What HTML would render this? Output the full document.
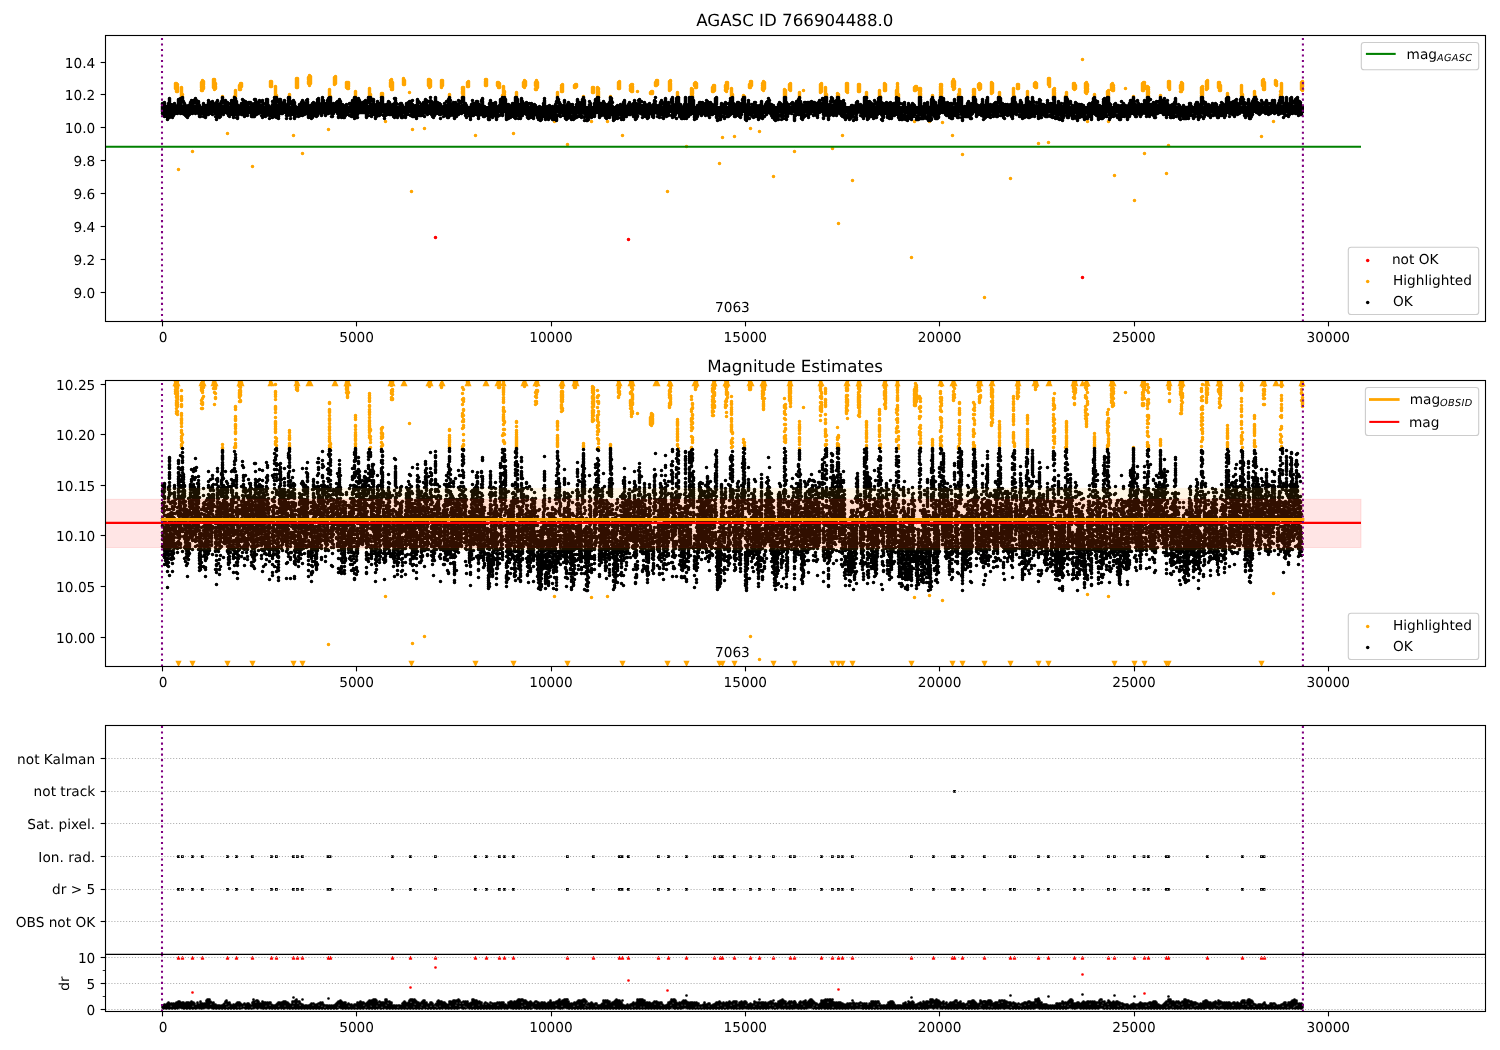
<!DOCTYPE html><html><head><meta charset="utf-8"><title>AGASC ID 766904488.0</title>
<style>html,body{margin:0;padding:0;background:#fff}svg{display:block}text{font-family:"DejaVu Sans","Liberation Sans",sans-serif;fill:#000;text-rendering:geometricPrecision}svg{will-change:transform}</style></head><body>
<svg width="1500" height="1050" viewBox="0 0 1500 1050">
<rect width="1500" height="1050" fill="#fff"/>
<defs>
<clipPath id="c1"><rect x="105.5" y="35.5" width="1380.0" height="286.0"/></clipPath>
<clipPath id="c2"><rect x="105.5" y="380.5" width="1380.0" height="286.0"/></clipPath>
<clipPath id="c3"><rect x="105.5" y="725.5" width="1380.0" height="228.9"/></clipPath>
<clipPath id="c4"><rect x="105.5" y="954.4" width="1380.0" height="57.1"/></clipPath>
</defs>
<g clip-path="url(#c1)">
<path transform="translate(.5 .5)" d="M435 237h0m193 2h0m454 38h0" stroke="#f00" stroke-width="3.6" stroke-linecap="round" fill="none"/>
<path transform="translate(.5 .5)" d="M175 83h0m0 1h0m0 1h0m0 1h0m0 1h0m0 1h0m1-5h0m0 1h0m0 1h0m0 1h0m0 1h0m0 1h0m0 1h0m0 1h0m0 1h0m1-7h0m0 2h0m0 1h0m0 1h0m0 1h0m0 1h0m0 1h0m1 78h0m3-82h0m0 1h0m0 1h0m0 1h0m0 1h0m0 1h0m0 1h0m0 1h0m0 1h0m0 1h0m1-2h0m0 2h0m10 55h0m9-69h0m0 1h0m0 1h0m0 1h0m0 1h0m0 1h0m0 2h0m0 1h0m1-10h0m0 1h0m0 1h0m0 1h0m0 1h0m0 1h0m0 1h0m0 1h0m0 1h0m0 1h0m0 1h0m1-9h0m0 1h0m0 1h0m0 1h0m0 2h0m0 1h0m0 1h0m10-9h0m0 1h0m0 1h0m0 1h0m0 1h0m0 1h0m0 1h0m0 1h0m0 1h0m1-8h0m0 1h0m0 1h0m0 1h0m0 1h0m0 1h0m0 1h0m0 1h0m0 1h0m0 1h0m0 1h0m1-6h0m0 1h0m0 2h0m0 1h0m0 1h0m7 8h0m0 1h0m5 36h0m7-37h0m1-6h0m0 1h0m0 1h0m0 1h0m0 1h0m0 1h0m0 1h0m4-11h0m0 1h0m0 1h0m0 1h0m0 1h0m1-6h0m0 1h0m0 1h0m0 1h0m0 1h0m0 1h0m0 1h0m1-6h0m0 1h0m0 1h0m0 1h0m11 80h0m18-85h0m0 1h0m0 1h0m0 1h0m0 1h0m0 1h0m1-5h0m0 1h0m0 1h0m0 1h0m0 1h0m0 1h0m4 0h0m0 1h0m0 1h0m0 1h0m0 1h0m0 1h0m0 1h0m0 1h0m0 1h0m0 1h0m0 1h0m1-1h0m0 1h0m13-2h0m0 1h0m0 1h0m4 39h0m3-57h0m0 1h0m0 1h0m0 1h0m0 1h0m0 1h0m0 1h0m0 1h0m0 1h0m0 1h0m1-9h0m0 1h0m0 1h0m0 1h0m0 1h0m0 1h0m0 1h0m0 1h0m0 1h0m0 1h0m5 66h0m6-76h0m0 1h0m0 1h0m0 2h0m0 1h0m0 1h0m1-8h0m0 1h0m0 1h0m0 1h0m0 1h0m0 1h0m0 1h0m0 1h0m0 1h0m0 2h0m1-9h0m0 1h0m0 1h0m0 1h0m0 1h0m0 1h0m0 1h0m0 1h0m18 46h0m1-40h0m0 1h0m0 1h0m0 1h0m0 1h0m0 1h0m0 1h0m0 1h0m1 0h0m4-19h0m0 1h0m0 1h0m0 1h0m0 1h0m0 1h0m0 1h0m0 1h0m1-8h0m0 1h0m0 1h0m0 1h0m0 1h0m0 1h0m0 1h0m0 1h0m11-1h0m0 1h0m0 1h0m0 1h0m0 1h0m0 1h0m1-5h0m0 1h0m0 1h0m0 1h0m0 1h0m0 1h0m0 1h0m1-6h0m0 1h0m0 1h0m0 1h0m0 1h0m0 2h0m7 3h0m0 1h0m0 1h0m0 1h0m0 1h0m0 1h0m14-8h0m0 1h0m0 1h0m0 1h0m0 1h0m0 1h0m0 1h0m0 1h0m0 2h0m1-3h0m0 1h0m0 1h0m0 1h0m11-4h0m0 1h0m0 1h0m0 1h0m1-3h0m0 1h0m0 1h0m0 1h0m3 25h0m5-41h0m0 2h0m0 1h0m0 1h0m0 1h0m0 1h0m1-7h0m0 1h0m0 1h0m0 1h0m0 1h0m0 1h0m0 1h0m0 1h0m0 1h0m0 1h0m0 1h0m1-7h0m0 1h0m0 1h0m0 1h0m0 1h0m0 1h0m0 1h0m0 1h0m11-11h0m0 1h0m0 1h0m0 1h0m0 1h0m0 1h0m0 1h0m1-4h0m0 1h0m0 1h0m0 1h0m0 1h0m5 8h0m2 99h0m1-62h0m12-1h0m4-49h0m0 1h0m0 1h0m0 1h0m0 1h0m0 1h0m0 1h0m1-6h0m0 1h0m0 1h0m0 1h0m0 1h0m0 1h0m0 1h0m0 1h0m0 1h0m1-7h0m0 1h0m0 1h0m0 1h0m0 1h0m0 1h0m0 1h0m11-6h0m0 1h0m0 1h0m0 1h0m0 1h0m0 1h0m0 1h0m0 1h0m1-7h0m0 1h0m0 1h0m0 1h0m0 1h0m0 1h0m7 9h0m0 1h0m0 1h0m0 1h0m13-10h0m0 1h0m0 1h0m0 2h0m0 1h0m0 1h0m0 3h0m0 1h0m1-10h0m0 1h0m0 1h0m0 1h0m0 1h0m0 1h0m0 1h0m0 1h0m0 1h0m0 1h0m4-14h0m0 1h0m0 1h0m0 1h0m0 1h0m1-5h0m0 1h0m0 1h0m0 1h0m0 1h0m0 1h0m7 49h0m10-56h0m0 2h0m0 1h0m0 1h0m0 1h0m0 1h0m1-6h0m0 1h0m0 1h0m0 1h0m0 1h0m0 1h0m0 1h0m11-3h0m0 1h0m0 1h0m0 1h0m1-3h0m0 1h0m0 1h0m0 1h0m0 1h0m0 1h0m1-4h0m0 1h0m0 1h0m0 1h0m0 1h0m3 8h0m1-9h0m0 1h0m0 1h0m0 1h0m0 1h0m0 1h0m0 1h0m0 1h0m0 1h0m0 1h0m0 1h0m1-5h0m0 1h0m0 2h0m0 2h0m9 37h0m3-41h0m0 1h0m0 1h0m0 1h0m0 1h0m7-14h0m0 1h0m0 1h0m0 1h0m0 1h0m1-6h0m0 1h0m0 1h0m0 1h0m0 1h0m0 1h0m0 1h0m0 1h0m1-6h0m0 1h0m0 1h0m0 1h0m0 1h0m10-3h0m0 1h0m0 1h0m0 1h0m0 3h0m0 1h0m1-9h0m0 1h0m0 1h0m0 1h0m0 1h0m0 1h0m0 1h0m0 1h0m0 1h0m0 1h0m1-7h0m0 1h0m0 1h0m0 1h0m0 1h0m0 1h0m17 34h0m3-29h0m0 1h0m0 1h0m0 1h0m0 1h0m4-11h0m0 2h0m0 1h0m0 1h0m0 1h0m0 1h0m1-7h0m0 1h0m0 1h0m0 1h0m0 1h0m0 1h0m0 1h0m0 1h0m5 53h0m7-59h0m0 1h0m0 1h0m1-3h0m0 1h0m0 1h0m0 1h0m1-3h0m0 1h0m0 1h0m7 10h0m8 25h0m1-34h0m0 1h0m0 1h0m0 1h0m0 1h0m0 1h0m1-5h0m0 1h0m0 1h0m0 1h0m0 1h0m0 1h0m4-5h0m0 1h0m0 1h0m0 1h0m0 1h0m0 1h0m0 1h0m0 1h0m0 1h0m0 2h0m1-9h0m0 1h0m0 2h0m0 1h0m0 1h0m0 1h0m0 1h0m0 1h0m0 1h0m9 24h0m3-25h0m0 1h0m8-15h0m0 1h0m0 1h0m0 1h0m0 1h0m0 1h0m0 1h0m1-7h0m0 1h0m0 1h0m0 1h0m0 1h0m0 1h0m0 1h0m0 1h0m3 47h0m8-50h0m0 1h0m0 2h0m0 1h0m0 1h0m1-6h0m0 1h0m0 1h0m0 1h0m0 1h0m0 1h0m0 1h0m0 1h0m1-7h0m0 2h0m0 1h0m0 1h0m0 1h0m0 1h0m0 1h0m5 0h0m13 1h0m0 1h0m1-2h0m0 1h0m0 1h0m1-2h0m0 1h0m0 1h0m3-11h0m0 1h0m0 1h0m0 1h0m1-5h0m0 1h0m0 1h0m0 1h0m0 1h0m0 1h0m1-5h0m0 1h0m0 1h0m0 1h0m0 1h0m10 107h0m2-110h0m0 1h0m0 1h0m0 1h0m0 1h0m0 1h0m0 1h0m0 1h0m0 1h0m0 1h0m1-10h0m0 1h0m0 2h0m0 1h0m0 1h0m0 1h0m0 1h0m0 1h0m0 1h0m7 3h0m0 1h0m0 1h0m0 1h0m0 1h0m1 1h0m8 49h0m5-58h0m0 1h0m0 1h0m0 1h0m0 1h0m0 1h0m0 1h0m0 1h0m0 1h0m0 1h0m1-8h0m0 1h0m0 1h0m0 1h0m0 1h0m0 2h0m0 1h0m2-13h0m0 1h0m0 1h0m1-3h0m0 1h0m0 1h0m0 1h0m0 1h0m0 1h0m1-4h0m0 1h0m0 1h0m0 1h0m0 1h0m16 0h0m0 1h0m0 1h0m0 1h0m0 1h0m1-6h0m0 1h0m0 1h0m0 1h0m0 1h0m0 1h0m0 1h0m1-6h0m0 1h0m0 1h0m0 1h0m0 1h0m0 1h0m5 73h0m3-26h0m3-52h0m0 1h0m0 1h0m0 2h0m0 1h0m1-8h0m0 1h0m0 1h0m0 1h0m0 1h0m0 1h0m0 1h0m0 1h0m0 1h0m0 1h0m1-9h0m0 1h0m0 1h0m0 1h0m0 1h0m0 1h0m0 1h0m4 0h0m0 1h0m0 1h0m0 1h0m0 1h0m0 1h0m0 1h0m0 1h0m0 1h0m1-2h0m0 1h0m0 1h0m2 40h0m9-41h0m0 1h0m1 0h0m5-12h0m0 1h0m0 1h0m0 1h0m1-6h0m0 1h0m0 1h0m0 1h0m0 1h0m0 1h0m0 1h0m0 41h0m1-47h0m0 1h0m0 1h0m0 1h0m0 1h0m8 46h0m3-48h0m0 2h0m0 2h0m0 1h0m0 1h0m1-8h0m0 1h0m0 2h0m0 1h0m0 1h0m0 1h0m0 1h0m0 1h0m0 1h0m1-8h0m0 1h0m0 1h0m0 1h0m0 1h0m0 1h0m0 1h0m9 88h0m11-87h0m0 1h0m0 1h0m0 1h0m0 1h0m0 1h0m0 1h0m0 1h0m1-6h0m0 1h0m0 1h0m0 1h0m0 1h0m0 1h0m0 1h0m4-12h0m0 1h0m0 1h0m0 1h0m0 1h0m0 1h0m1-6h0m0 1h0m0 1h0m0 1h0m0 1h0m0 1h0m0 1h0m0 1h0m4 61h0m5-59h0m0 1h0m0 1h0m0 1h0m0 1h0m0 1h0m4-7h0m17-6h0m0 1h0m0 1h0m0 1h0m0 1h0m0 1h0m0 1h0m0 1h0m0 1h0m1-9h0m0 1h0m0 1h0m0 1h0m0 1h0m0 1h0m0 1h0m0 1h0m0 1h0m4-4h0m0 1h0m0 1h0m0 1h0m0 1h0m0 1h0m0 1h0m0 1h0m0 1h0m0 1h0m1-2h0m0 1h0m0 1h0m6 52h0m5-55h0m0 2h0m0 1h0m1-2h0m0 1h0m0 1h0m0 127h0m4-88h0m4-52h0m0 1h0m0 1h0m0 1h0m0 1h0m0 1h0m0 1h0m0 1h0m0 1h0m1-8h0m0 1h0m0 1h0m0 1h0m0 1h0m0 1h0m0 1h0m0 1h0m0 2h0m5 88h0m6-96h0m0 1h0m0 1h0m0 1h0m0 1h0m0 1h0m0 1h0m0 1h0m1-7h0m0 1h0m0 1h0m0 1h0m0 1h0m0 1h0m0 1h0m0 1h0m7 1h0m0 1h0m0 1h0m0 1h0m0 1h0m13-6h0m0 1h0m0 1h0m0 1h0m0 1h0m0 1h0m0 1h0m1 0h0m0 1h0m4-14h0m0 1h0m0 1h0m0 1h0m0 1h0m0 1h0m0 1h0m0 1h0m1-6h0m0 1h0m0 1h0m0 1h0m0 1h0m0 1h0m0 1h0m11 0h0m0 1h0m0 1h0m0 1h0m0 1h0m0 1h0m1-12h0m0 1h0m0 2h0m0 1h0m0 1h0m0 1h0m0 1h0m0 1h0m0 1h0m0 1h0m1 1h0m0 1h0m0 1h0m0 1h0m13 160h0m3-170h0m0 1h0m0 1h0m0 1h0m0 31h0m1-35h0m0 1h0m0 1h0m0 1h0m0 1h0m1-4h0m0 1h0m0 1h0m0 1h0m3-1h0m0 2h0m0 1h0m0 1h0m0 1h0m0 1h0m0 2h0m1-8h0m0 1h0m0 1h0m0 1h0m0 2h0m0 1h0m0 1h0m0 1h0m9 25h0m3-26h0m0 1h0m8-12h0m0 2h0m0 1h0m0 1h0m0 1h0m0 1h0m0 2h0m0 2h0m0 1h0m0 1h0m1-12h0m0 1h0m0 1h0m0 2h0m0 1h0m0 1h0m0 1h0m0 1h0m0 1h0m0 2h0m0 1h0m1 26h0m10-41h0m0 1h0m0 1h0m0 1h0m0 2h0m0 49h0m1-56h0m0 1h0m0 1h0m0 1h0m0 1h0m0 1h0m0 1h0m0 1h0m0 1h0m0 1h0m0 1h0m1-8h0m0 1h0m0 1h0m0 1h0m0 1h0m0 2h0m0 1h0m4 6h0m0 2h0m0 1h0m1-8h0m0 1h0m0 1h0m0 1h0m0 1h0m0 1h0m0 1h0m0 1h0m0 1h0m3 57h0m11-65h0m0 1h0m0 1h0m0 1h0m0 2h0m0 1h0m0 1h0m0 1h0m1-8h0m0 1h0m0 1h0m0 1h0m0 1h0m0 1h0m0 2h0m4-12h0m0 1h0m0 1h0m0 1h0m1-4h0m0 1h0m0 1h0m0 1h0m0 1h0m0 1h0m0 1h0m1-5h0m0 1h0m0 1h0m0 1h0m0 1h0m4 209h0m7-215h0m0 1h0m0 1h0m0 1h0m0 1h0m0 1h0m0 1h0m0 1h0m0 1h0m0 1h0m0 1h0m0 1h0m1-10h0m0 1h0m0 1h0m0 1h0m0 1h0m0 1h0m0 1h0m0 1h0m0 1h0m0 1h0m7 0h0m0 1h0m0 1h0m0 1h0m0 1h0m11 82h0m3-90h0m0 1h0m0 1h0m0 1h0m0 1h0m0 1h0m0 1h0m0 1h0m0 1h0m1 0h0m3-12h0m0 1h0m0 1h0m0 1h0m0 1h0m1-4h0m0 1h0m0 1h0m0 1h0m0 1h0m9 3h0m0 1h0m0 1h0m0 1h0m0 1h0m0 1h0m0 1h0m7-14h0m0 1h0m0 1h0m0 1h0m1-4h0m0 1h0m0 1h0m0 1h0m0 1h0m0 1h0m1-4h0m0 1h0m0 1h0m0 1h0m0 1h0m2 56h0m10-65h0m0 1h0m0 1h0m0 1h0m0 1h0m0 1h0m0 1h0m0 58h0m1-64h0m0 1h0m0 1h0m0 1h0m0 1h0m0 1h0m0 1h0m0 1h0m0 1h0m4 3h0m0 1h0m0 1h0m0 1h0m0 1h0m0 1h0m0 1h0m0 1h0m1-8h0m0 2h0m0 2h0m0 1h0m0 1h0m0 1h0m0 1h0m11 0h0m1-4h0m0 1h0m0 1h0m0 1h0m0 1h0m0 1h0m7-14h0m0 1h0m0 1h0m0 1h0m0 1h0m0 1h0m1-5h0m0 1h0m0 1h0m0 1h0m0 1h0m0 1h0m0 1h0m1-4h0m0 1h0m0 1h0m0 1h0m7-29h0m3 24h0m0 1h0m0 1h0m0 1h0m0 1h0m0 1h0m0 2h0m0 1h0m0 1h0m1-10h0m0 1h0m0 1h0m0 1h0m0 1h0m0 1h0m0 1h0m0 1h0m0 1h0m0 1h0m0 1h0m0 1h0m1-9h0m0 1h0m0 1h0m0 2h0m0 1h0m0 2h0m0 30h0m7-27h0m0 1h0m0 1h0m13-5h0m0 1h0m0 1h0m0 1h0m0 2h0m0 1h0m1-7h0m0 2h0m0 1h0m0 1h0m0 1h0m0 1h0m0 25h0m3-37h0m0 1h0m0 1h0m0 1h0m0 1h0m0 1h0m1-6h0m0 1h0m0 1h0m0 1h0m0 1h0m0 1h0m0 1h0m0 1h0m1-5h0m0 2h0m0 1h0m0 1h0m0 1h0m1 85h0m11-87h0m8 8h0m1 104h0m8-117h0m0 1h0m0 1h0m0 1h0m0 1h0m0 1h0m0 1h0m0 1h0m1-8h0m0 1h0m0 1h0m0 1h0m0 1h0m0 1h0m0 1h0m0 1h0m0 1h0m1-8h0m0 2h0m0 1h0m0 1h0m0 1h0m0 1h0m0 65h0m3-67h0m0 1h0m0 2h0m0 1h0m0 1h0m0 1h0m0 1h0m0 1h0m0 1h0m0 1h0m1-9h0m0 2h0m0 2h0m0 1h0m0 1h0m0 2h0m0 1h0m12-1h0m0 1h0m6 77h0m2-92h0m0 1h0m0 1h0m0 1h0m0 1h0m0 1h0m0 1h0m0 58h0m1-64h0m0 1h0m0 1h0m0 1h0m0 1h0m0 1h0m0 1h0m0 1h0m0 1h0m11-4h0m0 1h0m0 1h0m0 1h0m0 3h0m1-9h0m0 1h0m0 2h0m0 1h0m0 1h0m0 1h0m0 1h0m0 1h0m0 1h0m1-8h0m0 1h0m0 1h0m0 1h0m0 1h0m0 1h0m0 1h0m19-2h0m0 1h0m0 1h0m0 1h0m0 1h0m0 1h0m0 1h0m0 2h0m0 1h0m1-10h0m0 2h0m0 1h0m0 1h0m0 1h0m0 1h0m0 1h0m0 1h0m0 1h0m4-14h0m0 1h0m0 1h0m0 1h0m0 1h0m0 1h0m0 1h0m0 1h0m0 1h0m1-9h0m0 1h0m0 1h0m0 1h0m0 1h0m0 1h0m0 1h0m0 1h0m0 1h0m11-6h0m0 1h0m0 1h0m0 1h0m0 1h0m0 1h0m1-5h0m0 1h0m0 1h0m0 1h0m0 1h0m0 1h0m0 1h0m0 1h0m0 1h0m1-5h0m0 1h0m0 1h0m0 1h0m0 1h0m0 1h0m7 3h0m0 1h0m0 1h0m0 1h0m14-11h0m0 1h0m0 1h0m0 1h0m0 1h0m0 1h0m0 1h0m0 1h0m0 1h0m0 2h0m0 1h0m1-2h0m0 1h0m0 1h0m12-5h0m0 1h0m0 1h0m0 1h0m0 1h0m0 1h0m1 0h0m6 40h0m1-56h0m0 1h0m0 1h0m0 1h0m0 1h0m0 1h0m1-6h0m0 1h0m0 1h0m0 1h0m0 1h0m0 1h0m0 1h0m0 2h0m0 1h0m0 1h0m1-7h0m0 1h0m0 1h0m0 1h0m0 1h0m0 1h0m0 1h0m0 1h0m9 32h0m2-41h0m0 1h0m0 1h0m0 1h0m0 1h0m1-3h0m0 2h0m0 1h0m0 1h0m4 6h0m0 3h0m0 1h0m0 1h0m1-13h0m0 1h0m0 1h0m0 1h0m0 1h0m0 1h0m0 1h0m0 1h0m0 1h0m0 1h0m0 1h0m0 2h0m0 1h0m20-14h0m0 1h0m0 1h0m0 1h0m0 1h0m0 1h0m0 1h0m0 1h0m1-8h0m0 1h0m0 1h0m0 1h0m0 1h0m0 1h0m0 2h0m0 1h0m0 1h0" stroke="#ffa500" stroke-width="3.6" stroke-linecap="round" fill="none"/>
<rect x="161.5" y="106" width="1142.5" height="7" fill="#000"/>
<path transform="translate(.5 .5)" d="M162 103h0m0 1h0m0 2h0m0 1h0m0 1h0m0 1h0m0 1h0m0 1h0m0 2h0m1-8h0m0 1h0m0 5h0m0 3h0m1-12h0m0 1h0m0 1h0m0 2h0m0 5h0m0 5h0m1-8h0m0 2h0m0 3h0m0 1h0m1-8h0m0 4h0m0 5h0m1-6h0m0 2h0m0 4h0m0 1h0m0 1h0m0 2h0m1-16h0m0 2h0m0 2h0m0 5h0m0 2h0m0 2h0m1-18h0m0 1h0m0 1h0m0 1h0m0 2h0m0 1h0m0 4h0m0 5h0m0 4h0m1-11h0m0 2h0m0 1h0m0 3h0m0 1h0m0 1h0m0 1h0m1-11h0m0 4h0m0 2h0m0 2h0m0 2h0m0 1h0m1-9h0m0 4h0m0 5h0m0 2h0m1-7h0m0 4h0m0 1h0m1-12h0m0 1h0m0 1h0m0 1h0m0 4h0m0 2h0m1-7h0m0 3h0m0 1h0m0 4h0m2-6h0m0 4h0m0 1h0m0 1h0m1-14h0m0 1h0m0 1h0m0 1h0m0 1h0m0 2h0m0 3h0m0 2h0m1-8h0m0 3h0m0 3h0m0 2h0m1-12h0m0 3h0m0 1h0m0 2h0m0 1h0m0 1h0m0 1h0m0 5h0m0 1h0m2-16h0m0 1h0m0 1h0m0 1h0m0 1h0m0 6h0m0 3h0m0 3h0m1-12h0m0 1h0m0 3h0m0 6h0m1-8h0m0 1h0m0 3h0m0 2h0m0 4h0m0 1h0m1-9h0m0 1h0m0 9h0m1-8h0m0 3h0m0 3h0m0 3h0m1-9h0m0 3h0m0 7h0m1-12h0m0 2h0m0 6h0m0 2h0m1-10h0m0 5h0m0 2h0m0 1h0m0 1h0m1-12h0m0 1h0m0 1h0m0 2h0m0 3h0m1-9h0m0 2h0m0 4h0m0 1h0m1-6h0m0 5h0m0 1h0m0 3h0m0 3h0m1-13h0m0 2h0m0 1h0m0 7h0m0 1h0m1-11h0m0 6h0m0 4h0m0 1h0m1-13h0m0 2h0m0 1h0m0 5h0m0 2h0m0 5h0m1-13h0m0 3h0m0 9h0m1-6h0m0 1h0m0 2h0m1-8h0m0 1h0m0 1h0m0 1h0m0 1h0m0 2h0m0 2h0m0 3h0m0 1h0m1-8h0m0 4h0m0 5h0m0 1h0m0 1h0m1-9h0m0 1h0m0 3h0m0 1h0m0 1h0m0 1h0m0 2h0m1-9h0m0 6h0m2-10h0m0 1h0m0 2h0m0 1h0m0 1h0m0 1h0m0 1h0m0 1h0m0 5h0m1-11h0m0 1h0m0 5h0m0 3h0m1 2h0m0 1h0m1-12h0m0 1h0m0 2h0m0 2h0m0 4h0m1-8h0m0 6h0m0 2h0m1-14h0m0 2h0m0 1h0m0 1h0m0 2h0m0 2h0m0 6h0m1-11h0m0 3h0m0 2h0m0 3h0m0 2h0m1-11h0m0 1h0m0 2h0m0 3h0m0 2h0m0 2h0m1-5h0m0 2h0m0 2h0m0 1h0m1-11h0m0 1h0m0 1h0m0 1h0m0 6h0m0 4h0m1-11h0m0 1h0m0 1h0m0 3h0m2-2h0m0 3h0m0 2h0m0 1h0m0 1h0m0 3h0m1-14h0m0 1h0m0 4h0m0 7h0m0 3h0m0 2h0m1-19h0m0 1h0m0 3h0m0 1h0m0 3h0m1-1h0m0 1h0m0 2h0m0 3h0m0 2h0m1-11h0m0 4h0m0 1h0m0 1h0m0 1h0m0 1h0m0 1h0m0 4h0m1-14h0m0 4h0m0 3h0m0 1h0m0 1h0m0 4h0m1-15h0m0 1h0m0 1h0m0 3h0m0 3h0m0 2h0m0 2h0m1-16h0m0 1h0m0 1h0m0 1h0m0 1h0m0 1h0m1 4h0m0 2h0m0 6h0m1-11h0m0 4h0m0 4h0m0 1h0m1-12h0m0 3h0m0 3h0m0 3h0m0 1h0m1-8h0m0 2h0m0 1h0m0 7h0m1-10h0m0 2h0m0 6h0m0 3h0m1-10h0m0 3h0m0 1h0m0 7h0m0 1h0m1-5h0m0 1h0m0 5h0m1-7h0m0 1h0m0 4h0m1-14h0m0 2h0m0 1h0m0 1h0m0 1h0m0 1h0m1-6h0m0 2h0m0 6h0m0 1h0m0 4h0m1-11h0m0 3h0m0 6h0m0 3h0m0 1h0m0 2h0m1-20h0m0 2h0m0 6h0m0 3h0m0 1h0m0 2h0m0 2h0m1-15h0m0 1h0m1 2h0m0 1h0m0 1h0m0 3h0m0 1h0m0 4h0m0 3h0m0 3h0m1-12h0m0 4h0m0 4h0m0 2h0m0 1h0m0 1h0m0 1h0m1-13h0m0 1h0m0 3h0m0 4h0m0 1h0m1-7h0m0 3h0m2-7h0m0 2h0m0 3h0m0 4h0m0 2h0m1-15h0m0 5h0m0 2h0m0 4h0m0 1h0m0 1h0m0 2h0m1-14h0m0 1h0m0 1h0m0 3h0m0 1h0m0 3h0m1-3h0m0 9h0m0 1h0m1-15h0m0 2h0m0 5h0m0 2h0m0 1h0m0 2h0m1-9h0m0 5h0m0 5h0m1-10h0m0 2h0m0 1h0m0 2h0m0 5h0m0 1h0m1-13h0m0 1h0m0 9h0m1-10h0m0 7h0m1-7h0m0 1h0m0 1h0m0 3h0m0 2h0m1-6h0m0 2h0m0 3h0m0 1h0m0 2h0m0 1h0m0 1h0m0 1h0m0 1h0m0 1h0m1-9h0m0 2h0m0 2h0m0 2h0m0 1h0m0 2h0m1-8h0m0 1h0m0 6h0m0 1h0m1-17h0m0 4h0m0 1h0m0 1h0m0 5h0m0 1h0m0 1h0m0 4h0m1-17h0m0 1h0m0 2h0m0 3h0m0 2h0m0 1h0m1 3h0m0 3h0m1-12h0m0 2h0m0 2h0m0 4h0m0 2h0m1-1h0m0 1h0m0 1h0m1-13h0m0 2h0m0 3h0m0 2h0m0 2h0m1-4h0m0 3h0m0 3h0m1-6h0m0 6h0m0 1h0m0 3h0m1-15h0m0 2h0m0 6h0m0 3h0m0 1h0m0 1h0m0 4h0m1-14h0m0 3h0m0 2h0m0 4h0m0 4h0m2-9h0m0 3h0m0 3h0m0 1h0m0 2h0m1-17h0m0 2h0m0 1h0m0 1h0m0 1h0m0 2h0m0 6h0m0 2h0m0 1h0m1-16h0m0 1h0m0 1h0m0 1h0m0 1h0m0 3h0m0 2h0m0 1h0m1-4h0m0 1h0m0 5h0m0 2h0m1-7h0m0 2h0m0 3h0m0 2h0m0 2h0m0 3h0m3-17h0m0 3h0m0 2h0m0 2h0m0 1h0m0 1h0m0 2h0m0 1h0m0 2h0m0 1h0m0 1h0m1-12h0m0 1h0m0 2h0m1-11h0m0 2h0m0 1h0m0 1h0m0 1h0m0 3h0m0 2h0m0 3h0m0 3h0m0 1h0m0 2h0m1-19h0m1 0h0m0 1h0m0 1h0m0 1h0m0 1h0m0 3h0m0 5h0m0 3h0m0 2h0m0 1h0m0 2h0m1-10h0m0 6h0m1-4h0m0 2h0m0 3h0m0 1h0m0 1h0m0 2h0m1-19h0m0 1h0m0 2h0m0 2h0m0 1h0m0 2h0m0 4h0m1-12h0m0 1h0m0 5h0m0 1h0m1-4h0m0 5h0m0 3h0m0 1h0m0 1h0m0 1h0m1-10h0m0 3h0m0 3h0m0 2h0m0 2h0m1-10h0m0 4h0m1-7h0m0 2h0m0 3h0m1-1h0m0 1h0m0 1h0m0 1h0m0 1h0m0 2h0m0 2h0m1-3h0m0 3h0m0 1h0m0 2h0m0 3h0m1-10h0m0 3h0m0 2h0m0 2h0m1-18h0m0 1h0m0 2h0m0 1h0m0 1h0m0 1h0m0 2h0m0 6h0m1-14h0m0 1h0m0 1h0m0 1h0m1 3h0m0 4h0m0 3h0m0 3h0m0 1h0m0 1h0m0 3h0m1-7h0m0 3h0m1-13h0m0 4h0m0 2h0m0 1h0m0 1h0m1-9h0m0 2h0m0 1h0m0 4h0m0 1h0m0 2h0m0 2h0m1-10h0m0 1h0m0 1h0m0 1h0m0 1h0m0 1h0m0 2h0m0 3h0m0 2h0m0 1h0m0 2h0m0 1h0m1-12h0m0 1h0m0 3h0m0 2h0m0 1h0m0 3h0m3-9h0m0 1h0m0 2h0m0 3h0m0 1h0m0 1h0m0 1h0m1-12h0m0 1h0m0 1h0m0 6h0m0 2h0m1-10h0m0 1h0m0 6h0m0 1h0m0 3h0m1-13h0m0 3h0m0 3h0m0 6h0m1-14h0m0 6h0m0 5h0m0 4h0m1-13h0m0 1h0m0 4h0m0 1h0m0 5h0m1-9h0m0 2h0m0 4h0m0 4h0m1-11h0m0 4h0m0 1h0m0 1h0m0 2h0m1-11h0m0 4h0m0 6h0m0 3h0m1-14h0m0 2h0m0 1h0m0 1h0m0 1h0m0 3h0m1 1h0m0 1h0m0 3h0m0 1h0m0 1h0m0 1h0m0 1h0m0 1h0m2-12h0m0 4h0m0 1h0m0 3h0m1-5h0m0 6h0m0 2h0m0 2h0m1-15h0m0 5h0m0 1h0m0 2h0m0 2h0m0 2h0m0 1h0m0 1h0m1-15h0m0 3h0m0 1h0m0 2h0m0 5h0m1-10h0m0 2h0m0 2h0m0 8h0m1-7h0m0 3h0m0 4h0m1-9h0m0 4h0m0 4h0m0 1h0m0 1h0m1-17h0m0 2h0m0 1h0m0 2h0m0 2h0m0 1h0m0 5h0m0 1h0m0 2h0m1-17h0m0 1h0m0 1h0m0 1h0m0 2h0m1 3h0m0 2h0m0 1h0m0 2h0m0 1h0m1-7h0m0 2h0m0 5h0m0 1h0m1-10h0m0 10h0m0 1h0m0 1h0m1-18h0m0 2h0m0 1h0m0 1h0m0 2h0m0 5h0m0 1h0m1-9h0m0 2h0m0 1h0m0 3h0m0 4h0m0 1h0m0 1h0m1-9h0m0 1h0m0 1h0m0 2h0m0 1h0m1-5h0m0 4h0m0 6h0m0 1h0m0 1h0m1-12h0m0 2h0m0 4h0m0 3h0m1-12h0m0 2h0m0 5h0m0 1h0m0 1h0m0 3h0m0 1h0m1-15h0m0 1h0m0 1h0m0 3h0m0 2h0m0 1h0m0 7h0m1-16h0m1 0h0m0 1h0m0 1h0m0 1h0m0 1h0m0 1h0m0 2h0m0 1h0m0 4h0m0 1h0m0 1h0m1-4h0m0 1h0m0 1h0m0 4h0m0 3h0m1-12h0m0 2h0m0 8h0m0 2h0m1-13h0m0 2h0m0 2h0m0 3h0m0 2h0m0 1h0m3-11h0m0 1h0m0 1h0m0 1h0m0 1h0m0 3h0m0 1h0m0 1h0m1-10h0m0 8h0m0 3h0m0 1h0m1-9h0m0 3h0m0 7h0m0 2h0m0 1h0m1-18h0m0 1h0m0 1h0m0 2h0m0 7h0m1-9h0m0 2h0m0 1h0m0 1h0m0 3h0m0 4h0m1-3h0m0 1h0m0 3h0m0 1h0m0 2h0m0 1h0m1-13h0m0 1h0m0 8h0m0 2h0m1-7h0m0 4h0m0 5h0m1-7h0m0 4h0m0 1h0m0 1h0m0 1h0m1-12h0m0 1h0m0 1h0m0 2h0m0 6h0m1-11h0m0 2h0m0 5h0m0 1h0m2-4h0m0 3h0m0 3h0m1-11h0m0 3h0m0 1h0m0 8h0m1-12h0m0 2h0m0 3h0m0 3h0m0 3h0m1-6h0m0 3h0m0 3h0m0 1h0m0 1h0m1-16h0m0 1h0m0 1h0m0 3h0m0 6h0m0 3h0m0 1h0m1-12h0m0 2h0m0 1h0m0 2h0m0 3h0m0 4h0m0 1h0m1-19h0m0 1h0m0 1h0m0 6h0m0 4h0m0 1h0m0 2h0m0 3h0m0 3h0m1-21h0m0 2h0m0 2h0m1 0h0m0 2h0m0 3h0m0 1h0m0 1h0m0 2h0m0 2h0m0 1h0m0 3h0m0 1h0m1-8h0m0 3h0m0 1h0m0 1h0m0 3h0m1-19h0m0 1h0m0 1h0m0 4h0m0 5h0m0 3h0m1-12h0m0 1h0m0 1h0m0 2h0m0 2h0m0 1h0m0 5h0m1-7h0m0 1h0m0 4h0m0 2h0m1-4h0m0 4h0m1-10h0m0 2h0m0 3h0m0 5h0m1-10h0m0 6h0m0 2h0m0 2h0m1-11h0m0 1h0m0 4h0m0 3h0m0 3h0m1-12h0m0 2h0m0 2h0m1 0h0m0 3h0m0 1h0m0 2h0m0 1h0m0 3h0m0 1h0m0 1h0m0 1h0m1-5h0m0 1h0m1-16h0m0 1h0m0 2h0m0 1h0m0 1h0m0 4h0m0 3h0m0 3h0m0 3h0m1-18h0m1 0h0m0 1h0m0 2h0m0 3h0m0 2h0m0 6h0m1-3h0m0 5h0m0 2h0m0 1h0m1-17h0m0 1h0m0 3h0m0 1h0m0 2h0m0 4h0m0 3h0m1-14h0m0 1h0m0 1h0m0 1h0m0 1h0m0 2h0m0 1h0m0 1h0m1-3h0m0 2h0m0 3h0m0 5h0m1-2h0m0 3h0m0 2h0m0 1h0m1-13h0m0 2h0m0 1h0m0 3h0m0 1h0m0 2h0m0 2h0m1-15h0m0 2h0m0 1h0m0 3h0m1-4h0m0 8h0m0 1h0m0 3h0m1-7h0m0 7h0m1-12h0m0 2h0m0 1h0m0 2h0m0 1h0m0 1h0m0 2h0m0 2h0m1-17h0m0 2h0m0 1h0m0 1h0m1-4h0m0 1h0m0 1h0m0 1h0m0 1h0m0 1h0m0 1h0m0 1h0m1 0h0m0 1h0m0 1h0m0 3h0m0 2h0m0 3h0m0 1h0m1-7h0m0 1h0m0 2h0m0 1h0m0 6h0m1-11h0m0 1h0m0 2h0m0 1h0m0 2h0m0 2h0m1-11h0m0 1h0m0 7h0m1-5h0m0 3h0m0 1h0m0 3h0m1-13h0m0 1h0m0 6h0m0 1h0m1-7h0m0 2h0m0 3h0m0 1h0m0 2h0m0 4h0m1-9h0m0 7h0m0 2h0m2-10h0m0 3h0m0 1h0m0 1h0m0 3h0m1-4h0m0 1h0m0 4h0m0 1h0m0 1h0m0 1h0m1-18h0m0 5h0m0 7h0m0 1h0m0 2h0m0 2h0m0 2h0m1-19h0m0 2h0m0 1h0m0 1h0m0 1h0m0 2h0m0 1h0m1-3h0m0 1h0m0 3h0m0 4h0m0 4h0m1-8h0m0 2h0m0 5h0m0 1h0m0 2h0m1-10h0m0 3h0m0 3h0m0 2h0m1-11h0m0 10h0m1-11h0m0 5h0m0 2h0m0 2h0m1-9h0m0 2h0m0 3h0m0 3h0m0 4h0m0 2h0m1-12h0m0 3h0m0 3h0m0 1h0m0 3h0m0 1h0m0 1h0m3-10h0m0 2h0m0 1h0m0 3h0m0 2h0m0 2h0m1-14h0m0 1h0m0 1h0m0 2h0m1-1h0m0 1h0m0 3h0m0 1h0m0 1h0m0 2h0m1-12h0m0 1h0m1-2h0m0 1h0m0 1h0m0 3h0m0 1h0m1-6h0m0 8h0m0 2h0m0 3h0m0 1h0m1-12h0m0 1h0m0 1h0m0 5h0m0 1h0m1-11h0m0 4h0m0 2h0m0 6h0m0 2h0m0 2h0m1-9h0m0 1h0m0 3h0m0 5h0m1-10h0m0 1h0m1-2h0m0 1h0m0 4h0m0 2h0m0 2h0m1-6h0m0 5h0m0 3h0m0 1h0m0 1h0m1-19h0m0 1h0m0 1h0m0 1h0m0 2h0m0 3h0m0 1h0m0 1h0m0 2h0m0 2h0m1-12h0m0 1h0m1 0h0m0 4h0m0 5h0m0 4h0m1-7h0m0 3h0m0 1h0m0 1h0m0 2h0m1-11h0m0 3h0m0 1h0m0 6h0m0 1h0m1-11h0m0 5h0m0 1h0m0 2h0m0 1h0m0 1h0m1-12h0m0 3h0m0 1h0m0 1h0m0 6h0m1-10h0m0 4h0m0 1h0m0 4h0m0 4h0m1-17h0m0 1h0m0 1h0m0 1h0m0 4h0m0 5h0m1-11h0m0 1h0m0 1h0m0 1h0m0 2h0m0 6h0m0 2h0m1-8h0m0 2h0m0 1h0m0 2h0m0 4h0m1-13h0m0 5h0m0 2h0m0 1h0m0 3h0m0 1h0m2-16h0m0 3h0m0 1h0m0 2h0m0 1h0m0 1h0m0 1h0m1-5h0m0 2h0m0 3h0m0 3h0m0 1h0m0 2h0m0 1h0m0 1h0m1-9h0m0 2h0m0 1h0m0 2h0m0 4h0m0 1h0m0 1h0m1-5h0m0 6h0m1-15h0m0 2h0m0 2h0m0 3h0m0 4h0m0 1h0m0 1h0m1-18h0m0 1h0m0 1h0m0 1h0m0 1h0m0 1h0m0 1h0m0 1h0m1-1h0m0 2h0m0 3h0m0 3h0m0 2h0m1-11h0m1 2h0m0 3h0m0 3h0m0 2h0m1-9h0m0 3h0m0 3h0m0 4h0m0 1h0m1-10h0m0 1h0m0 2h0m0 1h0m0 1h0m0 3h0m0 1h0m0 1h0m0 4h0m3-12h0m0 1h0m0 2h0m0 2h0m0 1h0m0 1h0m0 3h0m1-13h0m0 3h0m0 1h0m0 3h0m0 1h0m0 1h0m0 1h0m0 1h0m1-9h0m0 2h0m0 1h0m0 2h0m0 1h0m0 4h0m1-14h0m0 4h0m0 3h0m0 2h0m1 3h0m0 1h0m0 3h0m1-18h0m0 1h0m0 1h0m0 2h0m0 2h0m0 2h0m0 1h0m0 3h0m0 3h0m0 3h0m1-20h0m0 1h0m0 4h0m1-2h0m0 3h0m0 2h0m0 5h0m0 2h0m0 3h0m1-7h0m0 4h0m0 2h0m1-5h0m0 4h0m1-11h0m0 1h0m0 2h0m0 3h0m0 2h0m0 5h0m1-4h0m0 6h0m0 1h0m1-16h0m0 4h0m0 4h0m0 1h0m0 2h0m0 1h0m1-9h0m0 1h0m0 1h0m0 3h0m0 2h0m0 1h0m0 3h0m1-4h0m1-12h0m0 3h0m0 2h0m0 3h0m0 1h0m0 4h0m0 1h0m1-13h0m0 2h0m0 6h0m1-8h0m0 5h0m0 2h0m0 3h0m0 1h0m1-10h0m0 5h0m0 1h0m0 3h0m0 2h0m1-16h0m0 1h0m0 1h0m0 1h0m0 1h0m0 4h0m0 1h0m1-9h0m0 1h0m0 1h0m0 1h0m0 1h0m1 3h0m0 5h0m0 2h0m0 1h0m1-9h0m0 1h0m0 1h0m0 1h0m0 1h0m0 1h0m0 2h0m0 3h0m0 2h0m1-10h0m0 1h0m0 2h0m0 2h0m0 2h0m0 1h0m0 3h0m0 1h0m3-10h0m0 3h0m0 1h0m0 1h0m0 2h0m0 1h0m1-5h0m0 3h0m0 1h0m0 2h0m0 1h0m0 2h0m1-15h0m0 1h0m0 2h0m0 1h0m0 4h0m0 1h0m0 2h0m1-15h0m0 3h0m0 1h0m1 0h0m0 2h0m0 4h0m0 5h0m1-12h0m0 1h0m0 1h0m0 2h0m0 5h0m1-9h0m0 2h0m0 2h0m0 1h0m0 1h0m1-8h0m0 2h0m0 2h0m0 1h0m0 3h0m0 1h0m0 4h0m1-13h0m0 1h0m0 4h0m0 5h0m1-3h0m0 2h0m0 4h0m0 1h0m0 1h0m0 2h0m1-14h0m0 2h0m0 4h0m1-2h0m0 4h0m0 2h0m1-14h0m0 1h0m0 3h0m0 1h0m0 6h0m0 3h0m1-16h0m0 1h0m0 2h0m0 1h0m0 1h0m0 1h0m0 2h0m1 1h0m0 1h0m0 1h0m0 4h0m0 2h0m0 1h0m1-10h0m0 1h0m0 2h0m0 1h0m0 3h0m0 1h0m0 2h0m3-8h0m0 1h0m0 1h0m0 1h0m0 2h0m0 1h0m0 1h0m1-8h0m0 5h0m0 5h0m0 1h0m0 1h0m1-16h0m0 1h0m0 3h0m0 1h0m0 3h0m0 1h0m0 2h0m0 2h0m0 3h0m1-19h0m0 1h0m0 1h0m0 1h0m0 1h0m0 1h0m0 1h0m1-3h0m0 4h0m0 3h0m0 1h0m0 3h0m0 2h0m1-12h0m0 10h0m0 3h0m1-14h0m0 1h0m0 4h0m0 7h0m1-8h0m0 4h0m0 2h0m0 2h0m1-13h0m0 1h0m0 1h0m0 1h0m0 1h0m0 1h0m0 1h0m0 2h0m0 2h0m1-6h0m0 4h0m0 2h0m0 1h0m0 3h0m0 1h0m0 1h0m0 1h0m1-12h0m0 6h0m0 3h0m2-11h0m0 3h0m0 3h0m0 4h0m1-16h0m0 1h0m0 1h0m0 1h0m0 1h0m0 1h0m0 1h0m0 1h0m1-4h0m0 2h0m0 3h0m0 1h0m0 1h0m0 1h0m0 3h0m1-16h0m0 1h0m0 1h0m0 5h0m0 7h0m0 1h0m0 2h0m0 1h0m2-18h0m0 1h0m0 2h0m0 1h0m0 1h0m0 3h0m0 2h0m0 2h0m0 2h0m1-12h0m0 1h0m0 1h0m0 1h0m0 1h0m0 2h0m0 2h0m1-3h0m0 5h0m0 1h0m0 1h0m0 1h0m0 1h0m0 1h0m0 1h0m0 1h0m0 1h0m0 1h0m0 1h0m1-5h0m0 2h0m1-12h0m0 3h0m0 3h0m0 2h0m0 2h0m0 4h0m1-10h0m0 7h0m1-9h0m0 5h0m0 2h0m0 4h0m1-12h0m0 4h0m0 4h0m0 3h0m1-13h0m0 3h0m0 3h0m0 3h0m0 2h0m1-11h0m0 1h0m0 6h0m1-1h0m0 1h0m0 2h0m0 2h0m0 1h0m0 1h0m0 1h0m1-20h0m0 1h0m0 1h0m0 1h0m0 2h0m0 1h0m0 2h0m0 1h0m0 5h0m0 2h0m0 2h0m0 1h0m0 1h0m0 1h0m1-21h0m0 1h0m0 1h0m1 0h0m0 1h0m0 1h0m0 2h0m0 3h0m0 3h0m0 1h0m1-5h0m0 1h0m0 7h0m0 2h0m0 3h0m1-14h0m0 4h0m0 2h0m0 1h0m0 1h0m0 1h0m0 3h0m1-3h0m0 1h0m0 1h0m0 2h0m0 1h0m1-20h0m0 1h0m0 1h0m0 1h0m0 1h0m0 2h0m0 2h0m1-5h0m0 2h0m0 4h0m0 2h0m0 2h0m0 1h0m0 1h0m0 2h0m1-12h0m0 1h0m0 2h0m0 4h0m0 2h0m0 1h0m2-4h0m1-7h0m0 1h0m0 2h0m0 1h0m0 2h0m0 4h0m0 2h0m1-11h0m0 2h0m0 3h0m0 2h0m0 1h0m0 2h0m0 3h0m0 1h0m1-9h0m0 1h0m0 3h0m0 1h0m0 2h0m0 2h0m0 1h0m1-15h0m0 4h0m0 3h0m1 3h0m0 4h0m1-14h0m0 2h0m0 1h0m0 4h0m0 5h0m1-10h0m0 4h0m0 3h0m1-4h0m0 1h0m0 4h0m0 1h0m0 1h0m0 1h0m0 2h0m1-14h0m0 1h0m0 1h0m0 7h0m1-8h0m0 4h0m0 2h0m0 3h0m2-6h0m0 1h0m0 3h0m0 1h0m0 1h0m0 1h0m0 1h0m0 1h0m1-10h0m0 5h0m0 1h0m0 3h0m0 1h0m0 1h0m0 1h0m1-13h0m0 4h0m0 2h0m0 1h0m0 6h0m1 1h0m1-12h0m0 1h0m0 1h0m0 5h0m0 1h0m0 2h0m0 1h0m1-7h0m1-9h0m0 2h0m0 1h0m0 1h0m0 2h0m0 1h0m0 2h0m0 1h0m0 1h0m0 2h0m1-18h0m0 2h0m0 1h0m0 1h0m0 1h0m0 1h0m0 1h0m0 1h0m0 3h0m0 3h0m1 3h0m0 2h0m0 2h0m1-11h0m0 2h0m1-4h0m0 1h0m0 4h0m0 2h0m0 3h0m1-9h0m0 1h0m0 1h0m0 3h0m0 5h0m0 1h0m0 1h0m1-14h0m0 2h0m0 1h0m0 2h0m0 4h0m0 3h0m1-9h0m0 8h0m0 1h0m1-8h0m0 2h0m0 2h0m1-7h0m0 1h0m0 12h0m1-9h0m0 4h0m0 1h0m0 2h0m0 2h0m1-12h0m0 2h0m0 2h0m0 7h0m1-14h0m0 1h0m0 2h0m0 2h0m0 2h0m0 2h0m0 3h0m1-15h0m0 1h0m0 4h0m0 5h0m0 5h0m0 2h0m0 1h0m0 1h0m1-23h0m0 1h0m0 1h0m0 1h0m1-1h0m0 2h0m0 1h0m0 3h0m0 2h0m0 2h0m0 2h0m0 3h0m0 1h0m1-13h0m0 1h0m0 1h0m0 2h0m0 2h0m0 4h0m0 1h0m1-9h0m0 2h0m0 3h0m0 1h0m0 2h0m0 1h0m0 3h0m3-11h0m0 3h0m0 1h0m0 3h0m0 1h0m0 2h0m1-15h0m0 1h0m0 1h0m0 3h0m0 1h0m0 1h0m0 3h0m1-1h0m0 3h0m0 4h0m0 2h0m1-4h0m0 4h0m0 1h0m1-15h0m0 3h0m0 2h0m0 1h0m0 1h0m0 4h0m0 3h0m1-16h0m0 4h0m0 1h0m1-3h0m0 1h0m0 3h0m0 4h0m0 1h0m0 4h0m1-13h0m0 5h0m0 6h0m0 1h0m1-9h0m0 2h0m0 8h0m0 1h0m0 1h0m1-15h0m0 1h0m0 3h0m0 1h0m0 1h0m0 2h0m0 3h0m1-7h0m0 1h0m0 9h0m0 1h0m1-7h0m0 1h0m0 2h0m0 1h0m0 2h0m2-14h0m0 2h0m0 2h0m0 2h0m0 2h0m0 3h0m0 2h0m1-18h0m0 1h0m0 1h0m0 2h0m0 3h0m1-4h0m0 2h0m0 4h0m0 2h0m0 2h0m0 4h0m1-14h0m0 6h0m0 4h0m0 2h0m1-10h0m0 3h0m0 2h0m0 5h0m1-7h0m0 3h0m0 1h0m0 1h0m0 3h0m0 1h0m0 1h0m1-18h0m0 1h0m0 1h0m0 2h0m0 1h0m0 1h0m0 3h0m1-11h0m0 1h0m0 1h0m0 1h0m1 0h0m0 1h0m0 1h0m0 1h0m0 1h0m0 1h0m0 5h0m0 3h0m0 3h0m0 1h0m0 3h0m1-13h0m0 7h0m0 1h0m1-7h0m0 2h0m0 1h0m0 1h0m0 8h0m1-5h0m0 2h0m0 2h0m0 1h0m1-8h0m0 7h0m1-18h0m0 3h0m0 1h0m0 1h0m0 2h0m0 3h0m0 2h0m0 3h0m1-13h0m0 2h0m0 1h0m0 3h0m0 4h0m1-5h0m0 1h0m0 1h0m0 1h0m0 2h0m0 2h0m0 2h0m3-14h0m0 1h0m0 2h0m0 2h0m0 1h0m0 2h0m0 2h0m0 1h0m0 1h0m0 1h0m1-17h0m0 1h0m0 1h0m0 2h0m0 3h0m0 1h0m0 3h0m0 2h0m1-6h0m0 3h0m0 1h0m0 1h0m0 1h0m1-15h0m0 1h0m0 1h0m0 1h0m0 1h0m0 1h0m1-5h0m0 2h0m0 1h0m0 1h0m0 2h0m0 1h0m1 3h0m0 1h0m0 3h0m0 1h0m0 1h0m0 1h0m0 1h0m0 1h0m0 1h0m1-14h0m0 2h0m0 5h0m0 1h0m0 1h0m1-7h0m0 9h0m0 1h0m1-12h0m0 2h0m0 2h0m0 3h0m0 3h0m0 1h0m1-13h0m0 4h0m0 1h0m0 4h0m1-7h0m0 4h0m0 5h0m0 2h0m0 1h0m1-2h0m0 3h0m0 1h0m1-12h0m0 1h0m0 3h0m0 1h0m0 3h0m0 3h0m0 2h0m1-14h0m1 2h0m0 1h0m0 1h0m0 7h0m1-13h0m0 2h0m0 7h0m0 2h0m0 2h0m0 1h0m0 1h0m1-20h0m0 1h0m0 1h0m0 1h0m0 1h0m1-3h0m0 2h0m0 1h0m0 2h0m0 1h0m0 2h0m0 3h0m0 1h0m0 4h0m1-12h0m0 4h0m0 3h0m0 4h0m0 1h0m1-7h0m0 3h0m0 1h0m0 5h0m0 1h0m0 1h0m0 2h0m1-10h0m0 1h0m0 2h0m0 1h0m0 3h0m0 1h0m0 1h0m1-12h0m0 1h0m0 3h0m0 3h0m0 2h0m0 1h0m1-11h0m0 1h0m0 5h0m0 1h0m0 1h0m1-9h0m0 1h0m0 3h0m0 1h0m0 3h0m0 1h0m0 1h0m0 1h0m0 1h0m0 1h0m3-14h0m0 2h0m0 1h0m0 3h0m0 1h0m0 1h0m0 1h0m0 1h0m0 3h0m1-11h0m0 1h0m0 1h0m0 6h0m0 2h0m0 1h0m0 2h0m1-13h0m0 6h0m0 3h0m1-13h0m0 2h0m0 2h0m0 3h0m0 2h0m0 1h0m0 3h0m0 2h0m0 2h0m1-19h0m0 1h0m0 1h0m0 1h0m0 1h0m0 4h0m0 3h0m0 4h0m1-4h0m0 1h0m0 1h0m0 3h0m1-10h0m0 1h0m0 1h0m0 8h0m1-8h0m0 5h0m0 1h0m1-10h0m0 2h0m0 5h0m0 1h0m0 1h0m1-11h0m0 1h0m0 4h0m0 1h0m0 1h0m0 1h0m0 1h0m0 3h0m1-8h0m0 4h0m0 2h0m0 2h0m2-10h0m0 4h0m0 1h0m0 1h0m0 1h0m0 2h0m1-10h0m0 2h0m0 4h0m0 1h0m0 4h0m0 2h0m1-16h0m0 2h0m0 4h0m0 3h0m0 2h0m0 3h0m1-11h0m0 3h0m0 4h0m0 3h0m0 1h0m0 2h0m0 2h0m0 1h0m1-16h0m0 3h0m0 7h0m0 5h0m1-11h0m0 3h0m0 1h0m0 1h0m0 3h0m0 1h0m1-16h0m0 4h0m0 2h0m0 1h0m0 1h0m0 1h0m1-10h0m0 1h0m0 1h0m0 1h0m0 1h0m0 4h0m1-6h0m0 4h0m0 6h0m0 2h0m1-12h0m0 4h0m0 2h0m0 2h0m0 1h0m0 1h0m0 1h0m0 1h0m1-8h0m0 6h0m0 3h0m0 3h0m1-10h0m0 2h0m0 4h0m0 2h0m0 1h0m1-14h0m0 1h0m0 2h0m0 2h0m0 2h0m0 4h0m1-9h0m0 1h0m0 1h0m0 2h0m0 8h0m1-9h0m0 3h0m0 1h0m0 3h0m0 1h0m1-5h0m0 2h0m0 1h0m0 4h0m0 1h0m1-14h0m0 4h0m0 1h0m0 5h0m0 1h0m0 2h0m1-14h0m0 1h0m0 1h0m0 7h0m1-7h0m0 2h0m0 2h0m0 2h0m0 1h0m0 1h0m2-3h0m0 1h0m0 3h0m0 1h0m0 1h0m1-12h0m0 2h0m0 2h0m0 5h0m0 1h0m0 1h0m0 1h0m0 1h0m1-17h0m0 1h0m0 1h0m0 1h0m0 1h0m0 1h0m0 1h0m0 4h0m1-13h0m0 4h0m0 3h0m0 3h0m0 4h0m0 1h0m2-4h0m0 4h0m0 1h0m0 3h0m1-11h0m0 4h0m0 1h0m0 3h0m1-3h0m0 4h0m0 2h0m0 1h0m1-15h0m0 1h0m0 3h0m0 8h0m1-14h0m0 1h0m0 3h0m0 3h0m0 2h0m0 3h0m1-9h0m0 4h0m0 2h0m0 3h0m0 2h0m0 3h0m1-3h0m0 2h0m0 2h0m1-16h0m0 2h0m0 2h0m0 4h0m0 2h0m0 3h0m1-17h0m0 1h0m0 1h0m0 1h0m0 1h0m0 2h0m0 4h0m0 1h0m1 2h0m0 2h0m0 3h0m1-13h0m0 1h0m0 3h0m0 2h0m0 3h0m0 1h0m1-11h0m0 2h0m0 2h0m0 1h0m0 1h0m0 3h0m0 1h0m0 2h0m0 1h0m3-16h0m0 1h0m0 1h0m0 1h0m0 3h0m0 1h0m0 3h0m0 1h0m0 1h0m0 4h0m1-18h0m0 2h0m0 2h0m0 1h0m0 1h0m0 10h0m0 4h0m1-10h0m0 1h0m0 2h0m0 1h0m0 2h0m0 3h0m1-11h0m0 6h0m0 5h0m1-12h0m0 1h0m0 1h0m0 2h0m0 2h0m0 1h0m0 1h0m0 2h0m1-16h0m0 2h0m0 1h0m0 1h0m0 2h0m0 1h0m0 5h0m0 2h0m0 6h0m1-21h0m0 1h0m0 1h0m1-2h0m0 1h0m0 1h0m0 1h0m0 1h0m0 1h0m0 1h0m0 4h0m0 1h0m1-3h0m0 5h0m0 1h0m0 1h0m0 1h0m0 1h0m0 2h0m1-12h0m0 2h0m0 3h0m0 3h0m1-5h0m0 7h0m0 3h0m0 1h0m1-11h0m0 1h0m0 3h0m0 2h0m0 1h0m0 3h0m0 1h0m1-12h0m0 4h0m0 1h0m0 2h0m0 1h0m0 2h0m1-12h0m0 3h0m0 2h0m0 5h0m0 4h0m1-21h0m0 1h0m0 1h0m0 1h0m0 1h0m0 1h0m0 1h0m0 3h0m0 5h0m1-6h0m0 2h0m0 1h0m0 7h0m0 1h0m0 2h0m1-8h0m0 2h0m0 1h0m0 1h0m1-10h0m0 6h0m0 1h0m0 4h0m0 1h0m1-19h0m0 1h0m0 1h0m0 1h0m0 1h0m0 1h0m0 3h0m0 3h0m1-4h0m0 1h0m0 3h0m0 1h0m0 1h0m0 1h0m0 1h0m0 2h0m1-17h0m0 2h0m0 5h0m1-7h0m0 1h0m0 1h0m0 2h0m1-1h0m0 1h0m0 1h0m0 1h0m0 1h0m0 1h0m0 1h0m0 2h0m0 1h0m0 4h0m1-6h0m0 4h0m0 1h0m0 3h0m0 1h0m0 1h0m0 2h0m2-10h0m0 4h0m0 3h0m0 2h0m1-13h0m0 2h0m0 1h0m0 1h0m0 3h0m0 3h0m0 1h0m1-9h0m0 5h0m0 1h0m1-11h0m0 1h0m0 6h0m0 1h0m0 3h0m1-11h0m0 2h0m0 2h0m0 6h0m1-9h0m0 5h0m0 7h0m1-13h0m0 2h0m0 3h0m0 1h0m0 2h0m0 3h0m1-9h0m0 3h0m0 5h0m0 1h0m1-9h0m0 5h0m1-6h0m0 2h0m0 2h0m0 4h0m0 4h0m1-15h0m0 5h0m0 1h0m0 2h0m0 3h0m0 2h0m1-12h0m0 1h0m0 2h0m1-2h0m0 4h0m0 2h0m0 5h0m0 2h0m1-8h0m0 2h0m0 1h0m0 3h0m0 4h0m1-15h0m0 2h0m0 1h0m0 5h0m0 1h0m1-2h0m0 2h0m0 2h0m0 1h0m1-10h0m0 3h0m0 6h0m0 1h0m2-6h0m0 1h0m0 1h0m0 2h0m1-14h0m0 1h0m0 1h0m0 1h0m0 1h0m0 2h0m0 1h0m0 5h0m0 3h0m1-16h0m0 1h0m0 1h0m0 1h0m0 1h0m0 1h0m0 1h0m0 1h0m0 3h0m0 1h0m0 4h0m0 2h0m0 2h0m0 1h0m1-2h0m0 3h0m0 1h0m0 1h0m1-10h0m0 4h0m1-5h0m0 1h0m0 3h0m0 6h0m1-11h0m0 5h0m0 3h0m0 1h0m0 1h0m0 1h0m1-16h0m0 1h0m0 1h0m0 1h0m0 1h0m0 2h0m0 3h0m0 3h0m1-10h0m0 3h0m1-4h0m0 4h0m0 4h0m0 3h0m0 1h0m1-7h0m0 3h0m0 1h0m0 3h0m0 1h0m0 1h0m1-16h0m0 1h0m0 1h0m0 2h0m0 3h0m2-2h0m0 3h0m0 2h0m0 2h0m0 2h0m1-13h0m0 4h0m0 7h0m0 1h0m0 1h0m1-13h0m0 2h0m0 2h0m0 3h0m0 5h0m1-17h0m0 2h0m0 1h0m0 2h0m0 2h0m0 5h0m0 2h0m0 2h0m1-15h0m1-2h0m0 1h0m0 1h0m0 1h0m0 1h0m0 1h0m0 4h0m0 1h0m1-4h0m0 1h0m0 2h0m0 3h0m0 1h0m0 3h0m1-7h0m0 1h0m0 3h0m0 1h0m0 1h0m0 2h0m0 1h0m0 1h0m1-7h0m0 5h0m0 2h0m1-12h0m0 1h0m0 6h0m0 4h0m1-13h0m0 1h0m0 1h0m0 1h0m0 1h0m0 4h0m1-8h0m0 6h0m0 5h0m1-8h0m0 4h0m0 3h0m0 3h0m0 1h0m1-2h0m0 2h0m0 1h0m1-14h0m0 5h0m0 2h0m0 3h0m0 1h0m1-15h0m0 1h0m0 4h0m0 2h0m0 2h0m0 1h0m0 2h0m1-14h0m0 4h0m0 1h0m0 4h0m1-9h0m0 1h0m0 1h0m0 1h0m0 1h0m0 1h0m0 2h0m0 1h0m1-1h0m0 4h0m0 2h0m0 2h0m0 2h0m0 1h0m0 1h0m0 1h0m0 1h0m0 1h0m1-8h0m0 2h0m0 1h0m0 3h0m0 2h0m0 1h0m1-15h0m0 4h0m0 3h0m0 2h0m0 2h0m1-16h0m0 2h0m0 2h0m0 2h0m0 1h0m0 2h0m0 2h0m1 1h0m0 2h0m0 4h0m2-14h0m0 3h0m0 2h0m0 4h0m0 2h0m1-8h0m0 3h0m0 1h0m0 1h0m0 3h0m0 1h0m1-12h0m0 1h0m0 2h0m0 2h0m0 1h0m0 7h0m1-15h0m1 0h0m0 5h0m0 4h0m0 2h0m0 1h0m0 2h0m1-11h0m0 1h0m0 3h0m0 1h0m1 0h0m0 3h0m1-1h0m0 4h0m0 1h0m0 1h0m0 1h0m1-14h0m0 1h0m0 2h0m0 7h0m1-9h0m0 5h0m0 1h0m0 2h0m0 3h0m1-16h0m0 1h0m0 1h0m0 1h0m0 2h0m0 1h0m0 1h0m1-2h0m0 4h0m0 3h0m0 2h0m0 3h0m2-8h0m0 2h0m0 4h0m1-12h0m0 1h0m0 2h0m0 1h0m1-6h0m0 3h0m0 2h0m0 1h0m0 6h0m1-13h0m0 1h0m0 2h0m0 3h0m0 4h0m1-13h0m0 4h0m0 2h0m0 1h0m0 3h0m0 4h0m1-12h0m0 3h0m0 5h0m0 3h0m1-6h0m0 8h0m1-9h0m0 3h0m0 1h0m0 5h0m0 1h0m0 1h0m1-10h0m0 5h0m0 3h0m0 1h0m0 3h0m1-12h0m0 1h0m0 1h0m0 2h0m0 2h0m1-3h0m0 4h0m0 3h0m0 1h0m0 2h0m0 1h0m1-4h0m0 1h0m0 3h0m0 1h0m1-11h0m0 1h0m0 8h0m1-9h0m0 3h0m0 1h0m0 3h0m0 1h0m0 2h0m1-15h0m0 1h0m0 1h0m0 1h0m0 1h0m0 6h0m0 2h0m0 3h0m1-17h0m0 3h0m0 3h0m1-5h0m0 2h0m0 2h0m0 3h0m0 1h0m1 2h0m0 2h0m0 1h0m0 3h0m1-8h0m1-7h0m0 2h0m0 2h0m0 2h0m0 1h0m0 1h0m0 3h0m0 3h0m1-21h0m0 1h0m0 1h0m0 1h0m0 1h0m0 1h0m0 2h0m1-7h0m0 1h0m0 1h0m0 1h0m0 1h0m0 1h0m0 1h0m1-1h0m0 3h0m0 2h0m0 2h0m0 2h0m0 1h0m0 1h0m0 1h0m0 1h0m0 1h0m0 1h0m0 2h0m1-13h0m0 3h0m0 1h0m0 4h0m0 1h0m0 1h0m1-12h0m0 1h0m0 2h0m0 2h0m0 1h0m0 1h0m0 2h0m3-10h0m0 3h0m0 1h0m0 2h0m0 2h0m0 2h0m1-11h0m0 3h0m0 1h0m0 3h0m0 2h0m1-8h0m0 1h0m1 7h0m0 3h0m0 1h0m0 1h0m0 1h0m0 1h0m0 1h0m0 1h0m1-13h0m0 2h0m0 2h0m0 2h0m0 1h0m0 1h0m1-14h0m0 2h0m0 2h0m0 5h0m0 1h0m0 2h0m1-12h0m0 3h0m0 6h0m0 3h0m1-14h0m0 1h0m0 3h0m0 3h0m0 2h0m0 2h0m0 2h0m0 2h0m1-17h0m0 1h0m0 2h0m0 1h0m1 0h0m0 1h0m0 4h0m0 3h0m0 1h0m0 3h0m1-9h0m0 5h0m0 3h0m0 2h0m0 1h0m0 1h0m0 2h0m1 0h0m0 1h0m1-14h0m0 1h0m0 1h0m0 1h0m0 1h0m0 1h0m0 1h0m0 2h0m0 4h0m1-15h0m0 6h0m0 6h0m0 2h0m1-14h0m0 1h0m0 1h0m0 2h0m0 1h0m0 1h0m1-2h0m0 5h0m1-9h0m0 2h0m0 5h0m0 2h0m0 2h0m0 2h0m1-13h0m0 4h0m0 2h0m0 3h0m0 1h0m0 1h0m0 2h0m0 2h0m1-15h0m0 2h0m1 0h0m0 4h0m0 5h0m1-12h0m0 3h0m0 3h0m0 1h0m0 2h0m1-8h0m0 4h0m0 1h0m1-5h0m0 5h0m0 4h0m0 3h0m0 1h0m1-13h0m0 2h0m0 3h0m0 2h0m0 3h0m1-9h0m0 1h0m0 10h0m1-11h0m0 2h0m0 2h0m0 2h0m0 1h0m0 5h0m1-3h0m0 3h0m0 2h0m1-15h0m0 10h0m1-12h0m0 2h0m0 2h0m0 2h0m0 1h0m0 2h0m0 1h0m0 1h0m0 1h0m3-14h0m0 1h0m0 3h0m0 2h0m0 2h0m0 1h0m0 1h0m0 2h0m1-9h0m0 5h0m0 3h0m0 1h0m0 1h0m0 1h0m0 1h0m0 1h0m0 3h0m0 1h0m1-20h0m0 2h0m0 4h0m0 2h0m0 2h0m0 1h0m0 3h0m0 2h0m0 1h0m1-18h0m0 3h0m1-3h0m0 1h0m0 1h0m0 1h0m0 1h0m0 1h0m0 1h0m0 1h0m0 4h0m1-2h0m0 3h0m0 2h0m0 2h0m0 2h0m1-2h0m0 2h0m0 1h0m0 1h0m0 1h0m0 1h0m1-15h0m0 1h0m0 3h0m0 4h0m0 3h0m1-14h0m0 3h0m0 1h0m0 5h0m0 3h0m1-16h0m0 2h0m0 1h0m0 1h0m0 6h0m0 6h0m0 1h0m1-16h0m0 1h0m0 1h0m0 5h0m0 4h0m0 2h0m0 1h0m1-11h0m0 3h0m0 4h0m0 1h0m0 2h0m0 2h0m0 2h0m1-14h0m0 2h0m0 9h0m1-6h0m0 4h0m0 1h0m0 1h0m1-12h0m0 2h0m0 3h0m0 3h0m0 3h0m0 2h0m0 2h0m1-18h0m0 1h0m0 2h0m1-3h0m0 1h0m0 1h0m0 1h0m0 1h0m0 3h0m0 1h0m1-2h0m0 2h0m0 2h0m0 1h0m0 2h0m0 1h0m0 1h0m0 1h0m1-12h0m0 1h0m0 6h0m0 2h0m1-8h0m0 1h0m0 10h0m0 1h0m0 1h0m1-11h0m0 1h0m0 3h0m0 2h0m0 4h0m0 2h0m1-16h0m0 2h0m0 3h0m0 7h0m1-9h0m0 1h0m0 1h0m0 1h0m0 1h0m0 2h0m0 7h0m0 1h0m1-8h0m0 2h0m0 3h0m0 1h0m0 2h0m0 1h0m0 1h0m3-10h0m0 2h0m0 2h0m0 2h0m0 2h0m1-7h0m0 1h0m0 2h0m0 4h0m0 1h0m0 1h0m1-11h0m0 3h0m0 2h0m0 1h0m0 4h0m1-13h0m0 2h0m0 1h0m0 1h0m0 1h0m0 2h0m0 3h0m0 2h0m1-12h0m0 5h0m0 4h0m0 2h0m1-9h0m0 13h0m1-12h0m0 3h0m0 2h0m0 4h0m1-12h0m0 6h0m0 1h0m0 2h0m0 3h0m1-15h0m0 1h0m0 4h0m0 4h0m0 2h0m0 1h0m0 3h0m0 2h0m1-18h0m0 1h0m0 1h0m0 1h0m0 1h0m0 3h0m0 1h0m0 3h0m3-8h0m0 2h0m0 3h0m0 1h0m0 1h0m0 1h0m0 3h0m1-10h0m0 2h0m0 4h0m0 3h0m0 1h0m1-7h0m0 2h0m0 3h0m0 3h0m1-7h0m0 4h0m0 4h0m0 1h0m1-21h0m0 1h0m0 1h0m0 1h0m0 1h0m0 1h0m0 1h0m0 2h0m0 6h0m0 1h0m1-5h0m0 2h0m0 1h0m0 5h0m1-18h0m0 1h0m0 5h0m1-2h0m0 2h0m0 1h0m0 2h0m0 3h0m0 2h0m0 2h0m0 3h0m0 1h0m0 2h0m1-11h0m0 1h0m0 1h0m0 3h0m0 2h0m0 3h0m1-17h0m0 1h0m0 1h0m0 1h0m0 1h0m0 1h0m0 4h0m1-8h0m0 1h0m0 3h0m0 1h0m0 9h0m1-13h0m0 8h0m0 2h0m0 2h0m1-9h0m0 3h0m0 5h0m0 2h0m1-11h0m0 5h0m0 2h0m0 3h0m0 3h0m1-18h0m0 3h0m0 3h0m0 1h0m0 3h0m0 2h0m1-10h0m0 7h0m0 1h0m0 5h0m0 2h0m1-10h0m0 8h0m0 1h0m0 1h0m1-13h0m0 1h0m0 2h0m0 2h0m0 2h0m0 2h0m0 1h0m1-16h0m0 2h0m0 1h0m0 3h0m0 1h0m0 4h0m0 1h0m0 2h0m0 1h0m1-16h0m0 1h0m0 1h0m1-2h0m0 1h0m0 1h0m0 1h0m0 1h0m0 2h0m0 3h0m0 4h0m1-8h0m0 1h0m0 3h0m0 1h0m0 1h0m0 1h0m0 3h0m0 2h0m0 5h0m1-15h0m0 2h0m0 5h0m0 1h0m0 1h0m0 2h0m0 1h0m0 4h0m1-17h0m0 2h0m0 3h0m0 1h0m0 2h0m0 1h0m0 1h0m0 1h0m0 2h0m0 1h0m3-15h0m0 1h0m0 2h0m0 1h0m0 1h0m0 1h0m0 2h0m0 3h0m1-8h0m0 2h0m0 1h0m0 1h0m0 1h0m0 1h0m0 2h0m0 2h0m0 1h0m0 1h0m1-14h0m0 7h0m0 7h0m1-13h0m0 8h0m0 6h0m1-16h0m0 4h0m0 1h0m0 2h0m0 4h0m0 2h0m1 1h0m0 2h0m1-14h0m0 7h0m1-8h0m0 1h0m0 3h0m0 2h0m0 4h0m0 2h0m1-12h0m0 2h0m0 3h0m0 2h0m0 5h0m1-6h0m0 1h0m0 1h0m0 2h0m0 1h0m1-17h0m0 1h0m0 1h0m0 2h0m0 1h0m0 2h0m0 3h0m0 2h0m0 3h0m2-14h0m0 1h0m0 1h0m0 1h0m0 1h0m0 2h0m0 2h0m0 5h0m0 3h0m0 1h0m0 2h0m1-8h0m0 1h0m0 2h0m0 3h0m0 1h0m0 3h0m1-16h0m0 4h0m0 1h0m0 1h0m0 1h0m0 1h0m0 1h0m0 3h0m1-8h0m0 3h0m0 3h0m0 4h0m0 2h0m1-10h0m0 2h0m0 3h0m0 3h0m0 1h0m0 1h0m1-16h0m0 1h0m0 1h0m0 3h0m0 1h0m0 1h0m0 5h0m1-13h0m0 2h0m0 1h0m0 2h0m0 1h0m0 1h0m1-1h0m0 3h0m0 2h0m0 4h0m0 2h0m1-12h0m0 5h0m0 4h0m0 1h0m1-10h0m0 5h0m0 6h0m0 1h0m0 1h0m1-17h0m0 1h0m0 2h0m0 1h0m0 2h0m0 4h0m0 2h0m1-2h0m0 3h0m1-6h0m0 2h0m0 1h0m0 3h0m0 1h0m0 1h0m1-13h0m0 3h0m0 3h0m0 1h0m0 5h0m0 2h0m1-16h0m0 1h0m0 2h0m0 3h0m0 5h0m1-10h0m0 4h0m0 1h0m0 2h0m0 5h0m1-11h0m0 1h0m0 1h0m0 4h0m0 2h0m0 1h0m2-5h0m0 8h0m0 2h0m1-9h0m0 2h0m0 3h0m0 1h0m0 2h0m0 1h0m1-10h0m0 2h0m0 1h0m0 3h0m0 2h0m0 2h0m1-22h0m0 1h0m0 1h0m0 1h0m0 1h0m0 1h0m0 1h0m0 1h0m0 1h0m0 9h0m1-17h0m0 2h0m0 1h0m0 1h0m0 1h0m0 1h0m0 1h0m0 1h0m0 2h0m0 11h0m1-9h0m0 1h0m0 2h0m0 5h0m0 1h0m1-11h0m0 8h0m0 2h0m0 1h0m1-12h0m0 1h0m0 1h0m0 2h0m0 4h0m0 2h0m0 2h0m1-15h0m0 1h0m0 3h0m0 1h0m0 2h0m1-3h0m0 2h0m0 1h0m0 1h0m0 2h0m0 3h0m1-5h0m0 6h0m0 1h0m1-16h0m0 1h0m0 1h0m0 1h0m0 3h0m0 4h0m1-5h0m0 1h0m0 2h0m0 1h0m0 4h0m0 1h0m0 2h0m0 2h0m1-13h0m0 6h0m0 1h0m0 1h0m0 4h0m1-7h0m0 5h0m0 1h0m0 1h0m0 1h0m1-21h0m0 1h0m0 1h0m0 1h0m0 1h0m0 1h0m0 1h0m0 1h0m0 3h0m0 1h0m0 4h0m0 4h0m0 1h0m1-22h0m0 1h0m0 4h0m1-2h0m0 3h0m0 1h0m0 1h0m0 2h0m0 1h0m0 5h0m0 2h0m1-8h0m0 1h0m0 2h0m0 2h0m0 1h0m0 3h0m1-14h0m0 1h0m0 6h0m0 1h0m0 1h0m0 7h0m1-13h0m0 2h0m0 1h0m0 3h0m0 3h0m0 2h0m0 2h0m1-8h0m0 6h0m0 1h0m0 1h0m1-12h0m0 2h0m0 1h0m0 3h0m0 2h0m0 2h0m0 1h0m1-17h0m0 1h0m0 1h0m0 1h0m0 2h0m0 1h0m0 3h0m0 2h0m0 2h0m1-16h0m0 1h0m0 2h0m0 5h0m1-8h0m0 4h0m0 3h0m1 0h0m0 1h0m0 2h0m0 1h0m0 1h0m0 1h0m0 1h0m0 1h0m1-14h0m0 1h0m0 1h0m0 1h0m0 2h0m1-1h0m0 3h0m0 2h0m1 1h0m0 1h0m0 2h0m0 1h0m0 1h0m0 1h0m1-11h0m0 11h0m0 1h0m1-13h0m0 3h0m0 1h0m0 3h0m1-6h0m0 3h0m0 3h0m0 1h0m0 2h0m0 1h0m1-7h0m0 5h0m0 1h0m0 1h0m0 3h0m0 1h0m1-14h0m0 4h0m0 2h0m1-6h0m0 1h0m0 4h0m0 2h0m0 5h0m0 3h0m1-12h0m0 3h0m0 2h0m0 1h0m0 1h0m0 2h0m0 1h0m0 1h0m0 1h0m2-19h0m0 1h0m0 1h0m0 1h0m0 1h0m0 4h0m1-4h0m0 1h0m0 2h0m0 3h0m0 1h0m0 1h0m0 2h0m0 2h0m1-9h0m0 3h0m0 3h0m1-2h0m0 2h0m0 2h0m0 3h0m1-20h0m0 1h0m0 1h0m0 1h0m0 2h0m0 1h0m0 2h0m0 2h0m0 1h0m0 1h0m0 1h0m0 1h0m0 3h0m0 3h0m1-20h0m0 2h0m1 1h0m0 4h0m0 1h0m0 1h0m1-9h0m0 1h0m0 1h0m0 1h0m0 1h0m0 1h0m0 1h0m0 1h0m0 1h0m0 3h0m0 3h0m0 1h0m0 2h0m0 3h0m1-6h0m0 5h0m0 2h0m0 1h0m0 1h0m1-12h0m0 3h0m0 5h0m1-10h0m0 2h0m0 6h0m0 1h0m1-5h0m0 1h0m0 3h0m0 2h0m1-10h0m0 6h0m0 2h0m0 2h0m1-13h0m0 1h0m0 2h0m0 2h0m0 5h0m0 3h0m1-15h0m0 2h0m0 3h0m0 1h0m0 2h0m0 4h0m0 3h0m1-9h0m0 1h0m0 3h0m0 2h0m0 1h0m1-9h0m0 3h0m0 1h0m0 4h0m0 3h0m0 2h0m1-15h0m0 1h0m0 4h0m0 5h0m0 1h0m0 4h0m1-11h0m0 3h0m0 1h0m0 1h0m0 1h0m1-16h0m0 1h0m0 1h0m0 1h0m0 2h0m0 1h0m1-6h0m0 2h0m0 1h0m0 2h0m0 1h0m0 2h0m1-6h0m0 1h0m0 1h0m0 1h0m0 1h0m0 1h0m0 1h0m0 1h0m0 1h0m0 1h0m1-4h0m0 5h0m0 1h0m0 1h0m0 1h0m0 1h0m0 2h0m0 1h0m1-11h0m0 7h0m1-7h0m0 2h0m0 1h0m0 2h0m0 4h0m2-5h0m0 4h0m0 1h0m1-10h0m0 1h0m0 1h0m0 5h0m0 3h0m0 1h0m1-16h0m0 2h0m0 1h0m0 1h0m0 3h0m0 5h0m0 4h0m1-7h0m0 5h0m0 3h0m0 3h0m1-14h0m0 2h0m0 1h0m0 1h0m0 2h0m0 7h0m1-5h0m0 1h0m0 3h0m1-17h0m0 1h0m0 1h0m0 1h0m0 1h0m0 3h0m0 3h0m0 2h0m0 1h0m0 1h0m0 1h0m1-18h0m0 1h0m0 1h0m0 1h0m0 1h0m0 1h0m0 1h0m0 3h0m1 0h0m0 1h0m0 1h0m0 1h0m0 2h0m0 2h0m0 1h0m0 2h0m1-11h0m0 1h0m0 1h0m0 1h0m0 4h0m0 2h0m1-10h0m0 1h0m0 2h0m0 2h0m0 2h0m0 3h0m0 3h0m3-13h0m0 2h0m0 2h0m0 2h0m0 3h0m0 2h0m0 1h0m1-13h0m0 6h0m0 1h0m0 1h0m0 4h0m1-13h0m0 3h0m0 2h0m0 7h0m1-10h0m0 8h0m0 2h0m0 1h0m0 1h0m1-14h0m0 3h0m0 2h0m0 3h0m0 2h0m0 2h0m0 2h0m1-19h0m0 1h0m0 1h0m0 1h0m0 7h0m0 3h0m0 5h0m1-18h0m0 1h0m0 1h0m0 1h0m1-2h0m0 1h0m0 1h0m0 1h0m0 2h0m0 1h0m0 8h0m0 3h0m1-9h0m0 1h0m0 2h0m1-6h0m0 1h0m0 8h0m0 1h0m1-9h0m0 3h0m0 4h0m0 1h0m0 3h0m0 1h0m0 1h0m1-10h0m0 1h0m0 1h0m0 5h0m0 4h0m1-14h0m0 1h0m0 2h0m0 2h0m0 2h0m0 1h0m1-7h0m0 3h0m1-4h0m0 7h0m0 1h0m0 1h0m0 2h0m1-10h0m0 2h0m0 3h0m1 0h0m0 4h0m1-10h0m0 2h0m0 2h0m0 1h0m0 4h0m1-7h0m0 1h0m0 9h0m1-18h0m0 1h0m0 1h0m0 1h0m0 1h0m0 2h0m0 5h0m0 3h0m0 1h0m0 1h0m0 1h0m0 1h0m0 2h0m1-21h0m1 0h0m0 1h0m0 1h0m0 1h0m0 3h0m0 2h0m0 2h0m0 4h0m0 2h0m1-11h0m0 2h0m0 4h0m0 3h0m0 2h0m1-9h0m0 1h0m0 1h0m0 1h0m0 1h0m0 1h0m0 3h0m0 1h0m0 1h0m3-10h0m0 3h0m0 2h0m0 2h0m0 3h0m0 2h0m1-16h0m0 1h0m0 1h0m0 2h0m0 1h0m0 2h0m0 4h0m1-9h0m0 1h0m0 1h0m0 1h0m0 10h0m1-6h0m0 3h0m0 2h0m0 1h0m0 2h0m0 1h0m1-11h0m0 1h0m0 4h0m1-7h0m0 4h0m0 6h0m0 1h0m0 1h0m1-10h0m0 5h0m0 2h0m0 2h0m1-18h0m0 1h0m0 1h0m0 1h0m0 1h0m0 1h0m0 1h0m0 1h0m0 4h0m0 1h0m0 6h0m1-19h0m0 1h0m0 1h0m1 2h0m0 2h0m0 1h0m0 3h0m0 1h0m0 4h0m0 2h0m0 3h0m1-6h0m0 3h0m0 3h0m1-15h0m0 2h0m0 3h0m0 3h0m1-5h0m0 1h0m0 6h0m0 3h0m0 1h0m1-19h0m0 1h0m0 1h0m0 1h0m0 2h0m0 2h0m0 2h0m1-5h0m0 3h0m0 4h0m0 2h0m0 2h0m0 2h0m1-9h0m0 7h0m0 2h0m0 2h0m2-14h0m0 3h0m0 3h0m0 2h0m0 3h0m1-4h0m0 3h0m1-6h0m0 5h0m0 3h0m0 2h0m0 1h0m0 1h0m1-19h0m0 1h0m0 1h0m0 1h0m0 1h0m0 1h0m1-4h0m0 3h0m0 5h0m0 1h0m0 3h0m0 2h0m0 3h0m1-11h0m0 1h0m0 2h0m0 4h0m0 1h0m0 3h0m1-13h0m0 1h0m0 4h0m0 2h0m0 2h0m1-9h0m0 7h0m1-6h0m0 3h0m0 6h0m0 1h0m1-10h0m0 1h0m0 4h0m0 3h0m0 1h0m0 2h0m1-9h0m0 1h0m0 1h0m0 2h0m0 2h0m0 1h0m0 2h0m1-16h0m0 2h0m0 2h0m0 1h0m0 2h0m0 2h0m0 1h0m0 2h0m0 3h0m0 1h0m3-13h0m0 2h0m0 2h0m0 1h0m0 3h0m0 3h0m0 1h0m0 1h0m1-10h0m0 2h0m0 1h0m0 1h0m0 2h0m0 1h0m0 1h0m0 2h0m1-13h0m0 3h0m0 1h0m0 3h0m0 1h0m0 1h0m0 2h0m0 1h0m0 2h0m1-20h0m0 1h0m0 1h0m0 3h0m0 1h0m1-6h0m0 1h0m0 1h0m0 1h0m0 1h0m0 1h0m0 1h0m0 1h0m0 1h0m1 3h0m0 1h0m0 3h0m0 1h0m0 3h0m0 1h0m0 1h0m1-7h0m0 4h0m0 1h0m0 1h0m1-12h0m0 5h0m0 2h0m0 3h0m0 2h0m0 1h0m1-17h0m0 1h0m0 1h0m0 3h0m0 1h0m0 3h0m0 1h0m1-6h0m0 4h0m0 5h0m0 4h0m0 1h0m1-13h0m0 3h0m0 2h0m0 3h0m0 1h0m1-12h0m0 9h0m0 1h0m1-7h0m0 10h0m0 2h0m0 1h0m0 1h0m1-13h0m0 2h0m0 1h0m0 4h0m0 3h0m1-14h0m0 2h0m0 4h0m0 3h0m0 3h0m1-18h0m0 1h0m0 1h0m0 1h0m0 1h0m0 3h0m0 2h0m0 2h0m1-11h0m0 1h0m0 1h0m1 0h0m0 2h0m0 1h0m0 1h0m0 4h0m0 4h0m0 1h0m0 1h0m0 1h0m0 1h0m0 2h0m1-12h0m0 1h0m0 3h0m0 3h0m0 5h0m1-14h0m0 7h0m0 4h0m0 1h0m1-14h0m0 1h0m0 1h0m0 4h0m1 1h0m0 4h0m0 1h0m1-8h0m0 1h0m0 2h0m0 2h0m0 3h0m0 1h0m0 1h0m0 2h0m0 1h0m1-4h0m0 4h0m2-16h0m0 1h0m0 1h0m0 2h0m0 1h0m0 1h0m0 3h0m0 1h0m0 4h0m1-13h0m0 1h0m0 3h0m0 1h0m0 1h0m0 2h0m0 5h0m0 2h0m1-7h0m0 3h0m0 1h0m0 3h0m0 2h0m1-16h0m0 12h0m1-12h0m0 2h0m0 1h0m0 2h0m0 1h0m0 3h0m0 4h0m1-6h0m0 5h0m1-12h0m0 11h0m0 1h0m1-10h0m0 1h0m0 2h0m0 1h0m0 2h0m0 1h0m0 2h0m0 1h0m1-11h0m0 1h0m0 2h0m0 1h0m0 2h0m0 1h0m0 1h0m1-3h0m0 3h0m0 5h0m0 1h0m1-6h0m0 3h0m0 2h0m2-11h0m0 1h0m0 1h0m0 1h0m0 1h0m0 1h0m0 5h0m0 1h0m1-14h0m0 1h0m0 1h0m0 4h0m0 5h0m1-12h0m0 3h0m0 2h0m0 3h0m0 1h0m1-8h0m0 5h0m0 3h0m0 4h0m1-8h0m0 3h0m0 2h0m0 1h0m0 2h0m0 1h0m0 1h0m0 1h0m1-17h0m0 4h0m0 4h0m0 1h0m1-13h0m0 1h0m0 1h0m0 1h0m0 1h0m0 2h0m0 1h0m0 2h0m0 6h0m1-16h0m0 1h0m0 1h0m0 1h0m0 1h0m1-1h0m0 1h0m0 1h0m0 1h0m0 7h0m0 2h0m0 2h0m1-8h0m0 1h0m0 1h0m0 1h0m0 1h0m0 3h0m0 1h0m0 1h0m1-14h0m0 1h0m0 3h0m0 1h0m0 3h0m1-2h0m0 4h0m0 1h0m0 3h0m0 1h0m0 1h0m0 1h0m0 1h0m1-14h0m0 8h0m0 3h0m1-9h0m0 3h0m0 3h0m1-7h0m0 7h0m0 1h0m0 4h0m1-9h0m0 7h0m0 2h0m1-19h0m0 2h0m0 1h0m0 1h0m0 2h0m0 1h0m0 3h0m0 3h0m0 2h0m0 3h0m1-19h0m0 1h0m0 6h0m0 4h0m0 4h0m0 2h0m1-13h0m0 7h0m0 1h0m0 2h0m0 1h0m1-8h0m0 3h0m0 1h0m0 3h0m0 3h0m0 1h0m1-19h0m0 2h0m0 1h0m0 1h0m0 2h0m1-6h0m0 1h0m0 1h0m0 1h0m0 1h0m0 2h0m1 0h0m0 1h0m0 1h0m0 1h0m0 1h0m0 3h0m0 1h0m0 1h0m0 2h0m0 3h0m0 2h0m1-15h0m0 1h0m0 1h0m0 1h0m0 1h0m0 3h0m0 6h0m1-6h0m0 3h0m2-7h0m0 1h0m0 4h0m0 2h0m0 1h0m0 1h0m1-12h0m0 2h0m0 1h0m0 3h0m1-7h0m0 1h0m0 3h0m0 5h0m0 3h0m1-8h0m0 8h0m1-10h0m0 5h0m0 5h0m0 1h0m0 1h0m1-12h0m0 2h0m0 5h0m1-1h0m0 6h0m0 2h0m1-12h0m0 1h0m0 3h0m0 3h0m0 2h0m0 3h0m1-18h0m0 4h0m0 2h0m0 9h0m1-11h0m0 5h0m0 3h0m0 3h0m1-13h0m0 2h0m0 4h0m1-2h0m0 3h0m0 4h0m0 2h0m1-11h0m0 1h0m0 5h0m1-3h0m0 1h0m0 3h0m0 3h0m1-9h0m0 8h0m0 4h0m0 1h0m1-14h0m0 2h0m0 3h0m0 4h0m0 2h0m1-13h0m0 3h0m0 3h0m0 2h0m0 2h0m0 2h0m0 1h0m1-16h0m0 1h0m0 1h0m0 3h0m0 4h0m1-9h0m0 1h0m0 7h0m0 1h0m0 4h0m1-12h0m0 3h0m0 2h0m0 6h0m1-15h0m0 1h0m0 1h0m0 4h0m1-2h0m0 8h0m0 5h0m1-10h0m0 2h0m0 3h0m0 2h0m0 1h0m0 1h0m0 1h0m0 2h0m1-3h0m0 3h0m1-16h0m0 1h0m0 3h0m0 3h0m1-4h0m0 7h0m0 3h0m1-7h0m0 1h0m0 3h0m0 1h0m0 3h0m1-7h0m0 3h0m0 4h0m0 1h0m0 1h0m1-12h0m0 1h0m0 2h0m0 2h0m0 3h0m0 1h0m0 1h0m1-8h0m0 3h0m0 3h0m0 1h0m2-13h0m0 1h0m0 2h0m0 1h0m0 1h0m0 1h0m0 4h0m1-7h0m0 1h0m0 1h0m0 1h0m0 1h0m0 5h0m0 1h0m1-10h0m0 1h0m0 3h0m0 1h0m0 2h0m0 1h0m0 1h0m0 1h0m0 1h0m0 2h0m1-19h0m0 1h0m0 1h0m0 2h0m1-4h0m0 1h0m0 2h0m0 1h0m0 3h0m0 1h0m1-1h0m0 2h0m0 2h0m0 3h0m0 1h0m0 1h0m0 2h0m0 1h0m1-17h0m0 5h0m0 4h0m0 1h0m0 2h0m0 1h0m0 1h0m1-9h0m0 1h0m0 2h0m0 5h0m0 1h0m1-2h0m0 3h0m1-12h0m0 1h0m0 4h0m0 3h0m0 5h0m1-9h0m0 4h0m0 1h0m0 2h0m0 1h0m0 1h0m0 2h0m1-14h0m0 4h0m0 2h0m0 4h0m0 1h0m0 3h0m1-16h0m0 3h0m0 1h0m0 4h0m0 1h0m1-4h0m0 7h0m1-12h0m0 3h0m0 2h0m0 2h0m0 2h0m0 1h0m0 1h0m1-11h0m0 4h0m0 2h0m0 2h0m0 3h0m1-15h0m0 1h0m0 1h0m0 2h0m1-1h0m0 3h0m0 1h0m0 5h0m0 2h0m0 1h0m1-12h0m0 4h0m0 3h0m0 4h0m1-10h0m0 5h0m0 1h0m0 3h0m0 1h0m0 1h0m0 2h0m1-16h0m0 3h0m0 4h0m0 2h0m0 5h0m1-11h0m0 2h0m0 1h0m0 5h0m0 2h0m0 3h0m1-8h0m0 5h0m0 3h0m0 2h0m0 1h0m1-17h0m0 3h0m0 1h0m0 1h0m0 3h0m0 2h0m0 2h0m0 2h0m3-9h0m0 1h0m0 1h0m0 3h0m0 2h0m0 2h0m0 1h0m0 2h0m1-11h0m0 2h0m0 1h0m0 1h0m0 2h0m0 2h0m0 1h0m0 2h0m1-13h0m0 3h0m0 1h0m0 1h0m0 4h0m1-8h0m0 7h0m0 1h0m0 2h0m0 2h0m1-15h0m0 1h0m0 1h0m0 3h0m0 2h0m0 6h0m1-17h0m0 1h0m0 1h0m0 1h0m0 1h0m0 2h0m0 3h0m1 0h0m0 2h0m0 1h0m0 2h0m0 3h0m0 1h0m1-5h0m0 1h0m0 1h0m0 1h0m0 1h0m1-11h0m0 10h0m1-9h0m0 1h0m0 2h0m0 1h0m0 1h0m0 1h0m0 5h0m0 2h0m1-9h0m0 1h0m0 3h0m0 1h0m0 5h0m2-7h0m0 1h0m0 3h0m1-11h0m0 1h0m0 1h0m0 1h0m0 1h0m0 3h0m0 6h0m1-3h0m0 3h0m1-11h0m0 1h0m0 1h0m0 5h0m0 2h0m0 2h0m1-11h0m0 2h0m0 3h0m0 1h0m0 1h0m0 2h0m0 2h0m1-11h0m0 3h0m0 6h0m1-7h0m0 2h0m0 2h0m0 2h0m0 2h0m0 1h0m1-15h0m0 2h0m0 2h0m0 1h0m0 2h0m0 1h0m0 4h0m1-12h0m0 1h0m0 1h0m0 4h0m0 2h0m0 3h0m1-8h0m0 1h0m0 4h0m0 3h0m0 1h0m1-8h0m1 1h0m0 3h0m0 3h0m0 3h0m0 1h0m1-3h0m1-11h0m0 1h0m0 4h0m0 2h0m0 2h0m0 3h0m1-14h0m0 1h0m0 1h0m0 2h0m0 5h0m1-9h0m0 1h0m0 1h0m0 4h0m1 5h0m0 1h0m0 2h0m0 2h0m0 1h0m1-13h0m0 4h0m0 7h0m1-13h0m0 2h0m0 1h0m0 3h0m0 2h0m0 3h0m0 1h0m1-19h0m0 1h0m0 1h0m0 1h0m0 1h0m0 1h0m0 1h0m1-6h0m0 1h0m0 1h0m0 1h0m0 4h0m1-3h0m0 1h0m0 5h0m0 1h0m0 3h0m0 2h0m0 3h0m0 1h0m0 1h0m1-11h0m0 1h0m0 4h0m0 2h0m0 2h0m1-14h0m0 1h0m0 1h0m0 2h0m0 3h0m0 3h0m0 2h0m3-10h0m0 1h0m0 2h0m0 2h0m0 1h0m0 1h0m0 2h0m0 2h0m1-6h0m0 2h0m0 1h0m0 1h0m0 1h0m1-6h0m0 6h0m0 2h0m0 1h0m1-12h0m0 1h0m1-3h0m0 6h0m0 2h0m0 3h0m1-6h0m0 4h0m0 1h0m0 2h0m1-11h0m0 3h0m0 7h0m1-11h0m0 2h0m0 1h0m0 1h0m0 3h0m0 2h0m1-8h0m0 1h0m0 1h0m0 3h0m0 6h0m1-7h0m0 4h0m0 2h0m0 2h0m0 1h0m1-7h0m0 2h0m0 2h0m0 2h0m0 1h0m2-12h0m0 2h0m0 7h0m1-12h0m0 8h0m0 2h0m0 2h0m0 1h0m1-12h0m0 1h0m0 3h0m0 4h0m0 2h0m1-7h0m0 3h0m0 6h0m1-10h0m0 4h0m0 4h0m0 3h0m0 1h0m1-13h0m0 4h0m0 3h0m0 1h0m0 1h0m0 1h0m0 1h0m1-17h0m0 1h0m0 1h0m0 1h0m0 1h0m0 1h0m0 1h0m0 1h0m1-8h0m0 1h0m0 1h0m1-2h0m0 1h0m0 1h0m0 1h0m0 1h0m0 1h0m0 2h0m0 1h0m0 3h0m0 2h0m0 1h0m0 1h0m1-9h0m0 5h0m0 2h0m0 3h0m0 3h0m1-5h0m1-9h0m0 2h0m0 1h0m0 1h0m0 1h0m0 3h0m0 3h0m1-10h0m0 2h0m0 3h0m0 2h0m0 3h0m0 1h0m1-13h0m0 2h0m0 2h0m1-1h0m0 3h0m0 2h0m0 3h0m0 2h0m0 2h0m1-16h0m0 1h0m0 4h0m0 1h0m0 1h0m0 5h0m1-13h0m0 3h0m0 1h0m0 5h0m0 3h0m1-5h0m0 5h0m0 3h0m1-10h0m0 2h0m0 1h0m0 2h0m0 3h0m1-9h0m0 2h0m0 1h0m0 2h0m0 4h0m0 1h0m1-14h0m0 1h0m0 1h0m0 2h0m0 4h0m0 2h0m0 2h0m0 1h0m1-15h0m1 0h0m0 1h0m0 1h0m0 1h0m0 1h0m0 2h0m0 3h0m1-7h0m0 6h0m0 2h0m0 1h0m0 1h0m0 3h0m1-10h0m0 1h0m0 2h0m0 1h0m0 2h0m0 2h0m0 5h0m1-4h0m0 2h0m0 2h0m0 1h0m0 1h0m1-14h0m0 4h0m0 1h0m0 1h0m0 2h0m0 2h0m1-4h0m0 4h0m0 1h0m0 1h0m1-16h0m0 1h0m0 1h0m0 1h0m0 1h0m0 2h0m0 1h0m1-3h0m0 1h0m0 1h0m0 4h0m0 2h0m0 3h0m0 1h0m0 1h0m0 2h0m1-11h0m0 3h0m0 1h0m0 7h0m1-7h0m0 2h0m0 2h0m0 1h0m1-15h0m0 2h0m0 1h0m0 3h0m0 4h0m0 1h0m0 2h0m1-15h0m0 1h0m0 1h0m0 1h0m0 1h0m0 1h0m0 1h0m0 1h0m0 1h0m0 2h0m0 2h0m1-14h0m0 1h0m0 1h0m1-2h0m0 2h0m0 1h0m0 1h0m0 7h0m1-9h0m0 4h0m0 2h0m0 5h0m0 2h0m1-10h0m0 1h0m0 2h0m0 1h0m0 4h0m1-3h0m0 6h0m1-10h0m0 8h0m0 1h0m0 2h0m1-9h0m0 4h0m0 4h0m1-13h0m0 4h0m0 1h0m0 4h0m0 3h0m1-10h0m0 1h0m0 3h0m0 1h0m0 1h0m0 2h0m2-1h0m0 3h0m1-10h0m0 1h0m0 1h0m0 1h0m0 3h0m0 1h0m0 2h0m0 2h0m1-13h0m0 1h0m0 1h0m0 1h0m1 3h0m0 3h0m0 4h0m1-10h0m0 5h0m0 2h0m0 1h0m0 2h0m0 1h0m1-3h0m0 2h0m1-10h0m0 1h0m0 3h0m0 6h0m1-7h0m0 1h0m0 3h0m0 1h0m0 1h0m1-12h0m0 2h0m0 1h0m0 2h0m0 3h0m1-5h0m0 3h0m0 1h0m0 3h0m0 1h0m0 1h0m1-12h0m0 1h0m0 1h0m0 1h0m0 2h0m0 3h0m0 1h0m0 4h0m3-8h0m0 1h0m0 3h0m0 1h0m0 1h0m0 1h0m1-9h0m0 5h0m0 1h0m0 2h0m0 2h0m0 1h0m1-14h0m0 1h0m0 1h0m1-5h0m0 1h0m0 1h0m0 1h0m0 2h0m0 3h0m0 1h0m0 1h0m0 4h0m0 2h0m2-16h0m0 1h0m0 1h0m0 1h0m0 1h0m0 5h0m0 2h0m0 1h0m0 1h0m0 2h0m1-9h0m0 10h0m0 4h0m1-14h0m0 3h0m0 1h0m0 3h0m0 2h0m0 2h0m1-7h0m0 8h0m1-18h0m0 1h0m0 1h0m0 1h0m0 1h0m0 1h0m0 2h0m1 0h0m0 4h0m0 3h0m0 3h0m1-10h0m0 1h0m0 3h0m0 2h0m0 5h0m0 1h0m1-13h0m0 2h0m0 3h0m0 2h0m0 2h0m0 2h0m1-16h0m0 1h0m0 1h0m0 1h0m0 6h0m0 5h0m1-15h0m0 1h0m0 1h0m0 2h0m0 1h0m0 1h0m0 1h0m0 2h0m1 2h0m0 2h0m0 3h0m1-12h0m0 7h0m0 1h0m0 2h0m0 1h0m1-10h0m0 3h0m0 4h0m0 2h0m1-12h0m0 5h0m0 1h0m0 6h0m0 2h0m1-15h0m0 1h0m0 1h0m0 2h0m0 3h0m0 2h0m1-10h0m0 2h0m0 2h0m0 2h0m0 2h0m0 1h0m0 1h0m0 1h0m0 2h0m0 1h0m0 1h0m1-11h0m0 8h0m0 2h0m0 3h0m0 1h0m1-14h0m0 4h0m0 1h0m0 3h0m0 4h0m0 1h0m1-12h0m0 2h0m0 1h0m0 1h0m0 1h0m0 1h0m0 1h0m0 5h0m1-7h0m0 3h0m0 1h0m0 1h0m0 1h0m0 1h0" stroke="#000" stroke-width="3.6" stroke-linecap="round" fill="none"/>
<path d="M105.5 146.70H1361" stroke="#008000" stroke-width="2.08" fill="none"/>
<path d="M162.0 321.5V35.5" stroke="#800080" stroke-width="2.08" stroke-dasharray="2.08 3.44" fill="none"/><path d="M1302.9 321.5V35.5" stroke="#800080" stroke-width="2.08" stroke-dasharray="2.08 3.44" fill="none"/>
</g>
<rect x="105.5" y="35.5" width="1380.0" height="286.0" fill="none" stroke="#000" stroke-width="1.11"/>
<path d="M162.5 321.5v4.86" stroke="#000" stroke-width="1.11"/><text x="163.10" y="342.00" font-size="13.70" text-anchor="middle">0</text><path d="M356.5 321.5v4.86" stroke="#000" stroke-width="1.11"/><text x="356.63" y="342.00" font-size="13.70" text-anchor="middle">5000</text><path d="M551.5 321.5v4.86" stroke="#000" stroke-width="1.11"/><text x="550.97" y="342.00" font-size="13.70" text-anchor="middle">10000</text><path d="M745.5 321.5v4.86" stroke="#000" stroke-width="1.11"/><text x="745.30" y="342.00" font-size="13.70" text-anchor="middle">15000</text><path d="M939.5 321.5v4.86" stroke="#000" stroke-width="1.11"/><text x="939.63" y="342.00" font-size="13.70" text-anchor="middle">20000</text><path d="M1134.5 321.5v4.86" stroke="#000" stroke-width="1.11"/><text x="1133.97" y="342.00" font-size="13.70" text-anchor="middle">25000</text><path d="M1328.5 321.5v4.86" stroke="#000" stroke-width="1.11"/><text x="1328.30" y="342.00" font-size="13.70" text-anchor="middle">30000</text>
<path d="M105.5 292.50h-4.86" stroke="#000" stroke-width="1.11"/>
<text x="95.30" y="297.60" font-size="13.70" text-anchor="end">9.0</text>
<path d="M105.5 259.50h-4.86" stroke="#000" stroke-width="1.11"/>
<text x="95.30" y="264.60" font-size="13.70" text-anchor="end">9.2</text>
<path d="M105.5 226.50h-4.86" stroke="#000" stroke-width="1.11"/>
<text x="95.30" y="231.60" font-size="13.70" text-anchor="end">9.4</text>
<path d="M105.5 193.50h-4.86" stroke="#000" stroke-width="1.11"/>
<text x="95.30" y="198.60" font-size="13.70" text-anchor="end">9.6</text>
<path d="M105.5 160.50h-4.86" stroke="#000" stroke-width="1.11"/>
<text x="95.30" y="165.60" font-size="13.70" text-anchor="end">9.8</text>
<path d="M105.5 127.50h-4.86" stroke="#000" stroke-width="1.11"/>
<text x="95.30" y="132.60" font-size="13.70" text-anchor="end">10.0</text>
<path d="M105.5 94.50h-4.86" stroke="#000" stroke-width="1.11"/>
<text x="95.30" y="99.60" font-size="13.70" text-anchor="end">10.2</text>
<path d="M105.5 62.50h-4.86" stroke="#000" stroke-width="1.11"/>
<text x="95.30" y="67.60" font-size="13.70" text-anchor="end">10.4</text>
<text x="794.80" y="26.20" font-size="16.67" text-anchor="middle">AGASC ID 766904488.0</text>
<text x="732.40" y="311.90" font-size="13.70" text-anchor="middle">7063</text>
<rect x="1361.3" y="42.5" width="117.4" height="27.2" rx="2.8" fill="#fff" fill-opacity="0.8" stroke="#ccc" stroke-width="1.11"/>
<path d="M1365.9 53.9H1395.7" stroke="#008000" stroke-width="2.08"/>
<text x="1406.6" y="58.8" font-size="13.70">mag<tspan font-size="9.72" font-style="italic" dy="2.3" letter-spacing="0.3">AGASC</tspan></text>
<rect x="1348.3" y="247.3" width="130.4" height="67.2" rx="2.8" fill="#fff" fill-opacity="0.8" stroke="#ccc" stroke-width="1.11"/>
<circle cx="1367.7" cy="260.4" r="1.75" fill="#f00"/>
<text x="1391.90" y="263.90" font-size="13.70" text-anchor="start">not OK</text>
<circle cx="1367.7" cy="281.4" r="1.75" fill="#ffa500"/>
<text x="1393.00" y="284.90" font-size="13.70" text-anchor="start">Highlighted</text>
<circle cx="1367.7" cy="302.4" r="1.75" fill="#000"/>
<text x="1393.00" y="305.90" font-size="13.70" text-anchor="start">OK</text>
<g clip-path="url(#c2)">
<path transform="translate(.5 .5)" d="M175 381h0m0 2h0m0 3h0m0 3h0m0 2h0m0 2h0m1-11h0m0 1h0m0 2h0m0 1h0m0 3h0m0 3h0m0 1h0m0 3h0m0 1h0m0 3h0m0 2h0m0 1h0m0 1h0m0 1h0m0 3h0m0 3h0m0 2h0m1-32h0m0 5h0m0 1h0m0 1h0m0 3h0m0 2h0m0 2h0m0 1h0m0 1h0m0 2h0m0 3h0m0 2h0m0 2h0m0 5h0m0 3h0m4-24h0m0 6h0m0 2h0m0 1h0m0 1h0m0 4h0m0 1h0m0 1h0m0 7h0m0 2h0m0 3h0m0 1h0m0 1h0m0 2h0m0 1h0m0 3h0m0 4h0m0 2h0m0 4h0m0 2h0m0 2h0m0 4h0m0 1h0m0 2h0m1-13h0m0 8h0m19-59h0m0 4h0m0 2h0m0 1h0m0 10h0m0 3h0m0 5h0m1-24h0m0 6h0m0 2h0m0 6h0m0 4h0m0 1h0m0 1h0m0 4h0m1-28h0m0 6h0m0 1h0m0 9h0m10-14h0m0 1h0m0 5h0m1-7h0m0 4h0m0 1h0m0 1h0m0 1h0m0 4h0m0 12h0m1-20h0m0 1h0m0 1h0m0 1h0m0 1h0m0 5h0m0 4h0m0 1h0m7 46h0m0 3h0m0 1h0m12-1h0m1-41h0m0 1h0m0 2h0m0 7h0m0 2h0m0 1h0m0 1h0m0 4h0m0 1h0m0 1h0m0 2h0m0 3h0m0 1h0m0 1h0m0 6h0m0 4h0m0 2h0m0 1h0m0 1h0m4-67h0m0 1h0m0 1h0m0 1h0m0 1h0m0 2h0m0 4h0m0 2h0m0 1h0m0 1h0m0 1h0m0 1h0m0 1h0m0 4h0m1-21h0m0 1h0m0 4h0m0 2h0m0 3h0m0 1h0m0 1h0m0 2h0m0 1h0m0 5h0m0 1h0m1-19h0m0 1h0m29-3h0m0 2h0m1 2h0m4 0h0m0 7h0m0 1h0m0 2h0m0 2h0m0 3h0m0 7h0m0 1h0m0 1h0m0 1h0m0 3h0m0 5h0m0 4h0m0 1h0m0 1h0m0 1h0m0 2h0m0 2h0m0 1h0m0 2h0m0 1h0m0 5h0m0 4h0m0 2h0m0 1h0m1-6h0m0 3h0m0 4h0m13-15h0m0 2h0m0 3h0m0 2h0m0 1h0m0 1h0m0 4h0m0 2h0m0 1h0m0 1h0m7-66h0m0 1h0m0 5h0m0 2h0m1-6h0m0 4h0m0 2h0m0 1h0m31 254h0m1-242h0m0 1h0m0 6h0m0 1h0m0 1h0m0 1h0m0 3h0m0 3h0m0 1h0m0 1h0m0 3h0m0 3h0m0 1h0m0 2h0m0 1h0m0 3h0m0 3h0m0 2h0m0 2h0m0 1h0m0 4h0m0 2h0m1-4h0m0 1h0m0 3h0m16-65h0m0 1h0m0 2h0m0 1h0m0 2h0m0 1h0m0 3h0m1-12h0m0 2h0m0 2h0m0 2h0m0 1h0m0 1h0m0 1h0m0 1h0m0 2h0m0 1h0m0 1h0m0 2h0m0 1h0m1-17h0m0 12h0m7 23h0m0 2h0m0 2h0m0 6h0m0 1h0m0 3h0m0 3h0m0 2h0m0 1h0m0 1h0m0 2h0m0 1h0m0 1h0m0 3h0m0 1h0m0 2h0m14-53h0m0 2h0m0 2h0m0 1h0m0 2h0m0 1h0m0 4h0m0 1h0m0 3h0m0 2h0m0 1h0m0 2h0m0 3h0m0 3h0m0 1h0m0 2h0m0 2h0m0 1h0m0 1h0m0 2h0m0 1h0m0 2h0m0 3h0m0 2h0m0 11h0m1-19h0m0 1h0m0 6h0m0 3h0m0 3h0m0 5h0m11-19h0m0 1h0m0 3h0m0 1h0m0 3h0m0 2h0m0 4h0m0 4h0m1-19h0m0 6h0m0 1h0m0 2h0m0 1h0m0 7h0m0 1h0m3 151h0m5-215h0m1 0h0m0 2h0m0 2h0m0 5h0m0 2h0m0 1h0m0 4h0m0 2h0m1-18h0m0 1h0m0 2h0m0 5h0m0 2h0m0 3h0m0 4h0m0 1h0m17 24h0m3 220h0m12-7h0m5-251h0m0 1h0m1-5h0m0 2h0m11 0h0m0 1h0m0 1h0m0 1h0m0 1h0m8 42h0m0 1h0m0 5h0m0 2h0m0 2h0m0 1h0m0 1h0m0 1h0m0 2h0m0 2h0m0 1h0m13-60h0m0 6h0m0 6h0m0 5h0m0 9h0m0 2h0m0 1h0m0 5h0m0 7h0m0 18h0m0 2h0m1-59h0m0 9h0m0 1h0m0 2h0m0 8h0m0 1h0m0 5h0m0 4h0m0 2h0m0 4h0m0 2h0m0 7h0m0 6h0m0 4h0m0 1h0m4-64h0m0 1h0m1 0h0m0 2h0m30-3h0m0 1h0m0 1h0m0 4h0m1-6h0m0 2h0m0 1h0m0 1h0m0 2h0m3 48h0m1-55h0m0 2h0m0 2h0m0 3h0m0 1h0m0 1h0m0 1h0m0 1h0m0 1h0m0 2h0m0 3h0m0 2h0m0 2h0m0 1h0m0 5h0m0 2h0m0 1h0m0 1h0m0 3h0m0 2h0m0 1h0m0 1h0m0 1h0m0 1h0m0 4h0m0 5h0m0 4h0m0 1h0m0 6h0m0 1h0m1-30h0m0 10h0m0 1h0m0 7h0m0 5h0m0 8h0m0 1h0m12-22h0m0 1h0m0 4h0m0 4h0m0 2h0m0 2h0m0 2h0m0 1h0m0 1h0m0 1h0m0 1h0m0 1h0m0 1h0m0 1h0m0 1h0m0 1h0m0 1h0m0 1h0m7-64h0m1-2h0m0 3h0m0 2h0m11 6h0m0 4h0m0 5h0m0 3h0m1-22h0m0 1h0m0 1h0m0 1h0m0 5h0m0 3h0m0 1h0m0 3h0m0 4h0m0 2h0m1-21h0m0 8h0m0 1h0m17 205h0m3-175h0m0 1h0m0 1h0m0 2h0m0 1h0m0 3h0m0 6h0m0 2h0m0 1h0m0 1h0m0 1h0m0 2h0m0 1h0m0 1h0m0 1h0m0 1h0m4-60h0m0 1h0m0 4h0m0 1h0m0 2h0m0 1h0m0 1h0m0 1h0m0 2h0m0 1h0m0 1h0m0 3h0m0 1h0m0 1h0m0 1h0m0 1h0m0 3h0m1-29h0m0 1h0m0 1h0m0 1h0m0 1h0m0 1h0m0 4h0m0 1h0m0 2h0m0 1h0m0 1h0m0 1h0m0 2h0m0 2h0m0 7h0m0 2h0m12-30h0m0 1h0m0 1h0m0 1h0m0 1h0m0 1h0m0 1h0m0 1h0m1-6h0m0 1h0m0 2h0m0 1h0m0 2h0m1-7h0m0 1h0m0 1h0m0 1h0m7 60h0m0 2h0m0 1h0m0 1h0m8 150h0m1-211h0m0 2h0m0 2h0m0 2h0m0 4h0m0 1h0m0 1h0m0 3h0m0 2h0m0 3h0m0 1h0m0 3h0m0 1h0m0 1h0m0 1h0m0 2h0m0 2h0m0 2h0m0 1h0m0 1h0m1-34h0m0 2h0m0 1h0m0 2h0m0 2h0m0 3h0m0 1h0m0 1h0m0 1h0m0 1h0m0 1h0m0 1h0m0 1h0m0 1h0m0 1h0m0 4h0m0 2h0m0 3h0m0 4h0m0 1h0m4-30h0m0 6h0m0 1h0m0 4h0m0 6h0m0 8h0m0 1h0m0 1h0m0 2h0m0 1h0m0 5h0m0 2h0m0 4h0m0 3h0m0 4h0m0 10h0m1-53h0m0 6h0m0 1h0m0 1h0m0 8h0m0 3h0m0 8h0m0 3h0m0 4h0m0 2h0m0 8h0m0 1h0m0 3h0m0 4h0m0 1h0m9 148h0m3-152h0m0 1h0m0 2h0m8-66h0m0 2h0m0 4h0m0 1h0m0 1h0m0 2h0m0 1h0m0 4h0m0 1h0m1-13h0m0 1h0m0 2h0m0 4h0m0 2h0m0 1h0m11-13h0m0 11h0m0 1h0m0 7h0m0 1h0m0 1h0m0 1h0m0 2h0m0 3h0m1-27h0m0 2h0m0 2h0m0 1h0m0 1h0m0 4h0m0 1h0m0 1h0m0 7h0m0 1h0m0 2h0m0 4h0m0 1h0m0 1h0m0 2h0m0 1h0m0 2h0m0 2h0m1-34h0m0 1h0m0 1h0m0 1h0m0 3h0m0 1h0m0 5h0m0 1h0m0 1h0m0 1h0m0 1h0m0 1h0m0 3h0m0 1h0m0 1h0m0 7h0m0 2h0m5 0h0m13 4h0m0 1h0m0 1h0m0 1h0m0 1h0m0 1h0m0 1h0m0 1h0m1-11h0m0 1h0m0 1h0m0 1h0m0 1h0m0 1h0m0 1h0m0 1h0m0 1h0m0 2h0m0 1h0m0 1h0m1-11h0m0 1h0m0 1h0m0 2h0m0 1h0m0 1h0m0 1h0m0 1h0m0 1h0m17-43h0m0 4h0m0 1h0m0 5h0m0 1h0m0 2h0m0 1h0m0 1h0m0 2h0m0 6h0m0 2h0m0 1h0m0 1h0m1-24h0m0 3h0m0 2h0m0 3h0m0 4h0m0 2h0m0 1h0m0 1h0m0 2h0m0 1h0m0 1h0m0 1h0m7 15h0m0 2h0m0 1h0m0 1h0m0 1h0m0 1h0m0 3h0m0 1h0m0 2h0m0 2h0m0 1h0m0 2h0m0 1h0m0 2h0m0 1h0m0 4h0m0 1h0m1 3h0m13-52h0m0 3h0m0 10h0m0 2h0m0 7h0m0 1h0m0 1h0m0 1h0m0 3h0m0 3h0m0 3h0m0 6h0m0 11h0m0 1h0m1-45h0m0 1h0m0 3h0m0 1h0m0 6h0m0 1h0m0 3h0m0 4h0m0 1h0m0 4h0m0 1h0m0 9h0m0 2h0m0 1h0m0 2h0m3-60h0m0 1h0m0 2h0m0 2h0m0 1h0m0 1h0m1-8h0m0 1h0m0 1h0m0 1h0m0 2h0m16 2h0m0 2h0m0 1h0m0 5h0m0 3h0m0 2h0m0 3h0m0 1h0m0 2h0m0 3h0m0 1h0m0 1h0m0 3h0m1-35h0m0 3h0m0 1h0m0 2h0m0 3h0m0 2h0m0 1h0m0 1h0m0 3h0m0 2h0m0 2h0m0 1h0m0 1h0m0 1h0m0 4h0m0 4h0m0 4h0m1-34h0m0 2h0m0 1h0m0 1h0m0 1h0m0 2h0m0 4h0m0 1h0m0 1h0m0 1h0m0 6h0m0 4h0m0 1h0m0 1h0m11-27h0m0 4h0m0 2h0m0 15h0m0 3h0m0 2h0m0 1h0m1-26h0m0 1h0m0 2h0m0 2h0m0 2h0m0 1h0m0 2h0m0 1h0m0 1h0m0 1h0m0 5h0m0 2h0m0 4h0m0 7h0m0 4h0m1-36h0m0 2h0m0 4h0m0 6h0m0 1h0m0 1h0m0 3h0m4-1h0m0 5h0m0 2h0m0 1h0m0 3h0m0 2h0m0 2h0m0 2h0m0 1h0m0 4h0m0 1h0m0 2h0m0 3h0m0 1h0m0 1h0m0 1h0m0 2h0m0 1h0m0 1h0m0 9h0m0 1h0m0 1h0m0 1h0m0 4h0m1-15h0m0 1h0m0 5h0m0 4h0m0 4h0m11-7h0m0 3h0m1 0h0m0 3h0m0 2h0m5-67h0m0 1h0m0 3h0m0 1h0m0 2h0m0 2h0m1-7h0m0 3h0m0 1h0m0 1h0m0 1h0m0 1h0m0 247h0m9 23h0m3-273h0m0 1h0m0 3h0m0 1h0m0 2h0m0 1h0m0 2h0m0 2h0m1-17h0m0 4h0m0 1h0m0 2h0m0 1h0m0 1h0m0 2h0m0 1h0m0 1h0m0 5h0m0 2h0m0 2h0m0 1h0m0 1h0m0 1h0m0 2h0m0 1h0m1-27h0m0 1h0m0 1h0m0 1h0m0 1h0m0 1h0m0 2h0m0 9h0m20 0h0m0 7h0m0 1h0m0 1h0m0 4h0m0 2h0m0 5h0m0 6h0m0 7h0m0 5h0m0 1h0m0 1h0m0 3h0m1-37h0m0 3h0m0 1h0m0 6h0m0 5h0m0 5h0m0 4h0m0 1h0m0 6h0m0 3h0m0 1h0m0 1h0m0 2h0m4-60h0m0 1h0m0 2h0m0 2h0m0 1h0m0 1h0m0 1h0m0 1h0m0 1h0m0 1h0m0 2h0m0 1h0m0 1h0m0 2h0m0 1h0m1-20h0m0 1h0m0 1h0m0 1h0m0 1h0m0 2h0m0 2h0m0 2h0m0 1h0m0 1h0m0 1h0m0 3h0m0 2h0m0 2h0m0 2h0m0 1h0m0 3h0m9 15h0m0 3h0m0 2h0m0 1h0m0 1h0m0 2h0m0 3h0m0 4h0m0 1h0m0 1h0m0 2h0m0 3h0m0 4h0m4-41h0m17-27h0m0 1h0m0 3h0m0 1h0m0 1h0m0 1h0m0 1h0m0 1h0m0 1h0m0 6h0m0 1h0m0 5h0m0 4h0m0 1h0m0 1h0m0 1h0m0 1h0m0 5h0m0 5h0m1-36h0m0 1h0m0 7h0m0 1h0m0 3h0m0 1h0m0 1h0m0 4h0m0 2h0m0 1h0m0 2h0m0 1h0m0 2h0m0 1h0m4-23h0m0 1h0m0 2h0m0 2h0m0 6h0m0 1h0m0 2h0m0 2h0m0 1h0m0 1h0m0 8h0m0 5h0m0 3h0m0 1h0m0 6h0m0 1h0m0 1h0m0 2h0m0 2h0m0 1h0m0 8h0m0 1h0m1-10h0m0 5h0m0 4h0m11-17h0m0 10h0m0 2h0m0 4h0m0 1h0m0 2h0m1-11h0m0 2h0m0 7h0m0 2h0m0 1h0m8-64h0m0 1h0m0 3h0m0 1h0m0 2h0m0 5h0m0 1h0m0 1h0m0 2h0m0 2h0m0 1h0m0 3h0m0 2h0m0 1h0m0 2h0m0 1h0m0 1h0m0 1h0m1-32h0m0 3h0m0 1h0m0 3h0m0 1h0m0 1h0m0 5h0m0 4h0m0 1h0m0 1h0m0 1h0m0 2h0m0 1h0m0 5h0m0 8h0m11-36h0m0 1h0m0 3h0m0 2h0m0 4h0m0 2h0m0 2h0m0 1h0m0 1h0m0 1h0m0 1h0m0 1h0m0 1h0m0 2h0m0 1h0m0 2h0m0 8h0m1-34h0m0 1h0m0 1h0m0 1h0m0 1h0m0 1h0m0 1h0m0 1h0m0 2h0m0 1h0m0 4h0m0 1h0m0 1h0m0 3h0m0 2h0m0 2h0m0 1h0m0 2h0m0 3h0m0 1h0m0 1h0m0 1h0m0 3h0m7 5h0m0 1h0m0 2h0m0 1h0m0 2h0m0 3h0m0 2h0m0 1h0m0 1h0m0 2h0m0 1h0m0 1h0m0 3h0m0 4h0m0 2h0m13-38h0m0 2h0m0 2h0m0 1h0m0 4h0m0 1h0m0 1h0m0 5h0m0 1h0m0 1h0m0 1h0m0 1h0m0 1h0m0 1h0m0 3h0m0 2h0m0 4h0m0 5h0m1-1h0m0 3h0m4-65h0m0 1h0m0 2h0m0 1h0m0 1h0m0 4h0m0 1h0m0 1h0m0 1h0m0 1h0m0 3h0m0 6h0m1-23h0m0 4h0m0 1h0m0 1h0m0 2h0m0 2h0m0 1h0m0 1h0m0 2h0m0 1h0m0 1h0m0 1h0m0 1h0m0 1h0m0 2h0m0 1h0m0 3h0m0 1h0m0 1h0m11 1h0m0 3h0m0 7h0m0 9h0m0 3h0m0 1h0m0 7h0m0 2h0m1-60h0m0 1h0m0 1h0m0 3h0m0 1h0m0 2h0m0 1h0m0 2h0m0 3h0m0 2h0m0 1h0m0 1h0m0 1h0m0 5h0m0 2h0m0 2h0m0 1h0m0 4h0m0 4h0m0 1h0m0 2h0m0 1h0m0 4h0m0 1h0m1 4h0m0 5h0m0 3h0m0 6h0m0 3h0m16-59h0m0 1h0m0 1h0m0 2h0m0 1h0m0 1h0m0 2h0m0 1h0m0 1h0m0 1h0m0 1h0m0 1h0m0 2h0m0 1h0m0 192h0m1-214h0m0 3h0m0 1h0m0 1h0m0 1h0m0 1h0m0 1h0m0 2h0m0 1h0m0 1h0m0 1h0m0 1h0m0 1h0m0 1h0m0 2h0m0 1h0m0 1h0m0 2h0m1-20h0m0 2h0m0 2h0m0 1h0m0 1h0m0 3h0m0 1h0m0 1h0m0 2h0m0 2h0m0 1h0m3-5h0m0 2h0m0 9h0m0 1h0m0 8h0m0 2h0m0 9h0m0 4h0m0 2h0m0 1h0m0 8h0m0 1h0m1-45h0m0 3h0m0 5h0m0 1h0m0 4h0m0 5h0m0 9h0m0 3h0m0 4h0m0 3h0m0 3h0m0 3h0m0 1h0m0 1h0m0 4h0m9 148h0m3-156h0m0 1h0m0 2h0m0 2h0m0 1h0m8-65h0m0 2h0m0 9h0m0 2h0m0 4h0m0 1h0m0 3h0m0 5h0m0 3h0m0 1h0m0 7h0m0 2h0m0 11h0m0 1h0m0 6h0m0 1h0m0 2h0m0 3h0m0 2h0m1-60h0m0 12h0m0 1h0m0 2h0m0 3h0m0 2h0m0 6h0m0 7h0m0 3h0m0 1h0m0 3h0m0 2h0m0 9h0m0 4h0m0 5h0m0 1h0m1 154h0m11-219h0m0 4h0m0 1h0m0 5h0m0 3h0m0 1h0m0 2h0m0 2h0m0 1h0m1-12h0m0 6h0m0 3h0m4 37h0m0 12h0m0 1h0m0 1h0m1-46h0m0 1h0m0 5h0m0 2h0m0 2h0m0 1h0m0 1h0m0 6h0m0 2h0m0 4h0m0 2h0m0 2h0m0 3h0m0 2h0m0 3h0m0 2h0m0 3h0m0 5h0m14-46h0m0 7h0m0 5h0m0 4h0m0 11h0m0 1h0m0 1h0m0 3h0m0 2h0m0 6h0m0 2h0m0 3h0m0 1h0m1-44h0m0 3h0m0 3h0m0 4h0m0 6h0m0 3h0m0 1h0m0 9h0m0 12h0m0 2h0m4-65h0m0 1h0m0 4h0m0 3h0m0 1h0m1-11h0m0 1h0m0 1h0m0 2h0m0 2h0m0 1h0m0 2h0m0 1h0m0 6h0m0 2h0m0 1h0m0 2h0m0 1h0m1-21h0m0 1h0m0 8h0m0 5h0m0 1h0m0 1h0m11-13h0m0 3h0m0 2h0m0 1h0m0 2h0m0 1h0m0 1h0m0 2h0m0 5h0m0 5h0m0 1h0m0 1h0m0 1h0m0 1h0m0 3h0m0 1h0m0 2h0m0 1h0m0 5h0m0 2h0m0 1h0m1-44h0m0 8h0m0 1h0m0 1h0m0 1h0m0 3h0m0 1h0m0 1h0m0 3h0m0 2h0m0 1h0m0 2h0m0 2h0m0 1h0m0 2h0m0 1h0m0 2h0m0 2h0m0 4h0m0 3h0m7-1h0m0 3h0m0 2h0m0 1h0m0 1h0m0 1h0m0 3h0m0 1h0m0 2h0m0 1h0m0 1h0m0 3h0m0 2h0m0 1h0m0 2h0m14-49h0m0 2h0m0 3h0m0 2h0m0 1h0m0 3h0m0 2h0m0 1h0m0 4h0m0 2h0m0 2h0m0 1h0m0 1h0m0 1h0m0 3h0m0 8h0m0 2h0m0 1h0m0 1h0m0 1h0m0 1h0m0 3h0m0 1h0m1 1h0m0 2h0m0 1h0m3-66h0m0 1h0m0 2h0m0 1h0m0 1h0m0 1h0m0 2h0m0 3h0m0 1h0m0 1h0m0 1h0m0 1h0m0 1h0m0 2h0m1-18h0m0 1h0m0 1h0m0 1h0m0 2h0m0 3h0m0 1h0m0 3h0m0 4h0m9 19h0m0 2h0m0 1h0m0 2h0m0 3h0m0 6h0m0 1h0m0 2h0m0 2h0m0 2h0m0 2h0m0 1h0m0 1h0m0 1h0m0 2h0m0 1h0m0 1h0m0 2h0m7-67h0m1 1h0m0 1h0m0 2h0m0 1h0m0 2h0m0 2h0m1-7h0m0 1h0m0 3h0m13-6h0m0 2h0m4 16h0m0 2h0m0 3h0m0 2h0m0 4h0m0 5h0m0 3h0m0 2h0m0 2h0m0 4h0m0 5h0m0 2h0m0 4h0m0 4h0m0 7h0m1-54h0m0 12h0m0 2h0m0 1h0m0 11h0m0 4h0m0 5h0m0 1h0m0 1h0m0 1h0m0 5h0m0 2h0m0 3h0m0 2h0m11 4h0m1-26h0m0 1h0m0 1h0m0 2h0m0 1h0m0 1h0m0 2h0m0 1h0m0 2h0m0 3h0m0 1h0m0 1h0m0 1h0m0 2h0m0 1h0m0 1h0m0 1h0m0 1h0m0 2h0m0 1h0m7-65h0m0 1h0m0 3h0m0 1h0m0 1h0m0 3h0m0 6h0m1-17h0m0 1h0m0 1h0m0 2h0m0 1h0m0 2h0m0 1h0m0 3h0m0 3h0m0 3h0m0 1h0m0 5h0m0 1h0m1-23h0m0 1h0m0 1h0m0 1h0m0 4h0m0 1h0m0 1h0m0 2h0m10-9h0m0 4h0m0 8h0m0 2h0m0 9h0m0 3h0m0 1h0m0 2h0m0 3h0m0 3h0m1-35h0m0 3h0m0 2h0m0 1h0m0 8h0m0 1h0m0 11h0m0 5h0m0 1h0m0 3h0m0 2h0m0 1h0m0 2h0m0 1h0m0 2h0m1-41h0m0 7h0m0 9h0m0 2h0m0 1h0m0 10h0m0 180h0m7-161h0m0 3h0m0 1h0m0 1h0m0 1h0m0 1h0m0 2h0m0 2h0m0 1h0m0 1h0m0 1h0m13-35h0m0 2h0m0 7h0m0 1h0m0 1h0m0 2h0m0 3h0m0 2h0m0 2h0m0 13h0m0 2h0m0 1h0m1-39h0m0 9h0m0 1h0m0 3h0m0 4h0m0 7h0m0 1h0m0 1h0m0 3h0m0 1h0m0 2h0m0 2h0m0 2h0m0 151h0m3-215h0m0 2h0m0 2h0m0 3h0m0 2h0m0 3h0m0 1h0m0 1h0m0 2h0m0 3h0m0 2h0m1-20h0m0 3h0m0 1h0m0 4h0m0 3h0m0 2h0m0 1h0m0 1h0m0 4h0m0 2h0m0 2h0m0 1h0m1-18h0m0 3h0m0 2h0m0 5h0m0 5h0m0 2h0m12-13h0m8 55h0m9-65h0m0 2h0m0 1h0m0 1h0m0 6h0m0 2h0m0 3h0m0 1h0m0 1h0m0 4h0m0 1h0m0 1h0m1-24h0m0 3h0m0 1h0m0 2h0m0 2h0m0 2h0m0 1h0m0 3h0m0 2h0m0 1h0m0 5h0m0 1h0m0 1h0m1-25h0m0 3h0m0 3h0m0 1h0m0 1h0m0 1h0m0 9h0m3-14h0m0 6h0m0 10h0m0 3h0m0 2h0m0 3h0m0 7h0m0 1h0m0 4h0m0 3h0m0 4h0m0 4h0m0 1h0m0 3h0m0 7h0m0 2h0m0 2h0m1-59h0m0 5h0m0 7h0m0 3h0m0 1h0m0 12h0m0 1h0m0 1h0m0 1h0m0 5h0m0 13h0m0 9h0m0 2h0m12-8h0m0 1h0m0 2h0m0 2h0m0 1h0m8-63h0m0 5h0m0 1h0m1-6h0m0 1h0m0 2h0m0 2h0m0 1h0m0 1h0m0 4h0m0 7h0m0 1h0m11-20h0m0 1h0m0 1h0m0 1h0m0 3h0m0 1h0m0 3h0m0 2h0m0 1h0m0 19h0m1-32h0m0 1h0m0 3h0m0 1h0m0 1h0m0 1h0m0 1h0m0 3h0m0 1h0m0 3h0m0 1h0m0 3h0m0 4h0m0 2h0m0 2h0m0 1h0m0 1h0m0 3h0m1-32h0m0 1h0m0 4h0m0 7h0m0 2h0m0 1h0m0 1h0m0 5h0m19-14h0m0 2h0m0 1h0m0 6h0m0 3h0m0 7h0m0 1h0m0 1h0m0 5h0m0 3h0m0 3h0m0 1h0m0 3h0m0 1h0m0 4h0m0 12h0m0 5h0m1-62h0m0 12h0m0 4h0m0 6h0m0 3h0m0 4h0m0 4h0m0 3h0m0 4h0m0 4h0m0 3h0m0 2h0m0 4h0m0 2h0m4-58h0m0 2h0m0 1h0m0 3h0m0 2h0m0 1h0m0 2h0m0 1h0m0 1h0m0 3h0m0 2h0m0 2h0m0 1h0m1-20h0m0 1h0m0 5h0m0 1h0m0 3h0m0 2h0m11-13h0m0 1h0m0 7h0m0 1h0m0 1h0m1-9h0m0 2h0m0 2h0m0 3h0m0 2h0m0 1h0m0 1h0m0 5h0m0 3h0m0 2h0m0 4h0m1-26h0m0 1h0m0 2h0m0 1h0m0 2h0m0 2h0m0 2h0m0 2h0m0 2h0m0 3h0m0 7h0m7 20h0m0 3h0m0 2h0m0 2h0m0 1h0m0 2h0m0 1h0m0 1h0m0 1h0m0 4h0m0 1h0m0 1h0m0 1h0m0 2h0m14-64h0m0 3h0m0 1h0m0 2h0m0 1h0m0 8h0m0 3h0m0 4h0m0 3h0m0 1h0m0 2h0m0 4h0m0 1h0m0 5h0m0 1h0m0 2h0m0 4h0m0 7h0m0 1h0m0 1h0m0 3h0m0 1h0m0 2h0m1-11h0m0 7h0m0 8h0m12-32h0m0 1h0m0 2h0m0 6h0m0 1h0m0 1h0m0 2h0m0 1h0m0 1h0m0 1h0m0 1h0m0 1h0m0 2h0m0 5h0m0 2h0m0 1h0m0 2h0m0 1h0m1 0h0m8-57h0m0 1h0m0 3h0m0 2h0m0 3h0m0 6h0m1-22h0m0 1h0m0 2h0m0 4h0m0 2h0m0 3h0m0 4h0m0 6h0m9 189h0m7-177h0m0 13h0m0 5h0m0 5h0m0 2h0m1-61h0m0 1h0m0 4h0m0 1h0m0 9h0m0 3h0m0 2h0m0 4h0m0 3h0m0 1h0m0 2h0m0 5h0m0 2h0m0 9h0m0 2h0m0 8h0m0 6h0m0 4h0m20-66h0m0 3h0m0 2h0m0 4h0m0 3h0m0 1h0m0 7h0m1-20h0m0 2h0m0 3h0m0 9h0m0 3h0m0 2h0m0 1h0m0 1h0m0 1h0m0 1h0m0 1h0m0 2h0" stroke="#ffa500" stroke-width="3.6" stroke-linecap="round" fill="none"/>
<path transform="translate(.5 .5)" d="M162 485h0m0 5h0m0 1h0m0 4h0m0 8h0m0 5h0m0 3h0m0 7h0m0 2h0m0 5h0m0 1h0m0 6h0m0 3h0m0 4h0m0 7h0m1-59h0m0 3h0m0 1h0m0 2h0m0 3h0m0 6h0m0 1h0m0 1h0m0 1h0m0 2h0m0 2h0m0 3h0m0 7h0m0 2h0m0 11h0m0 4h0m0 19h0m1-72h0m0 1h0m0 2h0m0 2h0m0 3h0m0 5h0m0 2h0m0 4h0m0 8h0m0 5h0m0 7h0m0 5h0m0 1h0m0 2h0m0 1h0m0 1h0m0 6h0m0 3h0m0 2h0m0 1h0m0 4h0m0 2h0m0 3h0m0 4h0m0 7h0m1-49h0m0 5h0m0 3h0m0 3h0m0 7h0m0 3h0m0 4h0m0 6h0m0 5h0m0 4h0m0 5h0m1-54h0m0 9h0m0 8h0m0 1h0m0 3h0m0 4h0m0 6h0m0 2h0m0 2h0m0 4h0m0 1h0m0 2h0m0 10h0m0 4h0m1-53h0m0 8h0m0 6h0m0 1h0m0 5h0m0 5h0m0 1h0m0 5h0m0 2h0m0 3h0m0 6h0m0 2h0m0 5h0m0 1h0m0 6h0m0 6h0m0 16h0m1-100h0m0 2h0m0 8h0m0 1h0m0 3h0m0 13h0m0 1h0m0 2h0m0 8h0m0 2h0m0 3h0m0 7h0m0 2h0m0 2h0m0 6h0m0 2h0m0 1h0m0 1h0m0 3h0m0 1h0m0 7h0m0 4h0m1-109h0m0 1h0m0 2h0m0 1h0m0 3h0m0 1h0m0 2h0m0 1h0m0 4h0m0 2h0m0 1h0m0 2h0m0 1h0m0 4h0m0 3h0m0 1h0m0 3h0m0 3h0m0 2h0m0 1h0m0 14h0m0 9h0m0 3h0m0 24h0m0 4h0m0 26h0m1-73h0m0 1h0m0 10h0m0 2h0m0 7h0m0 7h0m0 3h0m0 2h0m0 2h0m0 3h0m0 1h0m0 1h0m0 2h0m0 3h0m0 1h0m0 7h0m0 4h0m1-65h0m0 19h0m0 6h0m0 1h0m0 1h0m0 2h0m0 2h0m0 3h0m0 1h0m0 5h0m0 1h0m0 1h0m0 1h0m0 1h0m0 14h0m0 3h0m0 5h0m1-58h0m0 1h0m0 4h0m0 2h0m0 6h0m0 3h0m0 1h0m0 7h0m0 9h0m0 5h0m0 2h0m0 2h0m0 1h0m0 10h0m0 2h0m0 1h0m0 6h0m0 8h0m1-62h0m0 4h0m0 4h0m0 1h0m0 5h0m0 4h0m0 3h0m0 4h0m0 1h0m0 5h0m0 3h0m0 3h0m0 3h0m0 3h0m0 1h0m0 5h0m1-73h0m0 2h0m0 1h0m0 4h0m0 1h0m0 2h0m0 1h0m0 1h0m0 3h0m0 2h0m0 1h0m0 3h0m0 12h0m0 2h0m0 4h0m0 1h0m0 4h0m0 4h0m0 4h0m0 8h0m1-46h0m0 4h0m0 10h0m0 6h0m0 3h0m0 1h0m0 3h0m0 2h0m0 2h0m0 1h0m0 2h0m0 10h0m0 1h0m0 2h0m0 1h0m2-40h0m0 4h0m0 13h0m0 7h0m0 3h0m0 3h0m0 5h0m0 1h0m0 4h0m0 1h0m0 4h0m1-92h0m0 1h0m0 2h0m0 4h0m0 1h0m0 4h0m0 1h0m0 3h0m0 2h0m0 1h0m0 2h0m0 2h0m0 2h0m0 3h0m0 2h0m0 1h0m0 1h0m0 3h0m0 2h0m0 1h0m0 14h0m0 1h0m0 2h0m0 6h0m0 2h0m0 3h0m0 10h0m0 5h0m0 3h0m1-65h0m0 12h0m0 5h0m0 4h0m0 1h0m0 2h0m0 2h0m0 5h0m0 2h0m0 3h0m0 3h0m0 1h0m0 5h0m0 4h0m0 2h0m0 2h0m0 2h0m0 4h0m1-83h0m0 13h0m0 1h0m0 6h0m0 6h0m0 4h0m0 2h0m0 9h0m0 2h0m0 4h0m0 3h0m0 2h0m0 2h0m0 3h0m0 7h0m0 1h0m0 2h0m0 1h0m0 2h0m0 1h0m0 10h0m0 7h0m0 1h0m0 3h0m2-99h0m0 4h0m0 4h0m0 1h0m0 3h0m0 2h0m0 5h0m0 2h0m0 3h0m0 5h0m0 2h0m0 2h0m0 6h0m0 4h0m0 3h0m0 2h0m0 2h0m0 3h0m0 8h0m0 5h0m0 2h0m0 5h0m0 7h0m0 2h0m0 1h0m0 20h0m1-77h0m0 2h0m0 1h0m0 2h0m0 3h0m0 2h0m0 5h0m0 1h0m0 8h0m0 2h0m0 1h0m0 2h0m0 7h0m0 8h0m0 5h0m0 13h0m1-51h0m0 1h0m0 4h0m0 1h0m0 2h0m0 2h0m0 1h0m0 6h0m0 3h0m0 1h0m0 1h0m0 2h0m0 1h0m0 2h0m0 4h0m0 2h0m0 1h0m0 6h0m0 11h0m0 2h0m0 9h0m0 11h0m1-57h0m0 4h0m0 7h0m0 2h0m0 3h0m0 3h0m0 1h0m0 5h0m0 2h0m0 1h0m0 3h0m0 2h0m0 6h0m0 2h0m0 3h0m0 1h0m0 2h0m0 13h0m1-52h0m0 7h0m0 6h0m0 1h0m0 9h0m0 3h0m0 5h0m0 4h0m0 5h0m0 1h0m0 3h0m0 3h0m0 9h0m1-53h0m0 6h0m0 6h0m0 9h0m0 4h0m0 4h0m0 5h0m0 5h0m0 5h0m0 2h0m0 5h0m0 13h0m1-78h0m0 17h0m0 4h0m0 4h0m0 4h0m0 3h0m0 7h0m0 2h0m0 6h0m0 2h0m0 2h0m0 2h0m0 4h0m0 4h0m1-58h0m0 2h0m0 3h0m0 4h0m0 2h0m0 2h0m0 5h0m0 1h0m0 4h0m0 5h0m0 2h0m0 1h0m0 11h0m0 1h0m0 1h0m0 1h0m0 2h0m0 5h0m1-69h0m0 1h0m0 1h0m0 1h0m0 2h0m0 3h0m0 2h0m0 2h0m0 1h0m0 5h0m0 3h0m0 1h0m0 2h0m0 4h0m0 2h0m0 4h0m0 5h0m0 12h0m0 2h0m1-68h0m0 10h0m0 2h0m0 15h0m0 4h0m0 3h0m0 4h0m0 8h0m0 11h0m0 1h0m0 1h0m0 6h0m1-58h0m0 12h0m0 1h0m0 7h0m0 6h0m0 2h0m0 2h0m0 7h0m0 8h0m0 1h0m0 5h0m0 4h0m0 5h0m0 3h0m0 1h0m0 9h0m1-78h0m0 13h0m0 2h0m0 2h0m0 4h0m0 7h0m0 8h0m0 1h0m0 1h0m0 2h0m0 2h0m0 4h0m0 1h0m0 7h0m0 7h0m0 2h0m1-66h0m0 10h0m0 1h0m0 8h0m0 3h0m0 1h0m0 1h0m0 3h0m0 1h0m0 1h0m0 13h0m0 7h0m0 3h0m0 10h0m0 4h0m1-76h0m0 12h0m0 7h0m0 15h0m0 5h0m0 3h0m0 3h0m0 1h0m0 4h0m0 6h0m0 1h0m0 3h0m0 4h0m0 1h0m0 1h0m0 4h0m0 6h0m0 5h0m0 2h0m0 5h0m1-79h0m0 22h0m0 4h0m0 13h0m0 1h0m0 5h0m0 2h0m0 2h0m0 2h0m0 1h0m0 2h0m0 1h0m0 1h0m0 2h0m0 1h0m0 3h0m0 2h0m0 6h0m0 3h0m1-57h0m0 9h0m0 4h0m0 2h0m0 3h0m0 1h0m0 2h0m0 5h0m0 7h0m0 2h0m0 4h0m0 23h0m1-69h0m0 4h0m0 3h0m0 1h0m0 2h0m0 2h0m0 1h0m0 1h0m0 2h0m0 1h0m0 5h0m0 2h0m0 1h0m0 2h0m0 4h0m0 4h0m0 2h0m0 1h0m0 11h0m0 2h0m0 10h0m0 3h0m0 9h0m1-52h0m0 20h0m0 5h0m0 8h0m0 3h0m0 1h0m0 8h0m0 6h0m0 5h0m0 2h0m0 2h0m0 1h0m0 2h0m0 3h0m0 4h0m0 3h0m1-56h0m0 3h0m0 3h0m0 14h0m0 2h0m0 2h0m0 3h0m0 3h0m0 1h0m0 1h0m0 2h0m0 1h0m0 2h0m0 3h0m0 5h0m0 2h0m0 1h0m0 3h0m0 2h0m0 2h0m1-60h0m0 4h0m0 14h0m0 6h0m0 8h0m0 1h0m0 2h0m0 5h0m0 7h0m0 6h0m2-74h0m0 7h0m0 8h0m0 3h0m0 1h0m0 2h0m0 5h0m0 6h0m0 2h0m0 4h0m0 4h0m0 5h0m0 3h0m0 8h0m0 20h0m1-64h0m0 1h0m0 6h0m0 1h0m0 4h0m0 3h0m0 1h0m0 1h0m0 4h0m0 3h0m0 1h0m0 5h0m0 11h0m0 2h0m0 4h0m0 1h0m0 1h0m0 3h0m0 2h0m0 11h0m1-63h0m0 25h0m0 3h0m0 2h0m0 2h0m0 5h0m0 5h0m0 5h0m0 1h0m0 1h0m0 5h0m0 1h0m0 1h0m0 7h0m0 2h0m0 7h0m1-76h0m0 8h0m0 1h0m0 2h0m0 4h0m0 1h0m0 5h0m0 4h0m0 6h0m0 7h0m0 2h0m0 2h0m0 15h0m0 1h0m1-60h0m0 6h0m0 14h0m0 4h0m0 5h0m0 2h0m0 3h0m0 2h0m0 5h0m0 5h0m0 5h0m0 2h0m0 1h0m0 2h0m1-83h0m0 10h0m0 4h0m0 2h0m0 7h0m0 9h0m0 2h0m0 1h0m0 6h0m0 2h0m0 5h0m0 1h0m0 9h0m0 6h0m0 9h0m0 3h0m0 6h0m1-66h0m0 8h0m0 1h0m0 2h0m0 2h0m0 3h0m0 1h0m0 4h0m0 5h0m0 3h0m0 5h0m0 3h0m0 2h0m0 3h0m0 6h0m0 1h0m0 1h0m0 4h0m0 7h0m0 2h0m1-71h0m0 11h0m0 9h0m0 8h0m0 4h0m0 1h0m0 12h0m0 6h0m0 3h0m1-31h0m0 3h0m0 4h0m0 2h0m0 8h0m0 3h0m0 5h0m0 3h0m0 5h0m0 2h0m0 1h0m0 3h0m0 3h0m0 1h0m1-70h0m0 3h0m0 7h0m0 2h0m0 1h0m0 6h0m0 1h0m0 1h0m0 2h0m0 1h0m0 2h0m0 6h0m0 3h0m0 4h0m0 3h0m0 3h0m0 1h0m0 5h0m0 2h0m0 4h0m0 22h0m1-70h0m0 6h0m0 4h0m0 1h0m0 2h0m0 1h0m0 2h0m0 4h0m0 1h0m0 11h0m2-10h0m0 11h0m0 4h0m0 2h0m0 4h0m0 3h0m0 2h0m0 2h0m0 1h0m0 2h0m0 5h0m0 1h0m0 4h0m0 3h0m0 1h0m0 18h0m1-90h0m0 5h0m0 27h0m0 3h0m0 6h0m0 2h0m0 5h0m0 3h0m0 4h0m0 2h0m0 2h0m0 1h0m0 3h0m0 2h0m0 1h0m0 4h0m0 1h0m0 5h0m0 5h0m0 4h0m0 1h0m0 4h0m0 3h0m0 12h0m1-116h0m0 3h0m0 7h0m0 1h0m0 2h0m0 7h0m0 1h0m0 3h0m0 1h0m0 1h0m0 1h0m0 1h0m0 2h0m0 3h0m0 1h0m0 1h0m0 3h0m0 1h0m0 3h0m0 6h0m0 7h0m1-37h0m0 8h0m0 4h0m0 15h0m0 4h0m0 1h0m0 2h0m0 1h0m0 2h0m0 2h0m0 2h0m0 3h0m0 1h0m0 3h0m0 10h0m0 7h0m0 12h0m1-72h0m0 11h0m0 6h0m0 2h0m0 9h0m0 6h0m0 6h0m0 4h0m0 3h0m0 3h0m0 1h0m0 1h0m0 2h0m0 3h0m0 11h0m0 10h0m0 5h0m1-84h0m0 13h0m0 2h0m0 3h0m0 4h0m0 2h0m0 2h0m0 3h0m0 2h0m0 1h0m0 2h0m0 4h0m0 3h0m0 2h0m0 3h0m0 4h0m0 1h0m0 6h0m0 8h0m0 11h0m1-93h0m0 1h0m0 6h0m0 1h0m0 1h0m0 2h0m0 3h0m0 1h0m0 4h0m0 2h0m0 2h0m0 9h0m0 3h0m0 3h0m0 5h0m0 3h0m0 1h0m0 5h0m0 9h0m0 3h0m0 9h0m1-96h0m0 1h0m0 1h0m0 3h0m0 1h0m0 1h0m0 1h0m0 1h0m0 3h0m0 2h0m0 1h0m0 2h0m0 1h0m0 2h0m0 1h0m0 3h0m0 2h0m0 1h0m0 1h0m0 1h0m0 11h0m1-12h0m0 7h0m0 1h0m0 2h0m0 4h0m0 3h0m0 1h0m0 4h0m0 2h0m0 1h0m0 1h0m0 2h0m0 2h0m0 4h0m0 1h0m0 6h0m0 1h0m0 7h0m0 2h0m0 13h0m0 15h0m1-61h0m0 3h0m0 1h0m0 8h0m0 1h0m0 2h0m0 4h0m0 1h0m0 2h0m0 6h0m0 1h0m0 5h0m0 1h0m0 2h0m0 2h0m0 2h0m0 1h0m0 1h0m0 2h0m0 2h0m1-72h0m0 16h0m0 2h0m0 3h0m0 13h0m0 2h0m0 8h0m0 3h0m0 1h0m0 1h0m0 1h0m0 1h0m0 11h0m0 10h0m1-62h0m0 14h0m0 3h0m0 4h0m0 2h0m0 9h0m0 3h0m0 4h0m0 2h0m0 2h0m0 3h0m0 3h0m0 7h0m0 2h0m0 1h0m1-57h0m0 4h0m0 1h0m0 1h0m0 1h0m0 2h0m0 5h0m0 9h0m0 3h0m0 2h0m0 1h0m0 3h0m0 3h0m0 6h0m0 3h0m0 2h0m0 4h0m0 1h0m0 4h0m0 3h0m0 5h0m0 4h0m0 1h0m1-65h0m0 18h0m0 6h0m0 4h0m0 1h0m0 3h0m0 2h0m0 18h0m0 1h0m0 3h0m0 3h0m0 4h0m0 1h0m0 3h0m0 4h0m0 2h0m0 3h0m0 1h0m0 1h0m1-41h0m0 8h0m0 2h0m0 1h0m0 3h0m0 1h0m0 3h0m0 2h0m0 2h0m0 2h0m0 2h0m0 3h0m0 4h0m0 3h0m0 3h0m0 6h0m1-82h0m0 22h0m0 1h0m0 1h0m0 5h0m0 4h0m0 1h0m0 4h0m0 1h0m0 3h0m0 2h0m0 2h0m0 3h0m0 1h0m0 2h0m0 3h0m0 5h0m0 6h0m1-81h0m0 8h0m0 7h0m0 3h0m0 1h0m0 2h0m0 7h0m0 1h0m0 2h0m0 1h0m0 2h0m0 1h0m0 4h0m0 4h0m0 3h0m0 5h0m0 2h0m0 2h0m0 5h0m1-61h0m0 10h0m0 3h0m0 7h0m0 2h0m0 3h0m0 3h0m0 1h0m0 3h0m0 1h0m0 1h0m0 2h0m0 3h0m0 1h0m0 3h0m0 3h0m0 4h0m0 21h0m0 3h0m0 1h0m0 1h0m0 2h0m0 1h0m1-66h0m0 16h0m0 17h0m0 1h0m0 3h0m0 3h0m0 2h0m0 2h0m0 1h0m0 2h0m0 1h0m0 2h0m0 2h0m0 5h0m0 1h0m0 3h0m0 5h0m0 5h0m0 2h0m0 2h0m0 14h0m1-121h0m0 10h0m0 3h0m0 4h0m0 2h0m0 1h0m0 9h0m0 5h0m0 12h0m0 5h0m0 8h0m0 1h0m0 8h0m0 5h0m0 6h0m0 4h0m0 6h0m0 1h0m0 6h0m0 3h0m0 1h0m0 6h0m0 8h0m1-111h0m0 3h0m0 2h0m0 1h0m0 11h0m1 4h0m0 2h0m0 2h0m0 2h0m0 3h0m0 3h0m0 6h0m0 2h0m0 1h0m0 6h0m0 5h0m0 3h0m0 2h0m0 2h0m0 4h0m0 3h0m0 3h0m0 6h0m0 2h0m0 6h0m0 6h0m0 3h0m0 6h0m0 9h0m0 10h0m1-75h0m0 18h0m0 1h0m0 1h0m0 2h0m0 7h0m0 3h0m0 3h0m0 2h0m0 3h0m0 4h0m0 1h0m0 5h0m0 4h0m0 3h0m0 3h0m0 1h0m0 3h0m0 1h0m0 3h0m0 8h0m0 5h0m1-81h0m0 2h0m0 6h0m0 4h0m0 1h0m0 2h0m0 7h0m0 3h0m0 3h0m0 5h0m0 3h0m0 1h0m0 1h0m0 3h0m0 4h0m0 2h0m0 6h0m0 5h0m0 3h0m1-45h0m0 13h0m0 1h0m0 13h0m0 5h0m0 4h0m2-63h0m0 15h0m0 3h0m0 1h0m0 4h0m0 2h0m0 7h0m0 1h0m0 2h0m0 1h0m0 1h0m0 2h0m0 5h0m0 1h0m0 2h0m0 2h0m0 3h0m0 3h0m0 6h0m0 9h0m1-95h0m0 4h0m0 30h0m0 12h0m0 4h0m0 2h0m0 1h0m0 1h0m0 7h0m0 2h0m0 6h0m0 5h0m0 3h0m0 2h0m0 7h0m0 5h0m1-85h0m0 8h0m0 2h0m0 3h0m0 4h0m0 2h0m0 1h0m0 3h0m0 1h0m0 5h0m0 2h0m0 1h0m0 2h0m0 4h0m0 3h0m0 1h0m0 5h0m0 12h0m0 2h0m0 7h0m0 11h0m0 2h0m1-45h0m0 13h0m0 3h0m0 1h0m0 4h0m0 9h0m0 4h0m0 4h0m0 3h0m0 4h0m0 1h0m0 9h0m0 7h0m1-90h0m0 13h0m0 2h0m0 2h0m0 3h0m0 7h0m0 4h0m0 1h0m0 1h0m0 3h0m0 2h0m0 1h0m0 7h0m0 3h0m0 3h0m0 1h0m0 3h0m0 7h0m0 2h0m0 4h0m0 3h0m1-56h0m0 19h0m0 2h0m0 17h0m0 14h0m0 9h0m1-56h0m0 1h0m0 5h0m0 2h0m0 4h0m0 4h0m0 3h0m0 1h0m0 1h0m0 1h0m0 2h0m0 1h0m0 10h0m0 1h0m0 6h0m0 1h0m0 3h0m0 4h0m0 3h0m0 7h0m0 3h0m1-80h0m0 11h0m0 5h0m0 2h0m0 2h0m0 3h0m0 8h0m0 9h0m0 3h0m0 2h0m0 1h0m0 2h0m0 2h0m0 3h0m0 2h0m0 1h0m0 9h0m1-61h0m0 6h0m0 7h0m0 2h0m0 2h0m0 5h0m0 1h0m0 8h0m0 4h0m0 2h0m0 4h0m0 3h0m0 11h0m0 1h0m1-56h0m0 2h0m0 2h0m0 2h0m0 1h0m0 2h0m0 2h0m0 4h0m0 2h0m0 4h0m0 2h0m0 3h0m0 1h0m0 4h0m0 2h0m0 3h0m0 2h0m0 3h0m0 5h0m1-41h0m0 9h0m0 3h0m0 4h0m0 3h0m0 6h0m0 2h0m0 10h0m0 3h0m0 4h0m0 1h0m0 2h0m0 2h0m0 4h0m0 5h0m0 5h0m0 3h0m0 8h0m0 3h0m1-63h0m0 1h0m0 9h0m0 8h0m0 1h0m0 3h0m0 1h0m0 1h0m0 6h0m0 8h0m0 2h0m0 3h0m0 3h0m0 8h0m0 9h0m1-69h0m0 9h0m0 4h0m0 6h0m0 1h0m0 2h0m0 3h0m0 2h0m0 6h0m0 2h0m0 3h0m0 2h0m0 3h0m0 2h0m0 1h0m0 3h0m0 1h0m0 12h0m0 3h0m0 5h0m1-103h0m0 26h0m0 6h0m0 3h0m0 7h0m0 9h0m0 13h0m0 1h0m0 1h0m0 6h0m0 6h0m0 1h0m0 4h0m0 2h0m0 3h0m0 2h0m0 1h0m0 2h0m0 3h0m0 1h0m0 8h0m1-105h0m0 8h0m0 8h0m0 3h0m0 2h0m0 1h0m0 3h0m0 1h0m0 1h0m0 1h0m0 1h0m0 1h0m0 5h0m0 3h0m0 3h0m0 1h0m0 2h0m0 3h0m0 3h0m1-24h0m0 8h0m0 8h0m0 4h0m0 6h0m0 3h0m0 2h0m0 1h0m0 3h0m0 2h0m0 5h0m0 2h0m0 2h0m0 3h0m0 2h0m0 5h0m0 1h0m0 8h0m1-73h0m0 5h0m0 21h0m0 5h0m0 1h0m0 5h0m0 8h0m0 3h0m0 13h0m1-62h0m0 12h0m0 1h0m0 1h0m0 5h0m0 1h0m0 1h0m0 3h0m0 1h0m0 11h0m0 5h0m0 3h0m0 1h0m0 3h0m0 6h0m0 4h0m0 1h0m0 6h0m0 5h0m1-81h0m0 10h0m0 5h0m0 3h0m0 1h0m0 4h0m0 1h0m0 3h0m0 1h0m0 5h0m0 5h0m0 3h0m0 3h0m0 1h0m0 16h0m0 2h0m1-47h0m0 3h0m0 2h0m0 9h0m0 3h0m0 5h0m0 5h0m0 2h0m0 4h0m0 2h0m0 3h0m0 2h0m0 3h0m0 9h0m0 2h0m0 3h0m1-50h0m0 11h0m0 1h0m0 6h0m0 6h0m0 2h0m0 5h0m0 9h0m0 1h0m0 3h0m0 5h0m0 3h0m0 1h0m0 4h0m0 6h0m0 3h0m1-88h0m0 10h0m0 6h0m0 10h0m0 1h0m0 1h0m0 1h0m0 1h0m0 5h0m0 2h0m0 1h0m0 4h0m0 2h0m0 6h0m0 7h0m0 3h0m0 13h0m0 6h0m0 1h0m0 21h0m1-82h0m0 3h0m0 2h0m0 5h0m0 3h0m0 4h0m0 18h0m0 3h0m0 2h0m0 8h0m0 2h0m0 4h0m0 23h0m1-70h0m0 14h0m0 6h0m0 2h0m0 3h0m0 3h0m0 5h0m0 1h0m0 1h0m0 3h0m0 5h0m0 3h0m0 7h0m0 1h0m0 3h0m1-54h0m0 5h0m0 4h0m0 5h0m0 5h0m0 4h0m0 1h0m0 4h0m0 6h0m0 5h0m0 7h0m0 2h0m0 1h0m0 5h0m0 11h0m1-102h0m0 15h0m0 5h0m0 4h0m0 1h0m0 2h0m0 2h0m0 3h0m0 6h0m0 3h0m0 13h0m0 1h0m0 3h0m0 1h0m0 13h0m0 2h0m0 2h0m0 4h0m0 2h0m0 2h0m0 2h0m0 6h0m0 5h0m1-94h0m0 2h0m0 8h0m0 1h0m0 3h0m0 1h0m0 8h0m0 6h0m0 7h0m0 3h0m0 1h0m0 1h0m0 3h0m0 1h0m0 16h0m0 1h0m0 3h0m0 3h0m1-35h0m0 5h0m0 9h0m0 1h0m0 5h0m0 5h0m0 7h0m0 4h0m0 3h0m0 3h0m0 1h0m0 8h0m1-42h0m0 2h0m0 7h0m0 4h0m0 2h0m0 2h0m0 2h0m0 2h0m0 4h0m0 5h0m0 3h0m0 2h0m0 1h0m0 1h0m0 2h0m0 2h0m0 2h0m0 2h0m0 2h0m0 1h0m0 6h0m0 18h0m3-104h0m0 17h0m0 7h0m0 1h0m0 6h0m0 5h0m0 5h0m0 2h0m0 3h0m0 1h0m0 5h0m0 3h0m0 3h0m0 2h0m0 2h0m0 3h0m0 3h0m0 5h0m0 1h0m0 6h0m0 1h0m0 2h0m0 6h0m0 8h0m0 3h0m1-98h0m0 22h0m0 2h0m0 5h0m0 3h0m0 2h0m0 2h0m0 1h0m0 1h0m0 2h0m0 2h0m0 2h0m0 3h0m0 1h0m0 2h0m0 2h0m0 2h0m0 7h0m0 3h0m0 5h0m0 4h0m0 3h0m1-100h0m0 7h0m0 3h0m0 6h0m0 5h0m0 6h0m0 4h0m0 4h0m0 9h0m0 4h0m0 4h0m0 8h0m0 6h0m0 4h0m0 1h0m0 6h0m0 5h0m0 1h0m0 4h0m0 2h0m0 5h0m0 2h0m0 5h0m0 12h0m1-117h0m0 8h0m0 2h0m1-11h0m0 2h0m0 5h0m0 8h0m0 2h0m0 4h0m0 5h0m0 3h0m0 3h0m0 10h0m0 2h0m0 2h0m0 13h0m0 10h0m0 7h0m0 5h0m0 3h0m0 11h0m0 7h0m0 3h0m0 8h0m0 10h0m1-60h0m0 2h0m0 4h0m0 2h0m0 1h0m0 1h0m0 1h0m0 5h0m0 4h0m0 4h0m0 3h0m0 2h0m0 6h0m0 2h0m0 1h0m0 2h0m0 3h0m0 2h0m0 11h0m0 3h0m1-48h0m0 1h0m0 9h0m0 1h0m0 4h0m0 1h0m0 4h0m0 3h0m0 2h0m0 4h0m0 1h0m0 4h0m0 1h0m0 4h0m0 3h0m0 3h0m0 3h0m0 7h0m0 3h0m1-116h0m0 6h0m0 3h0m0 6h0m0 7h0m0 1h0m0 1h0m0 3h0m0 1h0m0 2h0m0 1h0m0 4h0m0 1h0m0 2h0m0 1h0m0 5h0m0 2h0m0 1h0m0 5h0m0 2h0m0 6h0m0 1h0m0 2h0m0 3h0m0 4h0m1-71h0m0 4h0m0 1h0m0 3h0m0 1h0m0 2h0m0 1h0m0 1h0m0 1h0m0 2h0m0 1h0m0 3h0m0 2h0m0 4h0m0 1h0m0 4h0m0 3h0m0 7h0m0 3h0m0 3h0m0 2h0m0 4h0m1-37h0m0 11h0m0 7h0m0 2h0m0 9h0m0 13h0m0 5h0m0 1h0m0 3h0m0 2h0m0 3h0m0 3h0m0 2h0m0 5h0m0 3h0m1-59h0m0 4h0m0 9h0m0 2h0m0 2h0m0 1h0m0 5h0m0 2h0m0 3h0m0 2h0m0 1h0m0 4h0m0 2h0m0 4h0m0 3h0m0 5h0m0 2h0m0 2h0m0 2h0m0 6h0m1-61h0m0 1h0m0 5h0m0 2h0m0 1h0m0 8h0m0 3h0m0 10h0m0 4h0m0 4h0m0 2h0m0 1h0m0 5h0m1-67h0m0 10h0m0 4h0m0 3h0m0 4h0m0 6h0m0 6h0m0 1h0m0 1h0m0 7h0m0 2h0m0 5h0m0 7h0m0 3h0m0 8h0m1-43h0m0 3h0m0 4h0m0 2h0m0 1h0m0 1h0m0 4h0m0 2h0m0 2h0m0 3h0m0 5h0m0 2h0m0 3h0m0 1h0m0 6h0m0 7h0m0 1h0m0 2h0m1-36h0m0 4h0m0 4h0m0 1h0m0 8h0m0 3h0m0 4h0m0 4h0m0 2h0m0 3h0m0 2h0m0 4h0m0 1h0m0 6h0m0 12h0m0 15h0m1-72h0m0 2h0m0 5h0m0 2h0m0 2h0m0 3h0m0 1h0m0 2h0m0 5h0m0 1h0m0 2h0m0 2h0m0 1h0m0 4h0m0 2h0m0 2h0m0 3h0m0 3h0m0 1h0m0 13h0m1-109h0m0 2h0m0 2h0m0 9h0m0 7h0m0 2h0m0 1h0m0 1h0m0 4h0m0 3h0m0 1h0m0 5h0m0 1h0m0 3h0m0 1h0m0 2h0m0 1h0m0 4h0m0 2h0m0 11h0m0 6h0m0 4h0m0 4h0m0 7h0m0 1h0m0 16h0m0 3h0m1-108h0m0 1h0m0 2h0m0 4h0m0 2h0m0 1h0m0 1h0m0 3h0m0 3h0m0 1h0m0 1h0m0 4h0m1 9h0m0 1h0m0 3h0m0 2h0m0 1h0m0 5h0m0 2h0m0 2h0m0 1h0m0 9h0m0 2h0m0 1h0m0 23h0m0 1h0m0 4h0m0 3h0m0 3h0m0 3h0m0 6h0m0 5h0m0 2h0m0 19h0m1-84h0m0 8h0m0 5h0m0 3h0m0 1h0m0 1h0m0 2h0m0 2h0m0 2h0m0 1h0m0 1h0m0 2h0m0 1h0m0 3h0m0 6h0m0 1h0m0 1h0m0 1h0m0 1h0m0 2h0m0 4h0m0 10h0m1-75h0m0 14h0m0 5h0m0 1h0m0 5h0m0 2h0m0 6h0m0 3h0m0 2h0m0 10h0m0 1h0m1-56h0m0 13h0m0 2h0m0 3h0m0 14h0m0 2h0m0 11h0m0 3h0m0 2h0m0 3h0m0 3h0m0 2h0m0 4h0m0 1h0m0 1h0m0 8h0m1-58h0m0 1h0m0 4h0m0 4h0m0 1h0m0 2h0m0 1h0m0 1h0m0 5h0m0 1h0m0 1h0m0 2h0m0 3h0m0 6h0m0 1h0m0 2h0m0 6h0m0 12h0m0 2h0m0 4h0m0 7h0m0 5h0m0 1h0m0 5h0m0 2h0m0 13h0m0 2h0m1-75h0m0 2h0m0 5h0m0 4h0m0 8h0m0 1h0m0 2h0m0 1h0m0 1h0m0 3h0m0 1h0m0 4h0m0 1h0m0 4h0m0 2h0m0 2h0m0 2h0m0 1h0m0 1h0m0 2h0m0 1h0m0 1h0m0 6h0m0 3h0m0 3h0m3-55h0m0 2h0m0 4h0m0 3h0m0 7h0m0 2h0m0 1h0m0 3h0m0 1h0m0 1h0m0 2h0m0 1h0m0 2h0m0 1h0m0 3h0m0 1h0m0 2h0m0 2h0m0 2h0m0 3h0m0 4h0m0 3h0m0 2h0m0 5h0m1-73h0m0 4h0m0 5h0m0 2h0m0 9h0m0 1h0m0 2h0m0 3h0m0 2h0m0 1h0m0 1h0m0 11h0m0 2h0m0 3h0m0 3h0m0 2h0m0 2h0m0 3h0m0 4h0m1-58h0m0 5h0m0 9h0m0 1h0m0 8h0m0 1h0m0 1h0m0 3h0m0 2h0m0 1h0m0 2h0m0 8h0m0 2h0m0 2h0m0 7h0m0 3h0m0 3h0m0 5h0m1-75h0m0 14h0m0 3h0m0 7h0m0 5h0m0 15h0m0 2h0m0 2h0m0 1h0m0 11h0m0 3h0m0 2h0m0 1h0m0 5h0m1-86h0m0 13h0m0 3h0m0 10h0m0 8h0m0 1h0m0 3h0m0 8h0m0 3h0m0 1h0m0 2h0m0 4h0m0 3h0m0 12h0m0 24h0m1-80h0m0 3h0m0 3h0m0 1h0m0 9h0m0 2h0m0 6h0m0 2h0m0 2h0m0 1h0m0 1h0m0 2h0m0 3h0m0 1h0m0 4h0m0 1h0m0 8h0m0 1h0m0 8h0m0 1h0m0 3h0m0 3h0m1-57h0m0 3h0m0 5h0m0 3h0m0 3h0m0 3h0m0 1h0m0 7h0m0 2h0m0 5h0m0 4h0m0 3h0m0 1h0m0 1h0m0 2h0m0 1h0m0 3h0m0 1h0m0 14h0m1-68h0m0 3h0m0 13h0m0 3h0m0 1h0m0 6h0m0 2h0m0 8h0m0 2h0m0 6h0m0 1h0m0 1h0m0 4h0m0 3h0m0 3h0m0 4h0m1-77h0m0 4h0m0 17h0m0 3h0m0 7h0m0 1h0m0 1h0m0 8h0m0 6h0m0 4h0m0 1h0m0 4h0m0 1h0m0 3h0m0 4h0m0 5h0m0 10h0m1-85h0m0 11h0m0 1h0m0 2h0m0 1h0m0 3h0m0 1h0m0 6h0m0 1h0m0 1h0m0 2h0m0 2h0m0 3h0m0 3h0m0 1h0m0 2h0m0 2h0m0 3h0m0 1h0m0 4h0m0 3h0m0 2h0m0 3h0m0 14h0m1-15h0m0 7h0m0 1h0m0 2h0m0 4h0m0 7h0m0 1h0m0 3h0m0 2h0m0 5h0m0 1h0m0 1h0m0 1h0m0 2h0m0 4h0m0 4h0m0 6h0m0 6h0m2-74h0m0 9h0m0 2h0m0 8h0m0 1h0m0 2h0m0 2h0m0 10h0m0 8h0m0 2h0m1-40h0m0 4h0m0 9h0m0 10h0m0 2h0m0 1h0m0 1h0m0 1h0m0 1h0m0 7h0m0 5h0m0 2h0m0 2h0m0 2h0m0 2h0m0 1h0m0 2h0m0 7h0m0 7h0m0 1h0m0 1h0m0 7h0m1-92h0m0 13h0m0 11h0m0 11h0m0 1h0m0 1h0m0 4h0m0 2h0m0 6h0m0 1h0m0 2h0m0 4h0m0 4h0m0 3h0m0 9h0m0 5h0m0 5h0m0 1h0m1-93h0m0 2h0m0 3h0m0 1h0m0 1h0m0 3h0m0 4h0m0 1h0m0 1h0m0 2h0m0 3h0m0 3h0m0 1h0m0 4h0m0 1h0m0 8h0m0 5h0m0 24h0m1-60h0m0 2h0m0 9h0m0 5h0m0 3h0m0 5h0m0 2h0m0 3h0m0 1h0m0 2h0m0 3h0m0 6h0m0 2h0m0 2h0m0 1h0m0 3h0m0 1h0m0 7h0m0 3h0m0 2h0m0 1h0m0 6h0m0 6h0m1-57h0m0 8h0m0 1h0m0 2h0m0 3h0m0 1h0m0 3h0m0 4h0m0 11h0m0 3h0m0 1h0m0 9h0m0 7h0m0 1h0m0 6h0m1-57h0m0 3h0m0 5h0m0 15h0m0 2h0m0 4h0m0 4h0m0 6h0m0 1h0m0 5h0m0 1h0m0 1h0m0 2h0m0 1h0m0 1h0m0 4h0m0 4h0m0 2h0m0 1h0m1-107h0m0 13h0m0 7h0m0 4h0m0 1h0m0 2h0m0 2h0m0 1h0m0 1h0m0 13h0m0 5h0m0 3h0m0 5h0m0 3h0m0 4h0m0 1h0m0 6h0m0 3h0m0 2h0m0 4h0m0 1h0m0 2h0m0 2h0m0 1h0m0 2h0m0 14h0m1-106h0m0 4h0m0 5h0m0 2h0m0 4h0m0 13h0m0 1h0m0 1h0m0 2h0m0 1h0m0 3h0m0 2h0m0 1h0m0 1h0m0 1h0m0 2h0m0 4h0m0 3h0m0 20h0m0 2h0m0 7h0m1-42h0m0 2h0m0 5h0m0 1h0m0 7h0m0 3h0m0 1h0m0 4h0m0 5h0m0 1h0m0 11h0m0 3h0m0 2h0m0 3h0m1-26h0m0 1h0m0 2h0m0 1h0m0 5h0m0 4h0m0 3h0m0 3h0m0 5h0m0 6h0m1-62h0m0 4h0m0 10h0m0 2h0m0 1h0m0 1h0m0 3h0m0 2h0m0 4h0m0 4h0m0 4h0m0 9h0m0 5h0m0 5h0m0 6h0m0 3h0m0 9h0m0 2h0m1-108h0m0 9h0m0 4h0m0 3h0m0 8h0m0 1h0m0 1h0m0 8h0m0 2h0m0 1h0m0 1h0m0 2h0m0 2h0m0 3h0m0 2h0m0 2h0m0 3h0m0 4h0m0 7h0m0 9h0m1-57h0m0 15h0m0 3h0m0 7h0m0 9h0m0 3h0m0 2h0m0 3h0m0 1h0m0 3h0m0 2h0m0 3h0m0 4h0m0 3h0m0 2h0m0 4h0m0 1h0m0 3h0m0 2h0m0 4h0m1-55h0m0 5h0m0 4h0m0 7h0m0 5h0m0 2h0m0 10h0m0 5h0m0 4h0m0 4h0m1-43h0m0 18h0m0 5h0m0 19h0m0 1h0m0 3h0m0 1h0m0 3h0m0 1h0m0 2h0m0 2h0m0 5h0m0 2h0m0 6h0m0 5h0m1-69h0m0 4h0m0 1h0m0 1h0m0 14h0m0 3h0m0 4h0m0 2h0m0 3h0m0 3h0m0 10h0m0 5h0m0 1h0m0 2h0m1-76h0m0 9h0m0 8h0m0 16h0m0 1h0m0 6h0m0 2h0m0 1h0m0 2h0m0 1h0m0 2h0m0 5h0m0 1h0m0 1h0m0 2h0m0 1h0m0 1h0m0 2h0m0 4h0m0 3h0m0 2h0m0 5h0m0 5h0m1-95h0m0 9h0m0 5h0m0 2h0m0 3h0m0 5h0m0 1h0m0 2h0m0 8h0m0 1h0m0 4h0m0 1h0m0 1h0m0 4h0m0 1h0m0 7h0m0 4h0m0 4h0m0 3h0m0 11h0m0 3h0m0 7h0m0 10h0m1-101h0m0 2h0m0 5h0m1-6h0m0 4h0m0 5h0m0 1h0m0 2h0m0 3h0m0 5h0m0 1h0m0 3h0m0 6h0m0 4h0m0 3h0m0 3h0m0 5h0m0 4h0m0 1h0m0 7h0m0 16h0m0 7h0m0 3h0m0 4h0m0 4h0m1-43h0m0 6h0m0 2h0m0 1h0m0 3h0m0 1h0m0 4h0m0 2h0m0 3h0m0 3h0m0 4h0m0 1h0m0 4h0m0 3h0m0 2h0m0 4h0m0 6h0m0 18h0m1-71h0m0 11h0m0 7h0m0 2h0m0 3h0m0 1h0m0 1h0m0 2h0m0 5h0m0 1h0m0 1h0m0 2h0m0 1h0m0 5h0m0 4h0m0 3h0m0 10h0m0 13h0m1-77h0m0 2h0m0 3h0m0 5h0m0 1h0m0 3h0m0 2h0m0 2h0m0 2h0m0 1h0m0 3h0m0 2h0m0 1h0m0 5h0m0 1h0m0 1h0m0 1h0m0 1h0m0 2h0m0 2h0m0 5h0m0 10h0m0 3h0m3-64h0m0 5h0m0 1h0m0 2h0m0 2h0m0 2h0m0 5h0m0 2h0m0 3h0m0 2h0m0 1h0m0 4h0m0 2h0m0 4h0m0 1h0m0 1h0m0 2h0m0 2h0m0 4h0m0 3h0m0 6h0m0 1h0m1-65h0m0 20h0m0 5h0m0 1h0m0 2h0m0 5h0m0 3h0m0 2h0m0 3h0m0 2h0m0 2h0m0 7h0m0 6h0m0 1h0m0 11h0m0 2h0m0 1h0m1-70h0m0 10h0m0 7h0m0 20h0m0 7h0m0 3h0m0 4h0m0 7h0m0 3h0m0 3h0m0 5h0m0 5h0m0 8h0m0 10h0m0 4h0m1-112h0m0 4h0m0 4h0m0 2h0m0 2h0m0 6h0m0 1h0m0 1h0m0 2h0m0 2h0m0 1h0m0 1h0m0 2h0m0 2h0m0 1h0m0 12h0m0 2h0m0 9h0m0 3h0m0 1h0m0 11h0m0 17h0m1-71h0m0 12h0m0 2h0m0 3h0m0 1h0m0 1h0m0 4h0m0 3h0m0 1h0m0 6h0m0 1h0m0 5h0m0 3h0m0 1h0m0 4h0m0 3h0m0 4h0m0 4h0m0 4h0m0 4h0m0 2h0m0 3h0m0 24h0m1-58h0m0 8h0m0 3h0m0 8h0m0 2h0m0 1h0m0 5h0m0 1h0m0 6h0m0 1h0m0 2h0m0 1h0m0 3h0m0 5h0m0 1h0m0 1h0m0 6h0m0 2h0m0 5h0m1-79h0m0 11h0m0 3h0m0 15h0m0 5h0m0 3h0m0 2h0m0 1h0m0 4h0m0 4h0m0 12h0m0 3h0m0 1h0m0 3h0m0 1h0m1-61h0m0 3h0m0 3h0m0 3h0m0 6h0m0 3h0m0 7h0m0 2h0m0 4h0m0 1h0m0 3h0m0 2h0m0 7h0m0 8h0m0 18h0m1-58h0m0 8h0m0 2h0m0 7h0m0 3h0m0 1h0m0 8h0m0 2h0m0 4h0m0 2h0m0 2h0m0 2h0m0 2h0m0 6h0m0 4h0m0 4h0m0 3h0m1-71h0m0 6h0m0 3h0m0 2h0m0 3h0m0 1h0m0 1h0m0 2h0m0 4h0m0 2h0m0 4h0m0 5h0m0 3h0m0 4h0m0 3h0m0 13h0m0 2h0m1-68h0m0 2h0m0 11h0m0 11h0m0 6h0m0 3h0m0 3h0m0 11h0m0 1h0m0 4h0m2-39h0m0 12h0m0 2h0m0 6h0m0 6h0m0 2h0m0 2h0m0 1h0m0 2h0m0 1h0m0 3h0m0 6h0m0 1h0m0 3h0m1-64h0m0 17h0m0 2h0m0 5h0m0 1h0m0 2h0m0 4h0m0 3h0m0 1h0m0 1h0m0 6h0m0 1h0m0 1h0m0 2h0m0 1h0m0 1h0m0 3h0m0 5h0m0 2h0m0 12h0m1-73h0m0 13h0m0 8h0m0 9h0m0 3h0m0 10h0m0 4h0m0 8h0m0 2h0m0 4h0m0 1h0m0 1h0m0 8h0m0 3h0m0 5h0m1-62h0m0 8h0m0 1h0m0 3h0m0 4h0m0 3h0m0 2h0m0 1h0m0 1h0m0 3h0m0 9h0m0 6h0m0 3h0m0 1h0m0 1h0m0 2h0m0 2h0m0 8h0m0 10h0m1-102h0m0 8h0m0 1h0m0 2h0m0 13h0m0 2h0m0 4h0m0 2h0m0 3h0m0 5h0m0 1h0m0 6h0m0 4h0m0 1h0m0 6h0m0 1h0m0 3h0m0 3h0m0 1h0m0 4h0m0 26h0m1-79h0m0 3h0m0 2h0m0 3h0m0 5h0m0 3h0m0 5h0m0 3h0m0 2h0m0 2h0m0 4h0m0 1h0m0 3h0m0 1h0m0 2h0m0 5h0m0 2h0m0 8h0m0 2h0m0 1h0m0 10h0m0 3h0m0 3h0m0 10h0m0 2h0m1-118h0m0 2h0m0 6h0m0 1h0m0 4h0m0 1h0m0 2h0m0 4h0m0 2h0m0 2h0m0 1h0m0 8h0m0 5h0m0 10h0m0 1h0m0 3h0m0 5h0m0 17h0m0 3h0m0 5h0m0 4h0m0 2h0m0 6h0m0 7h0m0 9h0m0 11h0m0 5h0m0 1h0m1-131h0m0 1h0m0 1h0m0 2h0m0 1h0m0 2h0m0 2h0m0 2h0m0 1h0m0 12h0m0 3h0m1-4h0m0 2h0m0 8h0m0 5h0m0 1h0m0 2h0m0 5h0m0 2h0m0 9h0m0 4h0m0 7h0m0 6h0m0 8h0m0 3h0m0 10h0m0 6h0m0 1h0m0 2h0m0 4h0m0 3h0m0 1h0m0 7h0m0 2h0m0 5h0m1-73h0m0 16h0m0 4h0m0 2h0m0 5h0m0 1h0m0 1h0m0 3h0m0 2h0m0 2h0m0 4h0m0 1h0m0 3h0m0 2h0m0 1h0m0 2h0m0 2h0m0 1h0m0 18h0m1-114h0m0 4h0m0 1h0m0 1h0m0 6h0m0 2h0m0 2h0m0 4h0m0 6h0m0 7h0m0 3h0m0 2h0m0 5h0m0 3h0m0 2h0m0 3h0m0 1h0m0 1h0m0 3h0m0 1h0m0 7h0m0 17h0m0 7h0m1-74h0m0 4h0m0 1h0m0 2h0m0 2h0m0 2h0m0 5h0m0 1h0m0 5h0m0 1h0m0 1h0m0 2h0m0 11h0m0 2h0m0 9h0m0 2h0m0 22h0m1-61h0m0 17h0m0 2h0m0 3h0m0 1h0m0 2h0m0 5h0m0 2h0m0 3h0m0 5h0m0 2h0m0 3h0m0 3h0m0 1h0m0 2h0m0 6h0m0 2h0m1-48h0m0 4h0m0 1h0m0 5h0m0 12h0m0 4h0m0 4h0m0 4h0m0 1h0m0 8h0m0 1h0m0 2h0m1-59h0m0 5h0m0 2h0m0 3h0m0 19h0m0 6h0m0 3h0m0 3h0m0 2h0m0 2h0m0 3h0m0 6h0m0 2h0m0 2h0m0 2h0m0 2h0m0 2h0m1-60h0m0 11h0m0 3h0m0 1h0m0 7h0m0 4h0m0 3h0m0 2h0m0 4h0m0 3h0m0 2h0m0 3h0m0 2h0m0 2h0m0 2h0m0 2h0m0 5h0m1-64h0m0 1h0m0 6h0m0 6h0m0 3h0m0 3h0m0 7h0m0 1h0m0 2h0m0 5h0m0 2h0m0 2h0m0 2h0m0 6h0m0 2h0m0 7h0m0 3h0m0 2h0m0 4h0m1-69h0m0 6h0m0 1h0m0 2h0m0 1h0m0 2h0m0 2h0m0 1h0m0 2h0m0 2h0m0 3h0m0 6h0m0 1h0m0 6h0m0 2h0m1-26h0m0 13h0m0 8h0m0 2h0m0 8h0m0 3h0m0 1h0m0 3h0m0 6h0m0 4h0m0 6h0m0 2h0m0 2h0m0 2h0m0 1h0m0 4h0m0 5h0m0 1h0m0 2h0m0 3h0m0 1h0m0 8h0m0 5h0m0 1h0m1-62h0m0 8h0m0 3h0m0 2h0m0 1h0m0 1h0m0 2h0m0 5h0m0 1h0m0 1h0m0 6h0m0 2h0m0 2h0m0 1h0m1-94h0m0 1h0m0 3h0m0 3h0m0 6h0m0 1h0m0 2h0m0 5h0m0 5h0m0 2h0m0 5h0m0 4h0m0 1h0m0 2h0m0 1h0m0 6h0m0 6h0m0 12h0m0 7h0m0 14h0m0 2h0m0 1h0m0 3h0m0 10h0m0 4h0m0 3h0m1-112h0m1 3h0m0 2h0m0 1h0m0 1h0m0 14h0m0 1h0m0 1h0m0 3h0m0 1h0m0 4h0m0 7h0m0 2h0m0 7h0m0 1h0m0 2h0m0 8h0m0 21h0m0 7h0m0 3h0m0 9h0m1-43h0m0 3h0m0 3h0m0 2h0m0 2h0m0 2h0m0 3h0m0 3h0m0 2h0m0 3h0m0 14h0m0 4h0m0 1h0m0 1h0m0 2h0m0 2h0m0 1h0m0 2h0m0 2h0m0 2h0m0 6h0m1-100h0m0 2h0m0 3h0m0 6h0m0 1h0m0 4h0m0 2h0m0 1h0m0 7h0m0 2h0m0 3h0m0 2h0m0 1h0m0 1h0m0 3h0m0 3h0m0 3h0m0 11h0m0 6h0m0 2h0m0 1h0m0 1h0m0 21h0m1-86h0m0 7h0m0 2h0m0 7h0m0 1h0m0 1h0m0 2h0m0 2h0m0 3h0m0 2h0m0 2h0m0 5h0m0 7h0m0 2h0m0 3h0m0 4h0m0 3h0m0 2h0m0 5h0m0 7h0m0 5h0m0 2h0m1-42h0m0 7h0m0 4h0m0 8h0m0 2h0m0 5h0m0 3h0m0 3h0m0 1h0m0 1h0m0 1h0m0 2h0m0 1h0m0 2h0m0 1h0m0 3h0m0 1h0m0 4h0m0 2h0m0 6h0m1-35h0m0 6h0m0 14h0m0 1h0m0 2h0m0 3h0m0 1h0m0 1h0m0 2h0m0 1h0m0 2h0m0 8h0m0 4h0m0 9h0m0 9h0m1-84h0m0 3h0m0 11h0m0 16h0m0 2h0m0 5h0m0 3h0m0 2h0m0 7h0m0 2h0m0 1h0m0 5h0m0 2h0m0 1h0m0 3h0m0 1h0m0 4h0m0 4h0m1-94h0m0 11h0m0 1h0m0 2h0m0 4h0m0 2h0m0 4h0m0 2h0m0 1h0m0 2h0m0 3h0m0 2h0m0 1h0m0 4h0m0 2h0m0 3h0m0 1h0m0 2h0m0 10h0m0 3h0m0 8h0m1-58h0m0 5h0m0 6h0m0 9h0m0 2h0m0 7h0m0 11h0m0 2h0m0 3h0m0 2h0m0 1h0m0 1h0m0 4h0m0 1h0m0 13h0m0 3h0m1-61h0m0 9h0m0 2h0m0 4h0m0 2h0m0 1h0m0 4h0m0 8h0m0 1h0m0 7h0m0 2h0m0 7h0m0 1h0m0 4h0m0 3h0m0 5h0m0 5h0m0 3h0m1-77h0m0 14h0m0 1h0m0 3h0m0 2h0m0 2h0m0 9h0m0 2h0m0 1h0m0 1h0m0 2h0m0 1h0m0 2h0m0 1h0m0 3h0m0 1h0m0 4h0m0 2h0m0 4h0m0 5h0m0 5h0m0 2h0m0 4h0m1-107h0m0 2h0m0 9h0m0 2h0m0 6h0m0 2h0m0 1h0m0 1h0m0 1h0m0 7h0m0 2h0m0 1h0m0 1h0m0 4h0m0 5h0m0 4h0m0 1h0m0 3h0m1-50h0m0 4h0m0 1h0m0 4h0m0 3h0m0 4h0m0 5h0m0 2h0m0 1h0m0 1h0m0 1h0m0 2h0m0 2h0m0 1h0m0 3h0m0 2h0m0 3h0m0 5h0m1-4h0m0 1h0m0 2h0m0 2h0m0 6h0m0 3h0m0 4h0m0 2h0m0 2h0m0 2h0m0 1h0m0 4h0m0 3h0m0 5h0m0 1h0m0 3h0m0 3h0m0 4h0m0 1h0m0 3h0m0 10h0m0 5h0m0 1h0m1-47h0m0 2h0m0 3h0m0 1h0m0 2h0m0 5h0m0 4h0m0 2h0m0 6h0m0 4h0m0 1h0m0 1h0m0 2h0m0 3h0m0 2h0m0 1h0m0 2h0m0 9h0m0 17h0m1-67h0m0 4h0m0 5h0m0 3h0m0 2h0m0 1h0m0 3h0m0 6h0m0 1h0m0 1h0m0 1h0m0 4h0m0 1h0m0 5h0m0 5h0m0 2h0m0 3h0m0 1h0m0 1h0m1-68h0m0 1h0m0 3h0m0 1h0m0 7h0m0 2h0m0 1h0m0 11h0m0 5h0m0 4h0m0 5h0m0 1h0m0 2h0m0 1h0m0 5h0m0 5h0m1-36h0m0 1h0m0 3h0m0 2h0m0 3h0m0 3h0m0 3h0m0 4h0m0 7h0m0 3h0m0 3h0m0 2h0m0 3h0m0 5h0m1-79h0m0 8h0m0 5h0m0 1h0m0 2h0m0 4h0m0 1h0m0 3h0m0 1h0m0 3h0m0 1h0m0 3h0m0 2h0m0 2h0m0 3h0m0 10h0m0 19h0m0 6h0m1-65h0m0 9h0m0 2h0m0 7h0m0 1h0m0 4h0m0 7h0m0 2h0m0 1h0m0 3h0m0 1h0m0 2h0m0 3h0m0 1h0m0 3h0m0 3h0m0 2h0m0 7h0m0 2h0m0 3h0m0 4h0m0 1h0m0 2h0m1-56h0m0 13h0m0 4h0m0 4h0m0 1h0m0 9h0m0 10h0m0 1h0m0 4h0m0 10h0m0 3h0m2-61h0m0 15h0m0 3h0m0 6h0m0 3h0m0 1h0m0 3h0m0 1h0m0 4h0m0 14h0m0 10h0m1-46h0m0 7h0m0 6h0m0 1h0m0 1h0m0 5h0m0 2h0m0 1h0m0 3h0m0 1h0m0 2h0m0 3h0m0 2h0m0 1h0m0 2h0m0 3h0m0 1h0m0 2h0m0 1h0m0 4h0m0 1h0m0 8h0m1-108h0m0 32h0m0 35h0m0 3h0m0 1h0m0 6h0m0 2h0m0 7h0m0 2h0m0 2h0m0 1h0m0 3h0m0 3h0m0 2h0m0 3h0m0 1h0m0 1h0m0 14h0m1-117h0m0 7h0m0 2h0m0 3h0m0 1h0m0 1h0m0 1h0m0 1h0m0 1h0m0 1h0m0 1h0m0 2h0m0 1h0m0 1h0m0 1h0m0 1h0m0 1h0m0 12h0m0 1h0m0 2h0m0 1h0m0 1h0m0 3h0m0 6h0m1-24h0m0 6h0m0 1h0m0 3h0m0 16h0m0 1h0m0 3h0m0 1h0m0 1h0m0 2h0m0 1h0m0 3h0m0 5h0m0 3h0m0 7h0m0 1h0m0 2h0m0 18h0m1-59h0m0 1h0m0 12h0m0 4h0m0 7h0m0 2h0m0 9h0m0 1h0m0 3h0m0 4h0m0 3h0m0 1h0m0 1h0m0 3h0m0 2h0m0 3h0m0 4h0m0 2h0m0 1h0m0 5h0m0 4h0m1-62h0m0 3h0m0 7h0m0 2h0m0 1h0m0 4h0m0 6h0m0 6h0m0 2h0m0 1h0m0 2h0m0 2h0m0 3h0m0 1h0m0 5h0m0 1h0m0 4h0m1-70h0m0 3h0m0 14h0m0 3h0m0 6h0m0 7h0m0 2h0m0 3h0m0 2h0m0 2h0m0 2h0m0 1h0m0 1h0m0 4h0m0 3h0m0 7h0m0 2h0m1-67h0m0 1h0m0 2h0m0 4h0m0 9h0m0 2h0m0 2h0m0 1h0m0 1h0m0 5h0m0 5h0m0 2h0m0 2h0m0 8h0m0 1h0m0 6h0m1-52h0m0 16h0m0 3h0m0 2h0m0 1h0m0 3h0m0 1h0m0 4h0m0 1h0m0 6h0m0 2h0m0 2h0m0 2h0m0 1h0m0 2h0m0 6h0m0 2h0m0 4h0m0 2h0m0 1h0m0 3h0m0 9h0m0 12h0m0 5h0m1-75h0m0 16h0m0 2h0m0 2h0m0 4h0m0 2h0m0 2h0m0 2h0m0 6h0m0 1h0m0 3h0m0 3h0m0 1h0m0 2h0m0 2h0m0 1h0m0 3h0m0 5h0m0 4h0m0 3h0m0 5h0m3-60h0m0 4h0m0 2h0m0 1h0m0 2h0m0 2h0m0 4h0m0 1h0m0 2h0m0 2h0m0 1h0m0 5h0m0 3h0m0 2h0m0 2h0m0 1h0m0 4h0m0 7h0m0 1h0m0 6h0m0 12h0m1-87h0m0 6h0m0 1h0m0 1h0m0 2h0m0 1h0m0 3h0m0 2h0m0 3h0m0 3h0m0 2h0m0 2h0m0 5h0m0 7h0m0 2h0m0 6h0m0 1h0m0 11h0m1-56h0m0 4h0m0 8h0m0 6h0m0 4h0m0 3h0m0 5h0m0 2h0m0 1h0m0 3h0m0 12h0m0 3h0m0 4h0m0 10h0m1-73h0m0 8h0m0 2h0m0 3h0m0 3h0m0 3h0m0 3h0m0 2h0m0 4h0m0 8h0m0 2h0m0 4h0m0 2h0m0 3h0m0 3h0m0 3h0m1-60h0m0 10h0m0 4h0m0 5h0m0 2h0m0 2h0m0 4h0m0 18h0m0 8h0m0 1h0m0 7h0m0 6h0m0 1h0m0 2h0m1-69h0m0 17h0m0 11h0m0 1h0m0 3h0m0 4h0m0 1h0m0 3h0m0 5h0m0 2h0m0 2h0m0 6h0m0 2h0m0 5h0m0 1h0m0 3h0m0 4h0m0 2h0m0 7h0m0 5h0m0 1h0m0 3h0m1-77h0m0 5h0m0 8h0m0 7h0m0 6h0m0 3h0m0 2h0m0 1h0m0 6h0m0 2h0m0 2h0m0 3h0m0 3h0m0 10h0m0 9h0m1-86h0m0 26h0m0 10h0m0 3h0m0 3h0m0 2h0m0 12h0m0 2h0m0 3h0m0 4h0m0 8h0m0 8h0m0 1h0m0 2h0m0 5h0m0 1h0m0 8h0m1-55h0m0 5h0m0 1h0m0 3h0m0 11h0m0 1h0m0 2h0m0 3h0m0 3h0m0 1h0m0 6h0m0 6h0m0 4h0m0 2h0m0 6h0m0 6h0m1-67h0m0 5h0m0 4h0m0 4h0m0 2h0m0 4h0m0 5h0m0 3h0m0 3h0m0 8h0m0 2h0m0 6h0m0 8h0m1-57h0m0 7h0m0 3h0m0 4h0m0 3h0m0 6h0m0 2h0m0 3h0m0 5h0m0 2h0m0 1h0m0 10h0m0 2h0m0 6h0m1-34h0m0 12h0m0 2h0m0 3h0m0 2h0m0 1h0m0 2h0m0 3h0m0 1h0m0 2h0m0 3h0m0 3h0m0 4h0m0 7h0m0 7h0m0 6h0m1-114h0m0 4h0m0 7h0m0 4h0m0 1h0m0 1h0m0 4h0m0 1h0m0 1h0m0 3h0m0 1h0m0 3h0m0 3h0m0 6h0m0 1h0m0 5h0m0 2h0m0 4h0m0 1h0m0 2h0m0 7h0m0 12h0m0 9h0m0 5h0m1-74h0m0 4h0m0 5h0m0 3h0m0 2h0m0 4h0m0 2h0m0 2h0m0 2h0m0 3h0m0 3h0m0 4h0m0 6h0m0 1h0m0 2h0m0 2h0m0 5h0m1-46h0m0 13h0m0 2h0m0 3h0m0 1h0m0 3h0m0 3h0m0 3h0m0 1h0m0 3h0m0 2h0m0 1h0m0 11h0m0 2h0m0 6h0m0 4h0m0 23h0m1-70h0m0 2h0m0 10h0m0 3h0m0 3h0m0 2h0m0 1h0m0 4h0m0 3h0m0 1h0m0 2h0m0 1h0m0 3h0m0 2h0m0 3h0m0 1h0m0 3h0m0 5h0m0 1h0m0 1h0m0 2h0m0 1h0m0 10h0m0 6h0m1-71h0m0 1h0m0 7h0m0 11h0m0 3h0m0 13h0m0 3h0m0 4h0m0 6h0m0 10h0m0 1h0m0 1h0m0 1h0m0 5h0m0 3h0m1-64h0m0 21h0m0 1h0m0 2h0m0 11h0m0 4h0m0 4h0m0 1h0m0 2h0m0 4h0m0 2h0m0 7h0m0 1h0m1-74h0m0 14h0m0 1h0m0 2h0m0 7h0m0 2h0m0 7h0m0 2h0m0 4h0m0 2h0m0 1h0m0 6h0m0 12h0m0 6h0m1-61h0m0 7h0m0 7h0m0 6h0m0 4h0m0 3h0m0 4h0m0 6h0m0 3h0m0 1h0m0 5h0m0 4h0m0 5h0m0 3h0m0 4h0m0 1h0m0 16h0m1-105h0m0 2h0m0 1h0m0 6h0m0 2h0m0 4h0m0 1h0m0 2h0m0 3h0m0 1h0m0 1h0m0 9h0m0 1h0m0 6h0m0 3h0m0 7h0m0 3h0m0 2h0m0 23h0m0 5h0m1-75h0m0 5h0m0 4h0m0 3h0m0 2h0m0 1h0m0 2h0m0 3h0m0 2h0m0 4h0m0 1h0m0 3h0m0 1h0m0 5h0m0 3h0m0 2h0m0 9h0m0 4h0m0 6h0m0 2h0m0 5h0m0 7h0m0 6h0m0 1h0m1-49h0m0 1h0m0 9h0m0 11h0m0 3h0m0 2h0m0 7h0m0 2h0m0 3h0m0 1h0m0 2h0m0 4h0m0 9h0m0 1h0m1-79h0m0 21h0m0 10h0m0 1h0m0 4h0m0 3h0m0 1h0m0 2h0m0 5h0m0 8h0m0 4h0m0 2h0m0 5h0m0 1h0m0 6h0m2-97h0m0 16h0m0 4h0m0 9h0m0 1h0m0 1h0m0 7h0m0 2h0m0 1h0m0 6h0m0 5h0m0 13h0m1-44h0m0 2h0m0 4h0m0 1h0m0 4h0m0 5h0m0 6h0m0 2h0m0 3h0m0 3h0m0 1h0m0 5h0m0 2h0m0 3h0m0 2h0m0 6h0m0 4h0m0 1h0m0 1h0m0 4h0m0 3h0m0 2h0m0 1h0m0 1h0m0 5h0m0 2h0m0 5h0m0 4h0m1-53h0m0 11h0m0 7h0m0 3h0m0 9h0m0 3h0m0 1h0m0 4h0m0 2h0m0 4h0m0 9h0m0 1h0m0 4h0m0 4h0m1-55h0m0 6h0m0 3h0m0 3h0m0 5h0m0 1h0m0 3h0m0 2h0m0 18h0m0 1h0m0 1h0m0 2h0m0 2h0m0 2h0m0 1h0m0 1h0m0 15h0m1-91h0m0 12h0m0 10h0m0 3h0m0 4h0m0 1h0m0 9h0m0 4h0m0 1h0m0 6h0m0 2h0m0 3h0m0 3h0m0 3h0m0 3h0m0 4h0m0 1h0m0 7h0m1-109h0m0 4h0m0 1h0m0 1h0m0 4h0m0 2h0m0 1h0m0 1h0m0 1h0m0 3h0m0 1h0m0 2h0m0 7h0m0 1h0m0 2h0m0 7h0m0 2h0m0 38h0m1-45h0m0 6h0m0 8h0m0 6h0m0 3h0m0 7h0m0 2h0m0 3h0m0 1h0m0 5h0m0 2h0m0 4h0m0 1h0m0 6h0m0 3h0m0 4h0m0 4h0m1-65h0m0 5h0m0 7h0m0 6h0m0 2h0m0 1h0m0 1h0m0 1h0m0 2h0m0 2h0m0 2h0m0 3h0m0 1h0m0 7h0m0 3h0m0 6h0m0 10h0m1-52h0m0 4h0m0 5h0m0 1h0m0 2h0m0 1h0m0 2h0m0 5h0m0 1h0m0 1h0m0 5h0m0 2h0m0 1h0m0 7h0m0 5h0m0 5h0m1-52h0m0 22h0m0 1h0m0 19h0m0 2h0m0 5h0m0 2h0m0 3h0m0 2h0m0 2h0m0 2h0m0 1h0m0 9h0m1-60h0m0 2h0m0 15h0m0 3h0m0 3h0m0 3h0m0 1h0m0 2h0m0 3h0m0 2h0m0 2h0m0 2h0m0 2h0m0 4h0m0 2h0m0 1h0m0 3h0m0 2h0m0 1h0m0 5h0m0 4h0m0 23h0m3-76h0m0 5h0m0 1h0m0 2h0m0 2h0m0 2h0m0 4h0m0 1h0m0 1h0m0 3h0m0 5h0m0 1h0m0 3h0m0 3h0m0 1h0m0 1h0m0 6h0m0 1h0m0 2h0m0 1h0m0 14h0m1-80h0m0 20h0m0 3h0m0 12h0m0 4h0m0 1h0m0 2h0m0 1h0m0 2h0m0 8h0m0 2h0m0 3h0m0 2h0m0 2h0m0 11h0m0 2h0m0 5h0m1-65h0m0 2h0m0 9h0m0 7h0m0 4h0m0 2h0m0 1h0m0 7h0m0 3h0m0 9h0m0 4h0m0 1h0m0 3h0m0 2h0m0 3h0m0 3h0m1-84h0m0 5h0m0 4h0m0 2h0m0 3h0m0 1h0m0 1h0m0 4h0m0 4h0m0 4h0m0 1h0m0 1h0m0 5h0m0 2h0m0 1h0m0 1h0m0 4h0m0 1h0m1-16h0m0 2h0m0 4h0m0 8h0m0 8h0m0 1h0m0 1h0m0 3h0m0 1h0m0 4h0m0 3h0m0 2h0m0 1h0m0 3h0m0 1h0m0 4h0m0 1h0m0 2h0m0 2h0m0 5h0m0 1h0m0 10h0m1-106h0m0 2h0m0 6h0m0 1h0m0 4h0m0 7h0m0 2h0m0 4h0m0 2h0m0 7h0m0 2h0m0 14h0m0 4h0m0 5h0m0 4h0m0 5h0m0 12h0m0 3h0m0 1h0m0 23h0m0 1h0m1-125h0m0 2h0m0 1h0m0 5h0m0 1h0m0 1h0m0 1h0m0 2h0m0 7h0m0 1h0m0 2h0m0 12h0m1-14h0m0 5h0m0 5h0m0 3h0m0 4h0m0 5h0m0 2h0m0 1h0m0 3h0m0 2h0m0 1h0m0 2h0m0 2h0m0 8h0m0 11h0m0 2h0m0 3h0m0 9h0m0 3h0m0 2h0m0 1h0m0 6h0m0 1h0m0 2h0m0 2h0m0 3h0m0 6h0m1-69h0m0 4h0m0 5h0m0 5h0m0 2h0m0 3h0m0 1h0m0 3h0m0 5h0m0 3h0m0 4h0m0 2h0m0 2h0m0 3h0m0 1h0m0 3h0m0 6h0m0 8h0m0 2h0m1-60h0m0 11h0m0 1h0m0 1h0m0 9h0m0 2h0m0 4h0m0 4h0m0 5h0m0 1h0m0 1h0m0 2h0m0 3h0m0 2h0m0 5h0m0 2h0m0 8h0m1-76h0m0 2h0m0 3h0m0 12h0m0 1h0m0 3h0m0 7h0m0 3h0m0 3h0m0 1h0m0 2h0m0 1h0m0 9h0m0 6h0m0 6h0m0 4h0m0 1h0m0 17h0m0 1h0m1-59h0m0 18h0m0 1h0m0 3h0m0 4h0m0 1h0m0 15h0m0 4h0m0 4h0m0 1h0m0 2h0m0 5h0m0 2h0m0 1h0m0 2h0m0 2h0m0 2h0m0 2h0m0 1h0m0 6h0m0 2h0m1-104h0m0 28h0m0 4h0m0 3h0m0 1h0m0 9h0m0 6h0m0 9h0m0 4h0m0 2h0m0 4h0m0 3h0m0 5h0m1-57h0m0 3h0m0 2h0m0 4h0m0 8h0m0 3h0m0 2h0m0 6h0m0 5h0m0 2h0m0 1h0m0 2h0m0 5h0m0 4h0m0 1h0m0 23h0m1-63h0m0 1h0m0 2h0m0 4h0m0 3h0m0 2h0m0 4h0m0 1h0m0 7h0m0 2h0m0 5h0m0 1h0m0 4h0m0 5h0m0 1h0m1-79h0m0 17h0m0 12h0m0 1h0m0 3h0m0 6h0m0 6h0m0 6h0m0 4h0m0 3h0m0 7h0m0 2h0m0 9h0m0 6h0m1-77h0m0 14h0m0 6h0m0 8h0m0 2h0m0 5h0m0 2h0m0 2h0m0 1h0m0 5h0m0 6h0m0 7h0m0 6h0m0 3h0m0 1h0m1-68h0m0 11h0m0 8h0m0 4h0m0 10h0m0 6h0m0 2h0m0 1h0m0 2h0m0 3h0m0 4h0m0 5h0m0 1h0m0 5h0m0 1h0m0 5h0m0 2h0m1-63h0m0 8h0m0 8h0m0 2h0m0 10h0m0 3h0m0 1h0m0 3h0m0 4h0m0 2h0m0 1h0m0 3h0m0 2h0m0 1h0m0 3h0m0 1h0m0 3h0m0 1h0m0 3h0m0 4h0m0 1h0m1-97h0m0 5h0m0 2h0m0 4h0m0 4h0m0 1h0m0 5h0m0 5h0m0 7h0m0 11h0m0 6h0m0 2h0m0 4h0m0 15h0m1-71h0m0 1h0m0 6h0m0 3h0m0 3h0m0 1h0m0 9h0m0 3h0m0 2h0m0 9h0m0 1h0m0 4h0m0 4h0m0 3h0m0 9h0m1-12h0m0 7h0m0 1h0m0 3h0m0 6h0m0 1h0m0 2h0m0 3h0m0 3h0m0 2h0m0 2h0m0 1h0m0 3h0m0 4h0m0 5h0m0 4h0m1-53h0m0 7h0m0 4h0m0 1h0m0 3h0m0 5h0m0 2h0m0 3h0m0 1h0m0 2h0m0 2h0m0 4h0m0 1h0m0 3h0m0 2h0m0 3h0m0 1h0m0 4h0m0 2h0m0 9h0m0 13h0m1-62h0m0 7h0m0 10h0m0 1h0m0 2h0m0 1h0m0 2h0m0 3h0m0 2h0m0 2h0m0 3h0m0 2h0m0 2h0m0 2h0m0 1h0m0 1h0m0 2h0m0 3h0m0 4h0m0 16h0m0 8h0m3-62h0m0 1h0m0 4h0m0 2h0m0 3h0m0 3h0m0 1h0m0 1h0m0 3h0m0 2h0m0 1h0m0 3h0m0 5h0m0 2h0m0 2h0m0 5h0m0 3h0m0 1h0m0 2h0m0 2h0m0 1h0m0 2h0m0 2h0m1-50h0m0 13h0m0 5h0m0 4h0m0 2h0m0 1h0m0 3h0m0 4h0m0 2h0m0 1h0m0 1h0m0 1h0m0 2h0m0 6h0m0 8h0m0 1h0m0 6h0m0 2h0m0 11h0m1-94h0m0 8h0m0 5h0m0 3h0m0 7h0m0 3h0m0 2h0m0 1h0m0 2h0m0 5h0m0 2h0m0 5h0m0 3h0m0 1h0m0 1h0m0 3h0m0 11h0m0 1h0m0 1h0m0 4h0m1-88h0m0 13h0m0 6h0m0 1h0m0 3h0m0 1h0m0 2h0m0 5h0m0 5h0m0 2h0m0 1h0m0 4h0m0 10h0m0 8h0m1-39h0m0 2h0m0 3h0m0 14h0m0 1h0m0 4h0m0 5h0m0 4h0m0 3h0m0 5h0m0 4h0m0 3h0m0 2h0m0 1h0m0 6h0m0 8h0m1-70h0m0 5h0m0 8h0m0 1h0m0 1h0m0 1h0m0 9h0m0 3h0m0 2h0m0 2h0m0 1h0m0 3h0m0 2h0m0 3h0m0 1h0m0 4h0m0 2h0m0 4h0m1-53h0m0 3h0m0 11h0m0 3h0m0 1h0m0 3h0m0 1h0m0 2h0m0 5h0m0 6h0m0 3h0m0 1h0m0 8h0m0 1h0m0 4h0m0 4h0m1-68h0m0 2h0m0 8h0m0 9h0m0 4h0m0 1h0m0 2h0m0 14h0m0 1h0m0 5h0m0 3h0m0 2h0m0 4h0m0 1h0m0 25h0m1-84h0m0 4h0m0 1h0m0 4h0m0 1h0m0 1h0m0 4h0m0 1h0m0 1h0m0 2h0m0 2h0m0 3h0m0 3h0m0 8h0m0 3h0m0 1h0m0 7h0m0 9h0m0 10h0m0 3h0m0 4h0m0 13h0m1-53h0m0 17h0m0 5h0m0 5h0m0 3h0m0 9h0m0 3h0m0 1h0m0 2h0m0 6h0m0 4h0m0 3h0m0 1h0m0 6h0m0 1h0m0 7h0m1-85h0m0 8h0m0 2h0m0 1h0m0 6h0m0 2h0m0 1h0m0 3h0m0 1h0m0 2h0m0 1h0m0 4h0m0 4h0m0 2h0m0 1h0m0 5h0m0 4h0m0 7h0m1-49h0m0 6h0m0 6h0m0 5h0m0 3h0m0 3h0m0 2h0m0 4h0m0 4h0m0 1h0m0 2h0m0 3h0m0 4h0m0 2h0m0 4h0m0 2h0m0 1h0m0 3h0m0 3h0m0 2h0m1-86h0m0 1h0m0 4h0m0 8h0m0 3h0m0 6h0m0 7h0m0 4h0m0 1h0m0 1h0m0 4h0m0 1h0m0 14h0m0 11h0m0 2h0m0 2h0m0 4h0m0 8h0m1-95h0m0 2h0m0 1h0m0 16h0m0 2h0m0 1h0m0 2h0m0 3h0m0 3h0m0 8h0m0 4h0m0 2h0m0 6h0m0 2h0m0 6h0m0 3h0m0 8h0m0 1h0m0 7h0m0 12h0m1-33h0m0 3h0m0 1h0m0 3h0m0 3h0m0 1h0m0 2h0m0 2h0m0 1h0m0 3h0m0 1h0m0 4h0m0 6h0m0 5h0m0 2h0m0 5h0m0 2h0m0 1h0m0 2h0m0 7h0m1-60h0m0 3h0m0 7h0m0 4h0m0 2h0m0 1h0m0 2h0m0 1h0m0 1h0m0 2h0m0 1h0m0 3h0m0 1h0m0 1h0m0 3h0m0 3h0m0 2h0m0 2h0m0 6h0m0 2h0m0 9h0m0 2h0m3-48h0m0 1h0m0 5h0m0 5h0m0 1h0m0 2h0m0 2h0m0 3h0m0 2h0m0 2h0m0 1h0m0 3h0m0 1h0m0 3h0m0 5h0m0 1h0m0 3h0m0 2h0m0 1h0m1-47h0m0 31h0m0 9h0m0 1h0m0 1h0m0 5h0m0 1h0m0 2h0m0 2h0m0 2h0m0 1h0m0 2h0m0 5h0m0 2h0m0 1h0m0 2h0m0 2h0m0 2h0m0 2h0m0 2h0m1-101h0m0 7h0m0 19h0m0 4h0m0 1h0m0 13h0m0 8h0m0 2h0m0 2h0m0 4h0m0 1h0m0 1h0m0 5h0m0 2h0m0 3h0m0 2h0m0 3h0m0 4h0m0 2h0m0 2h0m0 1h0m0 3h0m0 7h0m0 3h0m1-115h0m0 3h0m0 1h0m0 1h0m0 2h0m0 3h0m0 1h0m0 1h0m0 2h0m0 7h0m0 2h0m0 1h0m0 2h0m0 3h0m0 4h0m0 1h0m0 2h0m0 1h0m0 2h0m0 2h0m0 2h0m0 15h0m0 1h0m1-42h0m0 4h0m0 13h0m0 4h0m0 4h0m0 6h0m0 2h0m0 4h0m0 1h0m0 3h0m0 3h0m0 1h0m0 1h0m0 2h0m0 1h0m0 2h0m0 4h0m0 12h0m0 4h0m0 4h0m0 3h0m0 1h0m0 1h0m1-73h0m0 22h0m0 17h0m0 7h0m0 4h0m0 2h0m0 5h0m0 3h0m0 1h0m0 4h0m0 9h0m0 1h0m0 1h0m0 3h0m0 1h0m0 1h0m1-89h0m0 6h0m0 19h0m0 2h0m0 4h0m0 4h0m0 3h0m0 1h0m0 7h0m0 5h0m0 3h0m0 9h0m0 2h0m0 5h0m0 4h0m0 1h0m0 2h0m1-63h0m0 3h0m0 7h0m0 4h0m0 2h0m0 7h0m0 4h0m0 1h0m0 1h0m0 4h0m0 2h0m0 3h0m0 1h0m0 3h0m0 3h0m0 4h0m0 9h0m1-77h0m0 6h0m0 4h0m0 3h0m0 4h0m0 2h0m0 3h0m0 4h0m0 1h0m0 1h0m0 1h0m0 1h0m0 1h0m0 4h0m0 1h0m0 2h0m0 2h0m0 2h0m0 1h0m0 3h0m0 1h0m0 16h0m0 4h0m1-44h0m0 1h0m0 1h0m0 4h0m0 5h0m0 4h0m0 3h0m0 2h0m0 7h0m0 4h0m0 2h0m0 3h0m0 6h0m0 2h0m0 4h0m0 5h0m0 1h0m0 9h0m0 5h0m0 5h0m0 6h0m1-71h0m0 20h0m0 1h0m0 2h0m0 6h0m0 2h0m0 6h0m0 4h0m0 3h0m0 4h0m0 2h0m0 1h0m0 1h0m0 3h0m2-70h0m0 11h0m0 6h0m0 7h0m0 3h0m0 2h0m0 7h0m0 7h0m0 8h0m0 4h0m0 5h0m0 5h0m1-100h0m0 2h0m0 2h0m0 6h0m0 3h0m0 2h0m0 3h0m0 5h0m0 1h0m0 2h0m0 1h0m0 2h0m0 1h0m0 3h0m0 5h0m0 8h0m0 1h0m0 3h0m0 2h0m0 3h0m0 3h0m0 5h0m0 1h0m0 13h0m0 8h0m1-65h0m0 2h0m0 3h0m0 1h0m0 2h0m0 2h0m0 1h0m0 3h0m0 3h0m0 5h0m0 3h0m0 3h0m0 7h0m0 2h0m0 3h0m0 3h0m0 3h0m0 3h0m0 3h0m0 1h0m0 2h0m0 1h0m0 4h0m0 2h0m0 4h0m1-100h0m0 3h0m0 5h0m0 1h0m0 2h0m0 6h0m0 7h0m0 1h0m0 8h0m0 2h0m0 8h0m0 6h0m0 1h0m0 4h0m0 1h0m0 5h0m0 17h0m0 10h0m0 4h0m0 4h0m0 4h0m0 4h0m0 2h0m0 2h0m0 3h0m2-110h0m0 1h0m0 4h0m0 1h0m0 2h0m0 4h0m0 5h0m0 2h0m0 4h0m0 2h0m0 1h0m0 5h0m0 8h0m0 1h0m0 5h0m0 3h0m0 6h0m0 5h0m0 7h0m0 10h0m0 14h0m1-79h0m0 6h0m0 4h0m0 2h0m0 2h0m0 1h0m0 1h0m0 1h0m0 1h0m0 2h0m0 2h0m0 2h0m0 1h0m0 4h0m0 2h0m0 1h0m0 3h0m0 2h0m0 3h0m0 6h0m0 3h0m0 3h0m1-20h0m0 14h0m0 17h0m0 2h0m0 3h0m0 3h0m0 4h0m0 1h0m0 3h0m0 2h0m0 4h0m0 1h0m0 5h0m0 5h0m0 7h0m0 2h0m0 2h0m0 8h0m0 1h0m0 1h0m0 1h0m0 3h0m0 1h0m0 4h0m1-73h0m0 9h0m0 11h0m0 1h0m0 4h0m0 4h0m0 4h0m0 3h0m0 3h0m0 3h0m0 1h0m0 5h0m0 5h0m0 5h0m0 2h0m0 6h0m1-88h0m0 19h0m0 1h0m0 4h0m0 2h0m0 1h0m0 1h0m0 9h0m0 5h0m0 7h0m0 1h0m0 4h0m0 5h0m0 4h0m0 4h0m0 20h0m1-69h0m0 2h0m0 2h0m0 2h0m0 10h0m0 1h0m0 4h0m0 6h0m0 6h0m0 1h0m0 3h0m0 1h0m0 5h0m0 10h0m1-57h0m0 3h0m0 6h0m0 5h0m0 3h0m0 3h0m0 2h0m0 6h0m0 11h0m0 5h0m0 2h0m0 3h0m0 5h0m0 14h0m1-72h0m0 3h0m0 7h0m0 4h0m0 2h0m0 10h0m0 1h0m0 3h0m0 4h0m0 1h0m0 2h0m0 1h0m0 5h0m0 1h0m0 6h0m0 17h0m1-84h0m0 1h0m0 8h0m0 13h0m0 2h0m0 2h0m0 3h0m0 2h0m0 4h0m0 2h0m0 1h0m0 1h0m0 4h0m0 6h0m0 6h0m0 3h0m0 12h0m0 2h0m0 1h0m1-72h0m0 7h0m0 5h0m0 2h0m0 2h0m0 1h0m0 1h0m0 2h0m0 1h0m0 2h0m0 3h0m0 3h0m0 2h0m0 5h0m0 4h0m0 1h0m0 2h0m0 2h0m0 6h0m1-12h0m0 6h0m0 1h0m0 1h0m0 1h0m0 6h0m0 3h0m0 3h0m0 2h0m0 2h0m0 2h0m0 5h0m0 3h0m0 4h0m0 1h0m0 3h0m0 2h0m0 4h0m0 2h0m0 1h0m1-125h0m0 1h0m0 5h0m0 5h0m0 2h0m0 1h0m0 4h0m0 3h0m0 1h0m0 2h0m0 7h0m0 2h0m0 4h0m0 6h0m0 1h0m0 4h0m0 2h0m0 2h0m0 33h0m0 15h0m0 9h0m0 1h0m0 7h0m0 3h0m0 4h0m0 5h0m1-132h0m0 1h0m0 3h0m0 1h0m0 3h0m0 5h0m0 2h0m0 9h0m1-8h0m0 2h0m0 4h0m0 4h0m0 4h0m0 1h0m0 5h0m0 2h0m0 2h0m0 1h0m0 2h0m0 7h0m0 4h0m0 4h0m0 8h0m0 2h0m0 9h0m0 5h0m0 6h0m0 1h0m0 3h0m0 2h0m0 4h0m0 5h0m0 4h0m0 1h0m0 2h0m1-57h0m0 5h0m0 10h0m0 2h0m0 10h0m0 3h0m0 1h0m0 2h0m0 1h0m0 2h0m0 2h0m0 5h0m0 5h0m0 3h0m0 5h0m0 2h0m0 3h0m0 3h0m0 3h0m0 10h0m1-88h0m0 18h0m0 1h0m0 3h0m0 1h0m0 2h0m0 1h0m0 1h0m0 5h0m0 3h0m0 4h0m0 6h0m0 1h0m0 4h0m0 1h0m0 4h0m0 6h0m0 12h0m1-43h0m0 15h0m0 4h0m0 4h0m0 1h0m0 1h0m0 2h0m0 6h0m0 2h0m0 4h0m0 1h0m0 1h0m0 4h0m0 1h0m0 3h0m0 1h0m0 3h0m0 2h0m0 1h0m0 4h0m0 1h0m1-124h0m0 3h0m0 1h0m0 6h0m0 4h0m0 1h0m0 2h0m0 1h0m0 1h0m0 1h0m0 1h0m0 5h0m0 2h0m0 3h0m0 4h0m0 2h0m0 2h0m0 1h0m0 4h0m0 6h0m0 4h0m0 8h0m0 9h0m0 1h0m0 2h0m1-53h0m0 12h0m0 9h0m0 7h0m0 4h0m0 1h0m0 3h0m0 11h0m0 6h0m0 3h0m0 3h0m0 1h0m0 1h0m0 6h0m0 1h0m0 3h0m0 2h0m0 1h0m0 1h0m0 5h0m0 1h0m1-71h0m0 6h0m0 2h0m0 3h0m0 3h0m0 1h0m0 14h0m0 2h0m0 1h0m0 1h0m0 7h0m0 3h0m0 3h0m0 7h0m0 2h0m0 3h0m2-32h0m0 11h0m0 1h0m0 1h0m0 2h0m0 1h0m0 7h0m0 4h0m0 2h0m1-61h0m0 1h0m0 4h0m0 9h0m0 1h0m0 3h0m0 5h0m0 3h0m0 5h0m0 3h0m0 1h0m0 2h0m0 1h0m0 1h0m0 1h0m0 3h0m0 1h0m0 5h0m0 3h0m0 1h0m0 9h0m0 14h0m1-70h0m0 8h0m0 1h0m0 2h0m0 6h0m0 5h0m0 9h0m0 4h0m0 4h0m0 2h0m0 1h0m0 3h0m0 5h0m0 1h0m0 4h0m0 1h0m0 7h0m0 10h0m0 1h0m0 4h0m0 8h0m0 1h0m1-59h0m0 7h0m0 16h0m0 5h0m0 2h0m0 2h0m0 4h0m0 4h0m0 3h0m0 6h0m0 2h0m0 4h0m0 11h0m1-96h0m0 25h0m0 2h0m0 5h0m0 4h0m0 2h0m0 12h0m0 1h0m0 2h0m0 1h0m0 3h0m0 3h0m0 3h0m0 8h0m0 3h0m0 5h0m0 2h0m1-46h0m0 2h0m0 3h0m0 2h0m0 3h0m0 2h0m0 1h0m0 8h0m0 2h0m0 7h0m0 2h0m0 2h0m0 3h0m0 4h0m0 6h0m0 1h0m0 2h0m1-82h0m0 10h0m0 5h0m0 1h0m0 2h0m0 6h0m0 2h0m0 2h0m0 2h0m0 5h0m0 9h0m0 2h0m0 11h0m0 2h0m0 11h0m1-61h0m0 2h0m0 3h0m0 7h0m0 4h0m0 1h0m0 5h0m0 2h0m0 2h0m0 1h0m0 6h0m0 7h0m0 2h0m0 11h0m0 3h0m1-28h0m0 2h0m0 1h0m0 1h0m0 5h0m0 2h0m0 5h0m0 3h0m0 1h0m0 3h0m0 1h0m0 3h0m0 2h0m0 2h0m0 2h0m0 1h0m0 6h0m0 15h0m1-89h0m0 9h0m0 1h0m0 1h0m0 3h0m0 1h0m0 2h0m0 2h0m0 2h0m0 2h0m0 3h0m0 1h0m0 1h0m0 1h0m0 10h0m0 2h0m0 2h0m0 4h0m0 1h0m0 1h0m0 1h0m0 1h0m0 3h0m1-48h0m0 12h0m0 2h0m0 7h0m0 1h0m0 4h0m0 1h0m0 12h0m0 18h0m2-39h0m0 9h0m0 6h0m0 4h0m0 4h0m0 1h0m0 2h0m0 2h0m0 1h0m0 2h0m0 5h0m0 3h0m0 2h0m0 2h0m0 3h0m0 2h0m0 5h0m0 7h0m1-66h0m0 36h0m0 1h0m0 7h0m0 6h0m0 1h0m0 4h0m0 2h0m0 1h0m0 1h0m0 2h0m0 1h0m0 2h0m0 2h0m0 3h0m0 3h0m0 6h0m1-79h0m0 22h0m0 3h0m0 1h0m0 7h0m0 8h0m0 6h0m0 3h0m0 4h0m0 4h0m0 2h0m0 6h0m0 6h0m0 2h0m0 3h0m1-56h0m0 6h0m0 3h0m0 3h0m0 3h0m0 1h0m0 9h0m0 2h0m0 7h0m0 5h0m0 1h0m0 3h0m0 3h0m0 1h0m0 3h0m0 1h0m0 7h0m0 1h0m1-69h0m0 7h0m0 6h0m0 10h0m0 6h0m0 1h0m0 2h0m0 1h0m0 2h0m0 5h0m0 1h0m0 1h0m0 4h0m0 3h0m0 1h0m0 3h0m0 1h0m0 4h0m0 6h0m0 2h0m1-57h0m0 1h0m0 5h0m0 2h0m0 3h0m0 2h0m0 4h0m0 5h0m0 3h0m0 2h0m0 3h0m0 1h0m0 4h0m1-76h0m0 12h0m0 2h0m0 3h0m0 1h0m0 6h0m0 2h0m0 2h0m0 1h0m0 2h0m0 6h0m0 1h0m0 4h0m0 2h0m0 2h0m0 9h0m0 3h0m0 3h0m0 2h0m0 6h0m0 6h0m0 2h0m0 3h0m1-112h0m0 15h0m0 2h0m0 1h0m0 2h0m0 1h0m0 2h0m0 1h0m0 5h0m0 2h0m0 2h0m0 1h0m0 5h0m0 3h0m0 2h0m0 3h0m0 2h0m0 3h0m0 2h0m0 11h0m0 1h0m0 2h0m0 4h0m0 13h0m0 9h0m1-22h0m0 5h0m0 8h0m0 3h0m0 6h0m0 4h0m0 2h0m0 5h0m0 1h0m0 1h0m0 2h0m0 1h0m0 1h0m0 7h0m0 2h0m0 2h0m0 2h0m0 1h0m0 2h0m0 5h0m1-69h0m0 6h0m0 7h0m0 9h0m0 2h0m0 5h0m0 1h0m0 5h0m0 5h0m0 1h0m0 1h0m0 7h0m0 4h0m0 2h0m0 2h0m0 2h0m0 1h0m1-71h0m0 6h0m0 11h0m0 4h0m0 1h0m0 4h0m0 6h0m0 2h0m0 4h0m0 2h0m0 5h0m0 2h0m0 2h0m0 11h0m0 5h0m1-60h0m0 6h0m0 3h0m0 7h0m0 7h0m0 1h0m0 8h0m0 5h0m0 3h0m0 3h0m0 5h0m0 3h0m0 2h0m0 2h0m0 1h0m0 3h0m0 1h0m0 4h0m0 4h0m0 1h0m0 1h0m0 2h0m1-87h0m0 3h0m0 12h0m0 1h0m0 2h0m0 4h0m0 2h0m0 7h0m0 3h0m0 2h0m0 4h0m0 1h0m0 1h0m0 6h0m0 7h0m0 7h0m0 10h0m1-52h0m0 6h0m0 2h0m0 4h0m0 1h0m0 3h0m0 6h0m0 1h0m0 2h0m0 1h0m0 4h0m0 2h0m0 6h0m0 7h0m0 4h0m0 9h0m1-63h0m0 2h0m0 2h0m0 2h0m0 2h0m0 2h0m0 5h0m0 5h0m0 6h0m0 13h0m0 10h0m0 3h0m1-58h0m0 2h0m0 16h0m0 3h0m0 4h0m0 4h0m0 5h0m0 1h0m0 3h0m0 3h0m0 3h0m0 2h0m0 3h0m0 2h0m0 3h0m0 2h0m0 20h0m1-67h0m0 9h0m0 4h0m0 6h0m0 1h0m0 1h0m0 3h0m0 6h0m0 4h0m0 4h0m0 5h0m0 7h0m0 3h0m0 1h0m0 2h0m0 16h0m1-79h0m0 4h0m0 8h0m0 1h0m0 1h0m0 20h0m0 2h0m0 1h0m0 14h0m0 8h0m0 9h0m1-82h0m0 4h0m0 11h0m0 3h0m0 5h0m0 1h0m0 5h0m0 1h0m0 3h0m0 1h0m0 3h0m0 1h0m0 3h0m0 1h0m0 1h0m0 10h0m0 2h0m0 3h0m0 2h0m0 1h0m0 7h0m0 2h0m1-90h0m0 6h0m0 2h0m0 5h0m0 1h0m0 3h0m0 4h0m0 1h0m0 6h0m0 32h0m0 6h0m0 1h0m0 2h0m0 13h0m0 2h0m0 2h0m0 2h0m0 4h0m0 3h0m0 1h0m0 6h0m0 2h0m0 3h0m0 3h0m0 4h0m1-138h0m0 1h0m0 3h0m0 1h0m0 2h0m0 5h0m0 5h0m0 1h0m0 3h0m1-12h0m0 5h0m0 1h0m0 7h0m0 5h0m0 2h0m0 1h0m0 2h0m0 5h0m0 1h0m0 3h0m0 1h0m0 5h0m0 1h0m0 12h0m0 9h0m0 6h0m0 5h0m0 4h0m0 4h0m0 12h0m0 1h0m0 3h0m0 2h0m0 2h0m0 3h0m1-79h0m0 3h0m0 1h0m0 2h0m0 2h0m0 3h0m0 1h0m0 2h0m0 1h0m0 3h0m0 7h0m0 1h0m0 1h0m0 2h0m0 1h0m0 8h0m0 5h0m0 1h0m0 3h0m0 10h0m0 1h0m0 10h0m1-56h0m0 8h0m0 2h0m0 1h0m0 8h0m0 1h0m0 8h0m0 2h0m0 2h0m0 3h0m0 5h0m0 2h0m0 3h0m0 3h0m0 2h0m0 2h0m0 3h0m0 2h0m0 2h0m0 1h0m0 3h0m0 6h0m3-65h0m0 15h0m0 1h0m0 3h0m0 1h0m0 1h0m0 3h0m0 1h0m0 3h0m0 2h0m0 1h0m0 1h0m0 4h0m0 3h0m0 3h0m0 2h0m0 3h0m0 1h0m0 2h0m0 1h0m0 1h0m0 3h0m0 2h0m0 6h0m1-93h0m0 9h0m0 1h0m0 2h0m0 1h0m0 2h0m0 8h0m0 1h0m0 2h0m0 2h0m0 1h0m0 1h0m0 1h0m0 8h0m0 1h0m0 2h0m0 1h0m0 4h0m0 2h0m0 6h0m0 5h0m0 3h0m0 7h0m0 5h0m1-27h0m0 2h0m0 7h0m0 1h0m0 3h0m0 2h0m0 2h0m0 2h0m0 2h0m0 3h0m0 10h0m0 1h0m0 6h0m0 2h0m0 1h0m0 1h0m0 5h0m0 1h0m0 9h0m1-56h0m0 17h0m0 5h0m0 1h0m0 1h0m0 2h0m0 2h0m0 4h0m0 2h0m0 1h0m0 3h0m0 1h0m0 2h0m0 1h0m0 7h0m0 2h0m0 1h0m0 4h0m0 9h0m1-93h0m0 4h0m0 10h0m0 3h0m0 2h0m0 7h0m0 5h0m0 3h0m0 9h0m0 3h0m0 3h0m0 1h0m0 4h0m0 4h0m0 10h0m0 17h0m1-95h0m0 11h0m0 4h0m0 4h0m0 2h0m0 1h0m0 4h0m0 1h0m0 5h0m0 1h0m0 1h0m0 5h0m0 1h0m0 3h0m0 4h0m0 3h0m0 1h0m0 4h0m0 5h0m0 2h0m1-45h0m0 9h0m0 3h0m0 3h0m0 2h0m0 9h0m0 2h0m0 1h0m0 2h0m0 2h0m0 4h0m0 12h0m0 3h0m0 5h0m0 16h0m1-77h0m0 23h0m0 9h0m0 3h0m0 5h0m0 4h0m0 2h0m0 3h0m0 2h0m0 8h0m0 1h0m0 2h0m0 1h0m0 3h0m0 1h0m0 5h0m0 1h0m1-55h0m0 8h0m0 3h0m0 1h0m0 7h0m0 6h0m0 9h0m0 3h0m0 1h0m0 1h0m0 1h0m0 2h0m0 8h0m0 1h0m0 4h0m0 4h0m0 3h0m0 3h0m0 2h0m0 6h0m0 2h0m1-97h0m0 10h0m0 11h0m0 8h0m0 2h0m0 10h0m0 1h0m0 1h0m0 3h0m0 1h0m0 4h0m0 1h0m0 2h0m0 1h0m0 9h0m0 4h0m0 17h0m1-62h0m0 7h0m0 3h0m0 3h0m0 7h0m0 2h0m0 3h0m0 2h0m0 1h0m0 7h0m0 9h0m0 3h0m0 3h0m0 4h0m0 2h0m0 1h0m0 1h0m0 9h0m0 2h0m0 1h0m1-43h0m0 3h0m0 3h0m0 1h0m0 5h0m0 4h0m0 3h0m0 4h0m0 3h0m0 6h0m0 5h0m2-89h0m0 14h0m0 12h0m0 6h0m0 4h0m0 1h0m0 2h0m0 1h0m0 3h0m0 3h0m0 4h0m0 3h0m0 3h0m0 2h0m0 6h0m0 6h0m0 13h0m1-111h0m0 7h0m0 2h0m0 1h0m0 1h0m0 3h0m0 8h0m0 1h0m0 4h0m0 1h0m0 1h0m0 2h0m0 2h0m0 1h0m0 2h0m0 1h0m0 4h0m0 2h0m0 3h0m0 2h0m0 3h0m0 1h0m0 4h0m0 20h0m1-58h0m0 12h0m0 11h0m0 5h0m0 5h0m0 5h0m0 2h0m0 2h0m0 3h0m0 3h0m0 3h0m0 4h0m0 7h0m0 12h0m0 4h0m0 7h0m0 4h0m1-88h0m0 37h0m0 3h0m0 10h0m0 1h0m0 2h0m0 4h0m0 2h0m0 3h0m0 2h0m0 2h0m0 2h0m0 2h0m0 4h0m0 4h0m1-64h0m0 10h0m0 3h0m0 3h0m0 1h0m0 5h0m0 1h0m0 3h0m0 1h0m0 1h0m0 2h0m0 1h0m0 2h0m0 1h0m0 3h0m0 9h0m0 5h0m0 8h0m0 2h0m0 5h0m1-47h0m0 19h0m0 2h0m0 1h0m0 4h0m0 1h0m0 3h0m0 2h0m0 3h0m0 1h0m0 3h0m0 2h0m0 1h0m0 1h0m0 1h0m0 3h0m0 6h0m0 2h0m0 4h0m1-108h0m0 1h0m0 8h0m0 1h0m0 3h0m0 3h0m0 1h0m0 2h0m0 2h0m0 2h0m0 2h0m0 1h0m0 3h0m0 2h0m0 1h0m0 1h0m0 2h0m0 3h0m0 14h0m0 14h0m0 4h0m0 4h0m1-90h0m0 4h0m0 1h0m0 1h0m0 1h0m0 2h0m0 1h0m0 2h0m0 1h0m0 1h0m0 2h0m0 2h0m0 2h0m0 1h0m0 1h0m0 1h0m0 4h0m0 3h0m1-11h0m0 7h0m0 1h0m0 5h0m0 3h0m0 1h0m0 3h0m0 2h0m0 1h0m0 2h0m0 7h0m0 1h0m0 6h0m0 6h0m0 7h0m0 9h0m0 3h0m0 9h0m0 5h0m0 4h0m0 6h0m0 1h0m0 9h0m0 7h0m0 16h0m1-79h0m0 18h0m0 1h0m0 2h0m0 3h0m0 1h0m0 2h0m0 2h0m0 1h0m0 1h0m0 2h0m0 2h0m0 3h0m0 4h0m0 2h0m0 5h0m0 3h0m0 4h0m1-48h0m0 3h0m0 5h0m0 10h0m0 1h0m0 4h0m0 2h0m0 1h0m0 5h0m0 4h0m0 2h0m0 4h0m0 2h0m0 1h0m0 3h0m0 2h0m0 4h0m0 1h0m0 1h0m0 6h0m0 5h0m0 1h0m0 5h0m1-58h0m0 1h0m0 18h0m0 6h0m0 3h0m0 8h0m0 2h0m0 1h0m0 4h0m0 3h0m0 3h0m0 3h0m0 2h0m0 4h0m1-62h0m0 3h0m0 5h0m0 4h0m0 6h0m0 2h0m0 4h0m0 8h0m0 2h0m0 3h0m0 5h0m0 1h0m0 6h0m0 5h0m1-107h0m0 16h0m0 5h0m0 5h0m0 4h0m0 4h0m0 5h0m0 6h0m0 2h0m0 1h0m0 3h0m0 5h0m0 5h0m0 5h0m0 2h0m0 4h0m0 3h0m0 2h0m0 1h0m0 2h0m0 3h0m0 7h0m1-76h0m0 9h0m0 2h0m0 6h0m0 1h0m0 2h0m0 2h0m0 1h0m0 1h0m0 2h0m0 1h0m0 2h0m0 1h0m0 4h0m0 1h0m0 5h0m0 4h0m0 6h0m0 9h0m1-28h0m0 1h0m0 1h0m0 8h0m0 3h0m0 1h0m0 2h0m0 2h0m0 1h0m0 2h0m0 3h0m0 2h0m0 1h0m0 3h0m0 6h0m0 2h0m0 6h0m0 4h0m0 2h0m0 2h0m3-85h0m0 5h0m0 11h0m0 7h0m0 1h0m0 2h0m0 2h0m0 3h0m0 1h0m0 3h0m0 2h0m0 2h0m0 1h0m0 1h0m0 4h0m0 3h0m0 2h0m0 6h0m0 1h0m0 4h0m0 1h0m0 6h0m0 2h0m0 2h0m0 4h0m0 6h0m1-105h0m0 3h0m0 6h0m0 1h0m0 11h0m0 1h0m0 2h0m0 1h0m0 8h0m0 1h0m0 1h0m0 4h0m0 2h0m0 3h0m0 6h0m0 1h0m0 9h0m0 5h0m0 1h0m0 2h0m0 9h0m0 1h0m0 1h0m0 2h0m1-66h0m0 2h0m0 7h0m0 4h0m0 1h0m0 2h0m0 2h0m0 1h0m0 1h0m0 2h0m0 2h0m0 4h0m0 1h0m0 1h0m0 3h0m0 2h0m0 8h0m0 6h0m0 8h0m0 1h0m0 2h0m0 3h0m1-93h0m0 9h0m0 5h0m0 1h0m0 3h0m0 4h0m0 3h0m0 4h0m0 7h0m0 4h0m0 1h0m0 3h0m1-43h0m0 10h0m0 4h0m0 1h0m0 5h0m0 5h0m0 3h0m0 3h0m0 1h0m0 6h0m0 7h0m1-4h0m0 10h0m0 1h0m0 3h0m0 2h0m0 4h0m0 7h0m0 3h0m0 4h0m0 3h0m0 2h0m0 5h0m0 2h0m0 5h0m0 4h0m0 3h0m0 1h0m0 3h0m0 1h0m0 2h0m0 1h0m0 2h0m0 1h0m0 4h0m0 1h0m0 9h0m0 2h0m1-86h0m0 5h0m0 4h0m0 5h0m0 2h0m0 8h0m0 1h0m0 2h0m0 1h0m0 3h0m0 2h0m0 1h0m0 2h0m0 1h0m0 2h0m0 6h0m0 4h0m0 3h0m0 2h0m0 4h0m1-51h0m0 3h0m0 2h0m0 8h0m0 1h0m0 2h0m0 18h0m0 2h0m0 9h0m0 1h0m0 8h0m0 7h0m0 1h0m0 3h0m1-74h0m0 3h0m0 3h0m0 2h0m0 14h0m0 15h0m0 4h0m0 8h0m0 2h0m0 10h0m0 4h0m0 2h0m0 1h0m1-83h0m0 27h0m0 3h0m0 3h0m0 2h0m0 3h0m0 4h0m0 3h0m0 2h0m0 3h0m0 2h0m0 1h0m0 9h0m0 1h0m0 6h0m0 4h0m0 9h0m1-69h0m0 17h0m0 5h0m0 7h0m0 4h0m0 4h0m0 7h0m0 2h0m0 5h0m0 3h0m0 5h0m0 3h0m0 1h0m0 6h0m0 4h0m1-52h0m0 17h0m0 4h0m0 2h0m0 5h0m0 1h0m0 4h0m0 3h0m0 3h0m0 2h0m0 3h0m0 2h0m0 4h0m0 3h0m0 2h0m0 3h0m0 1h0m0 2h0m0 2h0m1-70h0m0 6h0m0 7h0m0 4h0m0 4h0m0 11h0m0 5h0m0 5h0m0 6h0m0 2h0m0 11h0m0 5h0m0 1h0m0 11h0m1-86h0m0 10h0m0 2h0m0 5h0m0 1h0m0 1h0m0 3h0m0 3h0m0 1h0m0 2h0m0 1h0m0 2h0m0 4h0m0 2h0m0 1h0m0 13h0m0 2h0m0 9h0m1-51h0m0 9h0m0 8h0m0 1h0m0 4h0m0 1h0m0 4h0m0 2h0m0 2h0m0 3h0m0 3h0m0 6h0m0 3h0m0 1h0m0 4h0m0 3h0m0 1h0m1-79h0m0 3h0m0 3h0m0 1h0m0 1h0m0 1h0m0 1h0m0 2h0m0 3h0m0 1h0m0 12h0m0 4h0m0 3h0m0 9h0m0 9h0m0 5h0m0 4h0m0 7h0m0 5h0m0 3h0m0 1h0m0 2h0m0 5h0m0 5h0m0 3h0m0 3h0m1-127h0m0 1h0m0 1h0m0 2h0m0 1h0m0 1h0m0 2h0m0 1h0m0 1h0m0 2h0m0 1h0m0 2h0m0 1h0m0 2h0m0 1h0m0 2h0m0 1h0m0 3h0m0 5h0m0 2h0m0 2h0m1-23h0m0 7h0m0 2h0m0 5h0m0 1h0m0 4h0m0 1h0m0 1h0m0 5h0m0 3h0m0 1h0m0 2h0m0 2h0m0 1h0m0 2h0m0 8h0m0 1h0m0 5h0m0 3h0m0 1h0m0 10h0m0 10h0m0 7h0m0 3h0m0 8h0m0 1h0m1-70h0m0 22h0m0 4h0m0 4h0m0 5h0m0 2h0m0 6h0m0 4h0m0 1h0m0 4h0m0 1h0m0 2h0m0 4h0m0 2h0m0 3h0m0 1h0m0 1h0m0 8h0m1-43h0m0 9h0m0 2h0m0 1h0m0 7h0m0 3h0m0 9h0m0 3h0m0 3h0m0 1h0m0 3h0m0 9h0m0 4h0m0 2h0m0 1h0m0 3h0m0 6h0m0 1h0m0 8h0m1-61h0m0 3h0m0 8h0m0 3h0m0 3h0m0 6h0m0 1h0m0 7h0m0 3h0m0 1h0m0 3h0m0 2h0m0 7h0m0 1h0m0 9h0m0 2h0m1-74h0m0 4h0m0 3h0m0 2h0m0 3h0m0 8h0m0 1h0m0 2h0m0 10h0m0 10h0m0 9h0m0 7h0m0 2h0m0 3h0m0 3h0m0 2h0m1-79h0m0 6h0m0 15h0m0 2h0m0 1h0m0 6h0m0 1h0m0 5h0m0 1h0m0 1h0m0 8h0m0 4h0m0 4h0m0 2h0m0 1h0m0 1h0m0 3h0m0 4h0m1-69h0m0 3h0m0 5h0m0 8h0m0 6h0m0 3h0m0 1h0m0 2h0m0 1h0m0 2h0m0 10h0m0 3h0m0 2h0m0 2h0m0 1h0m0 2h0m0 3h0m0 1h0m0 5h0m0 1h0m0 4h0m0 2h0m0 2h0m0 2h0m0 5h0m0 7h0m3-86h0m0 9h0m0 5h0m0 5h0m0 4h0m0 2h0m0 1h0m0 3h0m0 6h0m0 1h0m0 1h0m0 4h0m0 3h0m0 1h0m0 2h0m0 2h0m0 2h0m0 2h0m0 2h0m0 1h0m0 4h0m0 4h0m0 14h0m1-68h0m0 5h0m0 5h0m0 10h0m0 2h0m0 4h0m0 7h0m0 13h0m0 1h0m0 3h0m0 3h0m0 1h0m0 3h0m0 3h0m0 1h0m0 5h0m0 3h0m0 8h0m1-89h0m0 1h0m0 3h0m0 4h0m0 4h0m0 9h0m0 5h0m0 1h0m0 1h0m0 1h0m0 1h0m0 3h0m0 1h0m0 1h0m0 5h0m0 3h0m0 4h0m0 3h0m0 2h0m0 4h0m0 1h0m1-71h0m0 1h0m0 2h0m0 10h0m0 11h0m0 1h0m0 3h0m0 3h0m0 8h0m0 8h0m0 4h0m0 4h0m0 6h0m0 1h0m0 6h0m0 3h0m0 4h0m0 5h0m0 15h0m0 10h0m1-117h0m0 9h0m0 3h0m0 1h0m0 2h0m0 1h0m0 2h0m0 2h0m0 3h0m0 4h0m0 1h0m0 2h0m0 5h0m0 2h0m0 1h0m0 6h0m0 1h0m0 4h0m0 2h0m0 1h0m0 38h0m1-62h0m0 4h0m0 9h0m0 3h0m0 4h0m0 8h0m0 4h0m0 5h0m0 1h0m0 4h0m0 2h0m0 1h0m0 3h0m0 3h0m0 1h0m0 3h0m0 2h0m0 16h0m1-65h0m0 9h0m0 5h0m0 5h0m0 3h0m0 2h0m0 3h0m0 10h0m0 3h0m0 1h0m0 8h0m0 4h0m0 5h0m0 3h0m1-63h0m0 3h0m0 3h0m0 3h0m0 4h0m0 6h0m0 6h0m0 4h0m0 3h0m0 2h0m0 2h0m0 2h0m0 3h0m0 6h0m0 1h0m0 1h0m0 6h0m1-64h0m0 6h0m0 5h0m0 6h0m0 3h0m0 2h0m0 5h0m0 2h0m0 2h0m0 2h0m0 4h0m0 5h0m0 2h0m0 7h0m0 3h0m1-65h0m0 7h0m0 4h0m0 2h0m0 1h0m0 1h0m0 1h0m0 3h0m0 8h0m0 4h0m0 3h0m0 2h0m0 2h0m0 7h0m0 2h0m0 7h0m0 17h0m1-52h0m0 2h0m0 2h0m0 2h0m0 1h0m0 5h0m0 1h0m0 9h0m0 2h0m0 7h0m0 2h0m0 2h0m0 3h0m0 1h0m0 17h0m2-66h0m0 25h0m0 4h0m0 2h0m0 3h0m0 8h0m0 6h0m0 7h0m0 1h0m1-45h0m0 1h0m0 3h0m0 3h0m0 1h0m0 2h0m0 12h0m0 3h0m0 1h0m0 2h0m0 2h0m0 3h0m0 2h0m0 2h0m0 2h0m0 4h0m0 3h0m0 7h0m0 14h0m1-98h0m0 10h0m0 2h0m0 4h0m0 2h0m0 1h0m0 5h0m0 1h0m0 1h0m0 1h0m0 1h0m0 4h0m0 3h0m0 1h0m0 2h0m0 3h0m0 3h0m0 3h0m0 4h0m0 6h0m0 1h0m0 4h0m0 3h0m0 16h0m0 2h0m1-69h0m0 1h0m0 18h0m0 12h0m0 1h0m0 3h0m0 4h0m0 8h0m0 5h0m0 1h0m0 3h0m0 2h0m0 1h0m0 2h0m0 3h0m0 5h0m0 3h0m0 7h0m0 2h0m0 11h0m0 5h0m0 1h0m1-94h0m0 12h0m0 5h0m0 11h0m0 6h0m0 11h0m0 8h0m0 3h0m0 1h0m0 4h0m0 3h0m0 1h0m0 1h0m0 11h0m0 1h0m0 2h0m0 5h0m0 1h0m0 1h0m0 1h0m1-77h0m0 2h0m0 9h0m0 1h0m0 3h0m0 4h0m0 2h0m0 5h0m0 2h0m0 2h0m0 2h0m0 2h0m0 2h0m0 2h0m0 2h0m0 5h0m0 16h0m0 4h0m0 3h0m1-98h0m0 24h0m0 1h0m0 4h0m0 3h0m0 3h0m0 2h0m0 2h0m0 1h0m0 3h0m0 2h0m0 2h0m0 5h0m0 6h0m0 10h0m0 1h0m1-76h0m0 4h0m0 4h0m0 3h0m0 1h0m0 2h0m0 1h0m0 1h0m0 1h0m0 2h0m0 5h0m0 1h0m0 3h0m0 4h0m0 7h0m0 3h0m0 8h0m0 9h0m0 1h0m1-47h0m0 18h0m0 7h0m0 3h0m0 13h0m0 1h0m0 1h0m0 6h0m0 3h0m0 3h0m0 3h0m0 1h0m0 6h0m0 1h0m0 5h0m0 4h0m1-75h0m0 25h0m0 5h0m0 3h0m0 2h0m0 2h0m0 3h0m0 5h0m0 3h0m0 11h0m0 3h0m0 1h0m0 5h0m0 5h0m0 2h0m1-54h0m0 2h0m0 3h0m0 4h0m0 14h0m0 5h0m0 3h0m0 3h0m0 9h0m0 7h0m0 3h0m0 3h0m0 17h0m0 1h0m1-59h0m0 1h0m0 1h0m0 2h0m0 2h0m0 3h0m0 5h0m0 5h0m0 1h0m0 3h0m0 2h0m0 3h0m0 3h0m0 3h0m0 1h0m0 1h0m0 5h0m0 7h0m0 5h0m0 3h0m1-85h0m0 1h0m0 3h0m0 2h0m0 2h0m0 1h0m0 3h0m0 2h0m0 7h0m0 1h0m0 1h0m0 3h0m0 2h0m0 9h0m0 2h0m0 9h0m0 21h0m1-57h0m0 5h0m0 10h0m0 1h0m0 4h0m0 4h0m0 5h0m0 1h0m0 3h0m0 4h0m0 3h0m0 2h0m0 3h0m0 4h0m0 3h0m0 21h0m1-60h0m0 6h0m0 7h0m0 2h0m0 2h0m0 11h0m0 5h0m0 4h0m0 1h0m0 4h0m0 4h0m0 1h0m0 2h0m0 1h0m0 3h0m0 5h0m0 4h0m1-40h0m0 5h0m0 3h0m0 2h0m0 3h0m0 8h0m0 3h0m0 2h0m0 3h0m0 1h0m0 1h0m0 5h0m0 1h0m0 1h0m0 2h0m0 2h0m0 1h0m0 1h0m0 1h0m0 4h0m0 3h0m1-88h0m0 20h0m0 2h0m0 3h0m0 3h0m0 2h0m0 6h0m0 3h0m0 13h0m0 3h0m0 1h0m0 3h0m0 2h0m0 1h0m0 2h0m0 2h0m0 2h0m0 10h0m0 2h0m1-90h0m0 3h0m0 7h0m0 1h0m0 2h0m0 2h0m0 1h0m0 2h0m0 5h0m0 2h0m0 2h0m0 2h0m0 3h0m0 4h0m0 2h0m0 2h0m0 15h0m0 4h0m0 1h0m1-46h0m0 5h0m0 7h0m0 5h0m0 4h0m0 2h0m0 5h0m0 2h0m0 2h0m0 4h0m0 1h0m0 2h0m0 1h0m0 4h0m0 4h0m0 3h0m0 1h0m2-18h0m0 7h0m0 2h0m0 2h0m0 5h0m0 6h0m0 3h0m0 1h0m0 12h0m1-80h0m0 2h0m0 14h0m0 7h0m0 6h0m0 11h0m0 3h0m0 3h0m0 1h0m0 6h0m0 4h0m0 2h0m0 2h0m0 1h0m0 1h0m0 2h0m0 1h0m0 3h0m0 4h0m0 2h0m0 1h0m0 1h0m0 1h0m0 5h0m1-104h0m0 6h0m0 1h0m0 1h0m0 3h0m0 1h0m0 3h0m0 1h0m0 1h0m0 2h0m0 1h0m0 1h0m0 2h0m0 3h0m0 3h0m0 4h0m0 1h0m0 3h0m0 2h0m0 1h0m0 1h0m0 7h0m0 10h0m1-74h0m0 21h0m0 1h0m0 18h0m0 1h0m0 5h0m0 2h0m0 4h0m0 1h0m0 1h0m0 3h0m0 7h0m0 3h0m0 1h0m0 14h0m0 2h0m0 4h0m2-23h0m0 9h0m0 6h0m0 7h0m0 1h0m0 1h0m0 1h0m0 3h0m0 2h0m0 1h0m0 16h0m1-66h0m0 3h0m0 8h0m0 1h0m0 3h0m0 1h0m0 8h0m0 2h0m0 5h0m0 4h0m0 1h0m0 2h0m0 3h0m0 4h0m0 7h0m0 6h0m1-43h0m0 2h0m0 3h0m0 5h0m0 3h0m0 4h0m0 3h0m0 1h0m0 7h0m0 1h0m0 3h0m0 1h0m0 2h0m0 2h0m0 4h0m0 3h0m0 1h0m0 8h0m0 1h0m0 5h0m0 1h0m1-91h0m0 1h0m0 3h0m0 5h0m0 5h0m0 3h0m0 4h0m0 2h0m0 1h0m0 1h0m0 5h0m0 10h0m0 7h0m0 7h0m0 1h0m0 16h0m0 3h0m1-87h0m0 5h0m0 11h0m0 3h0m0 1h0m0 1h0m0 2h0m0 2h0m0 9h0m0 2h0m0 4h0m0 5h0m0 10h0m0 5h0m0 11h0m0 20h0m1-73h0m0 11h0m0 2h0m0 1h0m0 6h0m0 4h0m0 2h0m0 2h0m0 1h0m0 1h0m0 1h0m0 5h0m0 3h0m0 2h0m0 4h0m0 1h0m0 4h0m0 7h0m0 8h0m0 1h0m0 3h0m0 16h0m1-49h0m0 1h0m0 4h0m0 1h0m0 5h0m0 2h0m0 1h0m0 3h0m0 1h0m0 2h0m0 4h0m0 1h0m0 3h0m0 1h0m0 2h0m0 9h0m0 1h0m0 3h0m0 11h0m1-99h0m0 13h0m0 5h0m0 6h0m0 4h0m0 1h0m0 3h0m0 5h0m0 4h0m0 5h0m0 7h0m0 2h0m0 3h0m0 5h0m0 3h0m0 4h0m0 9h0m0 4h0m1-108h0m0 10h0m0 2h0m0 8h0m0 8h0m0 4h0m0 2h0m0 1h0m0 1h0m0 5h0m0 3h0m0 1h0m0 1h0m0 2h0m0 2h0m0 1h0m0 3h0m0 2h0m0 3h0m0 5h0m0 7h0m1-15h0m0 4h0m0 7h0m0 1h0m0 4h0m0 1h0m0 3h0m0 2h0m0 3h0m0 3h0m0 1h0m0 1h0m0 6h0m0 3h0m0 1h0m0 4h0m0 1h0m0 8h0m0 5h0m1-84h0m0 9h0m0 13h0m0 4h0m0 2h0m0 4h0m0 1h0m0 5h0m0 14h0m0 6h0m0 2h0m0 1h0m0 3h0m0 4h0m1-72h0m0 12h0m0 11h0m0 5h0m0 2h0m0 1h0m0 3h0m0 4h0m0 2h0m0 2h0m0 2h0m0 2h0m0 4h0m0 2h0m0 1h0m0 1h0m0 2h0m0 4h0m0 1h0m0 11h0m0 2h0m0 8h0m3-99h0m0 1h0m0 5h0m0 4h0m0 7h0m0 12h0m0 1h0m0 2h0m0 3h0m0 3h0m0 2h0m0 2h0m0 2h0m0 1h0m0 3h0m0 10h0m0 4h0m0 3h0m0 1h0m0 1h0m0 7h0m0 1h0m0 23h0m1-113h0m0 2h0m0 10h0m0 4h0m0 7h0m0 1h0m0 3h0m0 1h0m0 2h0m0 3h0m0 1h0m0 5h0m0 6h0m0 3h0m0 1h0m0 2h0m0 17h0m0 4h0m0 3h0m0 10h0m0 2h0m0 2h0m0 13h0m0 5h0m0 6h0m0 14h0m1-65h0m0 3h0m0 6h0m0 6h0m0 3h0m0 3h0m0 4h0m0 5h0m0 2h0m0 1h0m0 2h0m0 3h0m0 3h0m0 2h0m0 12h0m0 2h0m1-69h0m0 5h0m0 1h0m0 3h0m0 2h0m0 5h0m0 1h0m0 3h0m0 4h0m0 7h0m0 3h0m0 1h0m0 1h0m0 8h0m0 5h0m0 9h0m0 11h0m1-76h0m0 5h0m0 2h0m0 3h0m0 2h0m0 4h0m0 4h0m0 4h0m0 2h0m0 3h0m0 4h0m0 2h0m0 2h0m0 2h0m0 3h0m0 7h0m0 4h0m0 3h0m0 7h0m1-97h0m0 9h0m0 2h0m0 5h0m0 2h0m0 1h0m0 6h0m0 1h0m0 2h0m0 5h0m0 4h0m0 1h0m0 3h0m0 2h0m0 2h0m0 15h0m0 3h0m0 1h0m0 2h0m0 3h0m0 14h0m0 2h0m0 1h0m0 32h0m1-127h0m0 4h0m0 1h0m0 1h0m0 4h0m0 2h0m1-10h0m0 3h0m0 1h0m0 5h0m0 3h0m0 5h0m0 4h0m0 1h0m0 7h0m0 1h0m0 1h0m0 4h0m0 1h0m0 1h0m0 6h0m0 5h0m0 2h0m0 4h0m0 1h0m0 1h0m0 6h0m0 8h0m1-25h0m0 1h0m0 12h0m0 4h0m0 2h0m0 1h0m0 2h0m0 4h0m0 1h0m0 2h0m0 3h0m0 1h0m0 1h0m0 2h0m0 1h0m0 3h0m0 3h0m0 1h0m0 1h0m0 5h0m0 3h0m0 6h0m0 9h0m1-70h0m0 12h0m0 2h0m0 7h0m0 1h0m0 2h0m0 2h0m0 5h0m0 7h0m0 2h0m0 3h0m0 5h0m0 18h0m0 1h0m1-49h0m0 19h0m0 1h0m0 7h0m0 4h0m0 1h0m0 4h0m0 4h0m0 2h0m0 2h0m0 4h0m0 5h0m0 1h0m0 3h0m0 7h0m0 1h0m1-63h0m0 2h0m0 5h0m0 2h0m0 3h0m0 1h0m0 5h0m0 6h0m0 1h0m0 2h0m0 3h0m0 2h0m0 5h0m0 9h0m0 2h0m0 7h0m0 1h0m0 7h0m1-69h0m0 11h0m0 6h0m0 4h0m0 6h0m0 5h0m0 6h0m0 3h0m0 5h0m0 1h0m0 2h0m0 4h0m0 4h0m1-71h0m0 18h0m0 9h0m0 5h0m0 4h0m0 5h0m0 3h0m0 3h0m0 2h0m0 2h0m0 2h0m0 2h0m0 3h0m0 3h0m0 2h0m0 4h0m0 1h0m0 2h0m0 1h0m0 2h0m0 9h0m0 1h0m1-126h0m0 1h0m0 4h0m0 2h0m0 1h0m0 1h0m0 3h0m0 2h0m0 3h0m0 1h0m0 3h0m0 1h0m0 5h0m0 4h0m0 1h0m0 3h0m0 3h0m0 3h0m0 6h0m0 2h0m0 2h0m0 4h0m0 2h0m0 2h0m0 6h0m0 20h0m1-40h0m0 13h0m0 1h0m0 5h0m0 3h0m0 2h0m0 4h0m0 2h0m0 3h0m0 1h0m0 1h0m0 3h0m0 6h0m0 3h0m0 1h0m0 15h0m0 2h0m0 5h0m0 6h0m0 7h0m0 2h0m1-76h0m0 2h0m0 3h0m0 2h0m0 1h0m0 4h0m0 1h0m0 1h0m0 4h0m0 3h0m0 1h0m0 6h0m0 7h0m0 2h0m0 3h0m0 1h0m0 1h0m0 6h0m1-57h0m0 4h0m0 7h0m0 12h0m0 3h0m0 1h0m0 6h0m0 3h0m0 1h0m0 2h0m0 2h0m0 1h0m0 6h0m0 3h0m0 2h0m0 1h0m0 2h0m0 2h0m0 1h0m0 2h0m0 4h0m0 6h0m0 2h0m1-117h0m0 2h0m0 2h0m0 2h0m0 2h0m0 2h0m0 5h0m0 1h0m0 1h0m0 3h0m0 2h0m0 2h0m0 2h0m0 1h0m0 1h0m0 1h0m0 4h0m0 1h0m0 1h0m0 2h0m0 5h0m0 1h0m0 1h0m0 5h0m1-17h0m0 2h0m0 6h0m0 7h0m0 3h0m0 2h0m0 1h0m0 7h0m0 2h0m0 4h0m0 1h0m0 1h0m0 3h0m0 1h0m0 5h0m0 2h0m0 2h0m0 3h0m0 1h0m0 1h0m0 2h0m0 2h0m0 2h0m0 3h0m0 8h0m1-105h0m0 4h0m0 1h0m0 6h0m0 1h0m0 3h0m0 1h0m0 7h0m0 2h0m0 11h0m0 4h0m0 3h0m1-44h0m0 4h0m0 1h0m0 3h0m0 1h0m0 2h0m0 14h0m0 2h0m0 5h0m0 3h0m0 7h0m0 5h0m1-25h0m0 6h0m0 1h0m0 2h0m0 4h0m0 3h0m0 2h0m0 2h0m0 2h0m0 2h0m0 2h0m0 1h0m0 2h0m0 2h0m0 1h0m0 2h0m0 2h0m0 5h0m0 3h0m0 1h0m0 2h0m0 3h0m0 25h0m0 2h0m1-34h0m0 21h0m0 3h0m0 5h0m0 1h0m0 7h0m0 5h0m0 3h0m0 1h0m0 1h0m0 3h0m0 1h0m0 1h0m0 2h0m0 7h0m0 12h0m2-60h0m0 10h0m0 1h0m0 2h0m0 7h0m0 11h0m0 2h0m0 4h0m0 6h0m0 9h0m0 3h0m1-81h0m0 6h0m0 7h0m0 1h0m0 3h0m0 2h0m0 1h0m0 3h0m0 1h0m0 3h0m0 2h0m0 1h0m0 4h0m0 4h0m0 1h0m0 3h0m0 2h0m0 2h0m0 4h0m0 2h0m0 3h0m0 7h0m0 4h0m1-53h0m0 6h0m0 2h0m0 3h0m0 6h0m0 1h0m0 2h0m0 1h0m0 2h0m0 1h0m0 4h0m0 1h0m0 2h0m0 4h0m0 3h0m0 4h0m0 1h0m1-74h0m0 1h0m0 2h0m0 2h0m0 1h0m0 1h0m0 6h0m0 2h0m0 2h0m0 1h0m0 8h0m0 1h0m0 4h0m0 3h0m0 6h0m0 10h0m0 3h0m0 3h0m0 8h0m0 2h0m1-67h0m0 5h0m0 2h0m0 2h0m0 1h0m0 2h0m0 2h0m0 2h0m0 8h0m0 1h0m0 5h0m0 1h0m0 6h0m0 2h0m0 3h0m0 3h0m0 2h0m0 2h0m0 5h0m0 1h0m0 8h0m1-55h0m0 2h0m0 10h0m0 2h0m0 3h0m0 7h0m0 9h0m0 3h0m0 3h0m0 1h0m0 2h0m0 12h0m0 15h0m1-76h0m0 9h0m0 7h0m0 5h0m0 5h0m0 1h0m0 6h0m0 1h0m0 3h0m0 5h0m0 3h0m0 2h0m0 4h0m0 4h0m0 2h0m0 2h0m0 5h0m0 5h0m1-57h0m0 7h0m0 4h0m0 6h0m0 3h0m0 2h0m0 1h0m0 9h0m0 8h0m0 6h0m0 3h0m0 3h0m1-56h0m0 2h0m0 10h0m0 3h0m0 1h0m0 3h0m0 6h0m0 1h0m0 3h0m0 1h0m0 1h0m0 2h0m0 8h0m0 3h0m0 3h0m0 4h0m0 2h0m0 2h0m1-61h0m0 11h0m0 1h0m0 4h0m0 2h0m0 10h0m0 13h0m0 1h0m0 3h0m0 2h0m0 1h0m0 4h0m0 1h0m0 3h0m0 4h0m0 1h0m0 2h0m0 10h0m1-91h0m0 32h0m0 2h0m0 1h0m0 8h0m0 5h0m0 7h0m0 1h0m0 5h0m0 1h0m0 2h0m0 1h0m0 2h0m0 14h0m0 2h0m0 2h0m1-76h0m0 1h0m0 1h0m0 3h0m0 2h0m0 2h0m0 1h0m0 1h0m0 3h0m0 1h0m0 4h0m0 1h0m0 1h0m0 5h0m0 3h0m0 6h0m0 3h0m0 4h0m0 11h0m0 3h0m0 24h0m1-73h0m0 4h0m0 5h0m0 2h0m0 2h0m0 1h0m0 3h0m0 5h0m0 1h0m0 2h0m0 3h0m0 10h0m0 4h0m0 11h0m0 1h0m0 2h0m0 1h0m0 2h0m0 9h0m0 10h0m1-59h0m0 13h0m0 5h0m0 1h0m0 3h0m0 4h0m0 2h0m0 10h0m0 2h0m0 1h0m0 2h0m0 6h0m0 4h0m0 2h0m0 1h0m0 12h0m1-89h0m0 8h0m0 5h0m0 6h0m0 8h0m0 1h0m0 2h0m0 1h0m0 5h0m0 4h0m0 4h0m0 1h0m0 6h0m0 2h0m0 4h0m0 7h0m0 1h0m1-52h0m0 2h0m0 3h0m0 6h0m0 2h0m0 4h0m0 3h0m0 1h0m0 1h0m0 4h0m0 1h0m0 1h0m0 3h0m0 9h0m0 12h0m0 2h0m0 5h0m1-62h0m0 19h0m0 8h0m0 6h0m0 4h0m0 4h0m0 2h0m0 2h0m0 3h0m0 1h0m0 2h0m0 1h0m0 4h0m0 7h0m0 1h0m2-62h0m0 2h0m0 5h0m0 5h0m0 3h0m0 2h0m0 2h0m0 8h0m0 5h0m0 2h0m0 9h0m0 4h0m1-86h0m0 10h0m0 2h0m0 7h0m0 2h0m0 2h0m0 1h0m0 1h0m0 2h0m0 5h0m0 1h0m0 1h0m0 3h0m0 1h0m0 7h0m0 4h0m0 3h0m0 3h0m0 6h0m0 1h0m0 2h0m0 2h0m0 12h0m0 1h0m0 2h0m0 2h0m0 11h0m1-98h0m0 2h0m0 4h0m0 3h0m0 2h0m0 1h0m0 1h0m0 3h0m0 1h0m0 3h0m0 3h0m0 2h0m0 1h0m0 1h0m0 3h0m0 3h0m0 3h0m0 3h0m0 7h0m0 16h0m0 3h0m0 24h0m0 4h0m0 9h0m0 5h0m0 9h0m0 8h0m1-26h0m0 2h0m0 5h0m0 4h0m0 1h0m0 2h0m0 1h0m0 2h0m0 3h0m0 2h0m0 5h0m0 2h0m0 2h0m0 1h0m0 2h0m0 1h0m0 2h0m0 1h0m0 1h0m0 2h0m1-58h0m0 10h0m0 4h0m0 1h0m0 7h0m0 2h0m0 2h0m0 5h0m0 7h0m0 1h0m0 2h0m0 1h0m0 2h0m0 1h0m0 8h0m0 3h0m1-65h0m0 5h0m0 4h0m0 6h0m0 1h0m0 4h0m0 1h0m0 4h0m0 6h0m0 4h0m0 1h0m0 1h0m0 3h0m0 3h0m0 1h0m0 3h0m0 13h0m0 1h0m0 2h0m0 1h0m1-65h0m0 2h0m0 4h0m0 1h0m0 7h0m0 6h0m0 6h0m0 3h0m0 1h0m0 6h0m0 2h0m0 2h0m0 2h0m0 1h0m0 1h0m0 4h0m0 3h0m0 4h0m0 2h0m0 1h0m0 3h0m0 1h0m1-99h0m0 1h0m0 1h0m0 1h0m0 1h0m0 3h0m0 1h0m0 2h0m0 3h0m0 2h0m0 2h0m0 1h0m0 5h0m0 3h0m0 3h0m0 1h0m0 2h0m0 1h0m0 1h0m0 8h0m0 18h0m0 9h0m0 1h0m0 4h0m1-60h0m0 3h0m0 1h0m0 3h0m0 1h0m0 6h0m0 3h0m0 4h0m0 2h0m0 5h0m0 1h0m0 4h0m0 1h0m0 1h0m0 2h0m0 3h0m1-44h0m0 5h0m0 1h0m0 2h0m0 8h0m0 2h0m0 1h0m0 4h0m0 5h0m0 3h0m0 3h0m0 2h0m0 9h0m0 2h0m0 5h0m0 1h0m0 8h0m0 4h0m0 11h0m1-42h0m0 6h0m0 3h0m0 2h0m0 1h0m0 2h0m0 5h0m0 1h0m0 1h0m0 5h0m0 2h0m0 1h0m0 3h0m0 7h0m0 2h0m0 4h0m0 7h0m1-100h0m0 8h0m0 3h0m0 1h0m0 3h0m0 2h0m0 1h0m0 8h0m0 1h0m0 11h0m0 2h0m0 3h0m0 9h0m0 2h0m2-22h0m0 16h0m0 17h0m0 1h0m0 2h0m0 1h0m0 7h0m0 4h0m0 1h0m0 8h0m1-85h0m0 30h0m0 3h0m0 3h0m0 1h0m0 8h0m0 3h0m0 3h0m0 1h0m0 1h0m0 1h0m0 3h0m0 2h0m0 1h0m0 2h0m0 2h0m0 2h0m0 1h0m0 5h0m0 3h0m0 3h0m0 3h0m1-80h0m0 15h0m0 7h0m0 4h0m0 3h0m0 2h0m0 4h0m0 3h0m0 2h0m0 1h0m0 3h0m0 1h0m0 1h0m0 1h0m0 1h0m0 2h0m0 5h0m0 2h0m0 2h0m0 4h0m0 2h0m0 5h0m0 1h0m0 1h0m0 6h0m1-106h0m0 1h0m0 1h0m0 7h0m0 2h0m0 1h0m0 4h0m0 1h0m0 3h0m0 1h0m0 7h0m0 3h0m0 2h0m0 1h0m0 3h0m0 2h0m0 1h0m0 10h0m0 4h0m0 1h0m0 5h0m0 6h0m0 3h0m0 6h0m0 2h0m0 8h0m0 1h0m0 14h0m1-102h0m0 6h0m1-10h0m0 5h0m0 3h0m0 5h0m0 1h0m0 4h0m0 2h0m0 1h0m0 3h0m0 2h0m0 3h0m0 1h0m0 8h0m0 3h0m0 1h0m0 2h0m0 2h0m0 1h0m0 8h0m0 7h0m0 5h0m1-28h0m0 3h0m0 7h0m0 2h0m0 1h0m0 4h0m0 2h0m0 1h0m0 6h0m0 1h0m0 3h0m0 1h0m0 1h0m0 5h0m0 1h0m0 2h0m0 2h0m0 6h0m0 1h0m0 6h0m0 6h0m1-43h0m0 3h0m0 6h0m0 4h0m0 6h0m0 2h0m0 6h0m0 2h0m0 1h0m0 3h0m0 1h0m0 3h0m0 3h0m0 2h0m0 1h0m0 4h0m0 1h0m0 1h0m0 1h0m0 6h0m0 6h0m1-55h0m0 9h0m0 2h0m0 1h0m0 2h0m0 6h0m0 2h0m0 3h0m0 1h0m0 3h0m0 1h0m0 1h0m0 3h0m0 1h0m0 4h0m0 6h0m0 7h0m0 2h0m1-79h0m0 7h0m0 4h0m0 1h0m0 10h0m0 7h0m0 5h0m0 5h0m0 1h0m0 2h0m0 2h0m0 7h0m0 4h0m0 3h0m0 3h0m0 7h0m1-75h0m0 3h0m0 8h0m0 1h0m0 3h0m0 1h0m0 5h0m0 1h0m0 1h0m0 1h0m0 3h0m0 8h0m0 1h0m0 2h0m0 2h0m0 9h0m1-51h0m0 6h0m0 3h0m0 5h0m0 5h0m0 1h0m0 2h0m0 2h0m0 2h0m0 3h0m0 1h0m0 3h0m0 2h0m0 2h0m0 2h0m0 3h0m0 4h0m0 1h0m0 10h0m0 4h0m0 1h0m0 8h0m1-49h0m0 25h0m0 3h0m0 4h0m0 2h0m0 1h0m0 2h0m0 5h0m0 1h0m0 2h0m0 1h0m0 3h0m0 2h0m0 3h0m0 3h0m0 4h0m0 1h0m1-42h0m0 1h0m0 5h0m0 9h0m0 4h0m0 1h0m0 1h0m0 3h0m0 2h0m0 2h0m0 5h0m0 3h0m0 2h0m0 3h0m0 1h0m0 4h0m0 3h0m1-86h0m0 8h0m0 3h0m0 1h0m0 3h0m0 2h0m0 3h0m0 4h0m0 4h0m0 2h0m0 3h0m0 1h0m0 3h0m0 2h0m0 1h0m0 2h0m0 6h0m0 2h0m0 13h0m0 6h0m1-91h0m0 4h0m0 22h0m0 2h0m0 2h0m0 2h0m0 5h0m0 5h0m0 2h0m0 1h0m0 2h0m0 1h0m0 2h0m0 2h0m0 3h0m0 2h0m0 1h0m0 4h0m0 4h0m0 1h0m0 2h0m0 3h0m1-87h0m0 4h0m0 4h0m0 2h0m0 2h0m0 1h0m0 5h0m0 4h0m0 1h0m0 3h0m0 3h0m0 1h0m0 1h0m0 3h0m0 1h0m0 2h0m0 2h0m0 5h0m0 6h0m0 10h0m1-60h0m0 1h0m0 4h0m0 6h0m0 3h0m0 1h0m0 2h0m0 3h0m0 4h0m0 3h0m0 1h0m0 3h0m0 1h0m0 1h0m0 2h0m0 7h0m0 4h0m0 2h0m0 3h0m0 3h0m1-10h0m0 11h0m0 5h0m0 9h0m0 13h0m0 3h0m0 4h0m0 1h0m0 7h0m0 7h0m0 2h0m0 1h0m0 2h0m0 1h0m0 2h0m0 3h0m0 3h0m0 3h0m0 2h0m0 3h0m0 1h0m0 1h0m0 4h0m0 3h0m0 2h0m1-46h0m0 6h0m0 1h0m0 1h0m0 5h0m0 4h0m0 1h0m0 6h0m0 2h0m0 2h0m0 1h0m0 1h0m0 1h0m0 4h0m0 3h0m0 2h0m0 2h0m0 1h0m0 2h0m0 3h0m0 1h0m0 2h0m1-90h0m0 22h0m0 1h0m0 5h0m0 4h0m0 1h0m0 2h0m0 4h0m0 1h0m0 1h0m0 4h0m0 1h0m0 3h0m0 2h0m0 2h0m0 5h0m0 2h0m0 1h0m0 2h0m0 1h0m0 4h0m1-101h0m0 12h0m0 3h0m0 1h0m0 2h0m0 2h0m0 1h0m0 1h0m0 1h0m0 5h0m0 4h0m0 4h0m0 1h0m0 2h0m0 2h0m0 2h0m0 1h0m0 10h0m0 1h0m0 1h0m0 2h0m0 19h0m1-31h0m0 10h0m0 7h0m0 1h0m0 2h0m0 2h0m0 2h0m0 1h0m0 6h0m0 6h0m0 2h0m0 2h0m0 1h0m0 23h0m2-85h0m0 6h0m0 5h0m0 6h0m0 7h0m0 2h0m0 2h0m0 2h0m0 14h0m0 3h0m0 1h0m0 6h0m0 14h0m1-55h0m0 5h0m0 6h0m0 6h0m0 3h0m0 3h0m0 4h0m0 5h0m0 2h0m0 5h0m0 3h0m0 1h0m0 2h0m0 2h0m0 4h0m0 1h0m0 9h0m1-73h0m0 2h0m0 1h0m0 3h0m0 2h0m0 7h0m0 6h0m0 6h0m0 2h0m0 2h0m0 2h0m0 2h0m0 2h0m0 1h0m0 3h0m0 2h0m0 6h0m0 5h0m0 8h0m0 1h0m0 14h0m1-92h0m0 10h0m0 2h0m0 5h0m0 2h0m0 2h0m0 3h0m0 3h0m0 2h0m0 5h0m0 1h0m0 2h0m0 4h0m0 25h0m1-64h0m0 25h0m0 2h0m0 3h0m0 6h0m0 4h0m0 4h0m0 4h0m0 1h0m0 5h0m0 4h0m0 1h0m0 2h0m0 3h0m0 1h0m0 3h0m0 2h0m0 3h0m0 10h0m1-62h0m0 4h0m0 10h0m0 1h0m0 1h0m0 2h0m0 1h0m0 3h0m0 1h0m0 3h0m0 2h0m0 3h0m0 5h0m0 3h0m0 22h0m1-53h0m0 3h0m0 11h0m0 1h0m0 1h0m0 4h0m0 4h0m0 3h0m0 9h0m0 3h0m0 2h0m0 1h0m0 6h0m0 4h0m0 7h0m1-37h0m0 4h0m0 5h0m0 2h0m0 5h0m0 3h0m0 3h0m0 1h0m0 2h0m0 1h0m0 3h0m0 3h0m0 2h0m0 1h0m0 5h0m0 1h0m0 3h0m0 2h0m0 5h0m0 3h0m1-86h0m0 7h0m0 3h0m0 2h0m0 2h0m0 4h0m0 5h0m0 2h0m0 3h0m0 5h0m0 1h0m0 1h0m0 1h0m0 2h0m0 1h0m0 3h0m0 9h0m0 1h0m0 8h0m1-44h0m0 8h0m0 5h0m0 1h0m0 6h0m0 8h0m0 1h0m0 2h0m0 2h0m0 8h0m0 3h0m0 4h0m0 2h0m0 4h0m1-96h0m0 4h0m0 4h0m0 2h0m0 1h0m0 1h0m0 1h0m0 4h0m0 2h0m0 2h0m0 1h0m0 3h0m0 2h0m0 1h0m0 3h0m0 1h0m0 1h0m0 2h0m0 4h0m0 2h0m0 1h0m0 2h0m0 4h0m0 16h0m1-33h0m0 23h0m0 1h0m0 4h0m0 1h0m0 2h0m0 3h0m0 2h0m0 2h0m0 5h0m0 10h0m0 2h0m0 10h0m0 1h0m0 5h0m0 1h0m0 2h0m2-39h0m0 5h0m0 9h0m0 1h0m0 6h0m0 1h0m0 4h0m0 2h0m1-74h0m0 6h0m0 5h0m0 1h0m0 4h0m0 3h0m0 1h0m0 3h0m0 2h0m0 1h0m0 5h0m0 1h0m0 2h0m0 2h0m0 2h0m0 2h0m0 3h0m0 2h0m0 3h0m0 1h0m0 7h0m0 1h0m1-69h0m0 11h0m0 9h0m0 3h0m0 2h0m0 2h0m0 4h0m0 3h0m0 1h0m0 2h0m0 3h0m0 6h0m0 2h0m0 1h0m0 27h0m1-81h0m0 4h0m0 2h0m0 5h0m0 2h0m0 4h0m0 1h0m0 2h0m0 1h0m0 2h0m0 1h0m0 2h0m0 7h0m0 2h0m0 4h0m0 1h0m0 3h0m0 2h0m0 1h0m0 4h0m0 9h0m0 1h0m1-80h0m0 23h0m0 6h0m0 4h0m0 1h0m0 2h0m0 4h0m0 2h0m0 2h0m0 4h0m0 4h0m0 10h0m0 3h0m0 2h0m0 3h0m0 1h0m0 5h0m0 7h0m0 1h0m1-74h0m0 20h0m0 4h0m0 2h0m0 3h0m0 7h0m0 5h0m0 3h0m0 2h0m0 3h0m0 20h0m1-39h0m0 6h0m0 5h0m0 1h0m0 2h0m0 3h0m0 2h0m0 11h0m0 2h0m0 2h0m0 3h0m0 4h0m0 3h0m0 3h0m0 1h0m0 5h0m1-57h0m0 5h0m0 1h0m0 2h0m0 4h0m0 3h0m0 5h0m0 6h0m0 2h0m0 1h0m0 2h0m0 3h0m0 6h0m0 5h0m0 6h0m0 2h0m0 2h0m0 5h0m0 8h0m1-60h0m0 10h0m0 5h0m0 7h0m0 3h0m0 4h0m0 7h0m0 3h0m0 9h0m0 3h0m0 2h0m0 4h0m0 3h0m0 5h0m0 6h0m1-72h0m0 7h0m0 5h0m0 1h0m0 6h0m0 3h0m0 3h0m0 1h0m0 2h0m0 1h0m0 4h0m0 2h0m0 5h0m0 2h0m0 4h0m0 3h0m0 4h0m0 4h0m0 2h0m0 9h0m1-52h0m0 19h0m0 6h0m0 2h0m0 4h0m0 4h0m0 3h0m0 2h0m0 6h0m0 2h0m0 3h0m0 1h0m0 1h0m0 2h0m0 3h0m0 4h0m0 1h0m0 3h0m0 3h0m1-55h0m0 14h0m0 7h0m0 10h0m0 2h0m0 11h0m0 3h0m0 3h0m0 2h0m0 3h0m0 4h0m1-66h0m0 2h0m0 2h0m0 3h0m0 1h0m0 4h0m0 3h0m0 4h0m0 4h0m0 4h0m0 2h0m0 2h0m0 4h0m0 2h0m0 1h0m0 7h0m0 2h0m0 6h0m1-50h0m0 2h0m0 10h0m0 5h0m0 1h0m0 2h0m0 1h0m0 5h0m0 4h0m0 2h0m0 4h0m0 1h0m0 3h0m0 1h0m0 2h0m0 1h0m0 3h0m0 11h0m1-90h0m0 2h0m0 2h0m0 1h0m0 3h0m0 2h0m0 1h0m0 1h0m0 3h0m0 3h0m0 3h0m0 1h0m0 2h0m0 7h0m0 7h0m0 1h0m0 2h0m0 7h0m0 1h0m0 7h0m0 2h0m0 2h0m0 16h0m0 13h0m1-100h0m0 9h0m0 1h0m0 3h0m0 3h0m0 2h0m0 1h0m0 2h0m0 1h0m0 1h0m0 2h0m0 5h0m0 1h0m0 2h0m0 4h0m0 2h0m1-37h0m0 1h0m0 9h0m0 2h0m0 2h0m0 2h0m0 3h0m0 4h0m0 2h0m0 2h0m0 2h0m0 8h0m0 3h0m0 3h0m0 2h0m0 1h0m0 7h0m0 2h0m0 2h0m0 5h0m1-32h0m0 10h0m0 6h0m0 1h0m0 2h0m0 3h0m0 10h0m0 2h0m0 3h0m0 1h0m0 6h0m0 1h0m0 2h0m0 1h0m0 1h0m0 3h0m0 19h0m1-79h0m0 6h0m0 5h0m0 2h0m0 6h0m0 3h0m0 2h0m0 9h0m0 2h0m0 2h0m0 1h0m0 3h0m0 8h0m0 6h0m1-71h0m0 2h0m0 6h0m0 3h0m0 5h0m0 1h0m0 2h0m0 3h0m0 1h0m0 3h0m0 6h0m0 2h0m0 1h0m0 1h0m0 1h0m0 4h0m0 1h0m0 2h0m0 1h0m0 1h0m0 4h0m0 1h0m0 6h0m0 2h0m0 1h0m0 9h0m0 18h0m1-130h0m0 4h0m0 6h0m0 1h0m0 3h0m0 4h0m0 2h0m0 3h0m0 4h0m0 2h0m0 3h0m0 5h0m0 4h0m0 3h0m0 4h0m1-45h0m0 4h0m0 3h0m0 3h0m0 1h0m0 7h0m0 5h0m0 1h0m0 8h0m0 1h0m0 6h0m0 1h0m0 2h0m0 6h0m1-19h0m0 22h0m0 8h0m0 1h0m0 2h0m0 2h0m0 2h0m0 4h0m0 3h0m0 2h0m0 10h0m0 1h0m0 3h0m0 1h0m0 1h0m0 2h0m0 4h0m0 1h0m0 5h0m0 3h0m0 3h0m0 4h0m0 2h0m0 3h0m0 1h0m0 3h0m0 3h0m0 8h0m0 3h0m1-83h0m0 21h0m0 5h0m0 1h0m0 1h0m0 15h0m0 2h0m0 1h0m0 1h0m0 1h0m0 5h0m0 2h0m0 2h0m0 2h0m0 3h0m0 1h0m0 1h0m0 2h0m1-74h0m0 5h0m0 1h0m0 2h0m0 2h0m0 4h0m0 1h0m0 2h0m0 2h0m0 2h0m0 3h0m0 1h0m0 1h0m0 1h0m0 2h0m0 3h0m0 1h0m0 4h0m0 6h0m0 1h0m0 1h0m0 2h0m0 3h0m0 2h0m3-62h0m0 14h0m0 1h0m0 3h0m0 7h0m0 1h0m0 1h0m0 6h0m0 4h0m0 3h0m0 2h0m0 3h0m0 2h0m0 3h0m0 1h0m0 2h0m0 5h0m0 2h0m0 3h0m1-71h0m0 20h0m0 1h0m0 6h0m0 3h0m0 1h0m0 3h0m0 3h0m0 2h0m0 4h0m0 2h0m0 3h0m0 4h0m0 5h0m0 4h0m1-51h0m0 4h0m0 3h0m0 1h0m0 7h0m0 4h0m0 2h0m0 3h0m0 4h0m0 2h0m0 6h0m0 4h0m0 3h0m0 1h0m0 2h0m0 4h0m0 5h0m0 1h0m1-26h0m0 11h0m0 1h0m0 8h0m0 3h0m0 1h0m0 6h0m0 2h0m0 2h0m0 1h0m0 3h0m0 1h0m0 1h0m0 1h0m0 1h0m0 1h0m0 5h0m0 2h0m0 6h0m0 4h0m0 9h0m0 2h0m1-88h0m0 3h0m0 1h0m0 10h0m0 1h0m0 3h0m0 2h0m0 4h0m0 12h0m0 5h0m0 2h0m0 3h0m0 3h0m0 4h0m0 3h0m0 3h0m1-86h0m0 9h0m0 5h0m0 2h0m0 2h0m0 5h0m0 11h0m0 2h0m0 2h0m0 2h0m0 3h0m0 2h0m0 3h0m0 4h0m0 5h0m0 2h0m0 3h0m0 10h0m1-71h0m0 19h0m0 7h0m0 5h0m0 2h0m0 3h0m0 1h0m0 9h0m0 1h0m0 2h0m0 4h0m0 3h0m0 1h0m0 2h0m0 3h0m0 3h0m0 3h0m0 6h0m0 2h0m0 1h0m1-88h0m0 1h0m0 1h0m0 5h0m0 5h0m0 7h0m0 1h0m0 2h0m0 4h0m0 2h0m0 3h0m0 3h0m0 3h0m0 2h0m0 4h0m0 3h0m0 7h0m0 13h0m0 4h0m0 1h0m0 6h0m0 1h0m0 2h0m0 10h0m1-104h0m0 2h0m0 1h0m0 1h0m0 2h0m0 2h0m0 1h0m0 10h0m0 3h0m0 4h0m1-2h0m0 6h0m0 3h0m0 1h0m0 2h0m0 1h0m0 2h0m0 3h0m0 3h0m0 4h0m0 7h0m0 2h0m0 5h0m0 1h0m0 2h0m0 3h0m0 1h0m0 2h0m0 4h0m0 3h0m0 6h0m0 1h0m0 10h0m0 5h0m1-55h0m0 16h0m0 2h0m0 1h0m0 4h0m0 4h0m0 5h0m0 1h0m0 3h0m0 7h0m0 1h0m0 1h0m0 3h0m0 1h0m0 1h0m0 1h0m0 3h0m0 4h0m0 1h0m0 1h0m0 2h0m0 6h0m0 3h0m0 1h0m0 1h0m0 10h0m1-48h0m0 4h0m0 4h0m0 2h0m0 3h0m0 4h0m0 3h0m0 3h0m0 3h0m0 1h0m0 2h0m0 2h0m0 1h0m0 2h0m0 3h0m0 2h0m0 5h0m0 1h0m0 1h0m0 4h0m0 2h0m1-82h0m0 7h0m0 4h0m0 4h0m0 9h0m0 6h0m0 2h0m0 3h0m0 10h0m0 4h0m0 4h0m0 5h0m0 11h0m0 2h0m0 1h0m0 2h0m0 1h0m1-95h0m0 37h0m0 2h0m0 4h0m0 3h0m0 2h0m0 8h0m0 2h0m0 2h0m0 1h0m0 1h0m0 4h0m0 1h0m0 2h0m0 6h0m0 5h0m0 3h0m1-81h0m0 3h0m0 7h0m0 1h0m0 1h0m0 1h0m0 2h0m0 1h0m0 5h0m0 2h0m0 3h0m0 2h0m0 3h0m0 5h0m0 5h0m0 8h0m0 2h0m1-37h0m0 4h0m0 3h0m0 7h0m0 2h0m0 2h0m0 3h0m0 4h0m0 3h0m0 5h0m0 6h0m0 1h0m0 4h0m0 11h0m1-68h0m0 7h0m0 18h0m0 1h0m0 7h0m0 2h0m0 5h0m0 5h0m0 3h0m0 2h0m0 6h0m0 4h0m0 2h0m0 3h0m0 1h0m0 1h0m0 1h0m0 8h0m1-79h0m0 17h0m0 1h0m0 3h0m0 4h0m0 1h0m0 8h0m0 5h0m0 7h0m0 3h0m0 3h0m0 11h0m0 5h0m0 11h0m0 12h0m1-93h0m0 1h0m0 9h0m0 4h0m0 1h0m0 8h0m0 5h0m0 4h0m0 1h0m0 2h0m0 4h0m0 2h0m0 2h0m0 2h0m0 2h0m0 9h0m0 2h0m0 11h0m1-56h0m0 6h0m0 3h0m0 4h0m0 9h0m0 1h0m0 4h0m0 2h0m0 7h0m0 3h0m0 4h0m0 3h0m0 1h0m0 2h0m0 3h0m0 4h0m1-74h0m0 14h0m0 2h0m0 6h0m0 6h0m0 6h0m0 4h0m0 2h0m0 5h0m0 1h0m0 4h0m0 3h0m0 3h0m0 3h0m0 6h0m1-59h0m0 5h0m0 2h0m0 1h0m0 3h0m0 4h0m0 1h0m0 6h0m0 4h0m0 3h0m0 2h0m0 1h0m0 4h0m0 7h0m0 6h0m0 13h0m1-62h0m0 24h0m0 3h0m0 15h0m0 5h0m0 4h0m0 1h0m0 2h0m0 3h0m0 2h0m0 4h0m0 1h0m0 3h0m0 1h0m0 7h0m0 5h0m1-79h0m0 9h0m0 9h0m0 3h0m0 2h0m0 5h0m0 6h0m0 2h0m0 2h0m0 5h0m0 8h0m0 4h0m0 6h0m1-57h0m0 9h0m0 4h0m0 5h0m0 6h0m0 2h0m0 3h0m0 5h0m0 5h0m0 2h0m0 6h0m0 7h0m0 3h0m0 3h0m0 1h0m0 6h0m0 3h0m0 1h0m1-68h0m0 3h0m0 7h0m0 2h0m0 8h0m0 3h0m0 2h0m0 1h0m0 8h0m0 6h0m0 2h0m0 4h0m0 1h0m0 25h0m0 1h0m1-59h0m0 3h0m0 9h0m0 4h0m0 2h0m0 3h0m0 1h0m0 2h0m0 3h0m0 8h0m0 3h0m0 2h0m0 1h0m0 3h0m0 2h0m0 11h0m0 16h0m1-93h0m0 5h0m0 6h0m0 2h0m0 2h0m0 5h0m0 3h0m0 2h0m0 2h0m0 4h0m0 3h0m0 1h0m0 14h0m0 7h0m0 2h0m0 2h0m0 3h0m1-74h0m0 11h0m0 1h0m0 3h0m0 7h0m0 4h0m0 5h0m0 6h0m0 1h0m0 3h0m0 1h0m0 3h0m0 3h0m0 1h0m0 1h0m0 2h0m0 1h0m0 3h0m0 1h0m0 2h0m0 1h0m0 3h0m0 3h0m0 1h0m0 2h0m0 2h0m3-83h0m0 5h0m0 1h0m0 2h0m0 2h0m0 4h0m0 2h0m0 1h0m0 2h0m0 4h0m0 2h0m0 4h0m0 1h0m0 2h0m0 2h0m0 2h0m0 1h0m0 2h0m0 6h0m0 4h0m0 3h0m0 2h0m0 3h0m0 14h0m1-52h0m0 27h0m0 7h0m0 3h0m0 1h0m0 2h0m0 4h0m0 1h0m0 5h0m0 2h0m0 2h0m0 1h0m0 1h0m0 3h0m0 1h0m0 1h0m0 3h0m0 5h0m0 2h0m0 1h0m0 1h0m0 3h0m0 2h0m0 16h0m0 9h0m1-124h0m0 5h0m0 8h0m0 5h0m0 3h0m0 5h0m0 8h0m0 1h0m0 3h0m0 11h0m0 14h0m0 5h0m0 6h0m0 4h0m0 2h0m0 1h0m0 2h0m0 7h0m0 2h0m0 4h0m0 1h0m0 4h0m0 1h0m0 1h0m1-111h0m0 1h0m0 4h0m0 15h0m1-21h0m0 2h0m0 2h0m0 2h0m0 2h0m0 9h0m0 5h0m0 3h0m0 5h0m0 1h0m0 8h0m0 2h0m0 1h0m0 3h0m0 1h0m0 1h0m0 1h0m0 4h0m0 1h0m0 4h0m0 2h0m0 7h0m0 2h0m0 4h0m0 1h0m0 3h0m0 1h0m0 32h0m1-51h0m0 1h0m0 6h0m0 12h0m0 5h0m0 3h0m0 1h0m0 1h0m0 4h0m0 3h0m0 2h0m0 1h0m0 4h0m0 1h0m0 2h0m0 1h0m0 1h0m0 2h0m0 1h0m0 6h0m1-45h0m0 8h0m0 4h0m0 1h0m0 6h0m0 4h0m0 6h0m0 4h0m0 1h0m0 3h0m0 2h0m0 5h0m0 6h0m0 2h0m0 4h0m0 1h0m0 1h0m0 2h0m0 7h0m0 1h0m1-94h0m0 2h0m0 3h0m0 9h0m0 4h0m0 2h0m0 1h0m0 7h0m0 4h0m0 4h0m0 4h0m0 2h0m0 3h0m0 2h0m0 1h0m0 1h0m0 2h0m0 16h0m0 1h0m1-83h0m0 11h0m0 4h0m0 8h0m0 8h0m0 4h0m0 2h0m0 1h0m0 4h0m0 3h0m0 2h0m0 1h0m0 4h0m0 5h0m0 5h0m0 1h0m0 6h0m0 2h0m0 5h0m0 3h0m1-103h0m0 7h0m0 1h0m0 4h0m0 3h0m0 3h0m0 6h0m0 17h0m0 8h0m0 1h0m0 4h0m0 7h0m0 2h0m0 3h0m0 1h0m0 7h0m0 3h0m0 5h0m0 1h0m0 5h0m0 5h0m0 2h0m0 4h0m1-98h0m0 1h0m0 6h0m0 4h0m0 1h0m0 1h0m0 3h0m0 1h0m0 7h0m0 1h0m0 3h0m0 2h0m0 1h0m0 1h0m0 4h0m0 5h0m0 4h0m0 16h0m0 6h0m0 11h0m0 1h0m0 6h0m0 4h0m0 8h0m1-76h0m0 6h0m0 11h0m0 9h0m0 3h0m0 1h0m0 5h0m0 3h0m0 4h0m0 1h0m0 4h0m0 1h0m0 2h0m0 2h0m0 4h0m0 5h0m0 13h0m0 14h0m1-86h0m0 2h0m0 3h0m0 5h0m0 1h0m0 4h0m0 3h0m0 1h0m0 2h0m0 9h0m0 1h0m0 6h0m0 7h0m0 1h0m0 1h0m0 6h0m0 7h0m0 2h0m0 4h0m1-41h0m0 2h0m0 6h0m0 3h0m0 3h0m0 3h0m0 4h0m0 4h0m0 1h0m0 4h0m0 2h0m0 11h0m1-74h0m0 12h0m0 4h0m0 5h0m0 4h0m0 1h0m0 1h0m0 8h0m0 1h0m0 3h0m0 2h0m0 3h0m0 1h0m0 2h0m0 3h0m0 4h0m0 2h0m0 2h0m0 8h0m0 2h0m0 12h0m0 10h0m1-112h0m0 3h0m0 2h0m0 4h0m0 5h0m0 2h0m0 2h0m0 2h0m0 7h0m0 1h0m0 1h0m0 4h0m0 2h0m0 3h0m0 6h0m0 2h0m0 2h0m0 3h0m0 3h0m1-54h0m0 1h0m0 1h0m0 3h0m0 5h0m0 4h0m0 2h0m0 2h0m0 2h0m0 3h0m0 3h0m0 6h0m0 2h0m0 7h0m0 1h0m0 3h0m0 2h0m1-13h0m0 5h0m0 10h0m0 7h0m0 2h0m0 2h0m0 1h0m0 2h0m0 2h0m0 2h0m0 2h0m0 2h0m0 4h0m0 4h0m0 2h0m0 1h0m0 1h0m0 2h0m0 2h0m0 3h0m0 3h0m0 10h0m1-77h0m0 3h0m0 6h0m0 2h0m0 6h0m0 8h0m0 1h0m0 6h0m0 1h0m0 2h0m0 2h0m0 1h0m0 3h0m0 3h0m0 4h0m0 10h0m1-52h0m0 6h0m0 1h0m0 2h0m0 7h0m0 5h0m0 2h0m0 11h0m0 3h0m0 3h0m0 4h0m0 14h0m0 10h0m0 4h0m0 7h0m0 5h0m1-69h0m0 9h0m0 3h0m0 7h0m0 9h0m0 4h0m0 2h0m0 2h0m0 2h0m0 1h0m0 7h0m0 1h0m0 2h0m0 3h0m0 1h0m0 3h0m0 2h0m0 13h0m1-95h0m0 9h0m0 2h0m0 9h0m0 6h0m0 2h0m0 3h0m0 1h0m0 2h0m0 2h0m0 1h0m0 2h0m0 1h0m0 5h0m0 10h0m0 1h0m1-37h0m0 4h0m0 4h0m0 1h0m0 5h0m0 1h0m0 4h0m0 4h0m0 1h0m0 3h0m0 2h0m0 1h0m0 1h0m0 8h0m0 3h0m0 6h0m0 2h0m0 3h0m0 13h0m0 6h0m0 2h0m0 8h0m0 3h0m1-54h0m0 4h0m0 1h0m0 4h0m0 5h0m0 3h0m0 4h0m0 1h0m0 2h0m0 2h0m0 2h0m0 1h0m0 6h0m0 2h0m0 2h0m0 1h0m0 3h0m0 5h0m0 2h0m0 3h0m0 4h0m0 7h0m3-61h0m0 3h0m0 6h0m0 4h0m0 3h0m0 1h0m0 1h0m0 1h0m0 6h0m0 4h0m0 2h0m0 2h0m0 3h0m0 2h0m0 1h0m0 1h0m0 2h0m0 2h0m0 1h0m0 2h0m0 3h0m1-41h0m0 2h0m0 5h0m0 2h0m0 4h0m0 2h0m0 1h0m0 2h0m0 3h0m0 5h0m0 4h0m0 17h0m0 5h0m1-68h0m0 1h0m0 10h0m0 14h0m0 3h0m0 2h0m0 2h0m0 1h0m0 6h0m0 4h0m0 4h0m0 1h0m0 6h0m0 3h0m0 7h0m1-80h0m0 9h0m0 2h0m0 4h0m0 3h0m0 4h0m0 2h0m0 2h0m0 3h0m0 3h0m0 2h0m0 3h0m0 1h0m0 2h0m0 11h0m0 3h0m0 7h0m0 6h0m0 4h0m1-70h0m0 10h0m0 2h0m0 2h0m0 3h0m0 1h0m0 3h0m0 1h0m0 2h0m0 2h0m0 8h0m0 9h0m0 8h0m0 5h0m0 9h0m0 3h0m1-60h0m0 20h0m0 1h0m0 6h0m0 6h0m0 1h0m0 4h0m0 4h0m0 4h0m0 5h0m0 2h0m0 2h0m0 6h0m0 18h0m1-70h0m0 2h0m0 7h0m0 1h0m0 3h0m0 1h0m0 1h0m0 5h0m0 2h0m0 5h0m0 4h0m0 1h0m0 1h0m0 7h0m0 5h0m0 3h0m0 8h0m0 1h0m0 1h0m0 2h0m1-81h0m0 17h0m0 9h0m0 5h0m0 11h0m0 2h0m0 1h0m0 2h0m0 4h0m0 1h0m0 2h0m0 3h0m0 8h0m0 10h0m1-95h0m0 5h0m0 3h0m0 10h0m0 5h0m0 11h0m0 6h0m0 2h0m0 4h0m0 2h0m0 2h0m0 2h0m0 3h0m0 3h0m0 1h0m0 1h0m0 1h0m0 2h0m0 1h0m0 4h0m0 1h0m0 1h0m0 5h0m0 5h0m0 13h0m0 12h0m1-110h0m0 3h0m0 3h0m0 1h0m0 1h0m0 2h0m0 2h0m0 1h0m0 1h0m0 3h0m0 1h0m0 1h0m0 3h0m0 1h0m0 2h0m0 1h0m0 2h0m0 1h0m0 7h0m0 2h0m0 5h0m0 6h0m0 3h0m0 18h0m3-49h0m0 1h0m0 4h0m0 1h0m0 4h0m0 3h0m0 5h0m0 2h0m0 6h0m0 2h0m0 5h0m0 3h0m0 2h0m0 2h0m0 3h0m0 1h0m0 1h0m0 2h0m0 1h0m0 3h0m0 18h0m1-61h0m0 4h0m0 7h0m0 2h0m0 1h0m0 3h0m0 4h0m0 1h0m0 2h0m0 2h0m0 15h0m0 4h0m0 1h0m0 2h0m0 2h0m0 1h0m0 7h0m0 2h0m1-45h0m0 3h0m0 3h0m0 5h0m0 2h0m0 1h0m0 2h0m0 1h0m0 1h0m0 12h0m0 1h0m0 2h0m0 1h0m0 1h0m0 2h0m0 3h0m0 4h0m0 5h0m0 3h0m1-64h0m0 7h0m0 2h0m0 8h0m0 4h0m0 3h0m0 4h0m0 1h0m0 2h0m0 2h0m0 1h0m0 4h0m0 1h0m0 1h0m0 5h0m0 5h0m0 2h0m0 7h0m0 9h0m0 3h0m0 3h0m1-130h0m0 3h0m0 5h0m0 1h0m0 1h0m0 2h0m0 2h0m0 1h0m0 2h0m0 5h0m0 1h0m0 2h0m0 4h0m0 4h0m0 3h0m0 1h0m0 1h0m0 4h0m0 2h0m0 3h0m0 3h0m0 12h0m0 12h0m0 13h0m0 8h0m1-84h0m0 2h0m0 10h0m0 1h0m0 3h0m0 4h0m0 3h0m0 1h0m0 7h0m0 2h0m0 2h0m0 2h0m0 1h0m0 4h0m0 2h0m0 2h0m0 1h0m0 3h0m0 8h0m0 8h0m0 1h0m0 2h0m0 33h0m0 1h0m1-115h0m0 3h0m0 1h0m0 1h0m0 2h0m0 1h0m0 2h0m0 1h0m0 7h0m0 1h0m0 1h0m0 4h0m0 16h0m1-16h0m0 3h0m0 3h0m0 3h0m0 3h0m0 2h0m0 10h0m0 8h0m0 2h0m0 3h0m0 13h0m0 3h0m0 11h0m0 4h0m0 4h0m0 2h0m0 1h0m0 1h0m0 4h0m0 2h0m0 4h0m0 1h0m0 6h0m0 1h0m0 5h0m0 3h0m0 9h0m1-66h0m0 7h0m0 2h0m0 3h0m0 2h0m0 1h0m0 2h0m0 1h0m0 1h0m0 1h0m0 1h0m0 1h0m0 5h0m0 1h0m0 3h0m0 5h0m0 2h0m0 1h0m0 1h0m0 6h0m0 7h0m0 3h0m0 3h0m0 1h0m1-100h0m0 2h0m0 2h0m0 2h0m0 5h0m0 5h0m0 1h0m0 2h0m0 3h0m0 1h0m0 4h0m0 3h0m0 6h0m0 1h0m0 1h0m0 2h0m0 4h0m0 4h0m0 2h0m1-49h0m0 5h0m0 2h0m0 1h0m0 5h0m0 4h0m0 3h0m0 1h0m0 9h0m0 1h0m0 1h0m0 5h0m0 1h0m0 1h0m0 4h0m0 6h0m0 4h0m0 4h0m0 8h0m0 23h0m1-77h0m0 23h0m0 10h0m0 11h0m0 5h0m0 1h0m0 2h0m0 2h0m0 1h0m0 4h0m0 2h0m0 4h0m0 1h0m0 3h0m0 2h0m0 2h0m0 6h0m1-60h0m0 8h0m0 7h0m0 1h0m0 6h0m0 2h0m0 3h0m0 3h0m0 1h0m0 5h0m0 3h0m0 1h0m0 1h0m0 2h0m0 1h0m0 7h0m0 7h0m0 1h0m1-68h0m0 5h0m0 1h0m0 17h0m0 3h0m0 1h0m0 2h0m0 4h0m0 10h0m0 2h0m0 1h0m0 2h0m0 7h0m0 2h0m0 4h0m0 3h0m0 1h0m0 2h0m0 2h0m0 14h0m1-112h0m0 16h0m0 3h0m0 9h0m0 1h0m0 8h0m0 3h0m0 3h0m0 3h0m0 2h0m0 5h0m0 3h0m0 4h0m0 7h0m0 3h0m0 36h0m1-96h0m0 22h0m0 2h0m0 1h0m0 4h0m0 4h0m0 2h0m0 8h0m0 3h0m0 7h0m0 4h0m0 5h0m0 9h0m0 5h0m0 1h0m0 1h0m0 4h0m0 6h0m0 1h0m0 1h0m0 2h0m0 3h0m1-72h0m0 8h0m0 7h0m0 2h0m0 4h0m0 4h0m0 1h0m0 2h0m0 3h0m0 1h0m0 3h0m0 2h0m0 5h0m0 4h0m0 2h0m0 3h0m0 4h0m0 3h0m0 3h0m0 1h0m0 3h0m0 1h0m0 4h0m1-79h0m0 7h0m0 15h0m0 1h0m0 2h0m0 2h0m0 1h0m0 8h0m0 3h0m0 1h0m0 2h0m0 2h0m0 4h0m0 4h0m0 4h0m0 3h0m0 3h0m1-97h0m0 9h0m0 3h0m0 5h0m0 4h0m0 3h0m0 1h0m0 1h0m0 5h0m0 4h0m0 2h0m0 2h0m0 4h0m0 3h0m0 1h0m0 4h0m0 1h0m0 2h0m0 12h0m0 4h0m0 3h0m0 8h0m0 1h0m0 2h0m0 4h0m1-99h0m0 8h0m0 2h0m0 2h0m0 14h0m1-23h0m0 6h0m0 1h0m0 2h0m0 5h0m0 3h0m0 5h0m0 4h0m0 2h0m0 1h0m0 2h0m0 2h0m0 6h0m0 2h0m0 5h0m0 4h0m0 5h0m0 1h0m0 8h0m0 3h0m0 2h0m0 4h0m0 7h0m1-51h0m0 8h0m0 1h0m0 10h0m0 2h0m0 3h0m0 2h0m0 1h0m0 3h0m0 8h0m0 4h0m0 4h0m0 8h0m0 1h0m0 6h0m0 15h0m0 28h0m1-89h0m0 11h0m0 6h0m0 2h0m0 5h0m0 1h0m0 1h0m0 2h0m0 1h0m0 5h0m0 1h0m0 1h0m0 8h0m0 4h0m0 7h0m0 11h0m0 1h0m0 2h0m0 25h0m1-99h0m0 7h0m0 19h0m0 6h0m0 2h0m0 2h0m0 1h0m0 2h0m0 4h0m0 3h0m0 2h0m0 3h0m0 1h0m0 3h0m0 1h0m0 3h0m0 3h0m0 1h0m0 2h0m0 10h0m0 5h0m0 1h0m3-88h0m0 1h0m0 2h0m0 1h0m0 3h0m0 3h0m0 2h0m0 2h0m0 1h0m0 6h0m0 1h0m0 5h0m0 2h0m0 1h0m0 1h0m0 4h0m0 2h0m0 3h0m0 4h0m0 3h0m0 2h0m0 14h0m0 2h0m1-49h0m0 4h0m0 3h0m0 8h0m0 1h0m0 1h0m0 4h0m0 1h0m0 2h0m0 6h0m0 7h0m0 4h0m0 1h0m0 2h0m0 8h0m0 9h0m0 2h0m0 3h0m0 4h0m0 1h0m0 3h0m1-84h0m0 14h0m0 2h0m0 2h0m0 7h0m0 4h0m0 7h0m0 2h0m0 5h0m0 1h0m0 1h0m0 1h0m0 2h0m0 2h0m0 2h0m0 3h0m0 1h0m0 9h0m1-60h0m0 18h0m0 5h0m0 3h0m0 9h0m0 2h0m0 5h0m0 4h0m0 1h0m0 5h0m0 1h0m0 1h0m0 6h0m0 1h0m0 1h0m0 6h0m0 3h0m0 4h0m0 3h0m0 3h0m0 4h0m1-99h0m0 28h0m0 6h0m0 3h0m0 5h0m0 2h0m0 2h0m0 7h0m0 1h0m0 8h0m0 8h0m0 1h0m0 8h0m1-40h0m0 10h0m0 1h0m0 1h0m0 1h0m0 5h0m0 9h0m0 5h0m0 2h0m0 1h0m0 2h0m0 1h0m0 3h0m0 3h0m0 2h0m0 2h0m0 2h0m0 8h0m1-86h0m0 10h0m0 5h0m0 4h0m0 1h0m0 4h0m0 1h0m0 5h0m0 4h0m0 2h0m0 12h0m0 3h0m0 2h0m0 4h0m1-63h0m0 3h0m0 3h0m0 3h0m0 2h0m0 2h0m0 6h0m0 2h0m0 1h0m0 4h0m0 4h0m0 8h0m0 5h0m0 5h0m0 2h0m0 6h0m0 7h0m0 3h0m0 12h0m1-78h0m0 7h0m0 3h0m0 5h0m0 5h0m0 2h0m0 11h0m0 6h0m0 3h0m0 4h0m0 4h0m0 6h0m0 3h0m0 17h0m1-61h0m0 2h0m0 6h0m0 3h0m0 2h0m0 6h0m0 2h0m0 3h0m0 3h0m0 3h0m0 1h0m0 2h0m0 3h0m0 1h0m0 1h0m0 2h0m0 2h0m0 1h0m0 4h0m0 5h0m1-104h0m0 3h0m0 5h0m0 3h0m0 3h0m0 2h0m0 1h0m0 7h0m0 3h0m0 5h0m0 2h0m0 11h0m0 1h0m0 4h0m0 1h0m0 12h0m0 5h0m0 7h0m0 6h0m0 11h0m2-84h0m0 4h0m0 2h0m0 4h0m0 5h0m0 4h0m0 1h0m0 1h0m0 4h0m0 4h0m0 2h0m0 8h0m0 9h0m0 3h0m0 28h0m0 7h0m0 4h0m0 4h0m0 1h0m0 1h0m0 2h0m0 2h0m0 3h0m0 3h0m0 1h0m0 13h0m1-53h0m0 6h0m0 1h0m0 10h0m0 3h0m0 5h0m0 2h0m0 3h0m0 1h0m0 3h0m0 2h0m0 1h0m0 1h0m0 5h0m0 1h0m0 2h0m0 2h0m0 2h0m0 2h0m0 1h0m0 7h0m1-94h0m0 23h0m0 7h0m0 2h0m0 2h0m0 2h0m0 1h0m0 3h0m0 1h0m0 1h0m0 1h0m0 4h0m0 4h0m0 3h0m0 1h0m0 1h0m0 3h0m1-38h0m0 23h0m0 6h0m0 3h0m0 5h0m0 1h0m0 2h0m0 3h0m0 5h0m0 5h0m0 4h0m0 2h0m0 3h0m0 2h0m0 1h0m0 1h0m0 7h0m0 3h0m1-60h0m0 3h0m0 1h0m0 2h0m0 4h0m0 5h0m0 2h0m0 3h0m0 4h0m0 3h0m0 1h0m0 2h0m0 4h0m0 3h0m0 10h0m0 4h0m0 1h0m0 7h0m1-98h0m0 2h0m0 1h0m0 1h0m0 1h0m0 1h0m0 1h0m0 1h0m0 5h0m0 1h0m0 2h0m0 4h0m0 1h0m0 1h0m0 6h0m0 2h0m0 2h0m0 4h0m0 8h0m0 3h0m0 5h0m0 26h0m0 2h0m1-86h0m0 14h0m0 6h0m0 1h0m0 9h0m0 1h0m0 7h0m0 2h0m0 1h0m0 4h0m0 4h0m0 2h0m0 2h0m0 3h0m0 6h0m0 2h0m0 2h0m0 8h0m0 3h0m0 11h0m0 3h0m1-56h0m0 22h0m0 10h0m0 3h0m0 8h0m0 3h0m0 1h0m0 3h0m0 2h0m0 2h0m0 1h0m0 4h0m0 2h0m0 2h0m0 8h0m0 1h0m1-74h0m0 6h0m0 1h0m0 6h0m0 3h0m0 6h0m0 5h0m0 4h0m0 6h0m0 3h0m0 6h0m0 8h0m0 4h0m1-58h0m0 17h0m0 1h0m0 5h0m0 7h0m0 1h0m0 4h0m0 3h0m0 2h0m0 3h0m0 6h0m0 7h0m0 3h0m0 1h0m0 2h0m0 2h0m0 1h0m0 6h0m0 2h0m0 2h0m1-100h0m0 3h0m0 12h0m0 4h0m0 1h0m0 1h0m0 2h0m0 4h0m0 3h0m0 3h0m0 5h0m0 2h0m0 5h0m0 1h0m0 1h0m0 1h0m0 2h0m0 9h0m0 2h0m0 15h0m1-43h0m0 2h0m0 3h0m0 15h0m0 13h0m0 1h0m0 3h0m0 3h0m0 1h0m0 1h0m0 2h0m0 1h0m0 1h0m0 1h0m0 2h0m0 3h0m1-57h0m0 2h0m0 8h0m0 4h0m0 7h0m0 3h0m0 3h0m0 3h0m0 3h0m0 1h0m0 1h0m0 7h0m0 1h0m0 1h0m0 9h0m0 1h0m0 5h0m0 1h0m0 2h0m1-79h0m0 3h0m0 16h0m0 10h0m0 9h0m0 10h0m0 4h0m0 6h0m0 2h0m0 1h0m0 5h0m0 1h0m0 1h0m0 3h0m0 3h0m0 3h0m0 2h0m0 1h0m0 5h0m1-98h0m0 7h0m0 3h0m0 2h0m0 2h0m0 2h0m0 6h0m0 2h0m0 2h0m0 1h0m0 2h0m0 4h0m0 2h0m0 1h0m0 1h0m0 2h0m0 2h0m0 3h0m0 3h0m0 9h0m0 11h0m1-61h0m0 11h0m0 8h0m0 2h0m0 2h0m0 3h0m0 1h0m0 1h0m0 7h0m0 2h0m0 1h0m0 4h0m0 1h0m0 2h0m0 1h0m0 2h0m0 5h0m0 1h0m0 3h0m0 7h0m0 4h0m0 7h0m1-68h0m0 6h0m0 4h0m0 18h0m0 7h0m0 5h0m0 4h0m0 7h0m0 3h0m0 4h0m0 2h0m2-38h0m0 31h0m0 3h0m0 5h0m0 1h0m0 2h0m0 2h0m0 3h0m0 3h0m0 1h0m0 2h0m0 10h0m0 3h0m1-59h0m0 15h0m0 5h0m0 2h0m0 4h0m0 2h0m0 1h0m0 1h0m0 3h0m0 1h0m0 1h0m0 2h0m0 2h0m0 2h0m0 2h0m0 2h0m0 2h0m0 2h0m0 2h0m0 2h0m1-61h0m0 8h0m0 3h0m0 2h0m0 3h0m0 1h0m0 3h0m0 1h0m0 3h0m0 2h0m0 3h0m0 2h0m0 7h0m0 2h0m0 3h0m0 5h0m0 6h0m0 1h0m0 7h0m0 1h0m1-134h0m0 3h0m0 3h0m0 3h0m0 3h0m0 1h0m0 6h0m0 3h0m0 3h0m0 7h0m0 4h0m0 2h0m0 4h0m0 5h0m0 2h0m0 57h0m1-108h0m0 3h0m0 13h0m0 4h0m0 2h0m0 4h0m0 5h0m0 7h0m0 6h0m0 1h0m0 2h0m0 2h0m0 4h0m0 9h0m0 69h0m1-57h0m0 8h0m0 8h0m0 2h0m0 1h0m0 2h0m0 2h0m0 3h0m0 1h0m0 1h0m0 2h0m0 2h0m0 1h0m0 3h0m0 3h0m0 2h0m0 3h0m0 4h0m0 3h0m0 2h0m0 4h0m0 2h0m1-69h0m0 1h0m0 12h0m0 11h0m0 2h0m0 6h0m0 2h0m0 1h0m0 5h0m0 9h0m0 1h0m0 1h0m0 2h0m0 8h0m0 2h0m0 3h0m1-73h0m0 4h0m0 7h0m0 7h0m0 4h0m0 5h0m0 2h0m0 8h0m0 7h0m0 7h0m0 1h0m0 1h0m0 8h0m0 3h0m0 10h0m0 3h0m1-92h0m0 4h0m0 15h0m0 2h0m0 1h0m0 1h0m0 2h0m0 2h0m0 2h0m0 1h0m0 4h0m0 5h0m0 1h0m0 6h0m0 9h0m0 16h0m0 5h0m0 1h0m0 5h0m0 1h0m0 1h0m1-80h0m0 17h0m0 2h0m0 7h0m0 1h0m0 5h0m0 6h0m0 1h0m0 2h0m0 3h0m0 2h0m0 1h0m0 4h0m0 3h0m0 1h0m0 3h0m0 1h0m0 4h0m0 1h0m1-29h0m0 4h0m0 4h0m0 2h0m0 3h0m0 9h0m0 2h0m0 3h0m0 5h0m0 1h0m0 1h0m0 6h0m0 3h0m0 1h0m0 4h0m0 5h0m1-103h0m0 2h0m0 1h0m0 6h0m0 3h0m0 1h0m0 1h0m0 3h0m0 1h0m0 2h0m0 2h0m0 2h0m0 1h0m0 2h0m0 9h0m0 2h0m0 4h0m0 2h0m0 14h0m0 10h0m1-36h0m0 9h0m0 4h0m0 4h0m0 3h0m0 1h0m0 6h0m0 2h0m0 4h0m0 5h0m0 2h0m0 8h0m0 5h0m0 1h0m0 2h0m0 3h0m0 1h0m0 3h0m0 3h0m0 5h0m0 8h0m1-75h0m0 19h0m0 1h0m0 4h0m0 2h0m0 2h0m0 6h0m0 1h0m0 4h0m0 2h0m0 2h0m0 2h0m0 2h0m0 7h0m0 3h0m0 4h0m0 1h0m0 6h0m0 3h0m1-57h0m0 13h0m0 2h0m0 4h0m0 2h0m0 2h0m0 2h0m0 11h0m0 3h0m0 1h0m0 1h0m0 2h0m0 2h0m0 3h0m0 1h0m0 3h0m0 2h0m0 2h0m0 4h0m1-129h0m0 8h0m0 2h0m0 2h0m0 8h0m0 2h0m0 2h0m0 3h0m0 1h0m0 6h0m0 2h0m0 2h0m0 2h0m0 5h0m0 12h0m0 2h0m0 6h0m0 4h0m0 17h0m0 9h0m0 26h0m0 5h0m1-138h0m0 1h0m0 1h0m0 1h0m0 3h0m0 1h0m0 1h0m0 1h0m0 1h0m0 1h0m0 2h0m0 2h0m0 1h0m0 2h0m0 1h0m0 3h0m0 2h0m0 5h0m1-7h0m0 6h0m0 3h0m0 3h0m0 1h0m0 2h0m0 1h0m0 1h0m0 1h0m0 4h0m0 2h0m0 2h0m0 3h0m0 4h0m0 4h0m0 5h0m0 2h0m0 2h0m0 13h0m0 15h0m0 1h0m0 3h0m0 7h0m0 2h0m0 2h0m0 3h0m1-48h0m0 6h0m0 4h0m0 1h0m0 2h0m0 2h0m0 3h0m0 1h0m0 4h0m0 2h0m0 3h0m0 5h0m0 2h0m0 3h0m0 1h0m0 8h0m0 1h0m0 6h0m0 2h0m1-89h0m0 8h0m0 13h0m0 2h0m0 5h0m0 3h0m0 5h0m0 2h0m0 2h0m0 2h0m0 2h0m0 6h0m0 4h0m0 2h0m0 5h0m0 1h0m0 5h0m0 11h0m0 2h0m0 19h0m1-80h0m0 4h0m0 2h0m0 8h0m0 5h0m0 2h0m0 10h0m0 5h0m0 9h0m0 3h0m0 2h0m0 3h0m0 3h0m0 2h0m0 4h0m0 4h0m0 2h0m0 1h0m0 5h0m0 5h0m1-58h0m0 3h0m0 1h0m0 2h0m0 1h0m0 6h0m0 5h0m0 2h0m0 13h0m0 2h0m0 4h0m0 2h0m0 1h0m0 6h0m0 1h0m0 2h0m0 10h0m1-77h0m0 11h0m0 6h0m0 8h0m0 1h0m0 2h0m0 1h0m0 3h0m0 2h0m0 1h0m0 2h0m0 2h0m0 1h0m0 1h0m0 2h0m0 2h0m0 2h0m0 1h0m0 13h0m0 6h0m1-105h0m0 1h0m0 4h0m0 4h0m0 8h0m0 1h0m0 2h0m0 2h0m0 4h0m0 1h0m0 1h0m0 5h0m0 1h0m0 2h0m0 2h0m0 1h0m0 2h0m0 1h0m0 2h0m0 3h0m0 6h0m0 1h0m0 1h0m0 1h0m0 11h0m0 17h0m1-103h0m0 5h0m0 14h0m0 8h0m0 9h0m0 4h0m0 2h0m0 7h0m1-48h0m0 1h0m0 12h0m0 1h0m0 1h0m0 5h0m0 6h0m0 2h0m0 4h0m0 9h0m1-9h0m0 4h0m0 4h0m0 5h0m0 2h0m0 6h0m0 1h0m0 5h0m0 1h0m0 3h0m0 1h0m0 3h0m0 5h0m0 3h0m0 1h0m0 2h0m0 1h0m0 2h0m0 3h0m0 3h0m0 3h0m0 1h0m0 4h0m1-91h0m0 2h0m0 1h0m0 2h0m0 1h0m0 2h0m0 1h0m0 1h0m0 1h0m0 3h0m0 3h0m0 1h0m0 5h0m0 3h0m0 1h0m0 1h0m0 9h0m0 3h0m0 5h0m0 2h0m0 1h0m0 15h0m1-35h0m0 2h0m0 4h0m0 2h0m0 1h0m0 4h0m0 1h0m0 1h0m0 3h0m0 2h0m0 4h0m0 1h0m0 4h0m0 2h0m0 2h0m0 6h0m0 4h0m0 1h0m0 4h0m0 2h0m0 2h0m0 1h0m0 3h0m1-43h0m0 10h0m0 2h0m0 12h0m0 1h0m0 3h0m0 1h0m0 3h0m0 7h0m0 4h0m0 5h0m0 1h0m0 2h0m0 1h0m0 2h0m0 3h0m0 5h0m1-68h0m0 8h0m0 4h0m0 4h0m0 2h0m0 4h0m0 1h0m0 4h0m0 4h0m0 2h0m0 3h0m0 7h0m0 2h0m0 2h0m0 5h0m0 2h0m0 6h0m0 3h0m0 2h0m0 5h0m1-75h0m0 8h0m0 3h0m0 1h0m0 2h0m0 3h0m0 9h0m0 10h0m0 2h0m0 7h0m0 4h0m1-43h0m0 13h0m0 7h0m0 1h0m0 2h0m0 2h0m0 2h0m0 8h0m0 2h0m0 3h0m0 4h0m0 4h0m0 4h0m0 1h0m0 1h0m0 3h0m0 1h0m0 1h0m0 7h0m0 2h0m1-52h0m0 3h0m0 4h0m0 16h0m0 7h0m0 10h0m0 7h0m0 1h0m0 1h0m0 3h0m0 4h0m0 3h0m0 2h0m0 1h0m0 1h0m0 3h0m0 3h0m1-88h0m0 23h0m0 2h0m0 3h0m0 1h0m0 1h0m0 3h0m0 1h0m0 4h0m0 2h0m0 2h0m0 4h0m0 3h0m0 1h0m0 4h0m0 2h0m0 1h0m1-53h0m0 3h0m0 6h0m0 4h0m0 1h0m0 6h0m0 1h0m0 3h0m0 3h0m0 1h0m0 1h0m0 1h0m0 7h0m0 1h0m0 2h0m0 1h0m0 5h0m0 4h0m0 2h0m0 3h0m0 2h0m0 4h0m0 3h0m0 5h0m0 4h0m0 16h0m1-72h0m0 11h0m0 8h0m0 9h0m0 2h0m0 2h0m0 4h0m0 3h0m0 2h0m0 3h0m0 2h0m0 6h0m0 10h0m0 2h0m0 6h0m2-114h0m0 2h0m0 7h0m0 1h0m0 1h0m0 2h0m0 3h0m0 5h0m0 26h0m1-25h0m0 2h0m0 1h0m0 6h0m0 2h0m0 4h0m0 2h0m0 3h0m0 3h0m0 8h0m0 2h0m0 2h0m0 2h0m0 1h0m0 1h0m0 4h0m0 1h0m0 2h0m0 1h0m0 4h0m0 4h0m0 2h0m0 3h0m0 3h0m0 2h0m0 1h0m0 10h0m1-55h0m0 5h0m0 3h0m0 2h0m0 1h0m0 8h0m0 2h0m0 1h0m0 3h0m0 4h0m0 1h0m0 1h0m0 1h0m0 8h0m0 3h0m0 3h0m0 4h0m1-53h0m0 19h0m0 2h0m0 4h0m0 3h0m0 2h0m0 6h0m0 2h0m0 1h0m0 3h0m0 3h0m0 2h0m0 2h0m0 1h0m0 1h0m0 2h0m0 5h0m0 2h0m0 9h0m1-120h0m0 5h0m0 4h0m0 2h0m0 2h0m0 2h0m0 5h0m0 10h0m0 1h0m0 2h0m0 3h0m0 7h0m0 2h0m0 4h0m0 11h0m0 3h0m0 5h0m0 2h0m0 7h0m0 5h0m0 9h0m0 4h0m0 6h0m0 20h0m1-125h0m0 1h0m1 6h0m0 1h0m0 2h0m0 3h0m0 2h0m0 6h0m0 1h0m0 2h0m0 2h0m0 1h0m0 3h0m0 1h0m0 1h0m0 6h0m0 3h0m0 2h0m0 3h0m0 3h0m0 1h0m0 2h0m0 3h0m1-52h0m0 1h0m0 2h0m0 5h0m0 1h0m0 2h0m0 2h0m0 2h0m0 6h0m0 2h0m0 2h0m0 3h0m0 2h0m0 3h0m0 10h0m0 5h0m0 16h0m0 3h0m0 4h0m0 5h0m0 1h0m0 4h0m0 7h0m0 3h0m0 3h0m0 8h0m0 22h0m1-50h0m0 10h0m0 3h0m0 3h0m0 6h0m0 4h0m0 1h0m0 2h0m0 3h0m0 2h0m0 1h0m0 3h0m0 1h0m0 1h0m0 2h0m0 1h0m0 2h0m0 1h0m0 2h0m0 2h0m0 2h0m0 3h0m0 3h0m0 7h0m1-73h0m0 2h0m0 7h0m0 3h0m0 4h0m0 3h0m0 4h0m0 2h0m0 2h0m0 3h0m0 3h0m0 8h0m0 6h0m0 3h0m1-61h0m0 10h0m0 5h0m0 2h0m0 3h0m0 4h0m0 15h0m0 4h0m0 2h0m0 1h0m0 4h0m0 6h0m1-58h0m0 19h0m0 3h0m0 6h0m0 2h0m0 4h0m0 2h0m0 2h0m0 3h0m0 2h0m0 4h0m0 2h0m0 6h0m0 10h0m1-65h0m0 11h0m0 3h0m0 8h0m0 3h0m0 6h0m0 1h0m0 2h0m0 4h0m0 7h0m0 4h0m0 2h0m0 1h0m0 4h0m0 4h0m1-79h0m0 10h0m0 9h0m0 1h0m0 3h0m0 1h0m0 4h0m0 1h0m0 3h0m0 3h0m0 2h0m0 3h0m0 6h0m0 19h0m0 10h0m0 2h0m0 5h0m1-92h0m0 12h0m0 5h0m0 1h0m0 8h0m0 7h0m0 2h0m0 14h0m0 2h0m0 2h0m0 4h0m0 1h0m0 1h0m0 4h0m0 2h0m0 3h0m0 2h0m0 2h0m0 7h0m0 12h0m1-56h0m0 3h0m0 4h0m0 1h0m0 3h0m0 5h0m0 5h0m0 6h0m0 2h0m0 3h0m0 7h0m0 2h0m0 8h0m1-59h0m0 5h0m0 18h0m0 11h0m0 7h0m0 2h0m0 1h0m0 3h0m0 6h0m0 5h0m0 5h0m0 1h0m0 1h0m0 1h0m0 5h0m0 10h0m1-91h0m0 2h0m0 17h0m0 4h0m0 2h0m0 2h0m0 4h0m0 3h0m0 2h0m0 3h0m0 3h0m0 9h0m0 2h0m0 5h0m0 3h0m0 1h0m0 30h0m1-83h0m0 8h0m0 2h0m0 3h0m0 3h0m0 1h0m0 1h0m0 3h0m0 8h0m0 1h0m0 3h0m0 1h0m0 2h0m0 1h0m0 1h0m0 2h0m0 1h0m0 5h0m0 1h0m1-97h0m0 5h0m0 7h0m0 2h0m0 1h0m0 2h0m0 3h0m0 2h0m0 7h0m0 3h0m0 1h0m0 6h0m0 1h0m0 2h0m0 11h0m0 3h0m1-56h0m0 2h0m0 1h0m0 2h0m0 3h0m0 1h0m0 4h0m0 2h0m0 16h0m0 5h0m0 3h0m0 2h0m0 7h0m0 4h0m0 4h0m1-44h0m0 2h0m0 2h0m0 1h0m0 1h0m0 4h0m0 2h0m0 2h0m0 2h0m0 4h0m0 2h0m0 1h0m0 2h0m0 2h0m0 1h0m0 4h0m0 2h0m0 3h0m0 5h0m0 7h0m0 3h0m0 3h0m0 4h0m1-29h0m0 4h0m0 6h0m0 10h0m0 8h0m0 3h0m0 1h0m0 2h0m0 4h0m0 1h0m0 2h0m0 1h0m0 1h0m0 1h0m0 1h0m0 2h0m0 1h0m0 4h0m0 4h0m0 2h0m0 2h0m0 7h0m0 7h0m1-66h0m0 6h0m0 1h0m0 3h0m0 4h0m0 2h0m0 6h0m0 4h0m0 2h0m0 1h0m0 3h0m0 1h0m0 7h0m0 2h0m0 5h0m0 2h0m1-51h0m0 17h0m0 2h0m0 2h0m0 1h0m0 5h0m0 3h0m0 5h0m0 5h0m0 6h0m0 1h0m0 5h0m0 4h0m2-31h0m0 7h0m0 8h0m0 2h0m0 1h0m0 3h0m0 3h0m0 2h0m0 2h0m0 8h0m1-64h0m0 8h0m0 6h0m0 5h0m0 1h0m0 14h0m0 2h0m0 2h0m0 1h0m0 1h0m0 6h0m0 2h0m0 2h0m0 1h0m0 4h0m0 6h0m0 3h0m0 2h0m0 1h0m1-96h0m0 8h0m0 10h0m0 1h0m0 3h0m0 12h0m0 5h0m0 2h0m0 2h0m0 3h0m0 1h0m0 1h0m0 1h0m0 3h0m0 2h0m0 3h0m0 1h0m0 2h0m0 5h0m0 6h0m0 1h0m0 25h0m1-71h0m0 25h0m0 1h0m0 3h0m0 4h0m0 2h0m0 4h0m0 10h0m0 6h0m0 5h0m0 1h0m0 2h0m0 1h0m0 2h0m0 3h0m0 2h0m0 4h0m0 1h0m0 17h0m1-86h0m0 6h0m0 3h0m0 5h0m0 3h0m0 8h0m0 4h0m0 5h0m0 2h0m0 1h0m0 1h0m0 4h0m0 3h0m0 2h0m0 2h0m0 2h0m0 2h0m0 29h0m1-73h0m0 11h0m0 13h0m0 2h0m0 4h0m0 3h0m0 5h0m0 10h0m0 2h0m0 4h0m0 2h0m0 11h0m0 1h0m1-106h0m0 7h0m0 2h0m0 6h0m0 1h0m0 2h0m0 3h0m0 3h0m0 1h0m0 8h0m0 3h0m0 8h0m0 6h0m0 6h0m0 1h0m0 8h0m0 4h0m0 3h0m0 4h0m0 4h0m0 2h0m0 1h0m0 4h0m0 2h0m0 2h0m1-109h0m0 4h0m0 3h0m0 6h0m0 2h0m0 1h0m0 2h0m0 2h0m0 2h0m0 1h0m0 1h0m0 2h0m0 2h0m0 1h0m0 2h0m0 6h0m0 7h0m0 5h0m0 5h0m0 1h0m0 3h0m0 12h0m0 11h0m1-32h0m0 3h0m0 3h0m0 7h0m0 3h0m0 7h0m0 5h0m0 2h0m0 1h0m0 4h0m0 2h0m0 1h0m0 3h0m0 2h0m0 3h0m0 9h0m0 3h0m0 2h0m0 4h0m0 1h0m1-69h0m0 6h0m0 2h0m0 1h0m0 2h0m0 3h0m0 1h0m0 3h0m0 3h0m0 4h0m0 3h0m0 2h0m0 2h0m0 4h0m0 7h0m0 2h0m0 5h0m0 3h0m0 7h0m1-63h0m0 2h0m0 6h0m0 1h0m0 2h0m0 5h0m0 1h0m0 1h0m0 4h0m0 1h0m0 2h0m0 1h0m0 2h0m0 1h0m0 2h0m0 3h0m0 2h0m0 1h0m0 1h0m0 2h0m0 2h0m0 5h0m0 1h0m0 15h0m0 15h0m3-76h0m0 1h0m0 9h0m0 11h0m0 2h0m0 1h0m0 1h0m0 3h0m0 1h0m0 5h0m0 3h0m0 2h0m0 2h0m0 3h0m0 2h0m0 1h0m0 1h0m0 1h0m0 7h0m0 2h0m0 8h0m0 6h0m1-77h0m0 19h0m0 1h0m0 1h0m0 4h0m0 4h0m0 3h0m0 6h0m0 2h0m0 1h0m0 2h0m0 4h0m0 3h0m0 2h0m0 3h0m0 2h0m0 1h0m0 13h0m1-80h0m0 1h0m0 8h0m0 3h0m0 2h0m0 3h0m0 1h0m0 8h0m0 2h0m0 1h0m0 1h0m0 1h0m0 1h0m0 2h0m0 2h0m0 6h0m0 1h0m0 2h0m0 1h0m0 7h0m0 10h0m0 13h0m1-66h0m0 11h0m0 2h0m0 3h0m0 4h0m0 9h0m0 2h0m0 4h0m0 4h0m0 3h0m0 5h0m0 8h0m0 4h0m0 8h0m0 2h0m0 6h0m1-82h0m0 13h0m0 2h0m0 8h0m0 6h0m0 3h0m0 4h0m0 4h0m0 3h0m0 2h0m0 2h0m0 5h0m0 2h0m0 3h0m0 3h0m0 2h0m0 1h0m0 2h0m0 2h0m0 1h0m0 1h0m0 13h0m1-113h0m0 4h0m0 3h0m0 4h0m0 1h0m0 6h0m0 2h0m0 2h0m0 4h0m0 1h0m0 3h0m0 2h0m0 2h0m0 1h0m0 1h0m0 4h0m0 1h0m0 1h0m0 3h0m0 9h0m0 4h0m0 9h0m0 13h0m0 5h0m0 20h0m1-110h0m0 2h0m0 2h0m0 2h0m0 2h0m0 2h0m0 2h0m0 11h0m1-15h0m0 4h0m0 7h0m0 2h0m0 4h0m0 2h0m0 2h0m0 1h0m0 3h0m0 2h0m0 5h0m0 3h0m0 1h0m0 11h0m0 4h0m0 2h0m0 5h0m0 3h0m0 4h0m0 12h0m0 3h0m0 6h0m0 18h0m1-62h0m0 7h0m0 4h0m0 3h0m0 7h0m0 2h0m0 2h0m0 3h0m0 2h0m0 2h0m0 1h0m0 4h0m0 1h0m0 1h0m0 2h0m0 1h0m0 2h0m0 1h0m0 2h0m1-57h0m0 6h0m0 3h0m0 2h0m0 5h0m0 1h0m0 8h0m0 2h0m0 1h0m0 10h0m0 2h0m0 3h0m0 5h0m0 7h0m0 3h0m1-53h0m0 16h0m0 1h0m0 7h0m0 4h0m0 10h0m0 1h0m0 1h0m0 5h0m0 4h0m0 5h0m0 4h0m0 11h0m0 2h0m0 1h0m0 2h0m0 6h0m1-57h0m0 2h0m0 6h0m0 2h0m0 16h0m0 3h0m0 2h0m0 3h0m0 7h0m0 22h0m1-88h0m0 2h0m0 8h0m0 1h0m0 3h0m0 1h0m0 7h0m0 3h0m0 4h0m0 7h0m0 3h0m0 4h0m0 3h0m0 3h0m1-43h0m0 2h0m0 6h0m0 1h0m0 1h0m0 1h0m0 3h0m0 11h0m0 1h0m0 3h0m0 1h0m0 1h0m0 5h0m0 3h0m0 2h0m0 1h0m0 9h0m1-57h0m0 1h0m0 2h0m0 2h0m0 4h0m0 4h0m0 3h0m0 6h0m0 1h0m0 1h0m0 3h0m0 13h0m0 12h0m0 2h0m0 2h0m0 4h0m0 7h0m0 3h0m1-64h0m0 3h0m0 3h0m0 16h0m0 5h0m0 4h0m0 1h0m0 5h0m0 3h0m0 3h0m0 5h0m0 3h0m0 2h0m0 3h0m1-50h0m0 6h0m0 1h0m0 2h0m0 1h0m0 2h0m0 3h0m0 2h0m0 1h0m0 1h0m0 3h0m0 6h0m0 1h0m0 10h0m0 7h0m0 7h0m1-63h0m0 13h0m0 16h0m0 2h0m0 1h0m0 3h0m0 2h0m0 5h0m0 13h0m0 3h0m1-48h0m0 5h0m0 3h0m0 1h0m0 3h0m0 2h0m0 7h0m0 3h0m0 3h0m0 2h0m0 1h0m0 3h0m0 2h0m0 2h0m0 5h0m0 3h0m0 10h0m0 7h0m1-109h0m0 7h0m0 4h0m0 1h0m0 1h0m0 8h0m0 4h0m0 1h0m0 2h0m0 4h0m0 2h0m0 6h0m0 1h0m0 2h0m0 26h0m0 3h0m0 17h0m0 2h0m0 1h0m0 3h0m0 2h0m0 2h0m0 2h0m0 3h0m0 7h0m0 10h0m1-124h0m0 1h0m0 3h0m1-7h0m0 1h0m0 2h0m0 4h0m0 2h0m0 5h0m0 2h0m0 3h0m0 4h0m0 1h0m0 5h0m0 4h0m0 4h0m0 7h0m0 2h0m0 1h0m0 14h0m0 9h0m0 6h0m0 12h0m0 2h0m0 8h0m0 2h0m1-68h0m0 5h0m0 4h0m0 13h0m0 4h0m0 3h0m0 1h0m0 1h0m0 2h0m0 1h0m0 2h0m0 1h0m0 2h0m0 2h0m0 7h0m0 3h0m0 1h0m0 5h0m0 11h0m1-55h0m0 2h0m0 2h0m0 1h0m0 6h0m0 2h0m0 1h0m0 1h0m0 2h0m0 2h0m0 1h0m0 3h0m0 4h0m0 2h0m0 3h0m0 1h0m0 2h0m0 14h0m0 4h0m0 6h0m3-62h0m0 18h0m0 4h0m0 2h0m0 2h0m0 3h0m0 3h0m0 2h0m0 2h0m0 3h0m0 1h0m0 3h0m0 2h0m0 2h0m0 3h0m0 3h0m0 3h0m0 9h0m0 7h0m1-98h0m0 7h0m0 1h0m0 4h0m0 2h0m0 2h0m0 3h0m0 3h0m0 1h0m0 1h0m0 4h0m0 2h0m0 1h0m0 2h0m0 5h0m0 2h0m0 2h0m0 5h0m0 1h0m0 3h0m1-34h0m0 2h0m0 4h0m0 3h0m0 8h0m0 2h0m0 1h0m0 5h0m0 2h0m0 1h0m0 6h0m0 2h0m0 1h0m0 1h0m0 3h0m0 6h0m0 1h0m0 7h0m0 24h0m1-35h0m0 3h0m0 4h0m0 2h0m0 5h0m0 1h0m0 2h0m0 2h0m0 2h0m0 2h0m0 1h0m0 2h0m0 1h0m0 2h0m0 1h0m0 4h0m0 2h0m0 6h0m0 1h0m0 2h0m0 2h0m0 1h0m0 2h0m0 2h0m1-74h0m0 5h0m0 5h0m0 3h0m0 3h0m0 2h0m0 2h0m0 1h0m0 2h0m0 8h0m0 2h0m0 3h0m0 1h0m0 9h0m0 4h0m0 7h0m1-64h0m0 4h0m0 6h0m0 4h0m0 3h0m0 14h0m0 2h0m0 5h0m0 2h0m0 6h0m0 2h0m0 2h0m0 7h0m0 3h0m0 9h0m0 7h0m1-76h0m0 13h0m0 3h0m0 6h0m0 1h0m0 1h0m0 2h0m0 1h0m0 2h0m0 2h0m0 5h0m0 1h0m0 2h0m0 3h0m0 6h0m0 8h0m0 1h0m0 5h0m0 1h0m0 3h0m0 4h0m1-111h0m0 4h0m0 2h0m0 2h0m0 1h0m0 9h0m0 1h0m0 2h0m0 4h0m0 1h0m0 2h0m0 7h0m0 7h0m0 1h0m0 1h0m0 1h0m0 11h0m0 13h0m0 6h0m0 1h0m0 10h0m0 1h0m0 5h0m0 3h0m0 2h0m0 11h0m1-116h0m0 2h0m0 2h0m0 6h0m0 2h0m0 2h0m0 7h0m0 2h0m0 1h0m1 5h0m0 2h0m0 6h0m0 2h0m0 1h0m0 2h0m0 5h0m0 6h0m0 8h0m0 2h0m0 6h0m0 1h0m0 5h0m0 4h0m0 1h0m0 6h0m0 6h0m0 4h0m0 4h0m0 3h0m0 2h0m0 1h0m0 6h0m0 2h0m0 7h0m1-78h0m0 3h0m0 13h0m0 6h0m0 1h0m0 7h0m0 7h0m0 4h0m0 2h0m0 1h0m0 3h0m0 2h0m0 1h0m0 5h0m0 4h0m0 3h0m0 5h0m0 2h0m0 12h0m1-92h0m0 5h0m0 5h0m0 2h0m0 7h0m0 3h0m0 2h0m0 3h0m0 1h0m0 10h0m0 3h0m0 4h0m0 4h0m0 3h0m0 11h0m0 2h0m1-61h0m0 15h0m0 2h0m0 4h0m0 3h0m0 3h0m0 4h0m0 8h0m0 4h0m0 3h0m0 9h0m0 2h0m0 3h0m0 2h0m0 11h0m0 7h0m0 3h0m1-118h0m0 3h0m0 3h0m0 1h0m0 1h0m0 1h0m0 1h0m0 1h0m0 1h0m0 2h0m0 1h0m0 1h0m0 1h0m0 1h0m0 1h0m0 1h0m0 2h0m0 2h0m0 7h0m0 2h0m0 8h0m0 14h0m1-29h0m0 15h0m0 2h0m0 1h0m0 3h0m0 2h0m0 11h0m0 1h0m0 1h0m0 1h0m0 4h0m0 2h0m0 2h0m0 2h0m0 2h0m0 4h0m0 2h0m0 1h0m0 3h0m0 1h0m0 12h0m0 4h0m0 3h0m1-55h0m0 16h0m0 2h0m0 10h0m0 5h0m0 4h0m0 1h0m0 3h0m0 2h0m0 2h0m0 4h0m0 3h0m0 13h0m2-84h0m0 20h0m0 7h0m0 8h0m0 6h0m0 1h0m0 2h0m0 6h0m0 20h0m1-53h0m0 1h0m0 2h0m0 2h0m0 3h0m0 5h0m0 1h0m0 8h0m0 6h0m0 2h0m0 3h0m0 3h0m0 2h0m0 3h0m0 3h0m0 2h0m1-47h0m0 3h0m0 4h0m0 2h0m0 9h0m0 5h0m0 2h0m0 10h0m0 2h0m0 1h0m0 2h0m0 3h0m0 2h0m0 1h0m0 2h0m0 3h0m0 5h0m0 1h0m0 1h0m0 2h0m0 13h0m0 4h0m0 7h0m1-119h0m0 6h0m0 4h0m0 2h0m0 1h0m0 1h0m0 1h0m0 1h0m0 1h0m0 1h0m0 2h0m0 1h0m0 3h0m0 2h0m0 5h0m0 2h0m0 3h0m0 6h0m0 1h0m0 4h0m0 2h0m0 1h0m0 5h0m0 8h0m1-58h0m0 19h0m0 15h0m0 10h0m0 1h0m0 3h0m0 4h0m0 3h0m0 4h0m0 1h0m0 1h0m0 1h0m0 2h0m0 5h0m0 1h0m0 5h0m0 2h0m0 8h0m0 23h0m1-77h0m0 6h0m0 2h0m0 6h0m0 13h0m0 6h0m0 3h0m0 4h0m0 3h0m0 6h0m0 1h0m0 5h0m0 17h0m0 3h0m1-78h0m0 3h0m0 6h0m0 4h0m0 1h0m0 8h0m0 3h0m0 5h0m0 2h0m0 12h0m0 5h0m0 7h0m1-57h0m0 2h0m0 3h0m0 9h0m0 1h0m0 2h0m0 1h0m0 3h0m0 2h0m0 5h0m0 2h0m0 6h0m0 6h0m0 4h0m1-39h0m0 1h0m0 18h0m0 6h0m0 2h0m0 2h0m0 2h0m0 2h0m0 8h0m0 2h0m0 2h0m0 8h0m0 6h0m0 2h0m1-60h0m0 3h0m0 15h0m0 3h0m0 1h0m0 3h0m0 12h0m0 2h0m0 4h0m0 2h0m0 3h0m0 1h0m0 5h0m0 2h0m0 3h0m0 3h0m1-56h0m0 5h0m0 2h0m0 2h0m0 4h0m0 9h0m0 2h0m0 3h0m0 3h0m0 5h0m0 2h0m0 9h0m0 2h0m0 2h0m0 5h0m0 7h0m1-103h0m0 16h0m0 4h0m0 3h0m0 1h0m0 2h0m0 1h0m0 2h0m0 2h0m0 2h0m0 1h0m0 8h0m0 5h0m0 2h0m0 2h0m0 2h0m0 6h0m0 2h0m0 4h0m0 8h0m0 1h0m0 7h0m0 3h0m0 2h0m0 1h0m0 5h0m0 5h0m0 4h0m3-79h0m0 12h0m0 2h0m0 1h0m0 1h0m0 2h0m0 4h0m0 1h0m0 5h0m0 2h0m0 2h0m0 3h0m0 1h0m0 2h0m0 2h0m0 2h0m0 1h0m0 2h0m0 1h0m0 3h0m0 12h0m0 8h0m0 4h0m0 1h0m0 3h0m1-58h0m0 2h0m0 1h0m0 2h0m0 1h0m0 4h0m0 2h0m0 4h0m0 13h0m0 2h0m0 4h0m0 2h0m0 1h0m0 2h0m0 2h0m0 3h0m0 1h0m0 8h0m0 1h0m1-77h0m0 18h0m0 1h0m0 9h0m0 4h0m0 4h0m0 1h0m0 4h0m0 3h0m0 1h0m0 1h0m0 2h0m0 1h0m0 2h0m0 3h0m0 2h0m0 2h0m0 2h0m0 1h0m0 5h0m0 1h0m0 1h0m0 1h0m0 5h0m0 4h0m0 7h0m1-120h0m0 2h0m0 2h0m0 1h0m0 2h0m0 1h0m0 6h0m0 14h0m0 10h0m0 3h0m0 1h0m0 4h0m0 4h0m0 4h0m1-52h0m0 1h0m0 1h0m0 4h0m0 4h0m0 7h0m0 7h0m0 1h0m0 2h0m0 5h0m0 9h0m0 4h0m0 3h0m1 17h0m0 6h0m0 8h0m0 1h0m0 5h0m0 1h0m0 5h0m0 3h0m0 1h0m0 2h0m0 3h0m0 2h0m0 2h0m0 2h0m0 2h0m0 3h0m0 2h0m0 1h0m0 3h0m0 4h0m0 5h0m1-68h0m0 16h0m0 7h0m0 1h0m0 5h0m0 1h0m0 3h0m0 4h0m0 2h0m0 2h0m0 4h0m0 6h0m0 2h0m0 1h0m0 2h0m0 4h0m0 2h0m0 2h0m1-74h0m0 20h0m0 6h0m0 5h0m0 3h0m0 3h0m0 4h0m0 1h0m0 3h0m0 2h0m0 1h0m0 2h0m0 1h0m0 3h0m0 4h0m0 2h0m0 2h0m0 7h0m0 5h0m0 4h0m1-104h0m0 6h0m0 2h0m0 1h0m0 1h0m0 2h0m0 1h0m0 2h0m0 1h0m0 2h0m0 1h0m0 7h0m0 2h0m0 3h0m0 4h0m0 5h0m0 1h0m0 1h0m0 5h0m0 3h0m0 3h0m0 11h0m1-38h0m0 26h0m0 3h0m0 2h0m0 2h0m0 12h0m0 6h0m0 1h0m0 1h0m0 3h0m0 3h0m0 1h0m0 1h0m0 6h0m0 2h0m0 2h0m0 2h0m0 6h0m0 8h0m1-82h0m0 4h0m0 1h0m0 4h0m0 2h0m0 3h0m0 6h0m0 1h0m0 9h0m0 1h0m0 3h0m0 2h0m0 2h0m0 1h0m0 1h0m0 10h0m0 9h0m0 2h0m1-79h0m0 9h0m0 5h0m0 9h0m0 10h0m0 2h0m0 3h0m0 4h0m0 2h0m0 3h0m0 2h0m0 2h0m0 3h0m0 7h0m0 1h0m0 2h0m0 1h0m0 1h0m0 2h0m0 3h0m0 12h0m1-64h0m0 38h0m0 1h0m0 7h0m0 8h0m0 2h0m0 3h0m0 2h0m0 5h0m0 2h0m0 1h0m0 1h0m0 9h0m0 2h0m0 2h0m1-81h0m0 2h0m0 8h0m0 5h0m0 4h0m0 2h0m0 4h0m0 4h0m0 3h0m0 6h0m0 5h0m0 2h0m0 4h0m0 2h0m0 3h0m0 4h0m0 8h0m1-85h0m0 12h0m0 4h0m0 7h0m0 1h0m0 3h0m0 3h0m0 1h0m0 2h0m0 1h0m0 2h0m0 1h0m0 3h0m0 1h0m0 1h0m0 4h0m0 3h0m0 2h0m0 3h0m0 2h0m0 1h0m0 3h0m0 1h0m0 2h0m0 5h0m0 2h0m1-109h0m0 4h0m0 1h0m0 7h0m0 4h0m0 1h0m0 2h0m0 7h0m0 8h0m0 1h0m0 1h0m0 1h0m0 2h0m0 2h0m0 2h0m0 4h0m0 1h0m0 6h0m0 3h0m0 8h0m1-67h0m0 1h0m0 2h0m0 6h0m0 4h0m1 2h0m0 5h0m0 5h0m0 1h0m0 4h0m0 1h0m0 2h0m0 7h0m0 4h0m0 3h0m0 3h0m0 5h0m0 2h0m0 9h0m0 23h0m0 4h0m0 2h0m0 2h0m0 2h0m0 5h0m0 1h0m0 2h0m0 2h0m0 6h0m0 7h0m1-82h0m0 7h0m0 4h0m0 2h0m0 3h0m0 13h0m0 5h0m0 1h0m0 2h0m0 1h0m0 2h0m0 2h0m0 1h0m0 1h0m0 1h0m0 2h0m0 4h0m0 5h0m0 1h0m0 2h0m0 10h0m0 16h0m1-87h0m0 22h0m0 2h0m0 2h0m0 1h0m0 6h0m0 2h0m0 5h0m0 2h0m0 1h0m0 2h0m0 2h0m0 3h0m0 3h0m0 1h0m0 11h0m0 1h0m0 6h0m1-85h0m0 4h0m0 1h0m0 3h0m0 3h0m0 1h0m0 2h0m0 3h0m0 3h0m0 4h0m0 1h0m0 1h0m0 1h0m0 2h0m0 2h0m0 2h0m0 2h0m0 2h0m0 2h0m0 3h0m0 7h0m1-20h0m0 4h0m0 2h0m0 4h0m0 2h0m0 2h0m0 4h0m0 1h0m0 2h0m0 10h0m0 1h0m0 1h0m0 5h0m0 5h0m1-49h0m0 3h0m0 6h0m0 10h0m0 1h0m0 2h0m0 1h0m0 12h0m0 3h0m0 2h0m0 2h0m0 2h0m0 2h0m0 1h0m0 3h0m0 5h0m0 1h0m0 5h0m0 3h0m0 1h0m0 1h0m0 11h0m0 5h0m1-31h0m0 4h0m0 5h0m0 6h0m0 2h0m0 4h0m0 1h0m0 2h0m0 2h0m0 4h0m2-96h0m0 5h0m0 4h0m0 5h0m0 1h0m0 11h0m0 2h0m0 2h0m0 7h0m0 4h0m0 11h0m0 1h0m0 3h0m0 1h0m0 1h0m0 2h0m0 22h0m1-79h0m0 6h0m0 5h0m0 8h0m0 4h0m0 8h0m0 8h0m0 13h0m0 7h0m0 3h0m0 1h0m0 2h0m0 3h0m0 4h0m0 3h0m0 2h0m0 5h0m0 8h0m0 2h0m1-57h0m0 9h0m0 2h0m0 1h0m0 3h0m0 7h0m0 4h0m0 2h0m0 3h0m0 2h0m0 4h0m0 2h0m0 1h0m0 1h0m0 4h0m0 7h0m0 1h0m0 5h0m0 12h0m1-96h0m0 15h0m0 1h0m0 2h0m0 3h0m0 7h0m0 4h0m0 4h0m0 4h0m0 5h0m0 2h0m0 4h0m0 18h0m0 5h0m1-76h0m0 2h0m0 9h0m0 12h0m0 3h0m0 1h0m0 2h0m0 3h0m0 11h0m0 1h0m0 12h0m0 1h0m0 4h0m0 1h0m0 2h0m0 4h0m0 11h0m0 3h0m1-62h0m0 1h0m0 4h0m0 4h0m0 3h0m0 3h0m0 1h0m0 2h0m0 2h0m0 8h0m0 3h0m0 2h0m0 4h0m0 1h0m0 19h0m1-76h0m0 6h0m0 12h0m0 8h0m0 1h0m0 12h0m0 2h0m0 4h0m0 7h0m0 8h0m0 4h0m0 4h0m0 2h0m0 2h0m1-58h0m0 7h0m0 2h0m0 1h0m0 9h0m0 2h0m0 8h0m0 3h0m0 6h0m0 2h0m0 8h0m0 7h0m0 1h0m1-65h0m0 7h0m0 13h0m0 2h0m0 3h0m0 10h0m0 1h0m0 6h0m0 2h0m0 1h0m0 7h0m0 7h0m0 3h0m0 1h0m0 5h0m0 3h0m0 1h0m1-40h0m0 3h0m0 4h0m0 2h0m0 6h0m0 3h0m0 2h0m0 3h0m0 2h0m0 3h0m0 2h0m0 2h0m0 3h0m0 6h0m0 1h0m0 2h0m0 4h0m0 4h0m0 1h0m0 1h0m0 3h0m1-26h0m0 3h0m0 2h0m0 3h0m0 2h0m0 2h0m0 2h0m0 2h0m2-67h0m0 7h0m0 4h0m0 3h0m0 2h0m0 3h0m0 1h0m0 6h0m0 2h0m0 3h0m0 2h0m0 1h0m0 5h0m0 1h0m0 2h0m0 23h0m0 3h0m0 1h0m1-83h0m0 5h0m0 3h0m0 3h0m0 5h0m0 5h0m0 8h0m0 4h0m0 1h0m0 1h0m0 1h0m0 4h0m0 1h0m0 4h0m0 6h0m0 3h0m0 1h0m0 3h0m0 1h0m0 2h0m0 1h0m0 6h0m1-79h0m0 4h0m0 12h0m0 2h0m0 3h0m0 7h0m0 3h0m0 1h0m0 1h0m0 3h0m0 2h0m0 5h0m0 3h0m0 4h0m0 5h0m0 4h0m0 3h0m0 3h0m1-56h0m0 15h0m0 4h0m0 5h0m0 2h0m0 2h0m0 3h0m0 1h0m0 7h0m0 8h0m0 3h0m0 5h0m0 1h0m0 4h0m0 6h0m0 5h0m0 1h0m0 3h0m0 1h0m1-56h0m0 12h0m0 8h0m0 2h0m0 3h0m0 14h0m0 5h0m0 2h0m0 2h0m0 3h0m0 2h0m0 2h0m0 3h0m0 1h0m0 4h0m0 7h0m0 1h0m1-102h0m0 8h0m0 5h0m0 9h0m0 5h0m0 2h0m0 3h0m0 1h0m0 4h0m0 2h0m0 1h0m0 2h0m0 4h0m0 4h0m0 4h0m0 3h0m0 2h0m0 2h0m0 2h0m1-87h0m0 1h0m0 2h0m0 6h0m0 2h0m0 1h0m0 2h0m0 5h0m0 1h0m0 1h0m0 3h0m0 2h0m0 1h0m0 4h0m0 1h0m0 6h0m0 5h0m0 2h0m0 10h0m0 17h0m0 4h0m0 4h0m0 8h0m0 1h0m0 1h0m1-101h0m0 2h0m0 1h0m0 1h0m0 1h0m0 2h0m0 2h0m0 2h0m0 1h0m0 3h0m0 2h0m0 2h0m0 7h0m0 2h0m1-6h0m0 1h0m0 5h0m0 4h0m0 4h0m0 2h0m0 4h0m0 4h0m0 1h0m0 2h0m0 6h0m0 5h0m0 1h0m0 15h0m0 5h0m0 12h0m0 2h0m0 1h0m0 4h0m0 3h0m0 4h0m1-52h0m0 4h0m0 4h0m0 4h0m0 3h0m0 1h0m0 2h0m0 1h0m0 3h0m0 4h0m0 2h0m0 5h0m0 4h0m0 1h0m0 1h0m0 3h0m0 2h0m0 3h0m0 4h0m0 2h0m0 1h0m0 1h0m0 4h0m1-88h0m0 6h0m0 12h0m0 4h0m0 4h0m0 3h0m0 1h0m0 2h0m0 1h0m0 5h0m0 1h0m0 2h0m0 1h0m0 2h0m0 4h0m0 3h0m0 2h0m0 1h0m0 2h0m0 3h0m0 14h0m1-35h0m0 9h0m0 1h0m0 7h0m0 9h0m0 3h0m0 1h0m0 4h0m0 5h0m0 10h0m0 5h0m0 2h0m0 4h0m0 5h0m0 2h0m0 4h0m1-85h0m0 4h0m0 7h0m0 5h0m0 1h0m0 2h0m0 1h0m0 7h0m0 1h0m0 2h0m0 1h0m0 1h0m0 4h0m0 12h0m0 3h0m0 19h0m1-65h0m0 4h0m0 5h0m0 20h0m0 4h0m0 1h0m0 4h0m0 3h0m0 5h0m0 2h0m0 5h0m0 4h0m0 1h0m0 1h0m1-57h0m0 17h0m0 4h0m0 1h0m0 3h0m0 5h0m0 3h0m0 6h0m0 2h0m0 3h0m0 5h0m0 6h0m0 1h0m0 1h0m0 1h0m0 3h0m0 2h0m0 6h0m0 2h0m0 6h0m1-63h0m0 3h0m0 1h0m0 18h0m0 4h0m0 6h0m0 3h0m0 3h0m0 2h0m0 2h0m0 3h0m0 12h0m0 1h0m1-112h0m0 8h0m0 7h0m0 4h0m0 3h0m0 2h0m0 1h0m0 8h0m0 5h0m0 2h0m0 5h0m0 1h0m0 5h0m0 2h0m0 8h0m0 3h0m0 2h0m0 5h0m0 2h0m0 4h0m0 11h0m0 7h0m0 3h0m0 11h0m1-118h0m0 1h0m0 2h0m0 3h0m0 3h0m0 3h0m0 2h0m0 1h0m0 1h0m0 3h0m0 5h0m0 3h0m0 5h0m0 1h0m0 2h0m0 5h0m0 5h0m0 4h0m0 10h0m0 7h0m0 9h0m0 3h0m0 14h0m0 10h0m1-79h0m0 27h0m0 4h0m0 1h0m0 2h0m0 2h0m0 4h0m0 3h0m0 1h0m0 5h0m0 1h0m0 7h0m0 6h0m0 2h0m0 1h0m0 5h0m0 1h0m1-58h0m0 3h0m0 5h0m0 17h0m0 2h0m0 5h0m0 2h0m0 1h0m0 4h0m0 4h0m0 2h0m0 2h0m0 3h0m0 1h0m0 3h0m0 2h0m0 4h0m0 2h0m0 1h0m0 2h0m0 7h0m0 1h0m0 3h0m1-120h0m0 2h0m0 6h0m0 5h0m0 4h0m0 4h0m0 1h0m0 1h0m0 1h0m0 2h0m0 2h0m0 3h0m0 5h0m0 4h0m0 3h0m1-39h0m0 3h0m0 1h0m0 3h0m0 2h0m0 4h0m0 9h0m0 1h0m0 5h0m0 1h0m0 3h0m0 11h0m1-9h0m0 6h0m0 6h0m0 4h0m0 1h0m0 3h0m0 6h0m0 1h0m0 3h0m0 4h0m0 2h0m0 6h0m0 4h0m0 3h0m0 2h0m0 5h0m0 1h0m0 3h0m0 5h0m0 1h0m0 1h0m0 1h0m0 7h0m0 4h0m0 3h0m0 1h0m0 12h0m1-88h0m0 6h0m0 2h0m0 6h0m0 5h0m0 1h0m0 2h0m0 2h0m0 3h0m0 2h0m0 1h0m0 1h0m0 3h0m0 1h0m0 1h0m0 1h0m0 2h0m0 1h0m0 6h0m0 7h0m0 5h0m0 5h0m0 14h0m1-36h0m0 6h0m0 4h0m0 1h0m0 2h0m0 2h0m0 2h0m0 16h0m2-59h0m0 5h0m0 5h0m0 4h0m0 10h0m0 5h0m0 2h0m0 1h0m0 3h0m0 2h0m0 8h0m0 6h0m0 1h0m0 4h0m1-71h0m0 14h0m0 3h0m0 1h0m0 4h0m0 4h0m0 4h0m0 1h0m0 3h0m0 1h0m0 2h0m0 3h0m0 2h0m0 3h0m0 1h0m0 6h0m0 2h0m0 2h0m0 1h0m0 5h0m0 4h0m0 1h0m1-75h0m0 7h0m0 16h0m0 8h0m0 4h0m0 8h0m0 11h0m0 2h0m0 5h0m0 3h0m0 1h0m0 4h0m1-52h0m0 1h0m0 1h0m0 8h0m0 3h0m0 2h0m0 7h0m0 3h0m0 8h0m0 7h0m0 1h0m0 3h0m0 2h0m0 14h0m1-63h0m0 2h0m0 13h0m0 7h0m0 1h0m0 1h0m0 6h0m0 2h0m0 2h0m0 1h0m0 4h0m0 8h0m0 1h0m0 5h0m0 1h0m0 5h0m0 1h0m0 7h0m0 4h0m0 3h0m1-74h0m0 8h0m0 2h0m0 7h0m0 2h0m0 4h0m0 5h0m0 10h0m0 1h0m0 3h0m0 1h0m0 3h0m0 6h0m0 9h0m0 6h0m0 1h0m1-30h0m0 12h0m0 9h0m0 1h0m0 2h0m0 1h0m0 2h0m0 3h0m0 3h0m0 1h0m0 1h0m0 2h0m0 1h0m0 1h0m0 1h0m0 2h0m0 1h0m0 2h0m1-72h0m0 9h0m0 11h0m0 8h0m0 2h0m0 2h0m0 1h0m0 1h0m0 2h0m0 1h0m0 1h0m0 2h0m0 4h0m0 1h0m0 2h0m0 7h0m0 4h0m0 2h0m0 2h0m0 11h0m1-109h0m0 24h0m0 4h0m0 1h0m0 4h0m0 5h0m0 1h0m0 4h0m0 1h0m0 1h0m0 1h0m0 2h0m0 2h0m0 3h0m0 1h0m0 1h0m0 4h0m0 2h0m0 3h0m0 1h0m0 3h0m0 1h0m0 5h0m0 15h0m1-62h0m0 4h0m0 2h0m0 17h0m0 1h0m0 1h0m0 3h0m0 17h0m0 5h0m0 3h0m0 7h0m0 4h0m1-80h0m0 2h0m0 13h0m0 1h0m0 4h0m0 2h0m0 3h0m0 2h0m0 2h0m0 1h0m0 1h0m0 1h0m0 4h0m0 2h0m0 2h0m0 6h0m0 2h0m0 4h0m0 1h0m0 4h0m0 17h0m1-47h0m0 15h0m0 5h0m0 11h0m0 3h0m0 2h0m0 1h0m0 5h0m0 1h0m0 2h0m0 1h0m0 3h0m0 6h0m1-67h0m0 1h0m0 3h0m0 1h0m0 11h0m0 3h0m0 1h0m0 2h0m0 6h0m0 9h0m0 2h0m0 2h0m0 5h0m0 1h0m0 4h0m0 1h0m0 9h0m1-57h0m0 11h0m0 4h0m0 1h0m0 4h0m0 3h0m0 3h0m0 2h0m0 3h0m0 3h0m0 19h0m0 6h0m0 2h0m0 3h0m1-65h0m0 7h0m0 11h0m0 19h0m0 1h0m0 1h0m0 3h0m0 2h0m0 3h0m0 1h0m0 2h0m0 1h0m0 3h0m0 3h0m0 1h0m0 6h0m0 13h0m0 3h0m1-84h0m0 1h0m0 12h0m0 5h0m0 13h0m0 2h0m0 3h0m0 1h0m0 2h0m0 4h0m0 12h0m0 11h0m0 1h0m0 1h0m1-83h0m0 10h0m0 9h0m0 2h0m0 3h0m0 5h0m0 2h0m0 6h0m0 2h0m0 2h0m0 2h0m0 2h0m0 4h0m0 8h0m0 4h0m0 1h0m0 2h0m0 2h0m0 9h0m0 2h0m0 2h0m1-94h0m0 2h0m0 1h0m0 2h0m0 7h0m0 3h0m0 4h0m0 1h0m0 1h0m0 1h0m0 1h0m0 3h0m0 2h0m0 3h0m0 3h0m0 3h0m0 2h0m0 1h0m0 12h0m0 3h0m0 2h0m1-50h0m0 9h0m0 2h0m0 8h0m0 17h0m0 2h0m0 2h0m0 1h0m0 1h0m0 2h0m0 2h0m0 3h0m0 3h0m0 9h0m0 3h0m0 10h0m1-83h0m0 5h0m0 3h0m0 2h0m0 2h0m0 1h0m0 3h0m0 1h0m0 4h0m0 6h0m0 6h0m0 3h0m0 3h0m0 3h0m0 4h0m0 18h0m0 2h0m0 3h0m0 1h0m0 4h0m1-94h0m0 1h0m0 1h0m0 2h0m0 2h0m0 1h0m0 2h0m0 1h0m0 1h0m0 2h0m0 3h0m0 1h0m0 1h0m0 1h0m0 2h0m0 2h0m0 4h0m0 1h0m0 7h0m0 3h0m0 1h0m1-15h0m0 7h0m0 2h0m0 1h0m0 9h0m0 2h0m0 2h0m0 4h0m0 3h0m0 1h0m0 1h0m0 1h0m0 3h0m0 2h0m0 6h0m0 2h0m0 5h0m0 3h0m0 4h0m0 3h0m0 5h0m0 1h0m0 18h0m1-65h0m0 9h0m0 7h0m0 6h0m0 1h0m0 2h0m0 1h0m0 4h0m0 2h0m0 4h0m0 4h0m0 1h0m0 3h0m0 4h0m0 2h0m0 5h0m0 8h0m0 12h0m1-89h0m0 5h0m0 7h0m0 4h0m0 1h0m0 2h0m0 2h0m0 2h0m0 6h0m0 6h0m0 14h0m0 12h0m0 5h0m0 3h0m0 3h0m0 9h0m0 2h0m0 9h0m1-104h0m0 8h0m0 2h0m0 1h0m0 9h0m0 3h0m0 2h0m0 2h0m0 6h0m0 1h0m0 4h0m0 1h0m0 3h0m0 1h0m0 9h0m0 7h0m0 2h0m0 2h0m0 4h0m0 10h0m1-54h0m0 11h0m0 6h0m0 4h0m0 2h0m0 3h0m0 6h0m0 6h0m0 5h0m0 3h0m0 2h0m0 4h0m0 5h0m1-44h0m0 6h0m0 4h0m0 8h0m0 1h0m0 4h0m0 4h0m0 1h0m0 2h0m0 5h0m0 2h0m0 2h0m0 2h0m0 6h0m0 1h0m0 5h0m1-45h0m0 8h0m0 6h0m0 2h0m0 2h0m0 3h0m0 4h0m0 1h0m0 3h0m0 1h0m0 3h0m0 2h0m0 2h0m0 5h0m0 3h0m0 3h0m0 3h0m0 4h0m0 1h0m0 2h0m1-77h0m0 11h0m0 6h0m0 2h0m0 4h0m0 2h0m0 3h0m0 1h0m0 2h0m0 8h0m0 2h0m0 5h0m0 2h0m0 4h0m0 11h0m1-50h0m0 21h0m0 1h0m0 4h0m0 2h0m0 5h0m0 4h0m0 3h0m0 3h0m0 2h0m0 1h0m2-84h0m0 6h0m0 5h0m0 8h0m0 2h0m0 4h0m0 2h0m0 3h0m0 1h0m0 1h0m0 1h0m0 2h0m0 4h0m0 13h0m0 2h0m0 2h0m0 6h0m1-43h0m0 8h0m0 4h0m0 3h0m0 2h0m0 2h0m0 3h0m0 1h0m0 1h0m0 5h0m0 1h0m0 4h0m0 4h0m0 1h0m0 8h0m0 5h0m0 1h0m0 1h0m0 3h0m0 1h0m0 3h0m0 3h0m1-61h0m0 8h0m0 9h0m0 5h0m0 3h0m0 2h0m0 2h0m0 2h0m0 3h0m0 1h0m0 4h0m0 1h0m0 1h0m0 3h0m0 1h0m0 6h0m0 1h0m0 1h0m0 4h0m0 1h0m0 3h0m0 1h0m0 4h0m0 14h0m1-118h0m0 3h0m0 2h0m0 6h0m0 3h0m0 10h0m0 2h0m0 1h0m0 3h0m0 1h0m0 2h0m0 8h0m1-42h0m0 1h0m0 6h0m0 9h0m0 2h0m0 4h0m0 2h0m0 3h0m0 12h0m0 3h0m0 3h0m0 6h0m1-7h0m0 1h0m0 5h0m0 4h0m0 1h0m0 4h0m0 3h0m0 2h0m0 2h0m0 3h0m0 4h0m0 4h0m0 1h0m0 3h0m0 2h0m0 3h0m0 2h0m0 4h0m0 5h0m0 13h0m0 8h0m1-103h0m0 32h0m0 1h0m0 4h0m0 5h0m0 4h0m0 7h0m0 3h0m0 1h0m0 2h0m0 4h0m0 12h0m0 2h0m0 3h0m0 3h0m0 1h0m1-54h0m0 2h0m0 5h0m0 9h0m0 2h0m0 2h0m0 9h0m0 3h0m0 5h0m0 3h0m0 2h0m0 9h0m0 1h0m1-47h0m0 4h0m0 1h0m0 6h0m0 3h0m0 2h0m0 3h0m0 6h0m0 2h0m0 2h0m0 1h0m0 1h0m0 13h0m0 3h0m0 4h0m0 7h0m1-78h0m0 1h0m0 9h0m0 8h0m0 2h0m0 10h0m0 8h0m0 3h0m0 7h0m0 1h0m0 6h0m0 1h0m0 2h0m0 2h0m0 2h0m0 6h0m0 12h0m1-55h0m0 4h0m0 2h0m0 4h0m0 5h0m0 2h0m0 4h0m0 8h0m0 1h0m0 1h0m0 4h0m0 1h0m0 4h0m0 3h0m0 5h0m0 7h0m0 3h0m0 10h0m1-89h0m0 7h0m0 2h0m0 1h0m0 1h0m0 2h0m0 1h0m0 1h0m0 1h0m0 2h0m0 5h0m0 5h0m0 6h0m0 5h0m0 4h0m0 5h0m0 5h0m0 1h0m0 6h0m0 5h0m0 1h0m0 2h0m0 1h0m0 18h0m1-95h0m0 11h0m0 7h0m0 9h0m0 2h0m0 5h0m0 1h0m0 1h0m0 3h0m0 5h0m0 3h0m0 3h0m0 3h0m0 4h0m1-47h0m0 6h0m0 4h0m0 2h0m0 3h0m0 3h0m0 3h0m0 7h0m0 3h0m0 5h0m0 7h0m0 4h0m0 15h0m1-70h0m0 9h0m0 1h0m0 2h0m0 3h0m0 8h0m0 1h0m0 4h0m0 2h0m0 1h0m0 3h0m0 2h0m0 6h0m0 4h0m0 1h0m0 2h0m0 2h0m0 6h0m0 3h0m0 3h0m1-67h0m0 9h0m0 2h0m0 8h0m0 1h0m0 2h0m0 4h0m0 2h0m0 1h0m0 2h0m0 7h0m0 3h0m0 4h0m0 3h0m0 6h0m0 8h0m0 5h0m1-90h0m0 1h0m0 1h0m0 2h0m0 1h0m0 3h0m0 1h0m0 2h0m0 2h0m0 1h0m0 1h0m0 1h0m0 2h0m0 1h0m0 2h0m1 0h0m0 1h0m0 3h0m0 1h0m0 1h0m0 10h0m0 2h0m0 3h0m0 3h0m0 5h0m0 2h0m0 4h0m0 1h0m0 2h0m0 7h0m0 3h0m0 5h0m0 4h0m0 7h0m0 8h0m1-71h0m0 12h0m0 1h0m0 3h0m0 3h0m0 4h0m0 2h0m0 13h0m0 3h0m0 1h0m0 1h0m0 3h0m0 4h0m0 5h0m0 3h0m0 2h0m0 4h0m0 1h0m1-63h0m0 25h0m0 1h0m0 8h0m0 1h0m0 2h0m0 4h0m0 1h0m0 2h0m0 2h0m0 4h0m0 1h0m0 9h0m0 3h0m0 2h0m0 1h0m0 2h0m0 5h0m0 5h0m1-93h0m0 10h0m0 3h0m0 3h0m0 1h0m0 1h0m0 3h0m0 2h0m0 3h0m0 1h0m0 5h0m0 2h0m0 4h0m0 2h0m0 13h0m0 2h0m0 16h0m0 14h0m1-69h0m0 4h0m0 2h0m0 7h0m0 5h0m0 1h0m0 10h0m0 2h0m0 16h0m0 1h0m0 4h0m0 3h0m0 2h0m0 2h0m0 3h0m0 3h0m0 12h0m0 3h0m1-52h0m0 4h0m0 7h0m0 2h0m0 4h0m0 5h0m0 1h0m0 8h0m0 8h0m0 1h0m0 3h0m0 1h0m0 2h0m0 3h0m0 2h0m0 9h0m0 6h0m0 4h0m1-102h0m0 14h0m0 7h0m0 8h0m0 1h0m0 2h0m0 8h0m0 4h0m0 1h0m0 3h0m0 1h0m0 2h0m0 2h0m0 1h0m0 4h0m0 2h0m0 4h0m0 3h0m0 1h0m0 6h0m0 8h0m0 2h0m3-57h0m0 9h0m0 1h0m0 7h0m0 2h0m0 5h0m0 2h0m0 1h0m0 3h0m0 4h0m0 3h0m0 1h0m0 6h0m0 1h0m0 1h0m0 3h0m0 1h0m0 5h0m0 1h0m0 5h0m0 2h0m0 1h0m0 11h0m1-67h0m0 14h0m0 3h0m0 9h0m0 2h0m0 4h0m0 1h0m0 2h0m0 1h0m0 7h0m0 1h0m0 3h0m0 3h0m0 4h0m0 2h0m0 3h0m0 9h0m1-81h0m0 10h0m0 6h0m0 5h0m0 3h0m0 2h0m0 2h0m0 3h0m0 2h0m0 4h0m0 5h0m0 4h0m0 9h0m0 10h0m1-57h0m0 5h0m0 1h0m0 2h0m0 15h0m0 3h0m0 1h0m0 1h0m0 1h0m0 2h0m0 4h0m0 1h0m0 6h0m0 3h0m0 3h0m0 4h0m0 1h0m0 3h0m0 4h0m0 3h0m0 7h0m1-91h0m0 6h0m0 10h0m0 3h0m0 1h0m0 2h0m0 2h0m0 5h0m0 2h0m0 2h0m0 1h0m0 3h0m0 3h0m0 1h0m0 2h0m0 1h0m0 2h0m0 2h0m0 8h0m0 4h0m0 2h0m0 12h0m0 9h0m1-106h0m0 2h0m0 4h0m0 2h0m0 3h0m0 2h0m0 2h0m0 2h0m0 1h0m0 3h0m0 1h0m0 1h0m0 1h0m0 1h0m0 3h0m0 7h0m0 2h0m0 3h0m0 4h0m0 1h0m0 4h0m0 9h0m0 4h0m0 1h0m0 14h0m1-35h0m0 8h0m0 4h0m0 3h0m0 16h0m0 2h0m0 4h0m0 1h0m0 4h0m0 3h0m0 4h0m0 1h0m0 1h0m0 1h0m0 5h0m0 6h0m0 5h0m1-68h0m0 11h0m0 8h0m0 3h0m0 2h0m0 3h0m0 1h0m0 13h0m0 6h0m0 3h0m0 2h0m0 4h0m0 2h0m0 3h0m1-67h0m0 19h0m0 2h0m0 4h0m0 3h0m0 5h0m0 4h0m0 1h0m0 2h0m0 8h0m0 1h0m0 4h0m0 6h0m1-50h0m0 5h0m0 11h0m0 4h0m0 7h0m0 6h0m0 2h0m0 3h0m0 3h0m0 2h0m0 3h0m0 11h0m0 2h0m0 1h0m0 7h0m0 2h0m0 9h0m1-56h0m0 2h0m0 1h0m0 4h0m0 1h0m0 3h0m0 6h0m0 5h0m0 2h0m0 2h0m0 3h0m0 4h0m0 3h0m0 6h0m0 4h0m0 14h0m2-63h0m0 17h0m0 1h0m0 4h0m0 6h0m0 2h0m0 10h0m0 5h0m0 3h0m1-67h0m0 5h0m0 8h0m0 2h0m0 4h0m0 2h0m0 1h0m0 6h0m0 1h0m0 1h0m0 3h0m0 1h0m0 2h0m0 5h0m0 5h0m0 3h0m0 5h0m0 1h0m0 3h0m0 17h0m1-49h0m0 1h0m0 4h0m0 4h0m0 4h0m0 5h0m0 7h0m0 3h0m0 5h0m0 1h0m0 1h0m0 1h0m0 6h0m0 2h0m0 4h0m0 3h0m1-66h0m0 7h0m0 6h0m0 5h0m0 3h0m0 5h0m0 5h0m0 3h0m0 7h0m0 2h0m0 5h0m0 5h0m0 7h0m0 6h0m0 2h0m0 1h0m1-72h0m0 3h0m0 12h0m0 2h0m0 3h0m0 12h0m0 2h0m0 2h0m0 3h0m0 2h0m0 1h0m0 1h0m0 5h0m0 8h0m0 2h0m0 2h0m0 11h0m1-67h0m0 9h0m0 2h0m0 4h0m0 3h0m0 5h0m0 2h0m0 12h0m0 2h0m0 6h0m0 4h0m0 1h0m0 3h0m0 5h0m0 1h0m1-61h0m0 11h0m0 8h0m0 4h0m0 2h0m0 2h0m0 3h0m0 2h0m0 3h0m0 1h0m0 1h0m0 2h0m0 5h0m0 1h0m0 3h0m0 1h0m0 8h0m0 5h0m0 1h0m0 5h0m1-92h0m0 10h0m0 3h0m0 2h0m0 3h0m0 2h0m0 3h0m0 3h0m0 3h0m0 3h0m0 6h0m0 6h0m0 2h0m0 2h0m0 6h0m0 21h0m1-77h0m0 4h0m0 2h0m0 2h0m0 6h0m0 5h0m0 9h0m0 6h0m0 6h0m0 1h0m0 2h0m0 5h0m0 3h0m0 4h0m0 4h0m0 5h0m0 4h0m1-51h0m0 2h0m0 3h0m0 4h0m0 4h0m0 5h0m0 2h0m0 6h0m0 1h0m0 5h0m0 11h0m0 1h0m0 4h0m0 2h0m0 8h0m1-51h0m0 4h0m0 3h0m0 1h0m0 3h0m0 2h0m0 2h0m0 6h0m0 9h0m0 3h0m0 1h0m0 5h0m1-31h0m0 6h0m0 4h0m0 6h0m0 3h0m0 2h0m0 2h0m0 8h0m0 4h0m0 2h0m0 4h0m0 2h0m0 1h0m0 4h0m0 3h0m0 2h0m0 6h0m1-61h0m0 7h0m0 2h0m0 8h0m0 2h0m0 3h0m0 6h0m0 1h0m0 1h0m0 3h0m0 3h0m0 4h0m0 4h0m0 4h0m0 4h0m1-72h0m0 2h0m0 2h0m0 6h0m0 6h0m0 6h0m0 2h0m0 8h0m0 1h0m0 2h0m0 2h0m0 8h0m0 1h0m0 3h0m0 3h0m0 7h0m0 5h0m0 3h0m0 1h0m0 5h0m1-90h0m0 7h0m0 4h0m0 4h0m0 1h0m0 1h0m0 7h0m0 3h0m0 2h0m0 1h0m0 2h0m0 5h0m0 1h0m0 2h0m0 4h0m0 4h0m0 5h0m0 13h0m0 1h0m0 11h0m1-75h0m0 2h0m0 4h0m0 4h0m0 2h0m0 5h0m0 2h0m0 9h0m0 2h0m0 1h0m0 4h0m0 4h0m0 6h0m0 1h0m0 8h0m0 2h0m0 3h0m0 3h0m0 8h0m0 1h0m0 8h0m1-40h0m0 3h0m0 6h0m0 2h0m0 2h0m0 5h0m0 2h0m0 6h0m0 3h0m0 5h0m0 1h0m0 7h0m0 2h0m0 1h0m0 2h0m0 12h0m0 8h0m1-82h0m0 3h0m0 6h0m0 2h0m0 14h0m0 8h0m0 4h0m0 1h0m0 4h0m0 5h0m0 6h0m0 3h0m0 6h0m0 5h0m1-82h0m0 4h0m0 5h0m0 2h0m0 3h0m0 5h0m0 2h0m0 7h0m0 1h0m0 4h0m0 1h0m0 8h0m0 2h0m0 1h0m0 2h0m0 2h0m0 4h0m0 3h0m0 3h0m0 1h0m0 5h0m0 6h0m0 8h0m1-120h0m0 2h0m0 5h0m0 2h0m0 1h0m0 5h0m0 1h0m0 5h0m0 1h0m0 2h0m0 9h0m0 2h0m0 2h0m0 11h0m1-47h0m0 1h0m0 1h0m0 6h0m0 1h0m0 3h0m0 8h0m0 1h0m0 1h0m0 3h0m0 5h0m0 10h0m1-14h0m0 7h0m0 10h0m0 3h0m0 5h0m0 8h0m0 11h0m0 3h0m0 11h0m0 1h0m0 1h0m0 4h0m0 2h0m0 2h0m0 2h0m0 1h0m0 2h0m0 2h0m0 3h0m0 10h0m0 9h0m0 2h0m1-81h0m0 2h0m0 1h0m0 3h0m0 5h0m0 2h0m0 4h0m0 2h0m0 1h0m0 1h0m0 1h0m0 3h0m0 5h0m0 5h0m0 3h0m0 4h0m0 1h0m0 7h0m0 5h0m0 9h0m0 1h0m0 1h0m0 3h0m1-81h0m0 3h0m0 8h0m0 6h0m0 3h0m0 1h0m0 2h0m0 2h0m0 5h0m0 2h0m0 2h0m0 3h0m0 2h0m0 2h0m0 3h0m0 1h0m0 1h0m0 2h0m0 3h0m0 4h0m0 2h0m0 3h0m0 1h0m0 1h0m0 8h0m3-61h0m0 8h0m0 4h0m0 8h0m0 2h0m0 2h0m0 1h0m0 3h0m0 1h0m0 3h0m0 3h0m0 1h0m0 1h0m0 1h0m0 2h0m0 5h0m0 1h0m0 5h0m0 2h0m0 2h0m0 5h0m0 10h0m1-51h0m0 10h0m0 5h0m0 6h0m0 2h0m0 3h0m0 3h0m0 5h0m0 3h0m0 1h0m0 1h0m0 2h0m0 5h0m0 3h0m1-49h0m0 3h0m0 3h0m0 2h0m0 7h0m0 8h0m0 3h0m0 3h0m0 1h0m0 2h0m0 5h0m0 8h0m0 1h0m0 2h0m0 11h0m0 5h0m1-73h0m0 5h0m0 10h0m0 6h0m0 6h0m0 12h0m0 2h0m0 3h0m0 3h0m1-61h0m0 16h0m0 3h0m0 2h0m0 2h0m0 1h0m0 3h0m0 3h0m0 3h0m0 1h0m0 2h0m0 1h0m0 7h0m0 9h0m0 5h0m0 6h0m0 6h0m1-66h0m0 7h0m0 21h0m0 8h0m0 2h0m0 3h0m0 3h0m0 2h0m0 2h0m0 3h0m0 9h0m0 1h0m0 5h0m1-62h0m0 6h0m0 3h0m0 6h0m0 5h0m0 3h0m0 10h0m0 2h0m0 10h0m0 4h0m0 1h0m0 3h0m0 2h0m0 4h0m0 2h0m1-68h0m0 11h0m0 3h0m0 5h0m0 5h0m0 2h0m0 1h0m0 5h0m0 2h0m0 1h0m0 1h0m0 8h0m0 4h0m0 3h0m0 6h0m1-54h0m0 7h0m0 5h0m0 5h0m0 1h0m0 2h0m0 5h0m0 2h0m0 7h0m0 2h0m0 3h0m0 1h0m0 3h0m0 5h0m0 4h0m0 10h0m0 1h0m0 4h0m1-39h0m0 3h0m0 1h0m0 7h0m0 4h0m0 3h0m0 2h0m0 3h0m0 1h0m0 1h0m0 4h0m0 2h0m0 1h0m0 3h0m0 2h0m0 5h0m0 2h0m0 6h0m0 1h0m1-38h0m0 4h0m0 4h0m0 6h0m0 4h0m0 6h0m0 1h0m0 2h0m0 7h0m0 7h0m2-77h0m0 1h0m0 12h0m0 7h0m0 2h0m0 1h0m0 4h0m0 6h0m0 3h0m0 3h0m0 4h0m0 2h0m0 2h0m0 3h0m0 7h0m1-70h0m0 11h0m0 12h0m0 1h0m0 1h0m0 9h0m0 3h0m0 3h0m0 3h0m0 12h0m0 1h0m0 2h0m0 3h0m0 1h0m0 9h0m0 6h0m1-71h0m0 1h0m0 8h0m0 5h0m0 10h0m0 3h0m0 2h0m0 2h0m0 3h0m0 3h0m0 1h0m0 1h0m0 1h0m0 3h0m0 1h0m0 2h0m0 10h0m0 4h0m0 5h0m1-49h0m0 5h0m0 2h0m0 6h0m0 4h0m0 5h0m0 4h0m0 3h0m0 4h0m0 2h0m0 3h0m0 5h0m0 9h0m1-58h0m0 8h0m0 4h0m0 3h0m0 3h0m0 1h0m0 3h0m0 8h0m0 2h0m0 9h0m0 1h0m0 1h0m0 3h0m0 1h0m0 2h0m0 5h0m0 3h0m0 2h0m0 8h0m0 1h0m0 4h0m1-80h0m0 9h0m0 4h0m0 2h0m0 1h0m0 1h0m0 1h0m0 4h0m0 1h0m0 1h0m0 4h0m0 2h0m0 4h0m0 1h0m0 5h0m0 2h0m0 1h0m0 3h0m0 2h0m0 6h0m0 3h0m0 2h0m0 1h0m0 1h0m0 5h0m0 5h0m1-109h0m0 3h0m0 5h0m0 4h0m0 4h0m0 2h0m0 3h0m0 2h0m0 3h0m0 2h0m0 1h0m0 2h0m0 2h0m0 1h0m0 2h0m0 2h0m0 1h0m0 2h0m0 3h0m0 4h0m0 5h0m1-58h0m0 4h0m0 1h0m0 1h0m0 4h0m0 1h0m1-9h0m0 4h0m0 2h0m0 1h0m0 1h0m0 2h0m0 1h0m0 1h0m0 7h0m0 1h0m0 3h0m0 2h0m0 3h0m0 2h0m0 4h0m0 5h0m0 1h0m0 2h0m0 3h0m0 1h0m0 6h0m0 14h0m0 11h0m0 11h0m0 2h0m0 1h0m1-55h0m0 20h0m0 4h0m0 3h0m0 2h0m0 4h0m0 4h0m0 3h0m0 2h0m0 2h0m0 2h0m0 1h0m0 1h0m0 3h0m0 5h0m0 3h0m0 1h0m0 2h0m0 17h0m1-75h0m0 8h0m0 3h0m0 13h0m0 1h0m0 1h0m0 4h0m0 1h0m0 2h0m0 2h0m0 1h0m0 5h0m0 2h0m0 1h0m1-52h0m0 1h0m0 10h0m0 3h0m0 2h0m0 6h0m0 1h0m0 5h0m0 6h0m0 4h0m0 8h0m0 1h0m0 6h0m0 3h0m0 2h0m0 6h0m0 4h0m1-69h0m0 3h0m0 5h0m0 4h0m0 7h0m0 4h0m0 2h0m0 1h0m0 4h0m0 1h0m0 5h0m0 5h0m0 3h0m0 3h0m0 4h0m0 13h0m0 7h0m1-77h0m0 10h0m0 3h0m0 8h0m0 2h0m0 5h0m0 11h0m0 2h0m0 3h0m0 1h0m0 4h0m0 11h0m0 4h0m1-44h0m0 9h0m0 1h0m0 3h0m0 2h0m0 2h0m0 3h0m0 2h0m0 3h0m0 1h0m0 1h0m0 6h0m0 2h0m0 3h0m0 3h0m0 1h0m0 4h0m0 5h0m0 5h0m0 12h0m1-96h0m0 6h0m0 7h0m0 2h0m0 3h0m0 4h0m0 2h0m0 2h0m0 1h0m0 3h0m0 1h0m0 3h0m0 2h0m0 6h0m0 30h0m1-76h0m0 16h0m0 6h0m0 2h0m0 2h0m0 2h0m0 10h0m0 2h0m0 4h0m0 4h0m0 2h0m0 3h0m0 3h0m0 1h0m0 3h0m0 2h0m0 3h0m0 1h0m0 1h0m0 3h0m1-47h0m0 16h0m0 4h0m0 2h0m0 6h0m0 4h0m0 9h0m0 3h0m0 4h0m0 1h0m0 4h0m0 3h0m0 2h0m0 7h0m0 1h0m1-60h0m0 1h0m0 1h0m0 3h0m0 2h0m0 1h0m0 10h0m0 6h0m0 6h0m0 4h0m0 3h0m0 1h0m0 6h0m0 3h0m0 1h0m1-55h0m0 10h0m0 8h0m0 1h0m0 2h0m0 2h0m0 7h0m0 4h0m0 4h0m0 8h0m0 2h0m0 3h0m0 3h0m0 4h0m0 1h0m0 4h0m1-88h0m0 1h0m0 6h0m0 8h0m0 2h0m0 2h0m0 5h0m0 7h0m0 1h0m0 6h0m0 1h0m0 5h0m0 5h0m0 1h0m0 1h0m0 5h0m0 4h0m0 3h0m0 1h0m0 3h0m0 4h0m0 2h0m0 3h0m0 5h0m0 1h0m1-93h0m0 1h0m0 11h0m1-11h0m0 2h0m0 2h0m0 2h0m0 3h0m0 3h0m0 3h0m0 2h0m0 1h0m0 2h0m0 2h0m0 4h0m0 1h0m0 3h0m0 2h0m0 1h0m0 2h0m0 1h0m0 1h0m0 8h0m0 3h0m0 5h0m1-42h0m0 1h0m0 2h0m0 9h0m0 5h0m0 1h0m0 11h0m0 3h0m0 1h0m0 5h0m0 1h0m0 3h0m0 2h0m0 3h0m0 4h0m0 1h0m0 1h0m0 2h0m0 1h0m0 1h0m0 6h0m0 2h0m0 2h0m0 1h0m0 1h0m0 14h0m1-64h0m0 6h0m0 2h0m0 6h0m0 3h0m0 1h0m0 7h0m0 5h0m0 10h0m0 2h0m0 1h0m0 1h0m0 1h0m0 3h0m0 6h0m0 2h0m0 2h0m0 1h0m0 1h0m0 1h0m0 2h0m0 15h0m1-54h0m0 3h0m0 8h0m0 1h0m0 3h0m0 7h0m0 5h0m0 5h0m0 2h0m0 3h0m0 2h0m0 1h0m0 1h0m0 2h0m0 3h0m0 1h0m0 1h0m0 2h0m0 1h0m0 3h0m0 5h0m0 2h0m0 4h0m0 1h0m1-82h0m0 15h0m0 6h0m0 3h0m0 5h0m0 2h0m0 2h0m0 3h0m0 2h0m0 7h0m0 2h0m0 5h0m0 5h0m0 5h0m1-41h0m0 1h0m0 2h0m0 2h0m0 3h0m0 2h0m0 8h0m0 2h0m0 1h0m0 3h0m0 1h0m0 3h0m0 1h0m0 3h0m0 1h0m0 5h0m0 2h0m0 1h0m0 1h0m0 3h0m0 4h0m0 3h0m1-101h0m0 2h0m0 4h0m0 5h0m0 3h0m0 1h0m0 1h0m0 1h0m0 4h0m0 1h0m0 2h0m0 1h0m0 3h0m0 3h0m0 3h0m0 2h0m0 4h0m0 5h0m0 9h0m1-27h0m0 3h0m0 6h0m0 2h0m0 5h0m0 3h0m0 3h0m0 9h0m0 3h0m0 2h0m0 1h0m0 4h0m0 2h0m0 3h0m0 6h0m0 6h0m0 3h0m0 3h0m0 3h0m0 1h0m0 7h0m0 2h0m0 5h0m0 7h0m0 4h0m1-70h0m0 3h0m0 4h0m0 15h0m0 3h0m0 2h0m0 4h0m0 2h0m0 3h0m0 6h0m0 3h0m0 1h0m0 3h0m0 2h0m0 4h0m0 3h0m0 6h0m0 7h0m1-65h0m0 4h0m0 6h0m0 3h0m0 5h0m0 3h0m0 1h0m0 3h0m0 2h0m0 3h0m0 1h0m0 2h0m0 3h0m0 6h0m0 6h0m0 5h0m1-93h0m0 8h0m0 6h0m0 17h0m0 1h0m0 5h0m0 2h0m0 1h0m0 2h0m0 2h0m0 2h0m0 3h0m0 3h0m0 2h0m0 1h0m0 2h0m0 2h0m0 1h0m0 2h0m0 1h0m0 5h0m0 8h0m0 2h0m0 3h0m1-97h0m0 4h0m0 6h0m0 7h0m0 2h0m0 3h0m0 3h0m0 1h0m0 1h0m0 1h0m0 3h0m0 2h0m0 2h0m0 1h0m0 2h0m0 1h0m0 1h0m0 2h0m0 3h0m0 1h0m0 4h0m0 3h0m0 25h0m1-89h0m0 1h0m0 2h0m0 5h0m0 1h0m0 3h0m0 1h0m0 17h0m1-27h0m0 4h0m0 2h0m0 2h0m0 2h0m0 1h0m0 3h0m0 6h0m0 3h0m0 1h0m0 11h0m0 5h0m0 1h0m0 1h0m0 3h0m0 5h0m0 3h0m0 4h0m0 2h0m0 4h0m0 7h0m0 1h0m0 3h0m1-61h0m0 17h0m0 2h0m0 6h0m0 1h0m0 2h0m0 4h0m0 1h0m0 5h0m0 3h0m0 2h0m0 4h0m0 2h0m0 2h0m0 1h0m0 2h0m0 7h0m0 15h0m0 3h0m1-67h0m0 1h0m0 2h0m0 5h0m0 2h0m0 4h0m0 9h0m0 1h0m0 4h0m0 4h0m0 1h0m0 2h0m0 2h0m0 13h0m0 5h0m0 6h0m1-55h0m0 6h0m0 2h0m0 3h0m0 3h0m0 2h0m0 3h0m0 5h0m0 10h0m0 3h0m0 2h0m0 2h0m0 4h0m0 3h0m0 1h0m0 3h0m0 2h0m0 11h0m1-62h0m0 1h0m0 17h0m0 6h0m0 5h0m0 1h0m0 7h0m0 1h0m0 6h0m0 6h0m0 3h0m0 2h0m0 4h0m0 1h0m0 6h0m1-59h0m0 9h0m0 7h0m0 4h0m0 5h0m0 1h0m0 4h0m0 4h0m0 3h0m0 2h0m0 1h0m0 4h0m0 2h0m0 1h0m0 2h0m0 1h0m0 4h0m1-79h0m0 9h0m0 11h0m0 1h0m0 1h0m0 6h0m0 2h0m0 3h0m0 6h0m0 2h0m0 2h0m0 1h0m0 1h0m0 1h0m0 2h0m0 5h0m0 2h0m0 4h0m0 13h0m1-60h0m0 4h0m0 11h0m0 2h0m0 5h0m0 1h0m0 3h0m0 2h0m0 1h0m0 2h0m0 8h0m0 7h0m0 1h0m0 7h0m2-29h0m0 6h0m0 2h0m0 3h0m0 4h0m0 3h0m0 4h0m0 1h0m0 3h0m0 4h0m0 8h0m1-62h0m0 2h0m0 3h0m0 1h0m0 6h0m0 1h0m0 3h0m0 1h0m0 3h0m0 2h0m0 4h0m0 7h0m0 5h0m0 1h0m0 3h0m0 3h0m0 4h0m0 4h0m0 2h0m0 8h0m0 1h0m0 2h0m0 2h0m1-81h0m0 4h0m0 2h0m0 1h0m0 1h0m0 3h0m0 1h0m0 1h0m0 2h0m0 2h0m0 1h0m0 3h0m0 1h0m0 5h0m0 3h0m0 23h0m1-26h0m0 6h0m0 3h0m0 5h0m0 1h0m0 1h0m0 4h0m0 1h0m0 3h0m0 2h0m0 2h0m0 2h0m0 2h0m0 1h0m0 2h0m0 3h0m0 1h0m0 1h0m0 15h0m1-67h0m0 2h0m0 6h0m0 3h0m0 6h0m0 9h0m0 23h0m0 1h0m0 6h0m0 1h0m0 3h0m0 5h0m0 3h0m0 2h0m1-50h0m0 3h0m0 1h0m0 6h0m0 2h0m0 1h0m0 3h0m0 2h0m0 1h0m0 3h0m0 1h0m0 5h0m0 6h0m0 4h0m0 3h0m0 5h0m1-65h0m0 10h0m0 5h0m0 5h0m0 6h0m0 1h0m0 3h0m0 1h0m0 5h0m0 9h0m0 3h0m0 10h0m0 4h0m0 4h0m1-56h0m0 2h0m0 2h0m0 4h0m0 4h0m0 3h0m0 3h0m0 3h0m0 2h0m0 3h0m0 4h0m0 4h0m0 2h0m0 5h0m0 5h0m1-70h0m0 10h0m0 5h0m0 2h0m0 2h0m0 2h0m0 5h0m0 4h0m0 9h0m0 19h0m1-44h0m0 4h0m0 3h0m0 5h0m0 1h0m0 6h0m0 3h0m0 1h0m0 4h0m0 1h0m0 2h0m0 1h0m0 4h0m0 1h0m0 3h0m0 3h0m0 5h0m0 4h0m0 7h0m1-71h0m0 2h0m0 7h0m0 5h0m0 2h0m0 2h0m0 3h0m0 3h0m0 1h0m0 2h0m0 2h0m0 1h0m0 1h0m0 1h0m0 2h0m0 3h0m0 2h0m0 1h0m0 4h0m0 1h0m0 1h0m0 2h0m0 2h0m0 2h0m0 26h0m3-48h0m0 1h0m0 1h0m0 1h0m0 2h0m0 2h0m0 2h0m0 1h0m0 4h0m0 2h0m0 1h0m0 3h0m0 2h0m0 4h0m0 4h0m0 2h0m0 3h0m0 1h0m0 2h0m0 1h0m0 4h0m1-59h0m0 11h0m0 6h0m0 2h0m0 5h0m0 5h0m0 2h0m0 1h0m0 3h0m0 2h0m0 5h0m0 3h0m0 1h0m0 1h0m0 1h0m0 4h0m0 7h0m0 3h0m0 6h0m1-85h0m0 1h0m0 6h0m0 2h0m0 1h0m0 1h0m0 2h0m0 3h0m0 6h0m0 1h0m0 1h0m0 1h0m0 1h0m0 2h0m0 3h0m0 1h0m0 2h0m0 1h0m0 4h0m0 9h0m0 2h0m1-70h0m0 8h0m0 3h0m0 5h0m0 4h0m0 4h0m0 8h0m0 2h0m0 3h0m0 6h0m0 9h0m0 4h0m0 6h0m0 1h0m0 3h0m0 11h0m0 9h0m0 1h0m0 1h0m0 3h0m0 9h0m0 2h0m2-103h0m0 3h0m0 2h0m0 10h0m0 7h0m0 3h0m0 1h0m0 14h0m0 1h0m0 8h0m0 5h0m0 3h0m0 4h0m0 3h0m0 1h0m0 1h0m0 2h0m0 4h0m0 6h0m0 3h0m0 4h0m0 7h0m0 1h0m0 1h0m1-59h0m0 2h0m0 17h0m0 2h0m0 9h0m0 9h0m0 4h0m0 2h0m0 1h0m0 7h0m0 2h0m0 1h0m0 1h0m0 3h0m0 5h0m0 1h0m0 23h0m1-86h0m0 21h0m0 3h0m0 6h0m0 1h0m0 3h0m0 7h0m0 4h0m0 2h0m0 1h0m0 3h0m0 4h0m0 2h0m0 1h0m0 1h0m0 1h0m0 6h0m0 5h0m1-67h0m0 11h0m0 5h0m0 4h0m0 1h0m0 4h0m0 3h0m0 4h0m0 2h0m0 6h0m0 9h0m0 12h0m0 4h0m0 3h0m1-108h0m0 6h0m0 1h0m0 3h0m0 2h0m0 1h0m0 1h0m0 2h0m0 2h0m0 1h0m0 1h0m0 1h0m0 3h0m0 4h0m0 3h0m0 2h0m0 2h0m0 2h0m0 3h0m0 1h0m0 2h0m0 10h0m0 10h0m0 3h0m1-21h0m0 12h0m0 4h0m0 4h0m0 3h0m0 2h0m0 5h0m0 3h0m0 5h0m0 1h0m0 2h0m0 6h0m0 1h0m0 3h0m0 2h0m0 1h0m0 4h0m1-57h0m0 1h0m0 5h0m0 2h0m0 6h0m0 1h0m0 1h0m0 11h0m0 2h0m0 6h0m0 4h0m0 1h0m0 2h0m0 3h0m0 4h0m0 3h0m0 4h0m0 10h0m0 2h0m1-79h0m0 5h0m0 4h0m0 6h0m0 8h0m0 4h0m0 4h0m0 1h0m0 2h0m0 2h0m0 11h0m0 3h0m0 2h0m0 2h0m0 1h0m0 1h0m0 1h0m0 2h0m0 6h0m0 5h0m1-98h0m0 7h0m0 7h0m0 2h0m0 2h0m0 9h0m0 2h0m0 5h0m0 5h0m0 1h0m0 3h0m0 5h0m0 5h0m0 3h0m0 3h0m0 4h0m0 2h0m0 4h0m0 3h0m0 5h0m0 2h0m0 5h0m0 7h0m0 1h0m1-97h0m0 1h0m0 5h0m0 2h0m0 2h0m0 2h0m0 1h0m0 3h0m0 1h0m0 2h0m0 4h0m0 1h0m0 5h0m0 2h0m0 2h0m0 1h0m0 2h0m0 4h0m0 2h0m0 7h0m0 8h0m0 5h0m1-36h0m0 2h0m0 3h0m0 13h0m0 6h0m0 3h0m0 3h0m0 1h0m0 4h0m0 2h0m0 3h0m0 1h0m0 4h0m0 2h0m0 3h0m0 3h0m0 1h0m0 3h0m0 2h0m0 12h0m1-75h0m0 14h0m0 2h0m0 8h0m0 4h0m0 5h0m0 2h0m0 1h0m0 14h0m0 2h0m0 3h0m0 9h0m0 2h0m1-56h0m0 2h0m0 6h0m0 3h0m0 3h0m0 2h0m0 13h0m0 5h0m0 1h0m0 2h0m0 3h0m0 2h0m0 1h0m0 1h0m0 8h0m1-72h0m0 22h0m0 3h0m0 5h0m0 5h0m0 2h0m0 3h0m0 1h0m0 4h0m0 1h0m0 2h0m0 3h0m0 2h0m0 1h0m0 3h0m0 5h0m0 4h0m0 4h0m0 12h0m1-92h0m0 6h0m0 1h0m0 1h0m0 2h0m0 1h0m0 1h0m0 4h0m0 2h0m0 4h0m0 2h0m0 3h0m0 1h0m0 1h0m0 1h0m0 4h0m0 4h0m0 3h0m0 8h0m0 1h0m1-51h0m0 11h0m0 10h0m0 2h0m0 10h0m0 4h0m0 1h0m0 4h0m0 2h0m0 1h0m0 2h0m0 8h0m0 4h0m0 9h0m0 2h0m0 5h0m0 1h0m0 3h0m0 6h0m0 7h0m1-71h0m0 31h0m0 7h0m0 2h0m0 1h0m0 2h0m0 3h0m0 4h0m0 2h0m0 7h0m0 3h0m0 2h0m0 6h0m0 4h0m0 8h0m0 8h0m1-88h0m0 24h0m0 2h0m0 4h0m0 2h0m0 3h0m0 2h0m0 1h0m0 3h0m0 23h0m0 2h0m0 3h0m0 4h0m0 3h0m0 2h0m1-73h0m0 15h0m0 5h0m0 1h0m0 4h0m0 1h0m0 1h0m0 4h0m0 3h0m0 2h0m0 1h0m0 3h0m0 1h0m0 4h0m0 2h0m0 1h0m0 2h0m0 4h0m0 2h0m0 2h0m0 9h0m1-34h0m0 18h0m0 1h0m0 4h0m0 4h0m0 1h0m0 1h0m0 4h0m0 1h0m0 3h0m0 4h0" stroke="#000" stroke-width="3.6" stroke-linecap="round" fill="none"/>
<path d="M175.5 381.4l2.08 4.16h-4.16zM176.5 381.4l2.08 4.16h-4.16zM177.5 381.4l2.08 4.16h-4.16zM201.5 381.4l2.08 4.16h-4.16zM202.5 381.4l2.08 4.16h-4.16zM203.5 381.4l2.08 4.16h-4.16zM213.5 381.4l2.08 4.16h-4.16zM214.5 381.4l2.08 4.16h-4.16zM215.5 381.4l2.08 4.16h-4.16zM239.5 381.4l2.08 4.16h-4.16zM240.5 381.4l2.08 4.16h-4.16zM241.5 381.4l2.08 4.16h-4.16zM270.5 381.4l2.08 4.16h-4.16zM271.5 381.4l2.08 4.16h-4.16zM296.5 381.4l2.08 4.16h-4.16zM297.5 381.4l2.08 4.16h-4.16zM308.5 381.4l2.08 4.16h-4.16zM309.5 381.4l2.08 4.16h-4.16zM310.5 381.4l2.08 4.16h-4.16zM334.5 381.4l2.08 4.16h-4.16zM335.5 381.4l2.08 4.16h-4.16zM346.5 381.4l2.08 4.16h-4.16zM347.5 381.4l2.08 4.16h-4.16zM348.5 381.4l2.08 4.16h-4.16zM390.5 381.4l2.08 4.16h-4.16zM391.5 381.4l2.08 4.16h-4.16zM392.5 381.4l2.08 4.16h-4.16zM403.5 381.4l2.08 4.16h-4.16zM404.5 381.4l2.08 4.16h-4.16zM428.5 381.4l2.08 4.16h-4.16zM429.5 381.4l2.08 4.16h-4.16zM430.5 381.4l2.08 4.16h-4.16zM441.5 381.4l2.08 4.16h-4.16zM442.5 381.4l2.08 4.16h-4.16zM467.5 381.4l2.08 4.16h-4.16zM468.5 381.4l2.08 4.16h-4.16zM485.5 381.4l2.08 4.16h-4.16zM486.5 381.4l2.08 4.16h-4.16zM497.5 381.4l2.08 4.16h-4.16zM498.5 381.4l2.08 4.16h-4.16zM499.5 381.4l2.08 4.16h-4.16zM503.5 381.4l2.08 4.16h-4.16zM523.5 381.4l2.08 4.16h-4.16zM524.5 381.4l2.08 4.16h-4.16zM525.5 381.4l2.08 4.16h-4.16zM535.5 381.4l2.08 4.16h-4.16zM536.5 381.4l2.08 4.16h-4.16zM537.5 381.4l2.08 4.16h-4.16zM561.5 381.4l2.08 4.16h-4.16zM562.5 381.4l2.08 4.16h-4.16zM574.5 381.4l2.08 4.16h-4.16zM575.5 381.4l2.08 4.16h-4.16zM576.5 381.4l2.08 4.16h-4.16zM618.5 381.4l2.08 4.16h-4.16zM619.5 381.4l2.08 4.16h-4.16zM630.5 381.4l2.08 4.16h-4.16zM631.5 381.4l2.08 4.16h-4.16zM632.5 381.4l2.08 4.16h-4.16zM655.5 381.4l2.08 4.16h-4.16zM656.5 381.4l2.08 4.16h-4.16zM657.5 381.4l2.08 4.16h-4.16zM669.5 381.4l2.08 4.16h-4.16zM670.5 381.4l2.08 4.16h-4.16zM694.5 381.4l2.08 4.16h-4.16zM695.5 381.4l2.08 4.16h-4.16zM696.5 381.4l2.08 4.16h-4.16zM713.5 381.4l2.08 4.16h-4.16zM714.5 381.4l2.08 4.16h-4.16zM725.5 381.4l2.08 4.16h-4.16zM726.5 381.4l2.08 4.16h-4.16zM727.5 381.4l2.08 4.16h-4.16zM749.5 381.4l2.08 4.16h-4.16zM750.5 381.4l2.08 4.16h-4.16zM751.5 381.4l2.08 4.16h-4.16zM762.5 381.4l2.08 4.16h-4.16zM763.5 381.4l2.08 4.16h-4.16zM764.5 381.4l2.08 4.16h-4.16zM789.5 381.4l2.08 4.16h-4.16zM790.5 381.4l2.08 4.16h-4.16zM820.5 381.4l2.08 4.16h-4.16zM821.5 381.4l2.08 4.16h-4.16zM846.5 381.4l2.08 4.16h-4.16zM847.5 381.4l2.08 4.16h-4.16zM858.5 381.4l2.08 4.16h-4.16zM859.5 381.4l2.08 4.16h-4.16zM884.5 381.4l2.08 4.16h-4.16zM885.5 381.4l2.08 4.16h-4.16zM897.5 381.4l2.08 4.16h-4.16zM940.5 381.4l2.08 4.16h-4.16zM941.5 381.4l2.08 4.16h-4.16zM952.5 381.4l2.08 4.16h-4.16zM953.5 381.4l2.08 4.16h-4.16zM954.5 381.4l2.08 4.16h-4.16zM978.5 381.4l2.08 4.16h-4.16zM979.5 381.4l2.08 4.16h-4.16zM980.5 381.4l2.08 4.16h-4.16zM991.5 381.4l2.08 4.16h-4.16zM992.5 381.4l2.08 4.16h-4.16zM1017.5 381.4l2.08 4.16h-4.16zM1018.5 381.4l2.08 4.16h-4.16zM1034.5 381.4l2.08 4.16h-4.16zM1035.5 381.4l2.08 4.16h-4.16zM1036.5 381.4l2.08 4.16h-4.16zM1048.5 381.4l2.08 4.16h-4.16zM1049.5 381.4l2.08 4.16h-4.16zM1073.5 381.4l2.08 4.16h-4.16zM1074.5 381.4l2.08 4.16h-4.16zM1075.5 381.4l2.08 4.16h-4.16zM1082.5 381.4l2.08 4.16h-4.16zM1085.5 381.4l2.08 4.16h-4.16zM1086.5 381.4l2.08 4.16h-4.16zM1087.5 381.4l2.08 4.16h-4.16zM1111.5 381.4l2.08 4.16h-4.16zM1112.5 381.4l2.08 4.16h-4.16zM1113.5 381.4l2.08 4.16h-4.16zM1142.5 381.4l2.08 4.16h-4.16zM1143.5 381.4l2.08 4.16h-4.16zM1144.5 381.4l2.08 4.16h-4.16zM1168.5 381.4l2.08 4.16h-4.16zM1169.5 381.4l2.08 4.16h-4.16zM1180.5 381.4l2.08 4.16h-4.16zM1181.5 381.4l2.08 4.16h-4.16zM1182.5 381.4l2.08 4.16h-4.16zM1206.5 381.4l2.08 4.16h-4.16zM1207.5 381.4l2.08 4.16h-4.16zM1218.5 381.4l2.08 4.16h-4.16zM1219.5 381.4l2.08 4.16h-4.16zM1220.5 381.4l2.08 4.16h-4.16zM1241.5 381.4l2.08 4.16h-4.16zM1262.5 381.4l2.08 4.16h-4.16zM1263.5 381.4l2.08 4.16h-4.16zM1264.5 381.4l2.08 4.16h-4.16zM1275.5 381.4l2.08 4.16h-4.16zM1276.5 381.4l2.08 4.16h-4.16zM1281.5 381.4l2.08 4.16h-4.16zM1301.5 381.4l2.08 4.16h-4.16zM1302.5 381.4l2.08 4.16h-4.16zM178.5 665.6l2.08 -4.16h-4.16zM192.5 665.6l2.08 -4.16h-4.16zM227.5 665.6l2.08 -4.16h-4.16zM252.5 665.6l2.08 -4.16h-4.16zM293.5 665.6l2.08 -4.16h-4.16zM302.5 665.6l2.08 -4.16h-4.16zM411.5 665.6l2.08 -4.16h-4.16zM475.5 665.6l2.08 -4.16h-4.16zM513.5 665.6l2.08 -4.16h-4.16zM567.5 665.6l2.08 -4.16h-4.16zM622.5 665.6l2.08 -4.16h-4.16zM667.5 665.6l2.08 -4.16h-4.16zM686.5 665.6l2.08 -4.16h-4.16zM719.5 665.6l2.08 -4.16h-4.16zM722.5 665.6l2.08 -4.16h-4.16zM734.5 665.6l2.08 -4.16h-4.16zM773.5 665.6l2.08 -4.16h-4.16zM794.5 665.6l2.08 -4.16h-4.16zM832.5 665.6l2.08 -4.16h-4.16zM838.5 665.6l2.08 -4.16h-4.16zM842.5 665.6l2.08 -4.16h-4.16zM852.5 665.6l2.08 -4.16h-4.16zM911.5 665.6l2.08 -4.16h-4.16zM952.5 665.6l2.08 -4.16h-4.16zM962.5 665.6l2.08 -4.16h-4.16zM984.5 665.6l2.08 -4.16h-4.16zM1010.5 665.6l2.08 -4.16h-4.16zM1038.5 665.6l2.08 -4.16h-4.16zM1048.5 665.6l2.08 -4.16h-4.16zM1114.5 665.6l2.08 -4.16h-4.16zM1134.5 665.6l2.08 -4.16h-4.16zM1144.5 665.6l2.08 -4.16h-4.16zM1166.5 665.6l2.08 -4.16h-4.16zM1168.5 665.6l2.08 -4.16h-4.16zM1261.5 665.6l2.08 -4.16h-4.16z" fill="#ffa500" stroke="#ffa500" stroke-width="1.25" stroke-linejoin="miter"/>
<rect x="162.5" y="487.9" width="1140.5" height="62.3" fill="#ffa500" fill-opacity="0.1"/>
<rect x="105.5" y="499.3" width="1255.5" height="48.2" fill="#f00" fill-opacity="0.1" stroke="#f00" stroke-opacity="0.1" stroke-width="1"/>
<path d="M161.1 519.5H1304.4" stroke="#ffa500" stroke-width="2.78"/>
<path d="M105.5 522.9H1361" stroke="#f00" stroke-width="2.08"/>
<path d="M162.0 666.5V380.5" stroke="#800080" stroke-width="2.08" stroke-dasharray="2.08 3.44" fill="none"/><path d="M1302.9 666.5V380.5" stroke="#800080" stroke-width="2.08" stroke-dasharray="2.08 3.44" fill="none"/>
</g>
<rect x="105.5" y="380.5" width="1380.0" height="286.0" fill="none" stroke="#000" stroke-width="1.11"/>
<path d="M162.5 666.5v4.86" stroke="#000" stroke-width="1.11"/><text x="163.10" y="687.00" font-size="13.70" text-anchor="middle">0</text><path d="M356.5 666.5v4.86" stroke="#000" stroke-width="1.11"/><text x="356.63" y="687.00" font-size="13.70" text-anchor="middle">5000</text><path d="M551.5 666.5v4.86" stroke="#000" stroke-width="1.11"/><text x="550.97" y="687.00" font-size="13.70" text-anchor="middle">10000</text><path d="M745.5 666.5v4.86" stroke="#000" stroke-width="1.11"/><text x="745.30" y="687.00" font-size="13.70" text-anchor="middle">15000</text><path d="M939.5 666.5v4.86" stroke="#000" stroke-width="1.11"/><text x="939.63" y="687.00" font-size="13.70" text-anchor="middle">20000</text><path d="M1134.5 666.5v4.86" stroke="#000" stroke-width="1.11"/><text x="1133.97" y="687.00" font-size="13.70" text-anchor="middle">25000</text><path d="M1328.5 666.5v4.86" stroke="#000" stroke-width="1.11"/><text x="1328.30" y="687.00" font-size="13.70" text-anchor="middle">30000</text>
<path d="M105.5 637.50h-4.86" stroke="#000" stroke-width="1.11"/>
<text x="95.30" y="642.60" font-size="13.70" text-anchor="end">10.00</text>
<path d="M105.5 586.50h-4.86" stroke="#000" stroke-width="1.11"/>
<text x="95.30" y="591.60" font-size="13.70" text-anchor="end">10.05</text>
<path d="M105.5 535.50h-4.86" stroke="#000" stroke-width="1.11"/>
<text x="95.30" y="540.60" font-size="13.70" text-anchor="end">10.10</text>
<path d="M105.5 485.50h-4.86" stroke="#000" stroke-width="1.11"/>
<text x="95.30" y="490.60" font-size="13.70" text-anchor="end">10.15</text>
<path d="M105.5 434.50h-4.86" stroke="#000" stroke-width="1.11"/>
<text x="95.30" y="439.60" font-size="13.70" text-anchor="end">10.20</text>
<path d="M105.5 384.50h-4.86" stroke="#000" stroke-width="1.11"/>
<text x="95.30" y="389.60" font-size="13.70" text-anchor="end">10.25</text>
<text x="795.10" y="371.60" font-size="16.67" text-anchor="middle">Magnitude Estimates</text>
<text x="732.40" y="656.90" font-size="13.70" text-anchor="middle">7063</text>
<rect x="1365.4" y="387.5" width="113.3" height="48.0" rx="2.8" fill="#fff" fill-opacity="0.8" stroke="#ccc" stroke-width="1.11"/>
<path d="M1369.0 399.5H1399.6" stroke="#ffa500" stroke-width="2.78"/>
<path d="M1369.3 421.9H1399.3" stroke="#f00" stroke-width="2.08"/>
<text x="1409.7" y="403.8" font-size="13.70">mag<tspan font-size="9.72" font-style="italic" dy="2.3" letter-spacing="0.3">OBSID</tspan></text>
<text x="1409.00" y="426.70" font-size="13.70" text-anchor="start">mag</text>
<rect x="1348.3" y="613.3" width="130.4" height="46.2" rx="2.8" fill="#fff" fill-opacity="0.8" stroke="#ccc" stroke-width="1.11"/>
<circle cx="1367.7" cy="626.4" r="1.75" fill="#ffa500"/>
<text x="1393.00" y="629.90" font-size="13.70" text-anchor="start">Highlighted</text>
<circle cx="1367.7" cy="647.4" r="1.75" fill="#000"/>
<text x="1393.00" y="650.90" font-size="13.70" text-anchor="start">OK</text>
<g clip-path="url(#c3)">
<path d="M177.0 856.6h2.8M181.0 856.6h2.8M191.0 856.6h2.8M201.0 856.6h2.8M226.0 856.6h2.8M235.0 856.6h2.8M251.0 856.6h2.8M270.0 856.6h2.8M275.0 856.6h2.8M292.0 856.6h2.8M296.0 856.6h2.8M301.0 856.6h2.8M326.6 856.6h2.8M328.6 856.6h2.8M391.0 856.6h2.8M409.0 856.6h2.8M434.0 856.6h2.8M474.0 856.6h2.8M485.0 856.6h2.8M498.0 856.6h2.8M503.0 856.6h2.8M512.0 856.6h2.8M566.0 856.6h2.8M592.0 856.6h2.8M618.0 856.6h2.8M620.6 856.6h2.8M627.0 856.6h2.8M657.0 856.6h2.8M667.0 856.6h2.8M685.0 856.6h2.8M713.0 856.6h2.8M718.6 856.6h2.8M721.0 856.6h2.8M733.0 856.6h2.8M749.0 856.6h2.8M758.0 856.6h2.8M772.0 856.6h2.8M789.0 856.6h2.8M793.0 856.6h2.8M820.0 856.6h2.8M831.0 856.6h2.8M837.0 856.6h2.8M841.0 856.6h2.8M851.0 856.6h2.8M910.0 856.6h2.8M932.0 856.6h2.8M951.0 856.6h2.8M953.0 856.6h2.8M961.0 856.6h2.8M983.0 856.6h2.8M1009.0 856.6h2.8M1013.0 856.6h2.8M1037.0 856.6h2.8M1047.0 856.6h2.8M1073.0 856.6h2.8M1081.0 856.6h2.8M1107.0 856.6h2.8M1113.0 856.6h2.8M1133.0 856.6h2.8M1142.6 856.6h2.8M1147.0 856.6h2.8M1165.0 856.6h2.8M1167.0 856.6h2.8M1206.0 856.6h2.8M1241.0 856.6h2.8M1260.0 856.6h2.8M1262.6 856.6h2.8M177.0 889.3h2.8M181.0 889.3h2.8M191.0 889.3h2.8M201.0 889.3h2.8M226.0 889.3h2.8M235.0 889.3h2.8M251.0 889.3h2.8M270.0 889.3h2.8M275.0 889.3h2.8M292.0 889.3h2.8M296.0 889.3h2.8M301.0 889.3h2.8M326.6 889.3h2.8M328.6 889.3h2.8M391.0 889.3h2.8M409.0 889.3h2.8M434.0 889.3h2.8M474.0 889.3h2.8M485.0 889.3h2.8M498.0 889.3h2.8M503.0 889.3h2.8M512.0 889.3h2.8M566.0 889.3h2.8M592.0 889.3h2.8M618.0 889.3h2.8M620.6 889.3h2.8M627.0 889.3h2.8M657.0 889.3h2.8M667.0 889.3h2.8M685.0 889.3h2.8M713.0 889.3h2.8M718.6 889.3h2.8M721.0 889.3h2.8M733.0 889.3h2.8M749.0 889.3h2.8M758.0 889.3h2.8M772.0 889.3h2.8M789.0 889.3h2.8M793.0 889.3h2.8M820.0 889.3h2.8M831.0 889.3h2.8M837.0 889.3h2.8M841.0 889.3h2.8M851.0 889.3h2.8M910.0 889.3h2.8M932.0 889.3h2.8M951.0 889.3h2.8M953.0 889.3h2.8M961.0 889.3h2.8M983.0 889.3h2.8M1009.0 889.3h2.8M1013.0 889.3h2.8M1037.0 889.3h2.8M1047.0 889.3h2.8M1073.0 889.3h2.8M1081.0 889.3h2.8M1107.0 889.3h2.8M1113.0 889.3h2.8M1133.0 889.3h2.8M1142.6 889.3h2.8M1147.0 889.3h2.8M1165.0 889.3h2.8M1167.0 889.3h2.8M1206.0 889.3h2.8M1241.0 889.3h2.8M1260.0 889.3h2.8M1262.6 889.3h2.8M953.1 791.4h2.8" stroke="#000" stroke-width="2.8" fill="none"/>
<path d="M105.5 758.5H1485.5" stroke="#b0b0b0" stroke-width="1.11" stroke-dasharray="1.11 1.83"/>
<path d="M105.5 791.5H1485.5" stroke="#b0b0b0" stroke-width="1.11" stroke-dasharray="1.11 1.83"/>
<path d="M105.5 823.5H1485.5" stroke="#b0b0b0" stroke-width="1.11" stroke-dasharray="1.11 1.83"/>
<path d="M105.5 856.5H1485.5" stroke="#b0b0b0" stroke-width="1.11" stroke-dasharray="1.11 1.83"/>
<path d="M105.5 889.5H1485.5" stroke="#b0b0b0" stroke-width="1.11" stroke-dasharray="1.11 1.83"/>
<path d="M105.5 921.5H1485.5" stroke="#b0b0b0" stroke-width="1.11" stroke-dasharray="1.11 1.83"/>
<path d="M162.0 954.4V725.5" stroke="#800080" stroke-width="2.08" stroke-dasharray="2.08 3.44" fill="none"/><path d="M1302.9 954.4V725.5" stroke="#800080" stroke-width="2.08" stroke-dasharray="2.08 3.44" fill="none"/>
</g>
<g clip-path="url(#c4)">
<path transform="translate(.5 .5)" d="M162 1005h0m0 1h0m0 1h0m1-1h0m0 1h0m0 1h0m1-4h0m0 1h0m1 2h0m0 1h0m1-4h0m0 2h0m0 1h0m0 1h0m1-5h0m0 1h0m0 2h0m0 2h0m1-6h0m0 1h0m0 5h0m1-5h0m0 2h0m0 1h0m0 2h0m1-4h0m0 3h0m1-4h0m0 4h0m0 1h0m1-4h0m0 1h0m1-2h0m0 3h0m0 2h0m1-4h0m0 3h0m0 1h0m1-5h0m0 2h0m1-3h0m0 1h0m0 3h0m0 2h0m1-4h0m0 3h0m0 1h0m1-7h0m0 2h0m0 2h0m1-4h0m0 6h0m1-5h0m0 2h0m0 2h0m1 0h0m0 1h0m1-5h0m0 1h0m0 2h0m0 3h0m1-6h0m0 2h0m0 2h0m0 1h0m1-4h0m0 4h0m0 1h0m1-4h0m0 2h0m1-4h0m0 3h0m0 3h0m1-6h0m0 2h0m0 3h0m1-5h0m0 4h0m0 2h0m1-5h0m0 1h0m0 1h0m0 3h0m1-6h0m0 5h0m0 1h0m1-7h0m0 1h0m0 1h0m0 2h0m1 2h0m0 1h0m1-6h0m0 2h0m1-1h0m0 2h0m0 2h0m0 1h0m1-3h0m0 2h0m1 0h0m0 1h0m1-6h0m0 1h0m0 2h0m1 2h0m1-3h0m0 1h0m0 1h0m0 1h0m0 1h0m1-7h0m0 1h0m0 2h0m1-1h0m0 2h0m0 1h0m0 2h0m1-5h0m0 1h0m1 1h0m0 1h0m0 2h0m1-5h0m0 1h0m1-1h0m0 2h0m0 1h0m0 1h0m1-7h0m0 1h0m0 2h0m1-4h0m0 1h0m0 2h0m0 1h0m0 1h0m0 1h0m0 1h0m0 1h0m1-8h0m0 2h0m0 4h0m0 1h0m0 2h0m1-9h0m0 4h0m0 3h0m0 1h0m1-6h0m0 4h0m0 1h0m0 1h0m1-5h0m0 3h0m0 2h0m1-3h0m0 2h0m0 2h0m1-6h0m0 1h0m0 5h0m1-4h0m0 1h0m0 2h0m1-3h0m0 4h0m1-3h0m0 1h0m0 1h0m1-2h0m0 3h0m1-3h0m0 2h0m0 1h0m1-3h0m0 1h0m0 2h0m1-2h0m0 1h0m1-2h0m0 1h0m0 1h0m0 1h0m1-3h0m0 2h0m0 1h0m1-4h0m0 1h0m0 3h0m1-5h0m0 2h0m0 1h0m1-5h0m0 1h0m0 3h0m0 2h0m0 1h0m1-8h0m0 1h0m1 1h0m0 1h0m0 1h0m0 1h0m0 3h0m1-4h0m0 3h0m1-5h0m0 1h0m0 4h0m0 1h0m1-4h0m0 2h0m0 1h0m0 1h0m1-3h0m0 2h0m0 1h0m1-2h0m1-2h0m0 1h0m0 2h0m0 1h0m1-2h0m0 2h0m1-4h0m0 2h0m0 1h0m1-4h0m0 4h0m0 1h0m1-6h0m0 1h0m0 2h0m1-3h0m0 2h0m0 4h0m1-6h0m0 4h0m0 1h0m0 1h0m1-5h0m0 1h0m1 0h0m0 1h0m0 3h0m1-3h0m0 2h0m1-3h0m0 3h0m1-4h0m0 1h0m1 0h0m0 1h0m0 2h0m0 1h0m1-3h0m0 3h0m1-5h0m0 1h0m0 3h0m1-4h0m0 1h0m0 2h0m0 1h0m0 1h0m1-4h0m1 1h0m0 1h0m0 2h0m1 0h0m1-6h0m0 1h0m0 2h0m0 3h0m1-7h0m0 1h0m0 3h0m0 1h0m0 1h0m0 1h0m1-7h0m0 2h0m0 2h0m0 1h0m1-3h0m0 4h0m1-7h0m0 4h0m0 1h0m0 1h0m0 1h0m1-7h0m0 2h0m0 1h0m0 2h0m0 1h0m0 2h0m1-7h0m0 1h0m0 1h0m0 1h0m1 1h0m0 2h0m1-4h0m0 1h0m1 1h0m0 1h0m0 1h0m0 1h0m1-7h0m0 2h0m1 0h0m0 2h0m0 2h0m0 1h0m1-6h0m0 1h0m0 1h0m0 1h0m0 1h0m1-4h0m0 5h0m0 1h0m1-5h0m0 1h0m0 4h0m1-6h0m0 4h0m0 1h0m1-3h0m0 1h0m1-3h0m0 1h0m0 4h0m0 1h0m1-6h0m0 4h0m0 1h0m0 1h0m1-4h0m0 2h0m1-1h0m0 1h0m0 1h0m0 1h0m1-3h0m0 2h0m0 1h0m1-3h0m0 1h0m0 1h0m1-1h0m0 1h0m0 1h0m1-4h0m0 1h0m0 1h0m0 2h0m1-5h0m0 1h0m0 1h0m0 2h0m0 1h0m1-6h0m0 6h0m1-6h0m0 1h0m0 1h0m0 3h0m1-3h0m0 2h0m1-4h0m0 2h0m0 1h0m0 2h0m0 1h0m1-6h0m0 1h0m0 2h0m0 3h0m1-7h0m0 1h0m0 1h0m0 3h0m0 1h0m1-6h0m0 3h0m0 3h0m0 1h0m1-7h0m0 1h0m1 1h0m0 1h0m0 2h0m0 1h0m1-5h0m0 1h0m0 2h0m0 1h0m0 1h0m0 1h0m1-5h0m0 1h0m0 3h0m1-3h0m0 2h0m0 2h0m2-4h0m0 1h0m0 2h0m0 1h0m1-7h0m0 1h0m0 2h0m0 3h0m0 1h0m1-7h0m1 3h0m0 1h0m0 1h0m0 2h0m1-8h0m0 2h0m0 2h0m0 2h0m0 2h0m1-9h0m0 1h0m0 2h0m1 2h0m0 2h0m0 2h0m1-7h0m0 4h0m0 2h0m1-6h0m0 1h0m0 1h0m0 5h0m1-5h0m0 3h0m0 1h0m0 1h0m1-4h0m0 4h0m1-4h0m0 2h0m1-1h0m0 1h0m0 2h0m1-2h0m0 2h0m1-3h0m1 0h0m0 2h0m0 1h0m1-2h0m0 2h0m1-3h0m0 2h0m1-2h0m0 1h0m0 2h0m1-4h0m1-1h0m0 2h0m0 2h0m0 1h0m1-2h0m0 2h0m1-5h0m0 4h0m1-3h0m0 1h0m0 2h0m0 1h0m1-3h0m0 2h0m1-3h0m0 3h0m0 1h0m1-3h0m0 1h0m0 1h0m0 1h0m1-5h0m1 0h0m0 3h0m0 1h0m0 1h0m1-6h0m0 2h0m0 1h0m0 2h0m0 1h0m1-1h0m1-5h0m0 1h0m0 1h0m0 4h0m1-4h0m0 1h0m0 1h0m0 2h0m1 0h0m1-3h0m1 0h0m0 2h0m0 1h0m1-3h0m0 2h0m0 1h0m1-2h0m0 1h0m1-2h0m0 1h0m0 2h0m1-2h0m0 1h0m0 1h0m1-3h0m0 2h0m0 1h0m1-2h0m0 2h0m1-3h0m0 2h0m1-2h0m0 2h0m0 1h0m1-4h0m1-1h0m0 1h0m0 2h0m0 2h0m1-6h0m0 2h0m0 1h0m0 3h0m1-7h0m0 2h0m1 3h0m0 1h0m1-7h0m0 1h0m0 1h0m0 2h0m0 1h0m0 2h0m1-6h0m0 7h0m1-6h0m0 1h0m0 1h0m0 2h0m0 1h0m1 0h0m0 1h0m1-6h0m0 1h0m0 2h0m1-3h0m0 3h0m0 1h0m0 1h0m0 1h0m1-4h0m0 1h0m0 2h0m1-1h0m0 2h0m1-5h0m0 1h0m0 3h0m1-3h0m0 4h0m1-3h0m0 2h0m1-3h0m0 4h0m1-2h0m0 1h0m1-2h0m0 3h0m1-4h0m0 1h0m0 2h0m1-3h0m0 1h0m0 3h0m1 0h0m1-6h0m0 1h0m0 2h0m0 1h0m0 2h0m1-5h0m0 1h0m0 3h0m0 1h0m1-6h0m0 2h0m0 1h0m1-4h0m0 1h0m0 1h0m0 2h0m0 2h0m0 1h0m1-6h0m0 4h0m0 1h0m0 1h0m1-6h0m0 2h0m0 2h0m1-4h0m0 1h0m0 5h0m1-5h0m0 3h0m0 1h0m1-2h0m1-2h0m0 5h0m1-6h0m0 2h0m0 2h0m0 1h0m1-6h0m0 7h0m1-8h0m0 3h0m0 1h0m0 2h0m0 2h0m1-7h0m0 3h0m0 3h0m1-7h0m0 3h0m0 4h0m0 1h0m1-7h0m0 4h0m0 2h0m1-8h0m0 3h0m0 2h0m0 1h0m0 2h0m0 1h0m1-9h0m0 2h0m0 3h0m1-5h0m0 1h0m0 3h0m0 3h0m0 1h0m0 1h0m1-8h0m0 1h0m0 1h0m0 2h0m1-2h0m0 1h0m0 4h0m0 1h0m1-4h0m0 2h0m1-5h0m0 4h0m0 2h0m1-5h0m0 2h0m0 2h0m0 2h0m1-6h0m0 1h0m0 2h0m0 3h0m1-6h0m0 3h0m0 3h0m1-6h0m0 1h0m0 3h0m0 2h0m1-3h0m0 1h0m1-7h0m0 1h0m0 2h0m0 1h0m0 4h0m1-8h0m0 1h0m0 3h0m0 3h0m0 2h0m1-7h0m0 3h0m1 2h0m0 1h0m0 1h0m1-7h0m0 1h0m0 2h0m1 0h0m0 2h0m0 1h0m0 1h0m1-6h0m0 1h0m0 2h0m1 1h0m0 1h0m0 1h0m1-3h0m0 2h0m1-2h0m0 3h0m1-2h0m0 2h0m1-3h0m0 1h0m0 2h0m1 0h0m1-3h0m1 0h0m0 2h0m0 1h0m1 0h0m1-3h0m0 1h0m0 1h0m1-4h0m0 2h0m0 3h0m1-6h0m0 1h0m0 3h0m0 2h0m1-7h0m0 4h0m0 1h0m1-4h0m0 1h0m0 2h0m0 2h0m0 1h0m1-5h0m0 1h0m1 1h0m0 3h0m1-6h0m0 2h0m0 1h0m0 1h0m0 1h0m0 1h0m1-8h0m0 1h0m0 4h0m1-6h0m0 1h0m0 3h0m0 4h0m0 1h0m1-9h0m0 5h0m0 2h0m1-7h0m0 1h0m0 1h0m0 2h0m0 2h0m0 2h0m0 1h0m1-5h0m0 1h0m0 4h0m1-9h0m0 1h0m0 1h0m0 4h0m1-5h0m0 2h0m0 3h0m0 2h0m0 1h0m1-7h0m0 2h0m0 4h0m1-4h0m0 1h0m0 1h0m0 2h0m0 1h0m1-6h0m0 1h0m0 2h0m0 1h0m0 2h0m1-4h0m0 1h0m0 2h0m1-4h0m0 2h0m0 3h0m1-6h0m0 1h0m1-2h0m0 1h0m0 4h0m0 1h0m0 1h0m1-8h0m0 3h0m0 2h0m1-5h0m0 2h0m0 1h0m0 4h0m1-4h0m0 2h0m0 1h0m0 1h0m0 1h0m1-6h0m0 1h0m0 1h0m0 4h0m1-3h0m0 3h0m1-4h0m0 2h0m0 2h0m1-4h0m0 1h0m0 2h0m1-5h0m0 1h0m0 4h0m0 1h0m1-6h0m0 2h0m0 3h0m0 1h0m1-5h0m0 1h0m0 1h0m1 0h0m0 1h0m0 2h0m2-4h0m0 3h0m0 1h0m1-5h0m0 1h0m0 1h0m0 3h0m1-7h0m0 2h0m0 5h0m1-8h0m0 1h0m0 2h0m0 2h0m0 1h0m1 2h0m1-7h0m0 1h0m0 2h0m0 3h0m1-6h0m0 1h0m0 1h0m0 2h0m0 1h0m0 2h0m1-4h0m0 4h0m1-6h0m0 2h0m0 2h0m0 1h0m1-5h0m0 3h0m1-2h0m0 1h0m0 3h0m0 1h0m1-4h0m0 1h0m0 1h0m0 1h0m0 1h0m2-4h0m0 2h0m0 2h0m1-7h0m0 1h0m0 2h0m0 3h0m1-6h0m0 2h0m0 4h0m0 1h0m1-5h0m0 2h0m0 2h0m1-6h0m0 3h0m0 1h0m0 3h0m1-8h0m0 1h0m0 1h0m0 1h0m0 4h0m1-7h0m0 3h0m0 1h0m0 2h0m0 2h0m1-7h0m0 2h0m0 5h0m1-8h0m0 1h0m0 5h0m1-6h0m0 1h0m0 3h0m0 4h0m1-9h0m0 4h0m0 2h0m0 2h0m0 1h0m1-8h0m0 1h0m1 3h0m0 3h0m1-5h0m0 2h0m0 1h0m1 0h0m0 1h0m0 2h0m1-7h0m0 3h0m0 3h0m1-5h0m0 2h0m0 3h0m0 1h0m1-7h0m0 1h0m0 3h0m0 3h0m1-5h0m0 1h0m1-3h0m0 5h0m0 1h0m1-4h0m0 1h0m0 2h0m0 1h0m1-4h0m0 2h0m0 3h0m1-4h0m0 2h0m0 1h0m0 1h0m1-6h0m0 1h0m0 1h0m0 1h0m1-6h0m0 1h0m0 2h0m0 5h0m0 1h0m1-9h0m0 2h0m0 3h0m0 3h0m0 1h0m1-6h0m0 1h0m0 1h0m0 2h0m0 1h0m0 1h0m1-8h0m0 2h0m0 3h0m1-5h0m0 1h0m0 2h0m0 4h0m0 1h0m1-7h0m0 4h0m0 3h0m1-5h0m0 3h0m0 2h0m1-7h0m0 2h0m1-1h0m0 1h0m0 2h0m0 1h0m0 1h0m0 1h0m1-6h0m0 1h0m0 1h0m0 4h0m1-3h0m0 1h0m0 1h0m0 1h0m1-2h0m0 1h0m0 1h0m1-5h0m0 1h0m1-2h0m0 4h0m0 2h0m1-3h0m0 2h0m0 1h0m1-5h0m0 1h0m0 2h0m0 2h0m1-4h0m0 2h0m1-2h0m0 4h0m1-6h0m0 3h0m0 2h0m0 1h0m1-3h0m0 1h0m1-3h0m0 3h0m0 2h0m1-4h0m0 4h0m1-5h0m0 2h0m0 2h0m0 1h0m1-5h0m0 2h0m1-1h0m0 2h0m0 2h0m1-6h0m0 1h0m1 0h0m0 3h0m0 2h0m1-6h0m0 3h0m0 1h0m0 2h0m1-4h0m0 1h0m0 1h0m0 1h0m1-5h0m0 1h0m0 5h0m1-6h0m0 1h0m0 2h0m0 2h0m1-5h0m0 4h0m1-2h0m0 2h0m0 1h0m0 1h0m1-4h0m0 2h0m0 2h0m2-3h0m0 2h0m0 1h0m1-6h0m0 1h0m0 1h0m1-2h0m0 3h0m0 1h0m0 1h0m1-6h0m0 2h0m0 2h0m0 2h0m1-6h0m0 4h0m0 3h0m1-5h0m0 1h0m0 2h0m0 2h0m1-6h0m0 2h0m0 3h0m0 1h0m1-7h0m0 3h0m0 2h0m1-3h0m0 3h0m0 2h0m1-7h0m0 3h0m0 2h0m0 2h0m1-8h0m0 2h0m0 3h0m0 2h0m0 1h0m1-9h0m0 1h0m0 2h0m0 1h0m0 2h0m1-6h0m0 1h0m0 5h0m0 2h0m0 1h0m1-7h0m0 2h0m0 3h0m0 2h0m1-9h0m0 1h0m0 3h0m0 1h0m0 3h0m0 1h0m1-9h0m0 4h0m1-3h0m0 1h0m0 3h0m0 1h0m0 2h0m1-7h0m0 2h0m0 1h0m0 3h0m0 2h0m1-8h0m0 6h0m1-5h0m0 2h0m0 1h0m0 2h0m0 2h0m1-4h0m0 1h0m1-3h0m0 5h0m0 1h0m1-5h0m0 2h0m1-4h0m0 4h0m0 1h0m0 1h0m0 1h0m1-6h0m0 1h0m0 1h0m0 4h0m1-5h0m0 1h0m0 1h0m1-1h0m0 1h0m0 2h0m1-5h0m0 3h0m1-4h0m0 3h0m0 2h0m0 1h0m0 1h0m1-7h0m0 3h0m0 1h0m0 1h0m1-4h0m0 5h0m0 1h0m1-6h0m0 2h0m0 2h0m1-3h0m0 1h0m0 4h0m1-4h0m0 1h0m0 1h0m0 2h0m1-6h0m0 1h0m0 4h0m0 1h0m1-6h0m0 1h0m0 2h0m0 1h0m1-2h0m0 4h0m1-6h0m0 3h0m0 1h0m0 2h0m1-5h0m0 5h0m1-4h0m0 2h0m0 1h0m0 1h0m1-5h0m1-1h0m0 1h0m0 1h0m0 2h0m0 2h0m1-6h0m0 4h0m0 1h0m0 1h0m1-8h0m0 1h0m0 1h0m0 1h0m0 1h0m0 3h0m1-5h0m0 2h0m0 1h0m0 2h0m0 1h0m1-4h0m0 1h0m0 2h0m0 1h0m1-6h0m0 1h0m1-1h0m0 3h0m0 2h0m0 1h0m1-6h0m0 1h0m1-2h0m0 5h0m0 1h0m1-6h0m0 2h0m0 1h0m1-4h0m0 1h0m0 4h0m0 1h0m0 2h0m1-9h0m0 1h0m0 1h0m0 1h0m0 2h0m1-2h0m0 3h0m0 2h0m0 1h0m1-7h0m0 1h0m0 2h0m1-4h0m0 4h0m0 3h0m0 1h0m1-6h0m0 2h0m0 1h0m1-6h0m0 1h0m0 1h0m0 1h0m0 3h0m0 2h0m1-8h0m0 2h0m0 2h0m0 1h0m1-5h0m0 1h0m0 1h0m0 2h0m0 3h0m0 1h0m1-5h0m0 2h0m0 2h0m0 1h0m0 1h0m1-7h0m0 1h0m0 2h0m0 1h0m1-2h0m0 1h0m0 3h0m0 1h0m1-3h0m0 1h0m0 1h0m0 1h0m1-5h0m0 1h0m1 1h0m0 2h0m0 1h0m1-5h0m0 1h0m1-2h0m0 5h0m0 1h0m1-4h0m0 1h0m0 2h0m0 1h0m1-6h0m0 2h0m0 3h0m1-6h0m0 1h0m0 1h0m0 3h0m0 2h0m1-8h0m0 2h0m0 5h0m0 1h0m1-8h0m0 1h0m0 1h0m0 1h0m0 2h0m0 1h0m0 1h0m1-5h0m0 6h0m1-8h0m0 4h0m0 1h0m0 2h0m1-5h0m0 3h0m0 1h0m0 2h0m1-9h0m0 1h0m0 4h0m0 3h0m1-8h0m0 1h0m0 1h0m0 4h0m0 3h0m1-8h0m0 2h0m0 1h0m1-2h0m0 5h0m0 1h0m0 1h0m1-4h0m1-1h0m0 1h0m0 3h0m0 1h0m1-2h0m1-3h0m0 1h0m0 2h0m0 1h0m0 1h0m1-6h0m0 3h0m0 2h0m1-4h0m0 2h0m0 1h0m0 2h0m1-4h0m0 4h0m1-2h0m1-3h0m0 1h0m0 4h0m1-5h0m0 1h0m0 3h0m0 1h0m1-3h0m1 0h0m0 1h0m0 2h0m1-3h0m0 1h0m0 1h0m0 1h0m2-4h0m0 2h0m0 2h0m1-5h0m0 3h0m0 1h0m0 1h0m1-8h0m0 1h0m0 2h0m0 2h0m1-1h0m0 2h0m0 2h0m1-8h0m0 1h0m0 1h0m0 3h0m1 0h0m0 1h0m0 1h0m0 1h0m1-8h0m0 1h0m0 1h0m0 2h0m1-2h0m0 2h0m0 2h0m0 2h0m1-7h0m0 1h0m1 2h0m0 1h0m0 1h0m0 1h0m0 1h0m1-5h0m0 2h0m1-3h0m0 3h0m0 1h0m0 1h0m0 1h0m1-5h0m0 4h0m0 1h0m1-7h0m0 1h0m0 2h0m0 4h0m1-8h0m0 1h0m0 3h0m0 1h0m0 2h0m1-8h0m0 2h0m0 2h0m0 1h0m0 3h0m0 1h0m1-4h0m0 2h0m1-6h0m0 1h0m0 1h0m0 5h0m0 1h0m1-8h0m0 2h0m0 1h0m0 2h0m0 1h0m0 1h0m0 1h0m1-7h0m0 1h0m0 4h0m1-4h0m0 1h0m0 1h0m0 3h0m0 1h0m1-4h0m0 1h0m0 3h0m1-2h0m0 2h0m1-3h0m0 1h0m1 1h0m0 1h0m1-3h0m0 1h0m0 2h0m1-4h0m0 3h0m1-2h0m0 1h0m0 1h0m0 1h0m1-3h0m1-1h0m0 3h0m0 1h0m1-3h0m0 3h0m1-5h0m0 5h0m1-6h0m0 3h0m0 1h0m1-3h0m0 4h0m0 1h0m1-4h0m0 4h0m1-6h0m0 1h0m0 1h0m0 2h0m0 1h0m1-8h0m0 1h0m0 1h0m0 2h0m0 2h0m0 2h0m0 1h0m1-2h0m1-7h0m0 2h0m0 1h0m0 1h0m0 2h0m0 2h0m0 1h0m1-9h0m0 4h0m0 2h0m1-6h0m0 2h0m0 1h0m0 6h0m1-9h0m0 1h0m0 4h0m0 1h0m0 2h0m1-5h0m0 2h0m0 1h0m0 3h0m1-8h0m0 3h0m0 1h0m1-2h0m0 3h0m0 2h0m0 1h0m1-6h0m0 1h0m0 5h0m1-6h0m0 1h0m0 1h0m0 1h0m0 2h0m0 1h0m1-1h0m1-5h0m0 2h0m0 2h0m0 2h0m1-4h0m0 2h0m0 1h0m1-4h0m0 3h0m0 2h0m1-4h0m0 1h0m1-3h0m0 2h0m0 3h0m0 1h0m1-7h0m0 1h0m0 3h0m0 2h0m0 1h0m1-3h0m1-4h0m0 2h0m0 1h0m0 2h0m0 1h0m0 1h0m1-3h0m0 2h0m0 1h0m1-6h0m0 2h0m0 2h0m0 2h0m1-3h0m0 1h0m0 1h0m1-5h0m0 1h0m0 5h0m1-6h0m0 1h0m0 3h0m0 1h0m1-3h0m0 2h0m0 2h0m1-3h0m1 1h0m0 1h0m0 1h0m1-3h0m0 3h0m1-3h0m0 2h0m0 1h0m1-4h0m0 1h0m1-3h0m0 1h0m0 1h0m0 2h0m0 1h0m0 1h0m1-6h0m0 2h0m1-3h0m0 2h0m0 3h0m0 1h0m0 1h0m1-9h0m0 1h0m0 1h0m0 2h0m1 2h0m0 1h0m1-7h0m0 1h0m0 1h0m0 3h0m0 1h0m0 2h0m0 1h0m1-9h0m0 1h0m0 2h0m0 2h0m0 3h0m1-7h0m0 1h0m0 2h0m0 2h0m0 1h0m0 2h0m1-6h0m0 3h0m0 1h0m0 1h0m1-3h0m0 3h0m0 1h0m1-5h0m0 5h0m1-6h0m0 3h0m0 1h0m0 1h0m1-4h0m0 2h0m0 3h0m1-6h0m0 1h0m0 3h0m0 1h0m0 1h0m1-7h0m0 1h0m0 6h0m1-8h0m0 2h0m0 2h0m0 1h0m0 2h0m1-4h0m0 4h0m1-7h0m0 1h0m0 5h0m0 1h0m1-6h0m0 2h0m0 1h0m1 2h0m0 2h0m1-6h0m0 1h0m0 1h0m0 1h0m0 2h0m1-4h0m0 5h0m1-6h0m0 2h0m0 1h0m0 1h0m1-4h0m0 1h0m0 1h0m0 1h0m0 3h0m1-6h0m0 4h0m1-2h0m0 3h0m0 1h0m1-6h0m0 3h0m0 1h0m1-3h0m0 2h0m0 3h0m1-6h0m1 1h0m0 2h0m0 2h0m0 1h0m1-5h0m0 2h0m0 3h0m1 0h0m1-3h0m0 1h0m0 1h0m1-2h0m0 3h0m1-3h0m0 3h0m1-4h0m0 3h0m0 1h0m1-6h0m0 2h0m0 1h0m0 2h0m1-3h0m0 4h0m1-4h0m0 2h0m0 1h0m0 1h0m1-2h0m1-3h0m0 1h0m0 3h0m0 1h0m1-5h0m0 1h0m1 2h0m0 1h0m0 1h0m1-3h0m0 1h0m1-1h0m0 3h0m1-4h0m0 2h0m0 1h0m1-2h0m0 1h0m0 2h0m1-5h0m1-1h0m0 2h0m0 1h0m0 2h0m0 1h0m1-6h0m1 2h0m0 3h0m0 1h0m1-7h0m0 2h0m0 2h0m1-3h0m0 4h0m0 2h0m1-5h0m0 4h0m0 1h0m1-3h0m0 2h0m0 1h0m1-6h0m0 2h0m0 2h0m1-2h0m0 4h0m1-5h0m0 2h0m1-3h0m0 1h0m0 3h0m0 2h0m1-3h0m0 2h0m0 1h0m1-6h0m0 1h0m0 2h0m0 3h0m1-7h0m0 3h0m0 1h0m0 2h0m1-5h0m0 5h0m1-4h0m0 3h0m0 1h0m0 1h0m1-6h0m0 1h0m0 1h0m0 2h0m0 2h0m1-7h0m0 4h0m0 2h0m1-6h0m0 1h0m0 5h0m0 1h0m1-7h0m0 3h0m0 2h0m0 2h0m1-7h0m0 1h0m0 4h0m0 1h0m1-3h0m0 1h0m0 3h0m1 0h0m1-6h0m0 1h0m0 2h0m0 1h0m0 2h0m1-5h0m0 3h0m0 1h0m1-6h0m0 2h0m0 1h0m0 1h0m0 2h0m0 1h0m1 0h0m1-6h0m0 1h0m0 1h0m0 1h0m0 1h0m0 1h0m0 1h0m1-7h0m0 3h0m1-3h0m0 1h0m0 1h0m0 3h0m0 1h0m1-5h0m0 6h0m1-4h0m0 1h0m0 2h0m1-3h0m0 3h0m0 1h0m1-3h0m0 2h0m0 1h0m1-5h0m0 1h0m0 2h0m1-2h0m0 1h0m0 1h0m0 1h0m0 1h0m1-4h0m0 1h0m1 2h0m0 1h0m1-7h0m0 1h0m0 1h0m0 1h0m1 1h0m0 1h0m0 1h0m0 1h0m1-6h0m1 2h0m0 1h0m0 1h0m0 2h0m1-6h0m0 1h0m0 2h0m1-3h0m0 5h0m0 1h0m1-5h0m0 3h0m1-4h0m0 3h0m0 3h0m1-6h0m0 1h0m0 1h0m0 2h0m1-4h0m0 3h0m0 1h0m0 1h0m0 1h0m1-5h0m0 5h0m1-6h0m0 2h0m0 2h0m0 2h0m1-3h0m0 1h0m0 2h0m1-5h0m0 2h0m0 2h0m1-5h0m0 2h0m0 2h0m0 2h0m1-5h0m1-2h0m0 1h0m0 4h0m0 1h0m1-6h0m0 1h0m0 2h0m0 1h0m1-3h0m0 1h0m0 4h0m0 1h0m1-5h0m0 3h0m0 1h0m1-3h0m0 1h0m0 3h0m1-5h0m0 5h0m1-4h0m0 2h0m0 2h0m1-5h0m0 3h0m0 2h0m1-7h0m0 1h0m0 1h0m0 1h0m1-3h0m0 2h0m0 3h0m0 1h0m1-7h0m0 5h0m0 2h0m1-5h0m0 2h0m0 2h0m0 1h0m0 1h0m1-9h0m0 2h0m0 1h0m0 1h0m0 1h0m0 1h0m0 1h0m1-6h0m0 1h0m0 2h0m0 5h0m1-2h0m0 1h0m1-6h0m0 2h0m0 2h0m0 1h0m0 1h0m1-4h0m0 2h0m0 3h0m1-2h0m0 1h0m0 1h0m1-6h0m0 1h0m1-2h0m0 4h0m0 2h0m0 1h0m1-6h0m0 1h0m0 4h0m0 1h0m1-7h0m0 4h0m0 1h0m1-4h0m0 6h0m1-6h0m0 1h0m0 1h0m0 2h0m1-5h0m0 2h0m0 1h0m0 1h0m0 2h0m0 1h0m1-6h0m0 1h0m0 1h0m0 2h0m1 0h0m0 1h0m1-3h0m0 4h0m1-4h0m0 1h0m0 1h0m0 1h0m1-5h0m0 2h0m0 1h0m0 1h0m0 2h0m1-7h0m0 1h0m0 2h0m1 1h0m0 2h0m0 1h0m1-6h0m0 4h0m1-5h0m0 2h0m0 1h0m0 4h0m1-7h0m0 2h0m0 4h0m0 1h0m1-8h0m0 1h0m0 4h0m0 1h0m1-4h0m0 2h0m0 1h0m0 2h0m0 1h0m2-7h0m0 1h0m0 1h0m0 1h0m0 1h0m0 1h0m0 1h0m1-7h0m0 2h0m0 5h0m1-8h0m0 2h0m0 2h0m0 2h0m0 2h0m1-8h0m0 1h0m0 1h0m0 3h0m0 1h0m0 2h0m1-7h0m0 1h0m0 1h0m0 2h0m0 1h0m1-4h0m0 7h0m1-6h0m0 1h0m0 3h0m0 1h0m0 1h0m1-3h0m1-2h0m0 1h0m0 3h0m0 1h0m1-4h0m0 3h0m0 1h0m1-3h0m0 3h0m1-4h0m0 2h0m0 1h0m0 1h0m1-5h0m0 1h0m0 4h0m1-8h0m0 1h0m0 1h0m0 3h0m0 2h0m0 1h0m1-4h0m0 2h0m0 1h0m1-7h0m0 1h0m0 2h0m1 0h0m0 2h0m0 1h0m0 2h0m1-9h0m0 1h0m0 1h0m0 6h0m0 1h0m1-7h0m0 2h0m0 2h0m0 1h0m0 2h0m1-9h0m0 1h0m0 3h0m0 2h0m0 2h0m1-7h0m0 3h0m0 3h0m0 2h0m1-9h0m0 2h0m0 3h0m0 4h0m1-9h0m0 3h0m0 2h0m0 2h0m0 2h0m1-8h0m0 1h0m0 4h0m0 1h0m1-5h0m0 2h0m0 5h0m1-6h0m0 3h0m0 3h0m1-6h0m0 2h0m0 1h0m0 1h0m0 2h0m1-4h0m0 3h0m1-5h0m0 1h0m0 2h0m0 3h0m1-1h0m1-5h0m0 1h0m0 2h0m0 3h0m1-6h0m0 2h0m0 1h0m0 1h0m0 2h0m1-6h0m0 3h0m0 3h0m1-4h0m0 2h0m0 2h0m1-5h0m0 2h0m1-1h0m0 3h0m0 1h0m1-4h0m0 1h0m0 2h0m0 1h0m1-3h0m0 1h0m0 1h0m1-3h0m0 4h0m1-5h0m0 2h0m0 1h0m1-2h0m0 3h0m0 1h0m1-5h0m0 3h0m1-3h0m0 2h0m0 1h0m0 1h0m1-4h0m0 4h0m0 1h0m1-5h0m0 3h0m1-4h0m0 3h0m0 1h0m0 2h0m1-5h0m0 2h0m0 3h0m1-3h0m0 2h0m0 1h0m1-5h0m0 4h0m1-1h0m1-3h0m0 1h0m0 1h0m0 3h0m1-5h0m0 4h0m1-5h0m0 3h0m1 3h0m1-5h0m0 2h0m0 2h0m1-2h0m0 1h0m0 1h0m0 1h0m1-5h0m0 4h0m1-3h0m0 1h0m0 3h0m1-5h0m0 4h0m1-2h0m0 1h0m0 2h0m1-2h0m0 2h0m1-5h0m0 1h0m0 2h0m0 1h0m0 1h0m1-5h0m0 4h0m0 1h0m1-7h0m0 4h0m0 2h0m1-6h0m0 2h0m0 3h0m0 2h0m1-7h0m0 2h0m0 2h0m0 3h0m1-6h0m0 2h0m0 4h0m1-7h0m0 1h0m0 4h0m0 2h0m1-6h0m0 1h0m0 2h0m0 3h0m1-7h0m0 6h0m1-6h0m0 1h0m0 3h0m0 3h0m1-5h0m0 2h0m0 3h0m1-2h0m0 2h0m1-3h0m0 2h0m0 1h0m1-2h0m0 1h0m1-2h0m0 2h0m0 1h0m1-3h0m0 1h0m0 2h0m1-2h0m0 1h0m0 1h0m1-3h0m1-1h0m0 1h0m0 2h0m0 1h0m1-6h0m0 2h0m1 0h0m0 2h0m0 2h0m1-7h0m0 1h0m0 1h0m0 1h0m1-3h0m0 4h0m0 1h0m0 2h0m1-7h0m0 1h0m0 1h0m0 2h0m1-3h0m0 1h0m0 3h0m0 1h0m0 1h0m1-4h0m0 1h0m1 0h0m0 2h0m0 1h0m1-1h0m1-2h0m0 3h0m1-3h0m0 1h0m0 2h0m1-3h0m0 2h0m0 1h0m1-3h0m1 2h0m0 1h0m1-3h0m0 1h0m0 2h0m1-5h0m0 1h0m0 3h0m0 1h0m1-4h0m0 2h0m0 1h0m1-5h0m0 1h0m0 4h0m0 1h0m1-3h0m0 1h0m0 1h0m1-3h0m0 4h0m1-7h0m0 2h0m0 1h0m0 1h0m0 1h0m1-4h0m0 2h0m0 3h0m0 1h0m1-6h0m0 1h0m0 1h0m0 2h0m1-3h0m0 3h0m0 1h0m0 1h0m1-7h0m0 1h0m0 2h0m1-2h0m0 4h0m0 2h0m1-4h0m0 1h0m0 1h0m1 0h0m0 1h0m0 1h0m1-4h0m0 1h0m0 2h0m0 1h0m1-4h0m0 2h0m0 1h0m1-4h0m0 4h0m0 1h0m1-4h0m0 3h0m1-5h0m0 1h0m0 2h0m0 1h0m0 2h0m1-4h0m0 1h0m0 3h0m1-5h0m0 3h0m0 2h0m1-7h0m0 4h0m1-2h0m0 3h0m0 1h0m0 1h0m1-6h0m0 1h0m0 2h0m0 2h0m0 1h0m1-7h0m0 2h0m0 3h0m0 1h0m0 1h0m1-7h0m0 2h0m0 1h0m0 1h0m0 2h0m0 1h0m1-2h0m0 1h0m1-6h0m0 1h0m0 3h0m0 2h0m1-8h0m0 5h0m1-5h0m0 1h0m0 1h0m0 2h0m0 3h0m0 1h0m1-8h0m0 6h0m1-5h0m0 1h0m0 1h0m0 4h0m0 2h0m1-6h0m0 2h0m0 1h0m0 1h0m1-6h0m0 2h0m0 2h0m0 3h0m1-8h0m0 1h0m0 5h0m1-4h0m0 2h0m0 3h0m0 1h0m0 1h0m1-8h0m0 2h0m0 2h0m0 2h0m1-5h0m0 3h0m1-2h0m0 2h0m0 1h0m0 2h0m0 1h0m1-5h0m0 3h0m0 2h0m1-6h0m0 1h0m0 4h0m0 1h0m1-7h0m0 3h0m0 1h0m0 2h0m1-4h0m1 3h0m0 2h0m1-6h0m0 2h0m0 1h0m1 0h0m0 1h0m0 2h0m1-4h0m1-1h0m0 1h0m0 1h0m0 2h0m0 1h0m1-6h0m0 1h0m0 1h0m0 2h0m1-2h0m0 2h0m0 2h0m1-6h0m0 4h0m1-2h0m0 4h0m1-7h0m0 2h0m0 3h0m1-6h0m0 1h0m0 4h0m0 3h0m1-8h0m0 4h0m0 3h0m1-5h0m0 1h0m0 3h0m0 2h0m1-4h0m0 2h0m0 2h0m1-6h0m0 2h0m0 2h0m0 1h0m1-6h0m0 2h0m0 1h0m0 3h0m1-4h0m0 2h0m0 1h0m0 2h0m2-5h0m0 2h0m0 2h0m0 1h0m1-4h0m0 2h0m0 2h0m1-4h0m0 1h0m1 2h0m0 1h0m1-5h0m0 1h0m0 3h0m0 1h0m1-7h0m0 1h0m0 3h0m0 1h0m1-5h0m0 1h0m0 5h0m0 1h0m1-7h0m0 2h0m0 2h0m0 2h0m0 1h0m1-6h0m0 3h0m0 1h0m1-6h0m0 1h0m0 1h0m0 1h0m0 5h0m1-8h0m0 1h0m0 1h0m0 3h0m0 1h0m0 1h0m1-6h0m0 2h0m0 3h0m0 2h0m1-6h0m0 2h0m0 3h0m0 1h0m1-5h0m0 3h0m0 2h0m1-4h0m0 1h0m1-1h0m0 2h0m0 1h0m0 1h0m1-5h0m0 1h0m0 1h0m0 3h0m1-8h0m0 1h0m0 2h0m1-2h0m0 1h0m0 1h0m0 3h0m0 1h0m1-5h0m0 1h0m0 2h0m0 3h0m1-7h0m0 3h0m0 2h0m0 2h0m1-7h0m0 3h0m0 3h0m1-6h0m0 2h0m0 3h0m0 2h0m1-6h0m0 2h0m0 1h0m1-4h0m0 2h0m0 2h0m0 2h0m0 1h0m1-8h0m0 1h0m0 3h0m0 4h0m1-8h0m0 1h0m0 1h0m0 5h0m1-7h0m0 4h0m0 1h0m0 2h0m0 1h0m1-7h0m0 2h0m1 0h0m0 2h0m0 3h0m1-5h0m0 1h0m0 3h0m0 1h0m1-4h0m0 2h0m0 1h0m0 1h0m1-6h0m0 1h0m0 3h0m1-4h0m0 1h0m0 2h0m0 3h0m1-6h0m0 1h0m0 1h0m0 3h0m0 1h0m1-4h0m0 2h0m0 2h0m1-8h0m0 1h0m1 0h0m0 1h0m0 1h0m0 2h0m0 1h0m0 1h0m0 1h0m1-8h0m1 0h0m0 3h0m0 1h0m0 1h0m0 2h0m1-6h0m0 2h0m0 1h0m0 3h0m0 1h0m1-8h0m0 1h0m0 2h0m0 2h0m1-4h0m0 5h0m0 1h0m0 1h0m1-7h0m0 2h0m0 1h0m0 2h0m0 1h0m2-5h0m0 3h0m0 2h0m0 1h0m1-6h0m0 1h0m0 2h0m0 1h0m0 1h0m0 1h0m1-6h0m1 1h0m0 2h0m0 3h0m1-5h0m0 3h0m0 2h0m1-6h0m0 1h0m0 3h0m1-1h0m0 1h0m0 2h0m1-5h0m0 1h0m0 2h0m1 2h0m1-4h0m0 2h0m0 2h0m1-5h0m0 3h0m1 0h0m0 2h0m1-4h0m0 3h0m0 1h0m1 0h0m1-5h0m0 1h0m0 1h0m0 1h0m0 1h0m0 1h0m1-3h0m0 3h0m1-6h0m0 1h0m0 3h0m1-4h0m0 5h0m0 1h0m1-4h0m0 2h0m1-4h0m0 1h0m0 2h0m0 3h0m1-7h0m0 1h0m0 3h0m0 1h0m0 1h0m0 1h0m1-7h0m0 1h0m0 4h0m0 2h0m1-6h0m0 1h0m0 1h0m0 1h0m0 2h0m1-5h0m0 5h0m0 1h0m1-5h0m0 1h0m0 2h0m0 1h0m0 1h0m1-6h0m1 1h0m0 1h0m0 1h0m0 1h0m0 2h0m1-9h0m0 1h0m0 1h0m1-2h0m0 5h0m0 2h0m0 1h0m1-8h0m0 1h0m0 1h0m0 2h0m0 1h0m0 1h0m0 2h0m1-8h0m0 2h0m0 2h0m0 4h0m1-7h0m0 5h0m0 3h0m1-6h0m0 1h0m0 2h0m0 1h0m0 1h0m1-5h0m0 2h0m0 1h0m0 1h0m0 1h0m0 1h0m2-4h0m0 1h0m0 2h0m0 1h0m1-4h0m0 2h0m1-2h0m0 3h0m0 1h0m1-4h0m0 2h0m0 2h0m2-3h0m0 1h0m0 2h0m1-2h0m0 2h0m1-3h0m0 1h0m1 1h0m0 1h0m1-3h0m0 2h0m0 1h0m1-1h0m1-2h0m0 1h0m0 2h0m1-3h0m0 2h0m0 1h0m1-5h0m0 5h0m1-5h0m0 1h0m0 2h0m0 1h0m1 1h0m1-5h0m0 1h0m0 1h0m0 2h0m0 1h0m1-5h0m0 2h0m0 1h0m1 1h0m0 1h0m1-7h0m0 1h0m0 1h0m0 3h0m0 1h0m1-5h0m0 2h0m0 2h0m0 2h0m1-5h0m0 3h0m0 1h0m0 1h0m1-6h0m1 1h0m0 2h0m0 1h0m0 1h0m0 1h0m1-6h0m0 1h0m0 1h0m0 3h0m0 1h0m1-7h0m0 2h0m1-3h0m0 5h0m0 1h0m0 1h0m1-8h0m0 3h0m0 5h0m1-8h0m0 2h0m0 1h0m0 2h0m0 2h0m1-6h0m0 1h0m0 1h0m0 2h0m0 3h0m0 1h0m1-4h0m0 1h0m0 3h0m1-5h0m0 4h0m1-4h0m0 2h0m0 3h0m1-1h0m0 1h0m1-6h0m0 1h0m0 1h0m0 2h0m1-4h0m0 1h0m0 1h0m0 1h0m0 2h0m1-4h0m0 4h0m1-3h0m0 1h0m0 3h0m1-5h0m0 4h0m0 1h0m1-6h0m0 3h0m0 1h0m1-5h0m0 3h0m0 1h0m0 3h0m1-6h0m0 2h0m0 3h0m0 1h0m1-6h0m0 3h0m0 3h0m1-6h0m0 1h0m0 3h0m1-5h0m0 3h0m0 3h0m0 1h0m1-7h0m0 1h0m0 1h0m0 1h0m0 2h0m0 2h0m1-1h0m0 1h0m1-7h0m0 1h0m0 3h0m0 1h0m0 2h0m1-4h0m0 2h0m0 1h0m1-6h0m0 1h0m0 4h0m0 1h0m0 1h0m1-6h0m0 1h0m0 2h0m0 1h0m1-5h0m0 1h0m0 3h0m0 3h0m1-5h0m0 3h0m1-4h0m0 1h0m0 2h0m0 1h0m0 2h0m1-6h0m0 5h0m1-2h0m0 1h0m0 2h0m1-8h0m0 1h0m0 2h0m0 4h0m1-8h0m0 3h0m0 2h0m0 1h0m1-6h0m0 4h0m0 3h0m0 1h0m1-6h0m1 3h0m0 2h0m0 1h0m0 1h0m1-7h0m0 1h0m0 1h0m1 0h0m0 2h0m0 3h0m1-4h0m0 1h0m0 2h0m0 1h0m1-6h0m0 3h0m0 2h0m1-7h0m0 2h0m0 3h0m0 3h0m1-7h0m0 2h0m0 5h0m1-6h0m0 1h0m0 1h0m0 2h0m0 1h0m1-3h0m0 2h0m0 1h0m0 1h0m1-6h0m0 1h0m0 5h0m1-7h0m0 1h0m0 2h0m0 2h0m0 2h0m1-5h0m0 2h0m0 3h0m1-6h0m0 1h0m0 3h0m0 1h0m1-6h0m0 3h0m0 2h0m0 2h0m1-7h0m0 1h0m0 1h0m0 1h0m0 3h0m0 1h0m1-5h0m1-1h0m0 3h0m0 2h0m0 1h0m1-5h0m0 3h0m0 1h0m0 1h0m1-5h0m1 0h0m0 1h0m0 2h0m0 2h0m1-1h0m1-3h0m0 1h0m0 3h0m1-3h0m1-1h0m0 1h0m0 2h0m0 1h0m1-4h0m0 3h0m0 1h0m1-3h0m0 1h0m1 2h0m1-3h0m0 2h0m0 1h0m1-4h0m0 1h0m1-1h0m0 3h0m0 1h0m1-5h0m0 2h0m1-1h0m0 3h0m0 1h0m1-4h0m0 1h0m0 2h0m0 1h0m2-4h0m0 1h0m0 3h0m1-3h0m0 1h0m0 1h0m0 1h0m1-5h0m0 2h0m0 1h0m0 2h0m1-6h0m0 2h0m0 3h0m0 1h0m1-3h0m0 2h0m1-4h0m0 1h0m0 2h0m0 2h0m1-4h0m0 1h0m0 2h0m0 1h0m1-5h0m0 2h0m0 1h0m1-3h0m0 5h0m1-4h0m0 3h0m0 1h0m1-5h0m0 2h0m1-2h0m0 4h0m0 1h0m1-6h0m0 1h0m0 3h0m1-4h0m0 2h0m0 4h0m1-5h0m0 3h0m0 1h0m0 1h0m1-6h0m0 2h0m1-3h0m0 2h0m0 2h0m0 1h0m0 2h0m1-7h0m0 1h0m0 3h0m0 3h0m1-7h0m0 1h0m0 2h0m0 3h0m0 1h0m1-6h0m0 1h0m0 2h0m1 1h0m0 2h0m1-4h0m0 4h0m1-3h0m0 2h0m1-2h0m0 3h0m1-2h0m0 1h0m1-2h0m0 1h0m0 2h0m1-4h0m0 4h0m1-5h0m0 2h0m0 2h0m1-5h0m0 1h0m0 1h0m0 2h0m0 2h0m1-7h0m0 2h0m0 5h0m1-7h0m0 4h0m0 3h0m1-9h0m0 1h0m0 1h0m0 3h0m0 1h0m0 2h0m0 1h0m1-9h0m0 1h0m0 3h0m0 3h0m0 2h0m1-9h0m0 1h0m0 1h0m0 2h0m0 4h0m1-5h0m0 1h0m0 2h0m0 2h0m1-6h0m0 4h0m0 3h0m1-7h0m0 1h0m0 2h0m1-1h0m0 3h0m0 1h0m0 1h0m1-6h0m0 1h0m0 1h0m0 1h0m0 1h0m1-5h0m0 6h0m0 1h0m1-6h0m0 3h0m0 3h0m1-7h0m0 2h0m0 4h0m1-5h0m0 4h0m0 2h0m1-5h0m0 1h0m0 1h0m0 2h0m0 1h0m1-6h0m0 4h0m1-5h0m0 1h0m0 3h0m0 3h0m1-7h0m0 1h0m0 2h0m0 1h0m1-6h0m0 1h0m0 5h0m0 2h0m0 1h0m1-9h0m0 1h0m0 2h0m0 2h0m0 2h0m0 1h0m0 1h0m1-7h0m0 7h0m1-8h0m0 1h0m0 2h0m0 1h0m0 2h0m0 1h0m1-7h0m0 1h0m0 4h0m0 1h0m1-2h0m0 3h0m0 1h0m1-7h0m0 1h0m0 3h0m0 3h0m1-7h0m0 2h0m0 5h0m1-6h0m0 2h0m0 2h0m0 1h0m1-5h0m0 3h0m0 1h0m1-4h0m0 1h0m0 4h0m0 1h0m1-6h0m0 1h0m0 1h0m0 3h0m1-1h0m0 2h0m1-5h0m0 3h0m0 1h0m0 1h0m1-4h0m0 3h0m1-3h0m0 1h0m0 2h0m0 1h0m1-5h0m0 1h0m0 1h0m0 3h0m1-3h0m0 2h0m0 1h0m1-5h0m0 4h0m0 1h0m1-7h0m0 1h0m0 1h0m0 2h0m0 1h0m0 1h0m0 1h0m1-7h0m0 5h0m0 1h0m0 1h0m1-8h0m0 1h0m0 1h0m0 2h0m0 1h0m0 3h0m1-8h0m0 2h0m0 4h0m1-5h0m0 1h0m0 2h0m0 3h0m1-2h0m1-3h0m0 1h0m0 3h0m0 1h0m0 1h0m1-6h0m0 1h0m0 1h0m0 4h0m1-5h0m0 2h0m0 1h0m0 1h0m1-2h0m0 1h0m0 1h0m0 1h0m1-6h0m0 1h0m0 3h0m0 1h0m1-4h0m0 2h0m0 1h0m0 1h0m1-6h0m0 2h0m0 2h0m1-2h0m0 3h0m0 1h0m0 1h0m1-6h0m0 1h0m0 3h0m0 2h0m1-8h0m0 2h0m0 2h0m0 4h0m1-5h0m0 1h0m0 3h0m0 1h0m1-7h0m0 1h0m0 4h0m0 2h0m1-6h0m0 1h0m0 3h0m0 1h0m1-5h0m0 3h0m1-1h0m0 3h0m0 1h0m1-6h0m0 4h0m1-2h0m0 4h0m1-6h0m0 2h0m0 1h0m0 2h0m0 1h0m2-6h0m0 1h0m0 1h0m0 2h0m0 2h0m1-6h0m0 4h0m0 1h0m0 1h0m1-4h0m1-1h0m0 1h0m0 2h0m0 1h0m0 1h0m1-5h0m1-1h0m0 4h0m0 1h0m0 1h0m1-6h0m0 2h0m0 4h0m1-2h0m0 2h0m1-5h0m0 2h0m0 1h0m0 2h0m1-6h0m0 1h0m0 1h0m0 3h0m1-2h0m0 2h0m0 1h0m1-5h0m0 3h0m0 2h0m1-4h0m0 2h0m0 2h0m1-7h0m0 1h0m0 1h0m0 2h0m0 1h0m1-6h0m0 1h0m0 1h0m0 3h0m0 2h0m1-7h0m0 5h0m0 1h0m0 2h0m1-8h0m0 1h0m0 1h0m0 1h0m0 3h0m1-4h0m0 3h0m0 1h0m0 2h0m1-2h0m1-6h0m0 1h0m0 1h0m0 1h0m0 1h0m0 3h0m0 1h0m1-9h0m0 2h0m1-2h0m0 2h0m0 2h0m0 2h0m0 2h0m0 1h0m1-8h0m0 1h0m0 2h0m0 1h0m0 2h0m0 2h0m1-8h0m0 5h0m1-4h0m0 1h0m0 3h0m0 1h0m0 1h0m0 1h0m1-5h0m0 1h0m0 3h0m0 1h0m1-1h0m0 1h0m1-4h0m0 1h0m1 0h0m0 1h0m0 2h0m1-1h0m0 1h0m1-4h0m0 2h0m1-2h0m0 1h0m0 1h0m0 1h0m0 1h0m1-4h0m1 1h0m0 2h0m0 1h0m1-4h0m0 1h0m0 1h0m1-3h0m0 4h0m0 1h0m1-6h0m0 1h0m0 1h0m1 0h0m0 2h0m0 2h0m1-3h0m0 1h0m0 2h0m1-1h0m1-2h0m0 3h0m1-2h0m0 2h0m1-5h0m0 2h0m1-2h0m0 4h0m0 1h0m1-4h0m0 1h0m0 3h0m1-5h0m0 3h0m0 1h0m1-4h0m0 5h0m1-4h0m0 1h0m0 2h0m0 1h0m1-3h0m1 1h0m0 1h0m0 1h0m1-3h0m0 1h0m0 1h0m0 1h0m1-3h0m0 1h0m0 2h0m1-1h0m0 1h0m1-4h0m0 1h0m0 2h0m1 1h0m1-5h0m0 1h0m0 3h0m0 1h0m1-6h0m0 1h0m0 2h0m0 2h0m1-5h0m0 3h0m0 2h0m0 1h0m1-4h0m0 1h0m0 1h0m0 2h0m1-4h0m0 4h0m1-6h0m0 1h0m0 2h0m0 3h0m1-6h0m0 3h0m0 1h0m0 1h0m0 1h0m1-5h0m0 3h0m0 1h0m1-6h0m0 4h0m1-5h0m0 2h0m0 2h0m0 2h0m0 2h0m1-3h0m0 3h0m1-9h0m0 2h0m0 1h0m0 1h0m1 1h0m0 3h0m0 1h0m1-8h0m0 1h0m0 1h0m0 4h0m0 2h0m1-5h0m0 5h0m1-3h0m0 1h0m1-3h0m0 4h0m0 1h0m1-3h0m0 1h0m1-3h0m0 5h0m1-4h0m0 1h0m0 1h0m0 1h0" stroke="#000" stroke-width="2.7" stroke-linecap="round" fill="none"/>
<path transform="translate(.5 .5)" d="M253 999h0m40-2h0m9 2h0m26-1h0m239 1h0m55 1h0m64-5h0m73 4h0m14 1h0m21 1h0m38-2h0m20 1h0m59-3h0m73 4h0m26-6h0m28 3h0m10-2h0m34-2h0m32 1h0m20 1h0m34 0h0" stroke="#000" stroke-width="2.7" stroke-linecap="round" fill="none"/>
<path transform="translate(.5 .5)" d="M192 992h0m218-5h0m25-20h0m193 13h0m39 10h0m171-1h0m244-15h0m62 19h0" stroke="#f00" stroke-width="2.7" stroke-linecap="round" fill="none"/>
<path d="M178.5 956.3l1.45 2.90h-2.90zM182.5 956.3l1.45 2.90h-2.90zM192.5 956.3l1.45 2.90h-2.90zM202.5 956.3l1.45 2.90h-2.90zM227.5 956.3l1.45 2.90h-2.90zM236.5 956.3l1.45 2.90h-2.90zM252.5 956.3l1.45 2.90h-2.90zM271.5 956.3l1.45 2.90h-2.90zM276.5 956.3l1.45 2.90h-2.90zM293.5 956.3l1.45 2.90h-2.90zM297.5 956.3l1.45 2.90h-2.90zM302.5 956.3l1.45 2.90h-2.90zM328.5 956.3l1.45 2.90h-2.90zM330.5 956.3l1.45 2.90h-2.90zM392.5 956.3l1.45 2.90h-2.90zM410.5 956.3l1.45 2.90h-2.90zM435.5 956.3l1.45 2.90h-2.90zM475.5 956.3l1.45 2.90h-2.90zM486.5 956.3l1.45 2.90h-2.90zM499.5 956.3l1.45 2.90h-2.90zM504.5 956.3l1.45 2.90h-2.90zM513.5 956.3l1.45 2.90h-2.90zM567.5 956.3l1.45 2.90h-2.90zM593.5 956.3l1.45 2.90h-2.90zM619.5 956.3l1.45 2.90h-2.90zM622.5 956.3l1.45 2.90h-2.90zM628.5 956.3l1.45 2.90h-2.90zM658.5 956.3l1.45 2.90h-2.90zM668.5 956.3l1.45 2.90h-2.90zM686.5 956.3l1.45 2.90h-2.90zM714.5 956.3l1.45 2.90h-2.90zM720.5 956.3l1.45 2.90h-2.90zM722.5 956.3l1.45 2.90h-2.90zM734.5 956.3l1.45 2.90h-2.90zM750.5 956.3l1.45 2.90h-2.90zM759.5 956.3l1.45 2.90h-2.90zM773.5 956.3l1.45 2.90h-2.90zM790.5 956.3l1.45 2.90h-2.90zM794.5 956.3l1.45 2.90h-2.90zM821.5 956.3l1.45 2.90h-2.90zM832.5 956.3l1.45 2.90h-2.90zM838.5 956.3l1.45 2.90h-2.90zM842.5 956.3l1.45 2.90h-2.90zM852.5 956.3l1.45 2.90h-2.90zM911.5 956.3l1.45 2.90h-2.90zM933.5 956.3l1.45 2.90h-2.90zM952.5 956.3l1.45 2.90h-2.90zM954.5 956.3l1.45 2.90h-2.90zM962.5 956.3l1.45 2.90h-2.90zM984.5 956.3l1.45 2.90h-2.90zM1010.5 956.3l1.45 2.90h-2.90zM1014.5 956.3l1.45 2.90h-2.90zM1038.5 956.3l1.45 2.90h-2.90zM1048.5 956.3l1.45 2.90h-2.90zM1074.5 956.3l1.45 2.90h-2.90zM1082.5 956.3l1.45 2.90h-2.90zM1108.5 956.3l1.45 2.90h-2.90zM1114.5 956.3l1.45 2.90h-2.90zM1134.5 956.3l1.45 2.90h-2.90zM1144.5 956.3l1.45 2.90h-2.90zM1148.5 956.3l1.45 2.90h-2.90zM1166.5 956.3l1.45 2.90h-2.90zM1168.5 956.3l1.45 2.90h-2.90zM1207.5 956.3l1.45 2.90h-2.90zM1242.5 956.3l1.45 2.90h-2.90zM1261.5 956.3l1.45 2.90h-2.90zM1264.5 956.3l1.45 2.90h-2.90z" fill="#f00" stroke="#f00" stroke-width="0.9" stroke-linejoin="round"/>
<path d="M105.5 1009.5H1485.5" stroke="#b0b0b0" stroke-width="1.11" stroke-dasharray="1.11 1.83"/>
<path d="M105.5 983.5H1485.5" stroke="#b0b0b0" stroke-width="1.11" stroke-dasharray="1.11 1.83"/>
<path d="M105.5 957.5H1485.5" stroke="#b0b0b0" stroke-width="1.11" stroke-dasharray="1.11 1.83"/>
<path d="M162.0 1011.5V954.4" stroke="#800080" stroke-width="2.08" stroke-dasharray="2.08 3.44" fill="none"/><path d="M1302.9 1011.5V954.4" stroke="#800080" stroke-width="2.08" stroke-dasharray="2.08 3.44" fill="none"/>
</g>
<rect x="105.5" y="725.5" width="1380.0" height="286.0" fill="none" stroke="#000" stroke-width="1.11"/>
<path d="M105.5 954.4H1485.5" stroke="#000" stroke-width="1.11"/>
<path d="M162.5 1011.5v4.86" stroke="#000" stroke-width="1.11"/><text x="163.10" y="1032.00" font-size="13.70" text-anchor="middle">0</text><path d="M356.5 1011.5v4.86" stroke="#000" stroke-width="1.11"/><text x="356.63" y="1032.00" font-size="13.70" text-anchor="middle">5000</text><path d="M551.5 1011.5v4.86" stroke="#000" stroke-width="1.11"/><text x="550.97" y="1032.00" font-size="13.70" text-anchor="middle">10000</text><path d="M745.5 1011.5v4.86" stroke="#000" stroke-width="1.11"/><text x="745.30" y="1032.00" font-size="13.70" text-anchor="middle">15000</text><path d="M939.5 1011.5v4.86" stroke="#000" stroke-width="1.11"/><text x="939.63" y="1032.00" font-size="13.70" text-anchor="middle">20000</text><path d="M1134.5 1011.5v4.86" stroke="#000" stroke-width="1.11"/><text x="1133.97" y="1032.00" font-size="13.70" text-anchor="middle">25000</text><path d="M1328.5 1011.5v4.86" stroke="#000" stroke-width="1.11"/><text x="1328.30" y="1032.00" font-size="13.70" text-anchor="middle">30000</text>
<path d="M105.5 758.50h-4.86" stroke="#000" stroke-width="1.11"/>
<text x="95.20" y="763.85" font-size="13.70" text-anchor="end">not Kalman</text>
<path d="M105.5 791.50h-4.86" stroke="#000" stroke-width="1.11"/>
<text x="95.20" y="795.50" font-size="13.70" text-anchor="end">not track</text>
<path d="M105.5 823.50h-4.86" stroke="#000" stroke-width="1.11"/>
<text x="95.20" y="829.15" font-size="13.70" text-anchor="end">Sat. pixel.</text>
<path d="M105.5 856.50h-4.86" stroke="#000" stroke-width="1.11"/>
<text x="95.20" y="861.80" font-size="13.70" text-anchor="end">Ion. rad.</text>
<path d="M105.5 889.50h-4.86" stroke="#000" stroke-width="1.11"/>
<text x="95.20" y="894.45" font-size="13.70" text-anchor="end">dr &gt; 5</text>
<path d="M105.5 921.50h-4.86" stroke="#000" stroke-width="1.11"/>
<text x="95.20" y="927.10" font-size="13.70" text-anchor="end">OBS not OK</text>
<path d="M105.5 1009.50h-4.86" stroke="#000" stroke-width="1.11"/>
<text x="95.30" y="1014.55" font-size="13.70" text-anchor="end">0</text>
<path d="M105.5 983.50h-4.86" stroke="#000" stroke-width="1.11"/>
<text x="95.30" y="988.55" font-size="13.70" text-anchor="end">5</text>
<path d="M105.5 957.50h-4.86" stroke="#000" stroke-width="1.11"/>
<text x="95.30" y="962.55" font-size="13.70" text-anchor="end">10</text>
<path d="M105.5 996.50h-2.78" stroke="#000" stroke-width="0.83"/>
<path d="M105.5 970.50h-2.78" stroke="#000" stroke-width="0.83"/>
<text transform="translate(68.9 983.5) rotate(-90)" font-size="13.70" text-anchor="middle">dr</text>
</svg></body></html>
